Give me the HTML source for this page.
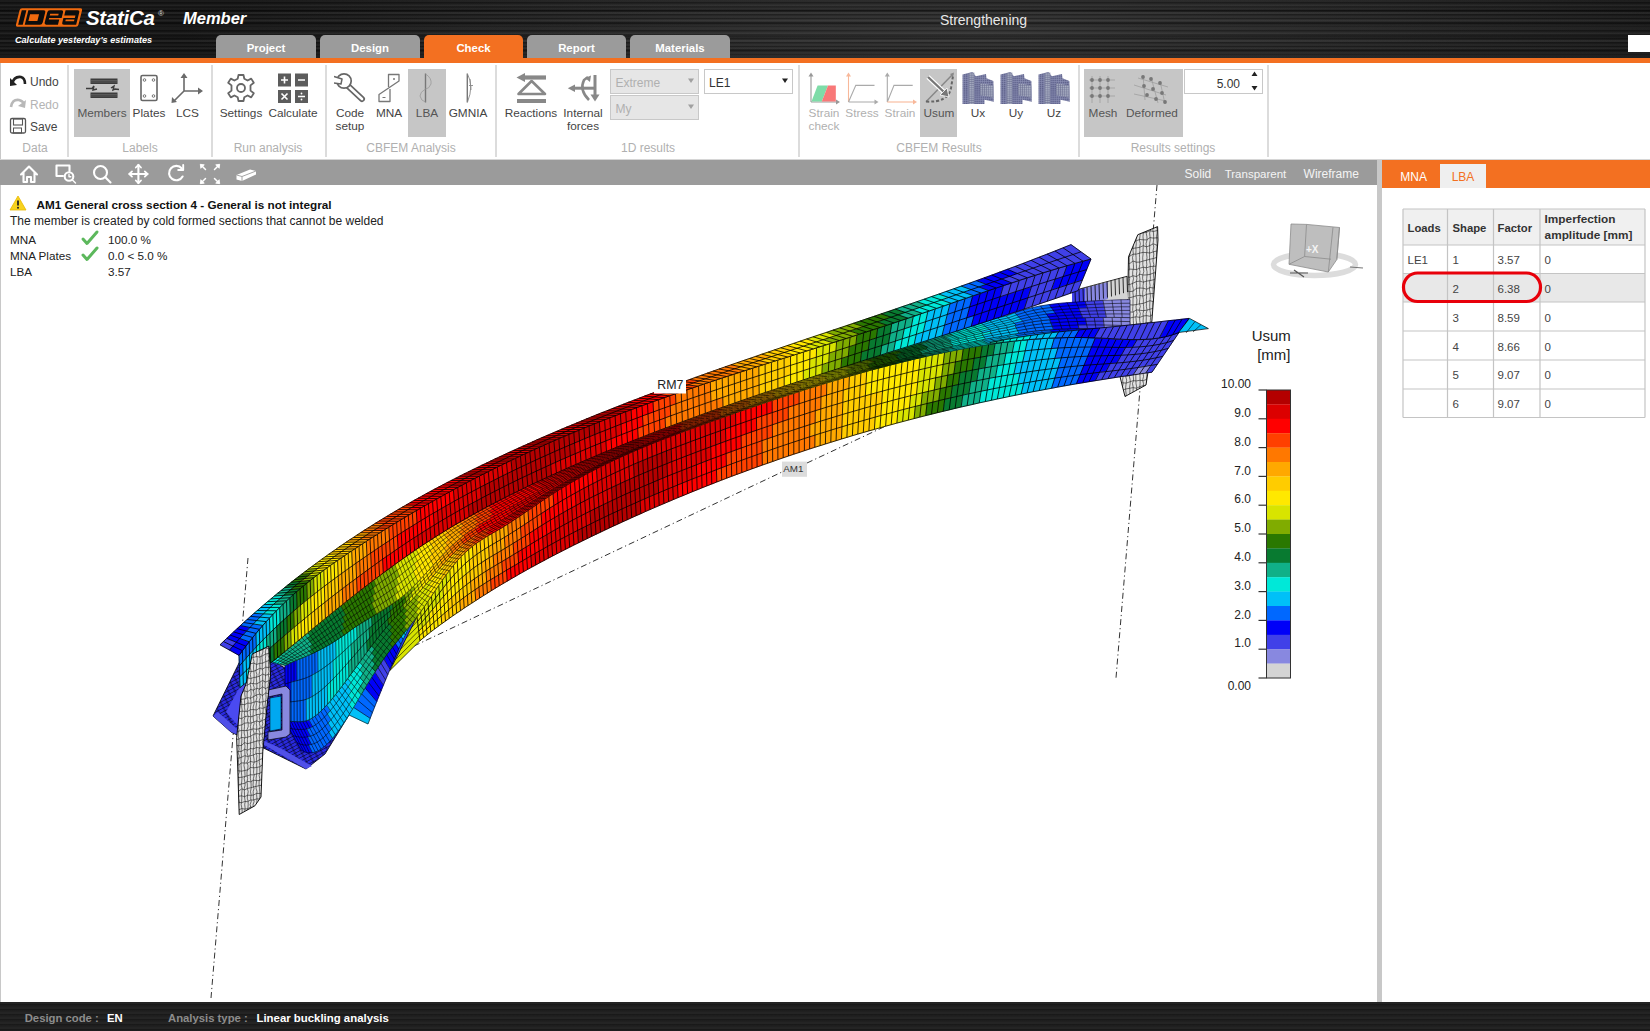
<!DOCTYPE html>
<html><head><meta charset="utf-8"><title>IDEA StatiCa Member</title>
<style>
html,body{margin:0;padding:0;width:1650px;height:1031px;overflow:hidden;background:#fff;}
body{position:relative;font-family:"Liberation Sans", sans-serif;}
.t{position:absolute;white-space:nowrap;}
svg{overflow:visible;}
</style></head><body>
<div style="position:absolute;left:0;top:0;width:1650px;height:58px;background:repeating-linear-gradient(180deg, rgba(0,0,0,0) 0px, rgba(255,255,255,0.05) 1px, rgba(0,0,0,0.25) 2.5px, rgba(0,0,0,0) 4px), repeating-linear-gradient(180deg, rgba(0,0,0,0) 0px, rgba(0,0,0,0) 5px, rgba(255,255,255,0.07) 6px, rgba(0,0,0,0) 7px), repeating-linear-gradient(180deg, rgba(0,0,0,0) 0px, rgba(0,0,0,0) 9px, rgba(0,0,0,0.35) 10.5px, rgba(0,0,0,0) 13px), radial-gradient(ellipse 800px 70px at 980px 30px, #363636 0%, #262626 50%, #161616 100%);"></div>
<div style="position:absolute;left:216px;top:35px;width:100px;height:24px;background:#9b9b9b;border-radius:5px 5px 0 0;"></div>
<div class="t" style="left:-34.0px;width:600px;text-align:center;top:42.6px;font-size:11.4px;line-height:11.4px;color:#fff;font-weight:bold;font-style:normal;">Project</div>
<div style="position:absolute;left:320px;top:35px;width:100px;height:24px;background:#9b9b9b;border-radius:5px 5px 0 0;"></div>
<div class="t" style="left:70.0px;width:600px;text-align:center;top:42.6px;font-size:11.4px;line-height:11.4px;color:#fff;font-weight:bold;font-style:normal;">Design</div>
<div style="position:absolute;left:424px;top:35px;width:99px;height:24px;background:#f37021;border-radius:5px 5px 0 0;"></div>
<div class="t" style="left:173.5px;width:600px;text-align:center;top:42.6px;font-size:11.4px;line-height:11.4px;color:#fff;font-weight:bold;font-style:normal;">Check</div>
<div style="position:absolute;left:527px;top:35px;width:99px;height:24px;background:#9b9b9b;border-radius:5px 5px 0 0;"></div>
<div class="t" style="left:276.5px;width:600px;text-align:center;top:42.6px;font-size:11.4px;line-height:11.4px;color:#fff;font-weight:bold;font-style:normal;">Report</div>
<div style="position:absolute;left:630px;top:35px;width:100px;height:24px;background:#9b9b9b;border-radius:5px 5px 0 0;"></div>
<div class="t" style="left:380.0px;width:600px;text-align:center;top:42.6px;font-size:11.4px;line-height:11.4px;color:#fff;font-weight:bold;font-style:normal;">Materials</div>
<div style="position:absolute;left:0px;top:58px;width:1650px;height:5px;background:#f37021;"></div>
<div style="position:absolute;left:1628px;top:35px;width:22px;height:17px;background:#fff;"></div>
<div class="t" style="left:683.5px;width:600px;text-align:center;top:12.5px;font-size:14px;line-height:14px;color:#e8e8e8;font-weight:normal;font-style:normal;">Strengthening</div>
<svg style="position:absolute;left:0;top:0" width="260" height="58" viewBox="0 0 260 58">
<g transform="matrix(1 0 -0.25 1 2.125 0)">
<rect x="20" y="8.2" width="62.5" height="18.6" rx="2" fill="#f06a0f"/>
<g fill="#0d0d0d">
<rect x="22.2" y="10.3" width="4.6" height="14.4"/>
<path fill-rule="evenodd" d="M28.8 10.3 L44 10.3 Q46.2 10.3 46.2 12.5 L46.2 22.5 Q46.2 24.7 44 24.7 L28.8 24.7 Z M31.5 14.2 L40.5 14.2 L40.5 21 L31.5 21 Z"/>
<path fill-rule="evenodd" d="M50.3 10.3 L62 10.3 Q64 10.3 64 12.3 L64 18 L51.5 18 L51.5 19.5 L62 19.5 L62 24.7 L50.3 24.7 Q48.2 24.7 48.2 22.6 L48.2 12.4 Q48.2 10.3 50.3 10.3 Z M51.5 13.7 L60 13.7 L60 15.6 L51.5 15.6 Z"/>
<path fill-rule="evenodd" d="M66 10.3 L78 10.3 Q80.2 10.3 80.2 12.5 L80.2 24.7 L68 24.7 Q65.8 24.7 65.8 22.5 L65.8 18 L77.2 18 L77.2 15.5 L66 15.5 Z M68.5 19.5 L77.2 19.5 L77.2 21.3 L68.5 21.3 Z"/>
</g>
</g>
</svg>
<div class="t" style="left:86.0px;top:7.8px;font-size:20.5px;line-height:20.5px;color:#fff;font-weight:bold;font-style:italic;letter-spacing:-0.3px;">StatiCa</div>
<div class="t" style="left:158.0px;top:10.0px;font-size:8px;line-height:8px;color:#ddd;font-weight:normal;font-style:normal;">&reg;</div>
<div class="t" style="left:183.0px;top:10.1px;font-size:16.5px;line-height:16.5px;color:#fff;font-weight:bold;font-style:italic;">Member</div>
<div class="t" style="left:15.0px;top:36.0px;font-size:9.1px;line-height:9.1px;color:#fff;font-weight:bold;font-style:italic;">Calculate yesterday&#39;s estimates</div>
<div style="position:absolute;left:0px;top:63px;width:1650px;height:96px;background:#fff;"></div>
<div style="position:absolute;left:0px;top:159px;width:1650px;height:1px;background:#d6d6d6;"></div>
<div style="position:absolute;left:0px;top:63px;width:1px;height:96px;background:#c8c8c8;"></div>
<div style="position:absolute;left:67px;top:65px;width:2px;height:92px;background:#dcdcdc;"></div>
<div style="position:absolute;left:211px;top:65px;width:2px;height:92px;background:#dcdcdc;"></div>
<div style="position:absolute;left:325px;top:65px;width:2px;height:92px;background:#dcdcdc;"></div>
<div style="position:absolute;left:495px;top:65px;width:2px;height:92px;background:#dcdcdc;"></div>
<div style="position:absolute;left:798px;top:65px;width:2px;height:92px;background:#dcdcdc;"></div>
<div style="position:absolute;left:1078px;top:65px;width:2px;height:92px;background:#dcdcdc;"></div>
<div style="position:absolute;left:1267px;top:65px;width:2px;height:92px;background:#dcdcdc;"></div>
<div style="position:absolute;left:74px;top:69px;width:56px;height:68px;background:#c6c6c6;"></div>
<div style="position:absolute;left:408px;top:69px;width:38px;height:68px;background:#c6c6c6;"></div>
<div style="position:absolute;left:920px;top:69px;width:37px;height:68px;background:#c6c6c6;"></div>
<div style="position:absolute;left:1084px;top:69px;width:99px;height:68px;background:#c6c6c6;"></div>
<div class="t" style="left:-265.0px;width:600px;text-align:center;top:141.9px;font-size:12px;line-height:12px;color:#b0b0b0;font-weight:normal;font-style:normal;">Data</div>
<div class="t" style="left:-160.0px;width:600px;text-align:center;top:141.9px;font-size:12px;line-height:12px;color:#b0b0b0;font-weight:normal;font-style:normal;">Labels</div>
<div class="t" style="left:-32.0px;width:600px;text-align:center;top:141.9px;font-size:12px;line-height:12px;color:#b0b0b0;font-weight:normal;font-style:normal;">Run analysis</div>
<div class="t" style="left:111.0px;width:600px;text-align:center;top:141.9px;font-size:12px;line-height:12px;color:#b0b0b0;font-weight:normal;font-style:normal;">CBFEM Analysis</div>
<div class="t" style="left:348.0px;width:600px;text-align:center;top:141.9px;font-size:12px;line-height:12px;color:#b0b0b0;font-weight:normal;font-style:normal;">1D results</div>
<div class="t" style="left:639.0px;width:600px;text-align:center;top:141.9px;font-size:12px;line-height:12px;color:#b0b0b0;font-weight:normal;font-style:normal;">CBFEM Results</div>
<div class="t" style="left:873.0px;width:600px;text-align:center;top:141.9px;font-size:12px;line-height:12px;color:#b0b0b0;font-weight:normal;font-style:normal;">Results settings</div>
<div class="t" style="left:30.0px;top:76.4px;font-size:12px;line-height:12px;color:#444;font-weight:normal;font-style:normal;">Undo</div>
<div class="t" style="left:30.0px;top:98.6px;font-size:12px;line-height:12px;color:#b4b4b4;font-weight:normal;font-style:normal;">Redo</div>
<div class="t" style="left:30.0px;top:121.0px;font-size:12px;line-height:12px;color:#444;font-weight:normal;font-style:normal;">Save</div>
<div class="t" style="left:-198.0px;width:600px;text-align:center;top:107.5px;font-size:11.8px;line-height:11.8px;color:#555;font-weight:normal;font-style:normal;">Members</div>
<div class="t" style="left:-151.0px;width:600px;text-align:center;top:107.5px;font-size:11.8px;line-height:11.8px;color:#444;font-weight:normal;font-style:normal;">Plates</div>
<div class="t" style="left:-112.5px;width:600px;text-align:center;top:107.5px;font-size:11.8px;line-height:11.8px;color:#444;font-weight:normal;font-style:normal;">LCS</div>
<div class="t" style="left:-59.0px;width:600px;text-align:center;top:107.5px;font-size:11.8px;line-height:11.8px;color:#444;font-weight:normal;font-style:normal;">Settings</div>
<div class="t" style="left:-7.0px;width:600px;text-align:center;top:107.5px;font-size:11.8px;line-height:11.8px;color:#444;font-weight:normal;font-style:normal;">Calculate</div>
<div class="t" style="left:89.0px;width:600px;text-align:center;top:107.5px;font-size:11.8px;line-height:11.8px;color:#444;font-weight:normal;font-style:normal;">MNA</div>
<div class="t" style="left:127.0px;width:600px;text-align:center;top:107.5px;font-size:11.8px;line-height:11.8px;color:#555;font-weight:normal;font-style:normal;">LBA</div>
<div class="t" style="left:168.0px;width:600px;text-align:center;top:107.5px;font-size:11.8px;line-height:11.8px;color:#444;font-weight:normal;font-style:normal;">GMNIA</div>
<div class="t" style="left:231.0px;width:600px;text-align:center;top:107.5px;font-size:11.8px;line-height:11.8px;color:#444;font-weight:normal;font-style:normal;">Reactions</div>
<div class="t" style="left:562.0px;width:600px;text-align:center;top:107.5px;font-size:11.8px;line-height:11.8px;color:#b0b0b0;font-weight:normal;font-style:normal;">Stress</div>
<div class="t" style="left:600.0px;width:600px;text-align:center;top:107.5px;font-size:11.8px;line-height:11.8px;color:#b0b0b0;font-weight:normal;font-style:normal;">Strain</div>
<div class="t" style="left:639.0px;width:600px;text-align:center;top:107.5px;font-size:11.8px;line-height:11.8px;color:#555;font-weight:normal;font-style:normal;">Usum</div>
<div class="t" style="left:678.0px;width:600px;text-align:center;top:107.5px;font-size:11.8px;line-height:11.8px;color:#444;font-weight:normal;font-style:normal;">Ux</div>
<div class="t" style="left:716.0px;width:600px;text-align:center;top:107.5px;font-size:11.8px;line-height:11.8px;color:#444;font-weight:normal;font-style:normal;">Uy</div>
<div class="t" style="left:754.0px;width:600px;text-align:center;top:107.5px;font-size:11.8px;line-height:11.8px;color:#444;font-weight:normal;font-style:normal;">Uz</div>
<div class="t" style="left:803.0px;width:600px;text-align:center;top:107.5px;font-size:11.8px;line-height:11.8px;color:#555;font-weight:normal;font-style:normal;">Mesh</div>
<div class="t" style="left:852.0px;width:600px;text-align:center;top:107.5px;font-size:11.8px;line-height:11.8px;color:#555;font-weight:normal;font-style:normal;">Deformed</div>
<div class="t" style="left:50.0px;width:600px;text-align:center;top:107.5px;font-size:11.8px;line-height:11.8px;color:#444;font-weight:normal;font-style:normal;">Code</div>
<div class="t" style="left:50.0px;width:600px;text-align:center;top:120.5px;font-size:11.8px;line-height:11.8px;color:#444;font-weight:normal;font-style:normal;">setup</div>
<div class="t" style="left:283.0px;width:600px;text-align:center;top:107.5px;font-size:11.8px;line-height:11.8px;color:#444;font-weight:normal;font-style:normal;">Internal</div>
<div class="t" style="left:283.0px;width:600px;text-align:center;top:120.5px;font-size:11.8px;line-height:11.8px;color:#444;font-weight:normal;font-style:normal;">forces</div>
<div class="t" style="left:524.0px;width:600px;text-align:center;top:107.5px;font-size:11.8px;line-height:11.8px;color:#b0b0b0;font-weight:normal;font-style:normal;">Strain</div>
<div class="t" style="left:524.0px;width:600px;text-align:center;top:120.5px;font-size:11.8px;line-height:11.8px;color:#b0b0b0;font-weight:normal;font-style:normal;">check</div>
<div style="position:absolute;left:610px;top:69px;width:89px;height:25px;background:#e6e6e6;box-sizing:border-box;border:1px solid #c8c8c8;"></div>
<div style="position:absolute;left:610px;top:95px;width:89px;height:25px;background:#e6e6e6;box-sizing:border-box;border:1px solid #c8c8c8;"></div>
<div style="position:absolute;left:704px;top:69px;width:89px;height:25px;background:#fff;box-sizing:border-box;border:1px solid #c8c8c8;"></div>
<div class="t" style="left:615.5px;top:77.1px;font-size:12px;line-height:12px;color:#b0b0b0;font-weight:normal;font-style:normal;">Extreme</div>
<div class="t" style="left:615.5px;top:103.1px;font-size:12px;line-height:12px;color:#b0b0b0;font-weight:normal;font-style:normal;">My</div>
<div class="t" style="left:709.0px;top:77.1px;font-size:12px;line-height:12px;color:#333;font-weight:normal;font-style:normal;">LE1</div>
<div style="position:absolute;left:1184px;top:69px;width:79px;height:25px;background:#fff;box-sizing:border-box;border:1px solid #c8c8c8;"></div>
<div class="t" style="left:640.0px;width:600px;text-align:right;top:77.6px;font-size:12px;line-height:12px;color:#333;font-weight:normal;font-style:normal;">5.00</div>
<svg style="position:absolute;left:0;top:0" width="1300" height="160" viewBox="0 0 1300 160">
<!-- undo -->
<path d="M12 84 Q14 76 21 77 Q25 78 25 84" fill="none" stroke="#222" stroke-width="2.6"/>
<path d="M10 78 L17 85 L10 86 Z" fill="#222"/>
<!-- redo -->
<path d="M11 107 Q12 99 19 100 Q23 101 24 104" fill="none" stroke="#b8b8b8" stroke-width="2.6"/>
<path d="M26 100 L25 108 L18 106 Z" fill="#b8b8b8"/>
<!-- save -->
<rect x="10.5" y="118.5" width="15" height="14.5" rx="1.5" fill="none" stroke="#555" stroke-width="1.3"/>
<rect x="13.5" y="119" width="9" height="6" fill="none" stroke="#555" stroke-width="1.1"/>
<rect x="13.5" y="128" width="8" height="5" fill="none" stroke="#555" stroke-width="1"/>
<!-- members -->
<rect x="90.5" y="78.5" width="27" height="5.5" fill="#3c3c3c"/>
<rect x="90.5" y="92.5" width="27" height="5.5" fill="#3c3c3c"/>
<path d="M90.5 80.5 L117.5 80.5 M90.5 82 L117.5 82 M90.5 94.5 L117.5 94.5 M90.5 96 L117.5 96" stroke="#777" stroke-width="0.5"/>
<path d="M86 88.5 L92 88.5 L94 86 L93 90 L97 89" stroke="#3c3c3c" stroke-width="1.4" fill="none"/>
<path d="M111 88 L114 86 L113 90 L115 89 L119 89.5" stroke="#3c3c3c" stroke-width="1.4" fill="none"/>
<!-- plates -->
<rect x="141" y="75.5" width="16" height="25" rx="1.5" fill="none" stroke="#666" stroke-width="1.6"/>
<circle cx="144.5" cy="80" r="1.3" fill="none" stroke="#666" stroke-width="0.9"/><circle cx="153.5" cy="80" r="1.3" fill="none" stroke="#666" stroke-width="0.9"/>
<circle cx="144.5" cy="96" r="1.3" fill="none" stroke="#666" stroke-width="0.9"/><circle cx="153.5" cy="96" r="1.3" fill="none" stroke="#666" stroke-width="0.9"/>
<!-- LCS -->
<path d="M184 91 L184 77 M184 91 L199 91 M184 91 L174 101" stroke="#6a6a6a" stroke-width="1.6" fill="none"/>
<path d="M180.5 78 L184 73 L187.5 78 Z M198 87.5 L203 91 L198 94.5 Z M171.5 103 L172 97 L177 102 Z" fill="#6a6a6a"/>
<!-- settings gear -->
<g transform="translate(241 88)">
<path d="M-2.5 -13 L2.5 -13 L3.3 -9.2 L6.6 -7.5 L10.2 -9.4 L12.8 -5.2 L9.5 -2.6 L9.5 2.6 L12.8 5.2 L10.2 9.4 L6.6 7.5 L3.3 9.2 L2.5 13 L-2.5 13 L-3.3 9.2 L-6.6 7.5 L-10.2 9.4 L-12.8 5.2 L-9.5 2.6 L-9.5 -2.6 L-12.8 -5.2 L-10.2 -9.4 L-6.6 -7.5 L-3.3 -9.2 Z" fill="none" stroke="#666" stroke-width="1.8" stroke-linejoin="round"/>
<circle r="4" fill="none" stroke="#666" stroke-width="1.8"/>
</g>
<!-- calculate -->
<g fill="#5c5c5c"><rect x="278" y="73.5" width="13" height="13"/><rect x="295" y="73.5" width="13" height="13"/><rect x="278" y="90" width="13" height="13"/><rect x="295" y="90" width="13" height="13"/></g>
<path d="M284.5 76.5 L284.5 83.5 M281 80 L288 80 M298 80 L305 80 M281.5 93.5 L287.5 99.5 M287.5 93.5 L281.5 99.5 M298 96.5 L305 96.5" stroke="#fff" stroke-width="1.6"/>
<circle cx="301.5" cy="93.5" r="0.9" fill="#fff"/><circle cx="301.5" cy="99.5" r="0.9" fill="#fff"/>
<!-- wrench -->
<path d="M347 85 L362 99" stroke="#666" stroke-width="6" stroke-linecap="round"/>
<path d="M347 85 L362 99" stroke="#fff" stroke-width="2.6" stroke-linecap="round"/>
<circle cx="344" cy="81" r="7.2" fill="#fff" stroke="#666" stroke-width="1.7"/>
<path d="M334 76.5 L342 79 L341 84 L334 83" fill="#fff" stroke="#666" stroke-width="1.5" stroke-linejoin="round"/>
<path d="M333 76 L333 84" stroke="#fff" stroke-width="2"/>
<!-- MNA -->
<path d="M388.5 87 L388.5 74.5 L399 74.5 L399 81 L379 94.5 L379 101.5 L390 101.5 L390 89" fill="none" stroke="#777" stroke-width="1.3" stroke-linejoin="round"/>
<circle cx="394" cy="79" r="1" fill="#777"/><path d="M382.5 97.5 L385.5 97.5" stroke="#777" stroke-width="1"/>
<!-- LBA -->
<path d="M425.5 73.5 L425.5 102.5" stroke="#777" stroke-width="1.4"/>
<path d="M425.5 74 Q432 78 431 84 Q429 89 425.5 89 Q420 92 420 96 Q421 101 425.5 102" fill="none" stroke="#999" stroke-width="0.8"/>
<!-- GMNIA -->
<path d="M467.3 73.5 L467.3 102.5" stroke="#777" stroke-width="1.4"/>
<path d="M467.5 74 Q474 86 467.5 102 M470 79 L471 90 M469 85.5 L473 85.5" fill="none" stroke="#888" stroke-width="0.9"/>
<!-- reactions -->
<path d="M524 77.5 L546 77.5" stroke="#888" stroke-width="4.2"/>
<path d="M516.5 77.5 L525 73 L525 82 Z" fill="#888"/>
<path d="M531.6 81 L518.5 94 L545 94 Z" fill="none" stroke="#888" stroke-width="2.6" stroke-linejoin="round"/>
<rect x="517" y="99" width="29" height="4" fill="#888"/>
<!-- internal forces -->
<path d="M574 88.2 L594 88.2" stroke="#888" stroke-width="3"/>
<path d="M567.8 88.2 L575 84.5 L575 92 Z" fill="#888"/>
<path d="M595 75 L595 96" stroke="#888" stroke-width="3"/>
<path d="M590.5 94.5 L599.5 94.5 L595 101.5 Z" fill="#888"/>
<path d="M589 100 Q579 90 584 80 L588 77" fill="none" stroke="#888" stroke-width="2.6"/>
<path d="M591 75.5 L585 78 L590 82 Z" fill="#888"/>
<!-- dropdown arrows -->
<path d="M688 78.5 L694 78.5 L691 83 Z M688 104.5 L694 104.5 L691 109 Z" fill="#a0a0a0"/>
<path d="M782 78.5 L788 78.5 L785 83 Z" fill="#222"/>
<!-- strain check -->
<path d="M811 102 L811 74 M811 102 L838 102" stroke="#999" stroke-width="1.1" fill="none"/>
<path d="M808.5 76.5 L811 72.5 L813.5 76.5 Z M836 99.5 L840 102 L836 104.5 Z" fill="#999"/>
<path d="M811.5 101.5 L817.6 85.4 L828 85.4 L821.8 101.5 Z" fill="#7edca8"/>
<path d="M821.8 101.5 L828 85.4 L835.8 85.4 L835.8 101.5 Z" fill="#f87878"/>
<!-- stress -->
<path d="M848.5 102 L848.5 74" stroke="#f8b89a" stroke-width="1.1"/>
<path d="M846 76.5 L848.5 72.5 L851 76.5 Z" fill="#f8b89a"/>
<path d="M848.5 102 L876 102 M848.5 102 L855.8 85.4 L874.5 85.4" stroke="#aaa" stroke-width="1.1" fill="none"/>
<path d="M874.5 99.5 L878.5 102 L874.5 104.5 Z" fill="#aaa"/>
<!-- strain -->
<path d="M887.3 102 L887.3 74 M887.3 102 L894 85.4 L912.7 85.4" stroke="#aaa" stroke-width="1.1" fill="none"/>
<path d="M884.8 76.5 L887.3 72.5 L889.8 76.5 Z" fill="#aaa"/>
<path d="M887.3 102 L914 102" stroke="#f8b89a" stroke-width="1.1"/>
<path d="M913 99.5 L917 102 L913 104.5 Z" fill="#f8b89a"/>
<!-- usum -->
<path d="M926 101.8 L953 74" stroke="#888" stroke-width="1.5"/>
<path d="M950 74 L954 72.5 L953 77 Z" fill="#888"/>
<path d="M926 101.5 Q948 103 951 88 L953 76" fill="none" stroke="#666" stroke-width="2" stroke-dasharray="3 2"/>
<path d="M928 77 L946 94" stroke="#fff" stroke-width="4.5"/>
<path d="M928 77 L945 93" stroke="#777" stroke-width="2.4"/>
<path d="M949 97 L940 95 L947 88 Z" fill="#777" stroke="#fff" stroke-width="0.8"/>
<!-- mesh -->
<g stroke="#999" stroke-width="0.7"><path d="M1089 80 L1115 80 M1089 88 L1115 88 M1089 96 L1115 96 M1092 76 L1092 103 M1100 76 L1100 103 M1108 76 L1108 103"/></g>
<g fill="#777"><circle cx="1092" cy="80" r="1.9"/><circle cx="1100" cy="80" r="1.9"/><circle cx="1108" cy="80" r="1.9"/><circle cx="1092" cy="88" r="1.9"/><circle cx="1100" cy="88" r="1.9"/><circle cx="1108" cy="88" r="1.9"/><circle cx="1092" cy="96" r="1.9"/><circle cx="1100" cy="96" r="1.9"/><circle cx="1108" cy="96" r="1.9"/></g>
<!-- deformed -->
<g stroke="#999" stroke-width="0.7"><path d="M1138 78 L1168 87 M1134 85 L1166 95 M1134 94 L1166 101 M1143 75 L1145 100 M1151 77 L1158 103 M1160 81 L1165 104"/></g>
<g fill="#777"><circle cx="1143" cy="77" r="1.9"/><circle cx="1151" cy="79" r="1.9"/><circle cx="1160" cy="83" r="1.9"/><circle cx="1144" cy="86" r="1.9"/><circle cx="1153" cy="89" r="1.9"/><circle cx="1162" cy="93" r="1.9"/><circle cx="1147" cy="95" r="1.9"/><circle cx="1156" cy="99" r="1.9"/><circle cx="1165" cy="102" r="1.9"/></g>
<!-- spinner -->
<path d="M1251.5 76 L1257.5 76 L1254.5 71.5 Z M1251.5 86 L1257.5 86 L1254.5 90.5 Z" fill="#222"/>
</svg>
<svg style="position:absolute;left:957.5px;top:66px" width="40" height="42" viewBox="958 66 40 42"><defs><pattern id="mp962d" width="2.1" height="2.1" patternUnits="userSpaceOnUse"><rect width="2.1" height="2.1" fill="#5c5f88"/><path d="M0 1.6 H2.1 M1.6 0 V2.1" stroke="#8c90b4" stroke-width="0.6"/></pattern><pattern id="mp962l" width="2.1" height="2.1" patternUnits="userSpaceOnUse"><rect width="2.1" height="2.1" fill="#aab0c4"/><path d="M0 1.6 H2.1 M1.6 0 V2.1" stroke="#6a6e90" stroke-width="0.6"/></pattern></defs><path d="M962.5 74.6 L972.3 72.1 L975.9 76.2 L986 74.1 L986.5 78.2 L993.4 81 L993.8 101.8 L984.5 99.8 L984.5 103.9 L962.5 103.9 Z" fill="url(#mp962d)"/><path d="M968.6 73.2 L974.3 72.6 L974.3 103.9 L968.6 103.9 Z" fill="url(#mp962l)"/><path d="M980 83.1 L993.4 85.6 L993.4 97.8 L980 95.3 Z" fill="url(#mp962l)"/></svg>
<svg style="position:absolute;left:995.5px;top:66px" width="40" height="42" viewBox="958 66 40 42"><defs><pattern id="mp1000d" width="2.1" height="2.1" patternUnits="userSpaceOnUse"><rect width="2.1" height="2.1" fill="#5c5f88"/><path d="M0 1.6 H2.1 M1.6 0 V2.1" stroke="#8c90b4" stroke-width="0.6"/></pattern><pattern id="mp1000l" width="2.1" height="2.1" patternUnits="userSpaceOnUse"><rect width="2.1" height="2.1" fill="#aab0c4"/><path d="M0 1.6 H2.1 M1.6 0 V2.1" stroke="#6a6e90" stroke-width="0.6"/></pattern></defs><path d="M962.5 74.6 L972.3 72.1 L975.9 76.2 L986 74.1 L986.5 78.2 L993.4 81 L993.8 101.8 L984.5 99.8 L984.5 103.9 L962.5 103.9 Z" fill="url(#mp1000d)"/><path d="M968.6 73.2 L974.3 72.6 L974.3 103.9 L968.6 103.9 Z" fill="url(#mp1000l)"/><path d="M980 83.1 L993.4 85.6 L993.4 97.8 L980 95.3 Z" fill="url(#mp1000l)"/></svg>
<svg style="position:absolute;left:1033.5px;top:66px" width="40" height="42" viewBox="958 66 40 42"><defs><pattern id="mp1038d" width="2.1" height="2.1" patternUnits="userSpaceOnUse"><rect width="2.1" height="2.1" fill="#5c5f88"/><path d="M0 1.6 H2.1 M1.6 0 V2.1" stroke="#8c90b4" stroke-width="0.6"/></pattern><pattern id="mp1038l" width="2.1" height="2.1" patternUnits="userSpaceOnUse"><rect width="2.1" height="2.1" fill="#aab0c4"/><path d="M0 1.6 H2.1 M1.6 0 V2.1" stroke="#6a6e90" stroke-width="0.6"/></pattern></defs><path d="M962.5 74.6 L972.3 72.1 L975.9 76.2 L986 74.1 L986.5 78.2 L993.4 81 L993.8 101.8 L984.5 99.8 L984.5 103.9 L962.5 103.9 Z" fill="url(#mp1038d)"/><path d="M968.6 73.2 L974.3 72.6 L974.3 103.9 L968.6 103.9 Z" fill="url(#mp1038l)"/><path d="M980 83.1 L993.4 85.6 L993.4 97.8 L980 95.3 Z" fill="url(#mp1038l)"/></svg>
<div style="position:absolute;left:0px;top:160px;width:1377px;height:842px;background:#fff;"></div>
<div style="position:absolute;left:0px;top:160px;width:1377px;height:25px;background:#9b9b9b;"></div>
<div style="position:absolute;left:0px;top:185px;width:1px;height:817px;background:#c8c8c8;"></div>
<div class="t" style="left:1184.6px;top:168.3px;font-size:12px;line-height:12px;color:#f4f4f4;font-weight:normal;font-style:normal;">Solid</div>
<div class="t" style="left:1224.7px;top:168.8px;font-size:11.5px;line-height:11.5px;color:#f4f4f4;font-weight:normal;font-style:normal;">Transparent</div>
<div class="t" style="left:1303.6px;top:168.3px;font-size:12px;line-height:12px;color:#f4f4f4;font-weight:normal;font-style:normal;">Wireframe</div>
<svg style="position:absolute;left:0;top:160px" width="270" height="25" viewBox="0 160 270 25">
<g fill="none" stroke="#fff" stroke-width="2.1" stroke-linejoin="round" stroke-linecap="round">
<path d="M21 174.5 L29 166.5 L37 174.5 M23.5 172.5 L23.5 182 L27 182 L27 177 L31 177 L31 182 L34.5 182 L34.5 172.5"/>
<path d="M63 176 L56.5 176 L56.5 165.5 L69.5 165.5 L69.5 171"/>
<circle cx="69" cy="176.5" r="4.3"/>
<path d="M72.2 179.7 L75.5 183 M69 174.5 L69 176.8 L70.8 176.8" stroke-width="1.4"/>
<circle cx="100.5" cy="172.5" r="6.5"/>
<path d="M105.3 177.3 L110.5 182.5"/>
<path d="M138.4 165 L138.4 183 M129.5 174 L147.5 174"/>
<path d="M135.8 167.5 L138.4 164.8 L141 167.5 M135.8 180.5 L138.4 183.2 L141 180.5 M132 171.4 L129.3 174 L132 176.6 M144.8 171.4 L147.5 174 L144.8 176.6" stroke-width="1.8"/>
<path d="M181.8 168.5 A7.2 7.2 0 1 0 182.6 176.5"/>
<path d="M183.2 165 L183.2 170 L178.2 170" stroke-width="1.9"/>
<path d="M201 165 L205.5 169.5 M219 165 L214.5 169.5 M201 183 L205.5 178.5 M219 183 L214.5 178.5" stroke-width="1.5"/>
</g>
<path d="M200.3 164.3 L204.3 164.8 L200.8 168.3 Z M219.7 164.3 L215.7 164.8 L219.2 168.3 Z M200.3 183.7 L204.3 183.2 L200.8 179.7 Z M219.7 183.7 L215.7 183.2 L219.2 179.7 Z" fill="#fff" stroke="#fff" stroke-width="0.8"/>
<path d="M236.5 175 L250 169.5 L256 171 L256 174.5 L242 181 L236.5 179.5 Z" fill="#fff"/>
<path d="M236.5 175 L242 176.5 L256 171 M242 176.5 L242 181" stroke="#9b9b9b" stroke-width="0.9" fill="none"/>
</svg>
<svg style="position:absolute;left:9px;top:195px" width="18" height="16" viewBox="0 0 18 16">
<path d="M9 1 L17 15 L1 15 Z" fill="#f7d21e" stroke="#e8b800" stroke-width="0.8" stroke-linejoin="round"/>
<path d="M9 5.5 L9 10.5" stroke="#222" stroke-width="1.8"/><circle cx="9" cy="12.8" r="1" fill="#222"/>
</svg>
<div class="t" style="left:36.4px;top:198.9px;font-size:11.75px;line-height:11.75px;color:#111;font-weight:bold;font-style:normal;">AM1 General cross section 4 - General is not integral</div>
<div class="t" style="left:10.0px;top:214.6px;font-size:12px;line-height:12px;color:#222;font-weight:normal;font-style:normal;">The member is created by cold formed sections that cannot be welded</div>
<div class="t" style="left:10.0px;top:233.9px;font-size:11.7px;line-height:11.7px;color:#222;font-weight:normal;font-style:normal;">MNA</div>
<div class="t" style="left:10.0px;top:249.9px;font-size:11.7px;line-height:11.7px;color:#222;font-weight:normal;font-style:normal;">MNA Plates</div>
<div class="t" style="left:10.0px;top:265.9px;font-size:11.7px;line-height:11.7px;color:#222;font-weight:normal;font-style:normal;">LBA</div>
<div class="t" style="left:108.0px;top:233.9px;font-size:11.7px;line-height:11.7px;color:#222;font-weight:normal;font-style:normal;">100.0 %</div>
<div class="t" style="left:108.0px;top:249.9px;font-size:11.7px;line-height:11.7px;color:#222;font-weight:normal;font-style:normal;">0.0 &lt; 5.0 %</div>
<div class="t" style="left:108.0px;top:265.9px;font-size:11.7px;line-height:11.7px;color:#222;font-weight:normal;font-style:normal;">3.57</div>
<svg style="position:absolute;left:80px;top:230px" width="20" height="16" viewBox="0 0 20 16"><path d="M3 9 L7 13.5 L17 2" fill="none" stroke="#5cb85c" stroke-width="3" stroke-linecap="round" stroke-linejoin="round"/></svg>
<svg style="position:absolute;left:80px;top:246px" width="20" height="16" viewBox="0 0 20 16"><path d="M3 9 L7 13.5 L17 2" fill="none" stroke="#5cb85c" stroke-width="3" stroke-linecap="round" stroke-linejoin="round"/></svg>
<svg style="position:absolute;left:1260px;top:210px" width="110" height="80" viewBox="1260 210 110 80">
<ellipse cx="1314.5" cy="264.5" rx="41" ry="11" fill="none" stroke="#dcdcdc" stroke-width="5.5"/>
<path d="M1291 224 L1306.5 224.4 L1339.5 227.5 L1336.8 259.6 L1328.3 272 L1289 264.3 Z" fill="#bebebe" stroke="#8c8c8c" stroke-width="0.8"/>
<path d="M1306.5 224.4 L1304.6 256.5 L1289 264.3 M1304.6 256.5 L1331 259.2 M1336.8 259.6 L1339.5 227.5 M1333 227.3 L1328.3 272" stroke="#8c8c8c" stroke-width="0.8" fill="none"/>
<text x="1306" y="253" font-family="Liberation Sans" font-size="10" fill="#f4f4f4" font-weight="bold">+X</text>
<path d="M1290 273 L1308 273 M1294 270 L1304 277" stroke="#555" stroke-width="1.2"/>
<path d="M1350 267 L1363 268" stroke="#777" stroke-width="1.2"/>
</svg>
<div class="t" style="left:690.8px;width:600px;text-align:right;top:328.4px;font-size:15px;line-height:15px;color:#222;font-weight:normal;font-style:normal;">Usum</div>
<div class="t" style="left:690.5px;width:600px;text-align:right;top:346.5px;font-size:15px;line-height:15px;color:#222;font-weight:normal;font-style:normal;">[mm]</div>
<svg style="position:absolute;left:1250px;top:385px" width="50" height="300" viewBox="1250 385 50 300"><rect x="1266.5" y="390.00" width="24" height="14.6" fill="#b40000"/><rect x="1266.5" y="404.40" width="24" height="14.6" fill="#dc0000"/><rect x="1266.5" y="418.80" width="24" height="14.6" fill="#ff0000"/><rect x="1266.5" y="433.20" width="24" height="14.6" fill="#ff4000"/><rect x="1266.5" y="447.60" width="24" height="14.6" fill="#ff7800"/><rect x="1266.5" y="462.00" width="24" height="14.6" fill="#ffa800"/><rect x="1266.5" y="476.40" width="24" height="14.6" fill="#ffcc00"/><rect x="1266.5" y="490.80" width="24" height="14.6" fill="#ffe800"/><rect x="1266.5" y="505.20" width="24" height="14.6" fill="#d8e400"/><rect x="1266.5" y="519.60" width="24" height="14.6" fill="#80ac00"/><rect x="1266.5" y="534.00" width="24" height="14.6" fill="#2a7800"/><rect x="1266.5" y="548.40" width="24" height="14.6" fill="#087a30"/><rect x="1266.5" y="562.80" width="24" height="14.6" fill="#10b088"/><rect x="1266.5" y="577.20" width="24" height="14.6" fill="#00e8d8"/><rect x="1266.5" y="591.60" width="24" height="14.6" fill="#00c0f8"/><rect x="1266.5" y="606.00" width="24" height="14.6" fill="#0068ff"/><rect x="1266.5" y="620.40" width="24" height="14.6" fill="#0000f8"/><rect x="1266.5" y="634.80" width="24" height="14.6" fill="#4040e8"/><rect x="1266.5" y="649.20" width="24" height="14.6" fill="#8888e0"/><rect x="1266.5" y="663.60" width="24" height="14.6" fill="#d4d4d4"/><rect x="1266.5" y="390" width="24" height="288" fill="none" stroke="#333" stroke-width="1"/><path d="M1258.5 390.0 L1266.5 390.0" stroke="#333" stroke-width="1.2"/><path d="M1258.5 418.8 L1266.5 418.8" stroke="#333" stroke-width="1.2"/><path d="M1258.5 447.6 L1266.5 447.6" stroke="#333" stroke-width="1.2"/><path d="M1258.5 476.4 L1266.5 476.4" stroke="#333" stroke-width="1.2"/><path d="M1258.5 505.2 L1266.5 505.2" stroke="#333" stroke-width="1.2"/><path d="M1258.5 534.0 L1266.5 534.0" stroke="#333" stroke-width="1.2"/><path d="M1258.5 562.8 L1266.5 562.8" stroke="#333" stroke-width="1.2"/><path d="M1258.5 591.6 L1266.5 591.6" stroke="#333" stroke-width="1.2"/><path d="M1258.5 620.4 L1266.5 620.4" stroke="#333" stroke-width="1.2"/><path d="M1258.5 649.2 L1266.5 649.2" stroke="#333" stroke-width="1.2"/><path d="M1258.5 678.0 L1266.5 678.0" stroke="#333" stroke-width="1.2"/></svg>
<div class="t" style="left:651.0px;width:600px;text-align:right;top:378.1px;font-size:12px;line-height:12px;color:#222;font-weight:normal;font-style:normal;">10.00</div>
<div class="t" style="left:651.0px;width:600px;text-align:right;top:406.9px;font-size:12px;line-height:12px;color:#222;font-weight:normal;font-style:normal;">9.0</div>
<div class="t" style="left:651.0px;width:600px;text-align:right;top:435.7px;font-size:12px;line-height:12px;color:#222;font-weight:normal;font-style:normal;">8.0</div>
<div class="t" style="left:651.0px;width:600px;text-align:right;top:464.5px;font-size:12px;line-height:12px;color:#222;font-weight:normal;font-style:normal;">7.0</div>
<div class="t" style="left:651.0px;width:600px;text-align:right;top:493.3px;font-size:12px;line-height:12px;color:#222;font-weight:normal;font-style:normal;">6.0</div>
<div class="t" style="left:651.0px;width:600px;text-align:right;top:522.1px;font-size:12px;line-height:12px;color:#222;font-weight:normal;font-style:normal;">5.0</div>
<div class="t" style="left:651.0px;width:600px;text-align:right;top:550.9px;font-size:12px;line-height:12px;color:#222;font-weight:normal;font-style:normal;">4.0</div>
<div class="t" style="left:651.0px;width:600px;text-align:right;top:579.7px;font-size:12px;line-height:12px;color:#222;font-weight:normal;font-style:normal;">3.0</div>
<div class="t" style="left:651.0px;width:600px;text-align:right;top:608.5px;font-size:12px;line-height:12px;color:#222;font-weight:normal;font-style:normal;">2.0</div>
<div class="t" style="left:651.0px;width:600px;text-align:right;top:637.3px;font-size:12px;line-height:12px;color:#222;font-weight:normal;font-style:normal;">1.0</div>
<div class="t" style="left:651.0px;width:600px;text-align:right;top:679.6px;font-size:12px;line-height:12px;color:#222;font-weight:normal;font-style:normal;">0.00</div>
<div style="position:absolute;left:1377px;top:160px;width:5px;height:842px;background:#c8c8c8;"></div>
<div style="position:absolute;left:1382px;top:160px;width:268px;height:842px;background:#fff;"></div>
<div style="position:absolute;left:1382px;top:160px;width:268px;height:28px;background:#f37021;"></div>
<div style="position:absolute;left:1440px;top:164px;width:46px;height:24px;background:#efefef;"></div>
<div class="t" style="left:1113.7px;width:600px;text-align:center;top:171.1px;font-size:12px;line-height:12px;color:#fff;font-weight:normal;font-style:normal;">MNA</div>
<div class="t" style="left:1163.0px;width:600px;text-align:center;top:171.1px;font-size:12px;line-height:12px;color:#f37021;font-weight:normal;font-style:normal;">LBA</div>
<svg style="position:absolute;left:1395px;top:200px" width="255" height="230" viewBox="1395 200 255 230"><rect x="1403" y="209" width="242" height="36" fill="#f0f0f0"/><rect x="1403" y="273.5" width="242" height="28.5" fill="#e8e8e8"/><path d="M1403 209 L1403 417.5" stroke="#c4c4c4" stroke-width="1.2"/><path d="M1447.5 209 L1447.5 417.5" stroke="#c4c4c4" stroke-width="1.2"/><path d="M1493.5 209 L1493.5 417.5" stroke="#c4c4c4" stroke-width="1.2"/><path d="M1540 209 L1540 417.5" stroke="#c4c4c4" stroke-width="1.2"/><path d="M1645 209 L1645 417.5" stroke="#c4c4c4" stroke-width="1.2"/><path d="M1403 209 L1645 209" stroke="#c4c4c4" stroke-width="1.2"/><path d="M1403 245 L1645 245" stroke="#c4c4c4" stroke-width="1.2"/><path d="M1403 273.5 L1645 273.5" stroke="#c4c4c4" stroke-width="1.2"/><path d="M1403 302 L1645 302" stroke="#c4c4c4" stroke-width="1.2"/><path d="M1403 331 L1645 331" stroke="#c4c4c4" stroke-width="1.2"/><path d="M1403 360 L1645 360" stroke="#c4c4c4" stroke-width="1.2"/><path d="M1403 389 L1645 389" stroke="#c4c4c4" stroke-width="1.2"/><path d="M1403 417.5 L1645 417.5" stroke="#c4c4c4" stroke-width="1.2"/><rect x="1403.5" y="273" width="137" height="28.5" rx="14" fill="none" stroke="#e8000a" stroke-width="3.2"/></svg>
<div class="t" style="left:1407.5px;top:222.6px;font-size:11.3px;line-height:11.3px;color:#333;font-weight:bold;font-style:normal;">Loads</div>
<div class="t" style="left:1452.5px;top:222.6px;font-size:11.3px;line-height:11.3px;color:#333;font-weight:bold;font-style:normal;">Shape</div>
<div class="t" style="left:1497.5px;top:222.6px;font-size:11.3px;line-height:11.3px;color:#333;font-weight:bold;font-style:normal;">Factor</div>
<div class="t" style="left:1544.6px;top:214.1px;font-size:11.8px;line-height:11.8px;color:#333;font-weight:bold;font-style:normal;">Imperfection</div>
<div class="t" style="left:1544.6px;top:229.7px;font-size:11.8px;line-height:11.8px;color:#333;font-weight:bold;font-style:normal;">amplitude [mm]</div>
<div class="t" style="left:1407.5px;top:255.1px;font-size:11.5px;line-height:11.5px;color:#444;font-weight:normal;font-style:normal;">LE1</div>
<div class="t" style="left:1452.5px;top:255.1px;font-size:11.5px;line-height:11.5px;color:#444;font-weight:normal;font-style:normal;">1</div>
<div class="t" style="left:1497.5px;top:255.1px;font-size:11.5px;line-height:11.5px;color:#444;font-weight:normal;font-style:normal;">3.57</div>
<div class="t" style="left:1544.6px;top:255.1px;font-size:11.5px;line-height:11.5px;color:#444;font-weight:normal;font-style:normal;">0</div>
<div class="t" style="left:1452.5px;top:283.9px;font-size:11.5px;line-height:11.5px;color:#444;font-weight:normal;font-style:normal;">2</div>
<div class="t" style="left:1497.5px;top:283.9px;font-size:11.5px;line-height:11.5px;color:#444;font-weight:normal;font-style:normal;">6.38</div>
<div class="t" style="left:1544.6px;top:283.9px;font-size:11.5px;line-height:11.5px;color:#444;font-weight:normal;font-style:normal;">0</div>
<div class="t" style="left:1452.5px;top:312.7px;font-size:11.5px;line-height:11.5px;color:#444;font-weight:normal;font-style:normal;">3</div>
<div class="t" style="left:1497.5px;top:312.7px;font-size:11.5px;line-height:11.5px;color:#444;font-weight:normal;font-style:normal;">8.59</div>
<div class="t" style="left:1544.6px;top:312.7px;font-size:11.5px;line-height:11.5px;color:#444;font-weight:normal;font-style:normal;">0</div>
<div class="t" style="left:1452.5px;top:341.5px;font-size:11.5px;line-height:11.5px;color:#444;font-weight:normal;font-style:normal;">4</div>
<div class="t" style="left:1497.5px;top:341.5px;font-size:11.5px;line-height:11.5px;color:#444;font-weight:normal;font-style:normal;">8.66</div>
<div class="t" style="left:1544.6px;top:341.5px;font-size:11.5px;line-height:11.5px;color:#444;font-weight:normal;font-style:normal;">0</div>
<div class="t" style="left:1452.5px;top:370.3px;font-size:11.5px;line-height:11.5px;color:#444;font-weight:normal;font-style:normal;">5</div>
<div class="t" style="left:1497.5px;top:370.3px;font-size:11.5px;line-height:11.5px;color:#444;font-weight:normal;font-style:normal;">9.07</div>
<div class="t" style="left:1544.6px;top:370.3px;font-size:11.5px;line-height:11.5px;color:#444;font-weight:normal;font-style:normal;">0</div>
<div class="t" style="left:1452.5px;top:399.1px;font-size:11.5px;line-height:11.5px;color:#444;font-weight:normal;font-style:normal;">6</div>
<div class="t" style="left:1497.5px;top:399.1px;font-size:11.5px;line-height:11.5px;color:#444;font-weight:normal;font-style:normal;">9.07</div>
<div class="t" style="left:1544.6px;top:399.1px;font-size:11.5px;line-height:11.5px;color:#444;font-weight:normal;font-style:normal;">0</div>
<div style="position:absolute;left:0;top:1002px;width:1650px;height:29px;background:repeating-linear-gradient(180deg, rgba(255,255,255,0.0) 0px, rgba(255,255,255,0.07) 1px, rgba(0,0,0,0.0) 2px, rgba(0,0,0,0.2) 3px, rgba(255,255,255,0.04) 4px, rgba(0,0,0,0) 5px), #1c1c1c;"></div>
<div class="t" style="left:24.7px;top:1013.2px;font-size:11.3px;line-height:11.3px;color:#8c8c8c;font-weight:bold;font-style:normal;">Design code :</div>
<div class="t" style="left:107.0px;top:1013.2px;font-size:11.3px;line-height:11.3px;color:#fff;font-weight:bold;font-style:normal;">EN</div>
<div class="t" style="left:168.0px;top:1013.2px;font-size:11.3px;line-height:11.3px;color:#8c8c8c;font-weight:bold;font-style:normal;">Analysis type :</div>
<div class="t" style="left:256.5px;top:1013.1px;font-size:11.4px;line-height:11.4px;color:#fff;font-weight:bold;font-style:normal;">Linear buckling analysis</div>
<svg style="position:absolute;left:0;top:0" width="1377" height="1002" viewBox="0 0 1377 1002"><defs>
<pattern id="wf" width="3.2" height="6.5" patternUnits="userSpaceOnUse" patternTransform="skewY(-8)">
<rect width="3.2" height="6.5" fill="#dedede"/>
<path d="M0.4 0 L0.8 6.5 M0 3.2 L3.2 2.6 M0 6.3 L3.2 5.9" stroke="#111" stroke-width="0.55" fill="none"/>
</pattern>
<pattern id="wf2" width="4" height="5" patternUnits="userSpaceOnUse" patternTransform="rotate(-12)">
<rect width="4" height="5" fill="#d6d6d6"/>
<path d="M0.5 0 L1.2 5 M0 2.5 L4 1.8 M2.5 0 L3.2 2.2" stroke="#111" stroke-width="0.55" fill="none"/>
</pattern>
<pattern id="hb" width="6" height="3.2" patternUnits="userSpaceOnUse" patternTransform="rotate(-28)">
<path d="M0 0.3 L6 0.3 M3 0 L3 3.2" stroke="#000" stroke-width="0.6" fill="none"/>
</pattern>
</defs><g fill="none" stroke="#333" stroke-width="1" stroke-dasharray="6 3 1.2 3"><path d="M248 558 L211 998"/><path d="M1157 185 L1116 678"/><path d="M414 646 L782 472"/><path d="M807 463 L888 425"/></g><g stroke-width="0.5" stroke-linejoin="round"><clipPath id="cpr"><path d="M1137.8 234.7 L1157.6 226.6 L1158.0 240.0 L1151.8 322.0 L1148.0 372.0 L1146.0 385.0 L1125.0 396.5 L1120.0 376.7 L1127.3 319.7 L1128.5 256.8Z"/></clipPath><g clip-path="url(#cpr)"><path d="M1137.8 234.7 L1157.6 226.6 L1158.0 240.0 L1151.8 322.0 L1148.0 372.0 L1146.0 385.0 L1125.0 396.5 L1120.0 376.7 L1127.3 319.7 L1128.5 256.8Z" fill="#e2e2e2" stroke="none"/><path d="M1116.1 222.6 L1116.2 226.1 L1115.7 229.6 L1116.0 233.1 L1116.5 236.6 L1116.5 240.1 L1115.6 243.6 L1115.6 247.1 L1115.5 250.6 L1115.9 254.1 L1115.4 257.6 L1115.9 261.1 L1116.2 264.6 L1115.7 268.1 L1116.2 271.6 L1116.1 275.1 L1115.4 278.6 L1116.1 282.1 L1115.7 285.6 L1115.9 289.1 L1115.7 292.6 L1116.2 296.1 L1115.9 299.6 L1115.6 303.1 L1116.1 306.6 L1116.3 310.1 L1115.8 313.6 L1115.7 317.1 L1115.9 320.6 L1116.5 324.1 L1116.6 327.6 L1116.2 331.1 L1116.5 334.6 L1116.4 338.1 L1115.9 341.6 L1115.5 345.1 L1116.2 348.6 L1116.1 352.1 L1115.8 355.6 L1115.7 359.1 L1115.9 362.6 L1116.0 366.1 L1115.7 369.6 L1115.8 373.1 L1115.9 376.6 L1116.4 380.1 L1116.1 383.6 L1115.7 387.1 L1115.7 390.6 L1115.9 394.1 L1115.6 397.6 M1119.0 222.6 L1119.4 226.1 L1118.9 229.6 L1119.4 233.1 L1119.2 236.6 L1119.6 240.1 L1119.7 243.6 L1119.6 247.1 L1119.6 250.6 L1119.2 254.1 L1119.6 257.6 L1119.2 261.1 L1119.5 264.6 L1119.2 268.1 L1119.3 271.6 L1118.9 275.1 L1119.1 278.6 L1120.0 282.1 L1119.1 285.6 L1119.6 289.1 L1119.6 292.6 L1119.7 296.1 L1119.4 299.6 L1119.5 303.1 L1118.9 306.6 L1118.9 310.1 L1119.0 313.6 L1119.0 317.1 L1118.9 320.6 L1119.0 324.1 L1119.5 327.6 L1119.0 331.1 L1119.9 334.6 L1119.6 338.1 L1119.4 341.6 L1119.6 345.1 L1119.1 348.6 L1119.9 352.1 L1119.8 355.6 L1119.7 359.1 L1119.4 362.6 L1119.8 366.1 L1119.7 369.6 L1119.6 373.1 L1119.9 376.6 L1119.6 380.1 L1119.2 383.6 L1119.5 387.1 L1119.0 390.6 L1119.0 394.1 L1119.7 397.6 M1123.1 222.6 L1123.4 226.1 L1123.2 229.6 L1122.9 233.1 L1122.3 236.6 L1122.8 240.1 L1123.3 243.6 L1123.1 247.1 L1122.8 250.6 L1122.7 254.1 L1122.5 257.6 L1122.4 261.1 L1122.3 264.6 L1123.3 268.1 L1123.0 271.6 L1122.4 275.1 L1122.7 278.6 L1122.3 282.1 L1122.5 285.6 L1123.1 289.1 L1123.0 292.6 L1122.8 296.1 L1122.5 299.6 L1123.0 303.1 L1123.3 306.6 L1122.7 310.1 L1122.3 313.6 L1122.3 317.1 L1122.3 320.6 L1123.4 324.1 L1122.8 327.6 L1123.2 331.1 L1122.4 334.6 L1122.5 338.1 L1123.0 341.6 L1123.3 345.1 L1122.6 348.6 L1122.3 352.1 L1123.2 355.6 L1122.5 359.1 L1123.1 362.6 L1122.4 366.1 L1123.0 369.6 L1123.2 373.1 L1123.1 376.6 L1122.6 380.1 L1123.1 383.6 L1122.4 387.1 L1122.6 390.6 L1122.7 394.1 L1123.3 397.6 M1125.8 222.6 L1126.7 226.1 L1126.6 229.6 L1126.8 233.1 L1126.0 236.6 L1125.8 240.1 L1125.9 243.6 L1126.6 247.1 L1126.8 250.6 L1126.4 254.1 L1126.2 257.6 L1125.9 261.1 L1126.6 264.6 L1126.6 268.1 L1125.7 271.6 L1125.9 275.1 L1126.6 278.6 L1126.6 282.1 L1126.0 285.6 L1125.9 289.1 L1126.1 292.6 L1126.2 296.1 L1125.7 299.6 L1126.6 303.1 L1126.2 306.6 L1126.5 310.1 L1125.9 313.6 L1126.8 317.1 L1126.5 320.6 L1126.0 324.1 L1126.7 327.6 L1126.4 331.1 L1126.6 334.6 L1125.7 338.1 L1125.7 341.6 L1126.5 345.1 L1126.0 348.6 L1126.2 352.1 L1125.8 355.6 L1126.8 359.1 L1126.2 362.6 L1126.6 366.1 L1125.7 369.6 L1126.2 373.1 L1125.7 376.6 L1126.7 380.1 L1126.1 383.6 L1125.7 387.1 L1125.7 390.6 L1126.2 394.1 L1125.7 397.6 M1129.2 222.6 L1129.5 226.1 L1129.6 229.6 L1129.7 233.1 L1129.7 236.6 L1129.4 240.1 L1129.7 243.6 L1129.2 247.1 L1129.3 250.6 L1130.0 254.1 L1129.2 257.6 L1129.3 261.1 L1129.3 264.6 L1129.6 268.1 L1129.0 271.6 L1129.0 275.1 L1129.6 278.6 L1129.2 282.1 L1129.8 285.6 L1130.0 289.1 L1129.7 292.6 L1129.8 296.1 L1129.5 299.6 L1129.1 303.1 L1129.5 306.6 L1129.4 310.1 L1129.7 313.6 L1129.2 317.1 L1129.3 320.6 L1130.0 324.1 L1129.3 327.6 L1129.5 331.1 L1130.1 334.6 L1129.3 338.1 L1129.2 341.6 L1129.8 345.1 L1129.7 348.6 L1129.7 352.1 L1129.1 355.6 L1129.5 359.1 L1129.0 362.6 L1129.3 366.1 L1129.8 369.6 L1129.1 373.1 L1129.4 376.6 L1130.2 380.1 L1130.2 383.6 L1129.6 387.1 L1129.9 390.6 L1129.8 394.1 L1129.6 397.6 M1133.4 222.6 L1132.6 226.1 L1133.4 229.6 L1132.5 233.1 L1133.4 236.6 L1133.2 240.1 L1132.9 243.6 L1133.2 247.1 L1133.0 250.6 L1133.3 254.1 L1132.5 257.6 L1133.0 261.1 L1133.4 264.6 L1133.5 268.1 L1132.7 271.6 L1132.7 275.1 L1133.5 278.6 L1132.8 282.1 L1132.5 285.6 L1133.3 289.1 L1132.9 292.6 L1133.3 296.1 L1133.0 299.6 L1133.0 303.1 L1132.9 306.6 L1132.7 310.1 L1133.5 313.6 L1133.2 317.1 L1133.3 320.6 L1133.5 324.1 L1132.7 327.6 L1133.5 331.1 L1133.4 334.6 L1133.0 338.1 L1133.1 341.6 L1132.5 345.1 L1133.3 348.6 L1132.6 352.1 L1133.0 355.6 L1132.6 359.1 L1132.5 362.6 L1133.1 366.1 L1133.0 369.6 L1133.2 373.1 L1133.3 376.6 L1133.6 380.1 L1132.5 383.6 L1133.2 387.1 L1133.1 390.6 L1133.2 394.1 L1133.1 397.6 M1136.5 222.6 L1136.8 226.1 L1136.3 229.6 L1136.4 233.1 L1136.6 236.6 L1135.9 240.1 L1136.3 243.6 L1135.9 247.1 L1136.0 250.6 L1135.8 254.1 L1136.1 257.6 L1136.1 261.1 L1136.4 264.6 L1136.5 268.1 L1136.8 271.6 L1136.4 275.1 L1136.9 278.6 L1136.3 282.1 L1136.7 285.6 L1136.5 289.1 L1136.5 292.6 L1136.1 296.1 L1136.9 299.6 L1136.7 303.1 L1136.0 306.6 L1136.4 310.1 L1137.0 313.6 L1135.9 317.1 L1136.2 320.6 L1136.7 324.1 L1135.8 327.6 L1136.7 331.1 L1136.5 334.6 L1136.7 338.1 L1136.5 341.6 L1136.9 345.1 L1136.2 348.6 L1136.5 352.1 L1135.9 355.6 L1136.5 359.1 L1136.3 362.6 L1137.0 366.1 L1136.9 369.6 L1136.0 373.1 L1135.8 376.6 L1135.9 380.1 L1136.0 383.6 L1136.7 387.1 L1136.5 390.6 L1136.4 394.1 L1136.4 397.6 M1139.2 222.6 L1139.7 226.1 L1140.4 229.6 L1140.2 233.1 L1139.9 236.6 L1139.4 240.1 L1140.3 243.6 L1139.7 247.1 L1139.9 250.6 L1139.4 254.1 L1139.6 257.6 L1139.6 261.1 L1139.7 264.6 L1139.2 268.1 L1140.0 271.6 L1139.4 275.1 L1139.9 278.6 L1139.9 282.1 L1140.0 285.6 L1139.6 289.1 L1139.6 292.6 L1140.1 296.1 L1139.7 299.6 L1139.4 303.1 L1140.3 306.6 L1139.2 310.1 L1140.3 313.6 L1139.6 317.1 L1139.7 320.6 L1140.4 324.1 L1139.7 327.6 L1140.1 331.1 L1139.7 334.6 L1140.3 338.1 L1140.1 341.6 L1139.8 345.1 L1139.3 348.6 L1139.6 352.1 L1139.8 355.6 L1139.5 359.1 L1139.8 362.6 L1139.5 366.1 L1139.8 369.6 L1139.8 373.1 L1140.0 376.6 L1140.1 380.1 L1140.1 383.6 L1139.7 387.1 L1139.7 390.6 L1140.2 394.1 L1139.6 397.6 M1143.5 222.6 L1143.8 226.1 L1143.7 229.6 L1143.3 233.1 L1143.0 236.6 L1143.3 240.1 L1143.4 243.6 L1143.2 247.1 L1143.0 250.6 L1143.1 254.1 L1142.7 257.6 L1142.9 261.1 L1142.8 264.6 L1143.4 268.1 L1143.8 271.6 L1142.8 275.1 L1142.6 278.6 L1143.5 282.1 L1143.0 285.6 L1143.2 289.1 L1142.7 292.6 L1142.8 296.1 L1143.4 299.6 L1143.3 303.1 L1143.6 306.6 L1143.8 310.1 L1143.0 313.6 L1143.3 317.1 L1143.1 320.6 L1143.2 324.1 L1143.1 327.6 L1143.8 331.1 L1143.3 334.6 L1142.8 338.1 L1143.4 341.6 L1143.8 345.1 L1143.7 348.6 L1143.3 352.1 L1142.6 355.6 L1143.6 359.1 L1143.7 362.6 L1143.5 366.1 L1143.1 369.6 L1143.1 373.1 L1143.5 376.6 L1142.7 380.1 L1143.5 383.6 L1143.2 387.1 L1142.7 390.6 L1143.6 394.1 L1143.1 397.6 M1146.1 222.6 L1146.2 226.1 L1147.0 229.6 L1146.2 233.1 L1146.9 236.6 L1147.0 240.1 L1146.1 243.6 L1146.5 247.1 L1146.9 250.6 L1146.6 254.1 L1147.0 257.6 L1146.5 261.1 L1146.8 264.6 L1146.3 268.1 L1147.0 271.6 L1147.0 275.1 L1146.7 278.6 L1146.4 282.1 L1146.4 285.6 L1146.7 289.1 L1146.2 292.6 L1146.6 296.1 L1146.4 299.6 L1146.4 303.1 L1146.4 306.6 L1147.0 310.1 L1146.2 313.6 L1146.3 317.1 L1146.2 320.6 L1146.0 324.1 L1146.5 327.6 L1147.0 331.1 L1147.1 334.6 L1146.6 338.1 L1146.5 341.6 L1147.0 345.1 L1146.6 348.6 L1146.7 352.1 L1146.8 355.6 L1146.1 359.1 L1147.0 362.6 L1146.1 366.1 L1146.6 369.6 L1147.1 373.1 L1146.7 376.6 L1146.4 380.1 L1146.9 383.6 L1147.1 387.1 L1146.7 390.6 L1146.1 394.1 L1147.1 397.6 M1149.4 222.6 L1150.2 226.1 L1150.5 229.6 L1149.6 233.1 L1150.0 236.6 L1150.2 240.1 L1149.6 243.6 L1149.7 247.1 L1149.5 250.6 L1149.6 254.1 L1149.5 257.6 L1149.7 261.1 L1150.3 264.6 L1150.2 268.1 L1150.3 271.6 L1150.2 275.1 L1150.4 278.6 L1149.6 282.1 L1150.1 285.6 L1149.4 289.1 L1150.0 292.6 L1150.4 296.1 L1150.0 299.6 L1149.8 303.1 L1149.7 306.6 L1149.9 310.1 L1150.5 313.6 L1150.6 317.1 L1150.3 320.6 L1150.6 324.1 L1150.3 327.6 L1149.7 331.1 L1149.9 334.6 L1150.3 338.1 L1150.3 341.6 L1150.2 345.1 L1150.0 348.6 L1149.6 352.1 L1150.6 355.6 L1149.7 359.1 L1150.6 362.6 L1149.6 366.1 L1150.6 369.6 L1149.9 373.1 L1150.4 376.6 L1149.4 380.1 L1149.9 383.6 L1149.7 387.1 L1150.2 390.6 L1150.2 394.1 L1150.0 397.6 M1153.6 222.6 L1154.0 226.1 L1152.9 229.6 L1153.5 233.1 L1153.6 236.6 L1153.6 240.1 L1153.1 243.6 L1153.8 247.1 L1153.1 250.6 L1153.8 254.1 L1153.4 257.6 L1153.0 261.1 L1153.8 264.6 L1152.9 268.1 L1153.8 271.6 L1153.5 275.1 L1153.9 278.6 L1153.8 282.1 L1153.3 285.6 L1153.0 289.1 L1153.1 292.6 L1152.8 296.1 L1153.6 299.6 L1152.9 303.1 L1153.0 306.6 L1153.1 310.1 L1153.3 313.6 L1153.6 317.1 L1153.3 320.6 L1153.4 324.1 L1152.9 327.6 L1153.2 331.1 L1153.0 334.6 L1153.7 338.1 L1152.8 341.6 L1153.5 345.1 L1153.6 348.6 L1153.4 352.1 L1152.9 355.6 L1153.1 359.1 L1153.1 362.6 L1153.1 366.1 L1153.1 369.6 L1154.0 373.1 L1153.7 376.6 L1153.9 380.1 L1153.7 383.6 L1153.2 387.1 L1153.9 390.6 L1153.4 394.1 L1153.0 397.6 M1157.1 222.6 L1156.5 226.1 L1157.2 229.6 L1157.1 233.1 L1156.5 236.6 L1156.8 240.1 L1157.1 243.6 L1157.0 247.1 L1156.8 250.6 L1156.5 254.1 L1156.6 257.6 L1157.0 261.1 L1156.7 264.6 L1157.1 268.1 L1157.0 271.6 L1156.6 275.1 L1156.3 278.6 L1157.0 282.1 L1156.6 285.6 L1156.9 289.1 L1156.3 292.6 L1156.4 296.1 L1156.7 299.6 L1157.0 303.1 L1156.3 306.6 L1157.1 310.1 L1157.2 313.6 L1157.0 317.1 L1157.1 320.6 L1156.5 324.1 L1156.3 327.6 L1156.6 331.1 L1156.4 334.6 L1156.7 338.1 L1157.1 341.6 L1156.5 345.1 L1157.2 348.6 L1156.7 352.1 L1156.4 355.6 L1157.0 359.1 L1156.7 362.6 L1156.6 366.1 L1156.8 369.6 L1157.4 373.1 L1157.1 376.6 L1156.6 380.1 L1157.3 383.6 L1156.4 387.1 L1156.7 390.6 L1156.6 394.1 L1157.4 397.6 M1159.6 222.6 L1160.4 226.1 L1160.2 229.6 L1159.8 233.1 L1160.4 236.6 L1160.6 240.1 L1160.5 243.6 L1159.7 247.1 L1160.6 250.6 L1160.0 254.1 L1160.6 257.6 L1160.3 261.1 L1159.7 264.6 L1160.5 268.1 L1160.3 271.6 L1160.1 275.1 L1160.4 278.6 L1160.1 282.1 L1159.6 285.6 L1160.7 289.1 L1159.9 292.6 L1159.9 296.1 L1159.7 299.6 L1160.5 303.1 L1160.7 306.6 L1160.2 310.1 L1160.6 313.6 L1160.0 317.1 L1160.1 320.6 L1160.0 324.1 L1160.0 327.6 L1160.3 331.1 L1160.0 334.6 L1159.7 338.1 L1160.4 341.6 L1160.0 345.1 L1160.1 348.6 L1159.8 352.1 L1159.7 355.6 L1160.4 359.1 L1160.1 362.6 L1160.7 366.1 L1159.6 369.6 L1160.6 373.1 L1159.6 376.6 L1159.8 380.1 L1159.6 383.6 L1160.2 387.1 L1160.0 390.6 L1160.0 394.1 L1160.8 397.6 M1116.0 222.8 L1119.4 223.1 L1122.8 222.5 L1126.2 220.7 L1129.6 220.9 L1133.0 219.3 L1136.4 219.2 L1139.8 219.5 L1143.2 218.7 L1146.6 217.0 L1150.0 216.5 L1153.4 217.6 L1156.8 217.0 L1160.2 216.3 M1116.0 228.9 L1119.4 229.8 L1122.8 228.8 L1126.2 227.2 L1129.6 226.8 L1133.0 227.3 L1136.4 227.7 L1139.8 226.2 L1143.2 225.0 L1146.6 225.5 L1150.0 223.8 L1153.4 224.3 L1156.8 223.3 L1160.2 221.8 M1116.0 236.6 L1119.4 236.1 L1122.8 236.6 L1126.2 235.6 L1129.6 234.1 L1133.0 234.4 L1136.4 232.9 L1139.8 233.4 L1143.2 232.8 L1146.6 232.3 L1150.0 230.7 L1153.4 231.5 L1156.8 230.6 L1160.2 230.6 M1116.0 242.5 L1119.4 243.6 L1122.8 243.7 L1126.2 242.3 L1129.6 240.7 L1133.0 242.1 L1136.4 240.7 L1139.8 239.5 L1143.2 239.8 L1146.6 239.9 L1150.0 237.6 L1153.4 238.1 L1156.8 237.8 L1160.2 238.0 M1116.0 249.5 L1119.4 250.1 L1122.8 250.1 L1126.2 249.5 L1129.6 249.4 L1133.0 248.4 L1136.4 247.9 L1139.8 247.3 L1143.2 245.7 L1146.6 246.9 L1150.0 245.5 L1153.4 243.8 L1156.8 245.2 L1160.2 244.4 M1116.0 258.0 L1119.4 256.0 L1122.8 257.1 L1126.2 255.7 L1129.6 256.3 L1133.0 254.2 L1136.4 254.1 L1139.8 253.1 L1143.2 252.4 L1146.6 252.6 L1150.0 253.0 L1153.4 251.8 L1156.8 251.0 L1160.2 252.0 M1116.0 265.1 L1119.4 265.2 L1122.8 263.1 L1126.2 262.3 L1129.6 263.7 L1133.0 261.0 L1136.4 262.2 L1139.8 262.1 L1143.2 261.0 L1146.6 260.2 L1150.0 259.2 L1153.4 258.5 L1156.8 257.4 L1160.2 257.7 M1116.0 271.6 L1119.4 270.5 L1122.8 271.7 L1126.2 271.3 L1129.6 269.1 L1133.0 269.3 L1136.4 269.5 L1139.8 268.2 L1143.2 267.2 L1146.6 267.8 L1150.0 266.6 L1153.4 266.3 L1156.8 266.1 L1160.2 264.5 M1116.0 279.0 L1119.4 277.5 L1122.8 277.9 L1126.2 276.5 L1129.6 277.3 L1133.0 275.7 L1136.4 276.6 L1139.8 274.2 L1143.2 275.0 L1146.6 274.9 L1150.0 274.4 L1153.4 273.0 L1156.8 272.6 L1160.2 271.5 M1116.0 286.5 L1119.4 285.7 L1122.8 284.6 L1126.2 284.1 L1129.6 284.6 L1133.0 283.2 L1136.4 281.6 L1139.8 281.1 L1143.2 282.2 L1146.6 281.1 L1150.0 280.6 L1153.4 279.8 L1156.8 278.3 L1160.2 279.7 M1116.0 292.3 L1119.4 292.0 L1122.8 291.4 L1126.2 290.2 L1129.6 291.7 L1133.0 291.2 L1136.4 288.4 L1139.8 288.0 L1143.2 288.2 L1146.6 289.2 L1150.0 287.5 L1153.4 288.0 L1156.8 286.1 L1160.2 286.0 M1116.0 300.4 L1119.4 299.5 L1122.8 298.1 L1126.2 298.0 L1129.6 297.9 L1133.0 296.8 L1136.4 295.8 L1139.8 295.4 L1143.2 296.1 L1146.6 294.3 L1150.0 293.7 L1153.4 293.5 L1156.8 294.7 L1160.2 294.1 M1116.0 306.6 L1119.4 305.4 L1122.8 305.4 L1126.2 306.0 L1129.6 304.8 L1133.0 305.0 L1136.4 304.5 L1139.8 303.8 L1143.2 303.4 L1146.6 302.0 L1150.0 300.7 L1153.4 301.7 L1156.8 301.7 L1160.2 300.4 M1116.0 313.0 L1119.4 314.1 L1122.8 313.6 L1126.2 313.1 L1129.6 312.0 L1133.0 312.1 L1136.4 309.9 L1139.8 310.2 L1143.2 310.7 L1146.6 310.2 L1150.0 309.2 L1153.4 308.2 L1156.8 307.8 L1160.2 306.7 M1116.0 319.9 L1119.4 321.0 L1122.8 319.8 L1126.2 318.7 L1129.6 318.1 L1133.0 317.3 L1136.4 316.8 L1139.8 317.4 L1143.2 316.0 L1146.6 315.6 L1150.0 316.3 L1153.4 314.0 L1156.8 315.6 L1160.2 313.8 M1116.0 328.4 L1119.4 327.9 L1122.8 327.0 L1126.2 325.0 L1129.6 325.9 L1133.0 324.9 L1136.4 324.1 L1139.8 324.1 L1143.2 323.9 L1146.6 322.7 L1150.0 322.3 L1153.4 321.3 L1156.8 320.7 L1160.2 321.3 M1116.0 335.7 L1119.4 333.1 L1122.8 334.0 L1126.2 333.3 L1129.6 333.2 L1133.0 331.6 L1136.4 331.0 L1139.8 330.5 L1143.2 331.3 L1146.6 330.8 L1150.0 330.3 L1153.4 328.5 L1156.8 328.2 L1160.2 327.5 M1116.0 342.0 L1119.4 340.5 L1122.8 341.2 L1126.2 340.8 L1129.6 339.6 L1133.0 338.3 L1136.4 338.0 L1139.8 338.2 L1143.2 338.1 L1146.6 336.3 L1150.0 336.9 L1153.4 337.0 L1156.8 336.0 L1160.2 335.9 M1116.0 349.7 L1119.4 347.5 L1122.8 346.9 L1126.2 348.0 L1129.6 346.3 L1133.0 345.1 L1136.4 345.8 L1139.8 345.0 L1143.2 343.8 L1146.6 345.0 L1150.0 343.5 L1153.4 344.2 L1156.8 342.0 L1160.2 340.9 M1116.0 356.6 L1119.4 354.6 L1122.8 355.6 L1126.2 354.0 L1129.6 354.0 L1133.0 352.1 L1136.4 352.0 L1139.8 352.5 L1143.2 352.6 L1146.6 351.8 L1150.0 351.5 L1153.4 350.6 L1156.8 350.6 L1160.2 348.3 M1116.0 361.7 L1119.4 361.5 L1122.8 361.8 L1126.2 360.8 L1129.6 359.4 L1133.0 359.1 L1136.4 359.0 L1139.8 358.6 L1143.2 358.1 L1146.6 358.2 L1150.0 357.9 L1153.4 357.8 L1156.8 356.2 L1160.2 357.0 M1116.0 369.3 L1119.4 368.9 L1122.8 368.4 L1126.2 368.7 L1129.6 368.1 L1133.0 366.9 L1136.4 366.2 L1139.8 365.0 L1143.2 364.9 L1146.6 364.0 L1150.0 364.1 L1153.4 363.2 L1156.8 363.8 L1160.2 363.6 M1116.0 376.6 L1119.4 376.0 L1122.8 375.2 L1126.2 376.2 L1129.6 375.7 L1133.0 374.4 L1136.4 374.4 L1139.8 372.7 L1143.2 372.7 L1146.6 371.7 L1150.0 372.6 L1153.4 371.2 L1156.8 371.4 L1160.2 370.3 M1116.0 382.6 L1119.4 382.6 L1122.8 382.8 L1126.2 383.1 L1129.6 381.9 L1133.0 380.7 L1136.4 380.9 L1139.8 380.3 L1143.2 380.7 L1146.6 379.3 L1150.0 377.3 L1153.4 379.2 L1156.8 376.6 L1160.2 376.6 M1116.0 391.7 L1119.4 390.5 L1122.8 390.0 L1126.2 388.9 L1129.6 388.3 L1133.0 387.6 L1136.4 388.2 L1139.8 386.7 L1143.2 385.6 L1146.6 385.3 L1150.0 384.6 L1153.4 385.9 L1156.8 383.9 L1160.2 383.3 M1116.0 398.0 L1119.4 396.6 L1122.8 397.3 L1126.2 396.5 L1129.6 395.8 L1133.0 395.0 L1136.4 394.2 L1139.8 393.9 L1143.2 394.0 L1146.6 392.0 L1150.0 391.9 L1153.4 392.5 L1156.8 392.0 L1160.2 391.1" fill="none" stroke="#1a1a1a" stroke-width="0.6"/></g><path d="M1137.8 234.7 L1157.6 226.6 L1158.0 240.0 L1151.8 322.0 L1148.0 372.0 L1146.0 385.0 L1125.0 396.5 L1120.0 376.7 L1127.3 319.7 L1128.5 256.8Z" fill="none" stroke="#000" stroke-width="0.9"/><path d="M1072.0 291.0 L1085.0 288.0 L1085.0 305.0 L1072.0 307.0Z" fill="#4040e8" /><path d="M1085.0 288.0 L1108.0 282.0 L1108.0 299.0 L1085.0 305.0Z" fill="#8888e0" /><path d="M1108.0 282.0 L1127.0 276.3 L1128.0 299.0 L1108.0 299.0Z" fill="#d4d4d4" /><path d="M1075 290.2 L1075.5 306.2 M1079 289.1 L1079.5 305.1 M1083 288.0 L1083.5 304.0 M1087 286.9 L1087.5 302.9 M1091 285.9 L1091.5 301.9 M1095 284.8 L1095.5 300.8 M1099 283.7 L1099.5 299.7 M1103 282.6 L1103.5 298.6 M1107 281.6 L1107.5 297.6 M1111 280.5 L1111.5 296.5 M1115 279.4 L1115.5 295.4 M1119 278.3 L1119.5 294.3 M1123 277.2 L1123.5 293.2 M1127 276.1 L1127.5 292.1 M1072 291 L1127 276.3" fill="none" stroke="#000" stroke-width="0.8"/><path d="M240.0 661.0 L272.0 660.0 L285.0 668.0 L290.0 700.0 L300.0 740.0 L318.0 742.0 L349.0 715.0 L325.0 754.0 L306.0 769.0 L231.0 732.0 L213.0 716.0Z" fill="#2a2ae0" stroke="#000" stroke-width="0.8"/><path d="M240.0 661.0 L272.0 660.0 L285.0 668.0 L290.0 700.0 L300.0 740.0 L318.0 742.0 L349.0 715.0 L325.0 754.0 L306.0 769.0 L231.0 732.0 L213.0 716.0Z" fill="url(#hb)" stroke="none"/><path d="M226.0 712.0 L238.0 690.0 L250.0 676.0 L262.0 676.0 L262.0 735.0 L240.0 728.0Z" fill="#4a4af0" stroke="none"/><path d="M213.0 716.0 L231.0 732.0 L266.0 746.0 L306.0 769.0 L312.0 766.0 L280.0 748.0 L236.0 728.0 L218.0 712.0Z" fill="#5050e8" stroke="none"/><path d="M388.0 670.0 L400.0 640.0 L412.0 608.0 L421.0 606.0 L419.0 638.0Z" fill="#2a40e0" stroke="none"/><path d="M349.0 715.0L351.5 706.0L370.2 718.3L368.0 724.0ZM389.7 617.8L392.2 614.4L405.3 635.1L403.1 639.6ZM392.2 614.4L394.8 611.2L407.5 630.6L405.3 635.1Z" fill="#00c0f8" stroke="#00c0f8"/><path d="M351.5 706.0L354.1 697.3L372.4 712.6L370.2 718.3ZM354.1 697.3L356.6 688.9L374.6 707.0L372.4 712.6ZM356.6 688.9L359.2 681.0L376.8 701.5L374.6 707.0ZM384.6 625.1L387.1 621.4L400.9 644.3L398.7 649.0ZM387.1 621.4L389.7 617.8L403.1 639.6L400.9 644.3Z" fill="#0068ff" stroke="#0068ff"/><path d="M359.2 681.0L361.7 673.5L379.0 696.0L376.8 701.5ZM361.7 673.5L364.2 666.4L381.2 690.6L379.0 696.0ZM364.2 666.4L366.8 659.8L383.4 685.2L381.2 690.6ZM374.4 643.0L377.0 638.1L392.2 664.2L390.0 669.4ZM377.0 638.1L379.5 633.5L394.4 659.1L392.2 664.2ZM379.5 633.5L382.0 629.2L396.5 654.0L394.4 659.1ZM382.0 629.2L384.6 625.1L398.7 649.0L396.5 654.0Z" fill="#0000f8" stroke="#0000f8"/><path d="M366.8 659.8L369.3 653.7L385.6 679.9L383.4 685.2ZM369.3 653.7L371.9 648.1L387.8 674.6L385.6 679.9ZM371.9 648.1L374.4 643.0L390.0 669.4L387.8 674.6Z" fill="#4040e8" stroke="#4040e8"/><path d="M394.8 611.2L397.3 608.1L409.7 626.3L407.5 630.6ZM397.3 608.1L399.8 605.2L411.9 622.0L409.7 626.3Z" fill="#00e8d8" stroke="#00e8d8"/><path d="M399.8 605.2L402.4 602.5L414.1 617.8L411.9 622.0Z" fill="#10b088" stroke="#10b088"/><path d="M402.4 602.5L404.9 599.9L416.3 613.8L414.1 617.8ZM404.9 599.9L407.5 597.6L418.5 609.8L416.3 613.8Z" fill="#087a30" stroke="#087a30"/><path d="M407.5 597.6L410.0 595.5L420.7 606.0L418.5 609.8Z" fill="#2a7800" stroke="#2a7800"/><path d="M349.0 715.0 L351.5 706.0 L354.1 697.3 L356.6 688.9 L359.2 681.0 L361.7 673.5 L364.2 666.4 L366.8 659.8 L369.3 653.7 L371.9 648.1 L374.4 643.0 L377.0 638.1 L379.5 633.5 L382.0 629.2 L384.6 625.1 L387.1 621.4 L389.7 617.8 L392.2 614.4 L394.8 611.2 L397.3 608.1 L399.8 605.2 L402.4 602.5 L404.9 599.9 L407.5 597.6 L410.0 595.5 L420.7 606.0 L418.5 609.8 L416.3 613.8 L414.1 617.8 L411.9 622.0 L409.7 626.3 L407.5 630.6 L405.3 635.1 L403.1 639.6 L400.9 644.3 L398.7 649.0 L396.5 654.0 L394.4 659.1 L392.2 664.2 L390.0 669.4 L387.8 674.6 L385.6 679.9 L383.4 685.2 L381.2 690.6 L379.0 696.0 L376.8 701.5 L374.6 707.0 L372.4 712.6 L370.2 718.3 L368.0 724.0Z M351.5 706.0 L370.2 718.3 M354.1 697.3 L372.4 712.6 M356.6 688.9 L374.6 707.0 M359.2 681.0 L376.8 701.5 M361.7 673.5 L379.0 696.0 M364.2 666.4 L381.2 690.6 M366.8 659.8 L383.4 685.2 M369.3 653.7 L385.6 679.9 M371.9 648.1 L387.8 674.6 M374.4 643.0 L390.0 669.4 M377.0 638.1 L392.2 664.2 M379.5 633.5 L394.4 659.1 M382.0 629.2 L396.5 654.0 M384.6 625.1 L398.7 649.0 M387.1 621.4 L400.9 644.3 M389.7 617.8 L403.1 639.6 M392.2 614.4 L405.3 635.1 M394.8 611.2 L407.5 630.6 M397.3 608.1 L409.7 626.3 M399.8 605.2 L411.9 622.0 M402.4 602.5 L414.1 617.8 M404.9 599.9 L416.3 613.8 M407.5 597.6 L418.5 609.8" fill="none" stroke="#000" stroke-width="0.6"/><path d="M417.0 616.7 L390.0 670.4 L420.0 640.7Z" fill="#d8e400" stroke="#000" stroke-width="0.7"/><path d="M411.6 627.5 L420 618.2 M406.2 638.2 L420 623.9 M400.8 648.9 L420 629.5 M395.4 659.7 L420 635.1" stroke="#000" stroke-width="0.6" fill="none"/><path d="M417.0 616.7L420.6 611.9L421.2 617.0L417.6 621.5ZM417.6 621.5L421.2 617.0L421.8 622.2L418.2 626.3ZM418.2 626.3L421.8 622.2L422.4 627.3L418.8 631.1ZM420.6 611.9L424.2 606.8L424.8 612.4L421.2 617.0ZM421.2 617.0L424.8 612.4L425.4 618.0L421.8 622.2ZM421.8 622.2L425.4 618.0L426.0 623.6L422.4 627.3ZM424.2 606.8L427.8 601.5L428.4 607.6L424.8 612.4ZM424.8 612.4L428.4 607.6L429.0 613.7L425.4 618.0ZM425.4 618.0L429.0 613.7L429.6 619.8L426.0 623.6ZM427.8 601.5L431.4 596.2L432.0 602.8L428.4 607.6ZM428.4 607.6L432.0 602.8L432.6 609.4L429.0 613.7ZM431.4 596.2L435.0 590.8L435.6 597.9L432.0 602.8ZM432.0 602.8L435.6 597.9L436.3 605.0L432.6 609.4ZM435.0 590.8L438.7 585.4L439.3 593.1L435.6 597.9ZM435.6 597.9L439.3 593.1L439.9 600.7L436.3 605.0ZM438.7 585.4L442.3 580.1L443.0 588.3L439.3 593.1ZM439.3 593.1L443.0 588.3L443.6 596.5L439.9 600.7ZM442.3 580.1L446.0 574.9L446.7 583.6L443.0 588.3ZM446.0 574.9L449.8 569.9L450.4 579.1L446.7 583.6ZM897.9 410.9L903.7 409.4L902.6 421.6L896.9 423.1ZM903.7 409.4L909.5 407.9L908.3 420.1L902.6 421.6ZM910.6 395.7L916.5 394.2L915.3 406.4L909.5 407.9ZM909.5 407.9L915.3 406.4L914.1 418.6L908.3 420.1ZM920.1 357.7L926.2 356.3L924.9 368.5L918.9 369.9ZM918.9 369.9L924.9 368.5L923.6 380.6L917.7 382.1ZM917.7 382.1L923.6 380.6L922.4 392.8L916.5 394.2ZM916.5 394.2L922.4 392.8L921.1 405.0L915.3 406.4ZM926.2 356.3L932.3 355.0L930.9 367.1L924.9 368.5ZM924.9 368.5L930.9 367.1L929.6 379.2L923.6 380.6ZM923.6 380.6L929.6 379.2L928.3 391.4L922.4 392.8ZM932.3 355.0L938.4 353.6L937.0 365.7L930.9 367.1ZM930.9 367.1L937.0 365.7L935.6 377.8L929.6 379.2ZM929.6 379.2L935.6 377.8L934.3 390.0L928.3 391.4ZM938.4 353.6L944.6 352.3L943.1 364.4L937.0 365.7ZM937.0 365.7L943.1 364.4L941.7 376.5L935.6 377.8Z" fill="#d8e400" stroke="#d8e400"/><path d="M418.8 631.1L422.4 627.3L423.0 632.5L419.4 635.9ZM419.4 635.9L423.0 632.5L423.6 637.7L420.0 640.7ZM422.4 627.3L426.0 623.6L426.6 629.2L423.0 632.5ZM423.0 632.5L426.6 629.2L427.2 634.8L423.6 637.7ZM426.0 623.6L429.6 619.8L430.2 625.8L426.6 629.2ZM426.6 629.2L430.2 625.8L430.8 631.9L427.2 634.8ZM429.0 613.7L432.6 609.4L433.2 615.9L429.6 619.8ZM429.6 619.8L433.2 615.9L433.8 622.5L430.2 625.8ZM430.2 625.8L433.8 622.5L434.5 629.1L430.8 631.9ZM432.6 609.4L436.3 605.0L436.9 612.1L433.2 615.9ZM433.2 615.9L436.9 612.1L437.5 619.3L433.8 622.5ZM433.8 622.5L437.5 619.3L438.1 626.4L434.5 629.1ZM436.3 605.0L439.9 600.7L440.5 608.4L436.9 612.1ZM436.9 612.1L440.5 608.4L441.2 616.0L437.5 619.3ZM437.5 619.3L441.2 616.0L441.8 623.7L438.1 626.4ZM439.9 600.7L443.6 596.5L444.2 604.7L440.5 608.4ZM440.5 608.4L444.2 604.7L444.9 612.9L441.2 616.0ZM443.0 588.3L446.7 583.6L447.3 592.3L443.6 596.5ZM443.6 596.5L447.3 592.3L447.9 601.0L444.2 604.7ZM444.2 604.7L447.9 601.0L448.6 609.7L444.9 612.9ZM446.7 583.6L450.4 579.1L451.0 588.3L447.3 592.3ZM447.3 592.3L451.0 588.3L451.7 597.5L447.9 601.0ZM449.8 569.9L453.5 565.2L454.1 574.8L450.4 579.1ZM450.4 579.1L454.1 574.8L454.8 584.4L451.0 588.3ZM451.0 588.3L454.8 584.4L455.4 594.0L451.7 597.5ZM453.5 565.2L457.2 560.8L457.9 570.8L454.1 574.8ZM454.1 574.8L457.9 570.8L458.5 580.7L454.8 584.4ZM454.8 584.4L458.5 580.7L459.2 590.7L455.4 594.0ZM457.2 560.8L461.0 556.7L461.6 567.0L457.9 570.8ZM457.9 570.8L461.6 567.0L462.3 577.2L458.5 580.7ZM458.5 580.7L462.3 577.2L462.9 587.5L459.2 590.7ZM461.0 556.7L464.8 552.9L465.4 563.4L461.6 567.0ZM461.6 567.0L465.4 563.4L466.1 574.0L462.3 577.2ZM464.8 552.9L468.6 549.4L469.3 560.1L465.4 563.4ZM465.4 563.4L469.3 560.1L469.9 570.9L466.1 574.0ZM468.6 549.4L472.4 546.2L473.1 557.1L469.3 560.1ZM866.7 371.3L872.5 369.7L871.8 382.0L866.0 383.6ZM866.0 383.6L871.8 382.0L871.0 394.2L865.3 395.8ZM872.5 369.7L878.3 368.2L877.6 380.4L871.8 382.0ZM871.8 382.0L877.6 380.4L876.8 392.6L871.0 394.2ZM878.3 368.2L884.2 366.6L883.4 378.8L877.6 380.4ZM877.6 380.4L883.4 378.8L882.5 391.1L876.8 392.6ZM875.2 417.1L880.8 415.5L880.0 427.8L874.4 429.4ZM884.2 366.6L890.1 365.1L889.2 377.3L883.4 378.8ZM883.4 378.8L889.2 377.3L888.3 389.5L882.5 391.1ZM882.5 391.1L888.3 389.5L887.4 401.8L881.7 403.3ZM881.7 403.3L887.4 401.8L886.5 414.0L880.8 415.5ZM880.8 415.5L886.5 414.0L885.6 426.2L880.0 427.8ZM890.1 365.1L896.0 363.6L895.1 375.8L889.2 377.3ZM889.2 377.3L895.1 375.8L894.1 388.0L888.3 389.5ZM888.3 389.5L894.1 388.0L893.2 400.2L887.4 401.8ZM887.4 401.8L893.2 400.2L892.2 412.5L886.5 414.0ZM886.5 414.0L892.2 412.5L891.2 424.7L885.6 426.2ZM896.0 363.6L902.0 362.1L901.0 374.3L895.1 375.8ZM895.1 375.8L901.0 374.3L900.0 386.5L894.1 388.0ZM894.1 388.0L900.0 386.5L898.9 398.7L893.2 400.2ZM893.2 400.2L898.9 398.7L897.9 410.9L892.2 412.5ZM892.2 412.5L897.9 410.9L896.9 423.1L891.2 424.7ZM902.0 362.1L908.0 360.6L906.9 372.8L901.0 374.3ZM901.0 374.3L906.9 372.8L905.8 385.0L900.0 386.5ZM900.0 386.5L905.8 385.0L904.8 397.2L898.9 398.7ZM898.9 398.7L904.8 397.2L903.7 409.4L897.9 410.9ZM908.0 360.6L914.0 359.1L912.9 371.3L906.9 372.8ZM906.9 372.8L912.9 371.3L911.7 383.5L905.8 385.0ZM905.8 385.0L911.7 383.5L910.6 395.7L904.8 397.2ZM904.8 397.2L910.6 395.7L909.5 407.9L903.7 409.4ZM914.0 359.1L920.1 357.7L918.9 369.9L912.9 371.3ZM912.9 371.3L918.9 369.9L917.7 382.1L911.7 383.5ZM911.7 383.5L917.7 382.1L916.5 394.2L910.6 395.7Z" fill="#ffe800" stroke="#ffe800"/><path d="M441.2 616.0L444.9 612.9L445.5 621.1L441.8 623.7ZM444.9 612.9L448.6 609.7L449.2 618.4L445.5 621.1ZM447.9 601.0L451.7 597.5L452.3 606.6L448.6 609.7ZM448.6 609.7L452.3 606.6L452.9 615.8L449.2 618.4ZM451.7 597.5L455.4 594.0L456.0 603.6L452.3 606.6ZM452.3 606.6L456.0 603.6L456.7 613.2L452.9 615.8ZM455.4 594.0L459.2 590.7L459.8 600.7L456.0 603.6ZM456.0 603.6L459.8 600.7L460.5 610.7L456.7 613.2ZM459.2 590.7L462.9 587.5L463.6 597.8L459.8 600.7ZM462.3 577.2L466.1 574.0L466.7 584.5L462.9 587.5ZM462.9 587.5L466.7 584.5L467.4 595.0L463.6 597.8ZM466.1 574.0L469.9 570.9L470.6 581.6L466.7 584.5ZM466.7 584.5L470.6 581.6L471.2 592.3L467.4 595.0ZM469.3 560.1L473.1 557.1L473.7 567.9L469.9 570.9ZM469.9 570.9L473.7 567.9L474.4 578.8L470.6 581.6ZM472.4 546.2L476.3 543.3L476.9 554.2L473.1 557.1ZM473.1 557.1L476.9 554.2L477.6 565.2L473.7 567.9ZM473.7 567.9L477.6 565.2L478.3 576.2L474.4 578.8ZM476.3 543.3L480.1 540.6L480.8 551.6L476.9 554.2ZM476.9 554.2L480.8 551.6L481.5 562.6L477.6 565.2ZM477.6 565.2L481.5 562.6L482.1 573.6L478.3 576.2ZM480.1 540.6L484.0 538.1L484.7 549.1L480.8 551.6ZM480.8 551.6L484.7 549.1L485.4 560.1L481.5 562.6ZM484.0 538.1L487.9 535.7L488.6 546.7L484.7 549.1ZM484.7 549.1L488.6 546.7L489.3 557.7L485.4 560.1ZM487.9 535.7L491.8 533.5L492.5 544.4L488.6 546.7ZM843.3 390.1L848.9 388.4L848.4 400.7L842.8 402.3ZM842.8 402.3L848.4 400.7L847.9 412.9L842.4 414.5ZM842.4 414.5L847.9 412.9L847.4 425.1L842.0 426.8ZM842.0 426.8L847.4 425.1L846.9 437.4L841.5 439.0ZM849.4 376.2L855.1 374.6L854.6 386.8L848.9 388.4ZM848.9 388.4L854.6 386.8L854.0 399.0L848.4 400.7ZM848.4 400.7L854.0 399.0L853.5 411.3L847.9 412.9ZM847.9 412.9L853.5 411.3L852.9 423.5L847.4 425.1ZM847.4 425.1L852.9 423.5L852.4 435.7L846.9 437.4ZM855.1 374.6L860.9 372.9L860.3 385.2L854.6 386.8ZM854.6 386.8L860.3 385.2L859.7 397.4L854.0 399.0ZM854.0 399.0L859.7 397.4L859.1 409.7L853.5 411.3ZM853.5 411.3L859.1 409.7L858.5 421.9L852.9 423.5ZM852.9 423.5L858.5 421.9L857.8 434.1L852.4 435.7ZM860.9 372.9L866.7 371.3L866.0 383.6L860.3 385.2ZM860.3 385.2L866.0 383.6L865.3 395.8L859.7 397.4ZM859.7 397.4L865.3 395.8L864.7 408.0L859.1 409.7ZM859.1 409.7L864.7 408.0L864.0 420.3L858.5 421.9ZM858.5 421.9L864.0 420.3L863.3 432.5L857.8 434.1ZM865.3 395.8L871.0 394.2L870.3 406.5L864.7 408.0ZM864.7 408.0L870.3 406.5L869.6 418.7L864.0 420.3ZM864.0 420.3L869.6 418.7L868.9 430.9L863.3 432.5ZM871.0 394.2L876.8 392.6L876.0 404.9L870.3 406.5ZM870.3 406.5L876.0 404.9L875.2 417.1L869.6 418.7ZM869.6 418.7L875.2 417.1L874.4 429.4L868.9 430.9ZM876.8 392.6L882.5 391.1L881.7 403.3L876.0 404.9ZM876.0 404.9L881.7 403.3L880.8 415.5L875.2 417.1Z" fill="#ffcc00" stroke="#ffcc00"/><path d="M459.8 600.7L463.6 597.8L464.2 608.1L460.5 610.7ZM463.6 597.8L467.4 595.0L468.0 605.6L464.2 608.1ZM467.4 595.0L471.2 592.3L471.9 603.1L468.0 605.6ZM470.6 581.6L474.4 578.8L475.1 589.7L471.2 592.3ZM471.2 592.3L475.1 589.7L475.7 600.6L471.9 603.1ZM474.4 578.8L478.3 576.2L478.9 587.1L475.1 589.7ZM478.3 576.2L482.1 573.6L482.8 584.6L478.9 587.1ZM481.5 562.6L485.4 560.1L486.0 571.2L482.1 573.6ZM482.1 573.6L486.0 571.2L486.7 582.2L482.8 584.6ZM485.4 560.1L489.3 557.7L489.9 568.7L486.0 571.2ZM488.6 546.7L492.5 544.4L493.2 555.4L489.3 557.7ZM489.3 557.7L493.2 555.4L493.9 566.4L489.9 568.7ZM491.8 533.5L495.8 531.2L496.5 542.1L492.5 544.4ZM492.5 544.4L496.5 542.1L497.1 553.1L493.2 555.4ZM495.8 531.2L499.7 528.9L500.4 539.8L496.5 542.1ZM496.5 542.1L500.4 539.8L501.1 550.7L497.1 553.1ZM499.7 528.9L503.7 526.5L504.4 537.4L500.4 539.8ZM500.4 539.8L504.4 537.4L505.1 548.3L501.1 550.7ZM503.7 526.5L507.7 524.0L508.4 534.9L504.4 537.4ZM809.8 424.6L815.2 422.9L815.0 435.1L809.7 436.8ZM815.3 410.7L820.8 409.0L820.5 421.2L815.2 422.9ZM815.2 422.9L820.5 421.2L820.3 433.4L815.0 435.1ZM815.0 435.1L820.3 433.4L820.1 445.7L814.8 447.3ZM821.0 396.8L826.5 395.1L826.2 407.3L820.8 409.0ZM820.8 409.0L826.2 407.3L826.0 419.5L820.5 421.2ZM820.5 421.2L826.0 419.5L825.7 431.8L820.3 433.4ZM820.3 433.4L825.7 431.8L825.4 444.0L820.1 445.7ZM826.8 382.9L832.4 381.2L832.1 393.4L826.5 395.1ZM826.5 395.1L832.1 393.4L831.7 405.6L826.2 407.3ZM826.2 407.3L831.7 405.6L831.4 417.9L826.0 419.5ZM826.0 419.5L831.4 417.9L831.1 430.1L825.7 431.8ZM825.7 431.8L831.1 430.1L830.8 442.3L825.4 444.0ZM832.4 381.2L838.0 379.5L837.6 391.7L832.1 393.4ZM832.1 393.4L837.6 391.7L837.3 404.0L831.7 405.6ZM831.7 405.6L837.3 404.0L836.9 416.2L831.4 417.9ZM831.4 417.9L836.9 416.2L836.5 428.4L831.1 430.1ZM831.1 430.1L836.5 428.4L836.1 440.7L830.8 442.3ZM838.0 379.5L843.7 377.8L843.3 390.1L837.6 391.7ZM837.6 391.7L843.3 390.1L842.8 402.3L837.3 404.0ZM837.3 404.0L842.8 402.3L842.4 414.5L836.9 416.2ZM836.9 416.2L842.4 414.5L842.0 426.8L836.5 428.4ZM836.5 428.4L842.0 426.8L841.5 439.0L836.1 440.7ZM843.7 377.8L849.4 376.2L848.9 388.4L843.3 390.1Z" fill="#ffa800" stroke="#ffa800"/><path d="M475.1 589.7L478.9 587.1L479.6 598.1L475.7 600.6ZM478.9 587.1L482.8 584.6L483.5 595.6L479.6 598.1ZM482.8 584.6L486.7 582.2L487.4 593.2L483.5 595.6ZM486.0 571.2L489.9 568.7L490.6 579.7L486.7 582.2ZM486.7 582.2L490.6 579.7L491.3 590.7L487.4 593.2ZM489.9 568.7L493.9 566.4L494.6 577.4L490.6 579.7ZM493.2 555.4L497.1 553.1L497.8 564.0L493.9 566.4ZM493.9 566.4L497.8 564.0L498.5 575.0L494.6 577.4ZM497.1 553.1L501.1 550.7L501.8 561.7L497.8 564.0ZM497.8 564.0L501.8 561.7L502.5 572.6L498.5 575.0ZM501.1 550.7L505.1 548.3L505.8 559.3L501.8 561.7ZM504.4 537.4L508.4 534.9L509.1 545.9L505.1 548.3ZM505.1 548.3L509.1 545.9L509.8 556.9L505.8 559.3ZM507.7 524.0L511.7 521.4L512.4 532.4L508.4 534.9ZM508.4 534.9L512.4 532.4L513.1 543.4L509.1 545.9ZM509.1 545.9L513.1 543.4L513.8 554.4L509.8 556.9ZM511.7 521.4L515.8 518.7L516.5 529.8L512.4 532.4ZM512.4 532.4L516.5 529.8L517.2 540.9L513.1 543.4ZM515.8 518.7L519.8 516.0L520.6 527.2L516.5 529.8ZM516.5 529.8L520.6 527.2L521.3 538.3L517.2 540.9ZM519.8 516.0L523.9 513.2L524.6 524.5L520.6 527.2ZM523.9 513.2L528.0 510.4L528.7 521.8L524.6 524.5ZM762.0 440.6L767.2 438.8L767.3 451.1L762.1 452.9ZM762.1 452.9L767.3 451.1L767.5 463.3L762.3 465.1ZM767.2 438.8L772.5 437.0L772.6 449.2L767.3 451.1ZM767.3 451.1L772.6 449.2L772.7 461.5L767.5 463.3ZM772.3 424.8L777.6 423.0L777.7 435.2L772.5 437.0ZM772.5 437.0L777.7 435.2L777.8 447.4L772.6 449.2ZM772.6 449.2L777.8 447.4L777.9 459.6L772.7 461.5ZM777.6 423.0L783.0 421.2L783.0 433.4L777.7 435.2ZM777.7 435.2L783.0 433.4L783.1 445.6L777.8 447.4ZM777.8 447.4L783.1 445.6L783.2 457.8L777.9 459.6ZM783.0 421.2L788.3 419.4L788.4 431.6L783.0 433.4ZM783.0 433.4L788.4 431.6L788.4 443.8L783.1 445.6ZM783.1 445.6L788.4 443.8L788.5 456.0L783.2 457.8ZM788.3 407.2L793.7 405.5L793.7 417.7L788.3 419.4ZM788.3 419.4L793.7 417.7L793.7 429.9L788.4 431.6ZM788.4 431.6L793.7 429.9L793.8 442.0L788.4 443.8ZM788.4 443.8L793.8 442.0L793.8 454.2L788.5 456.0ZM793.7 405.5L799.1 403.7L799.1 415.9L793.7 417.7ZM793.7 417.7L799.1 415.9L799.1 428.1L793.7 429.9ZM793.7 429.9L799.1 428.1L799.1 440.3L793.8 442.0ZM793.8 442.0L799.1 440.3L799.1 452.5L793.8 454.2ZM799.1 391.5L804.6 389.8L804.5 402.0L799.1 403.7ZM799.1 403.7L804.5 402.0L804.5 414.2L799.1 415.9ZM799.1 415.9L804.5 414.2L804.4 426.4L799.1 428.1ZM799.1 428.1L804.4 426.4L804.4 438.5L799.1 440.3ZM799.1 440.3L804.4 438.5L804.4 450.7L799.1 452.5ZM804.6 389.8L810.1 388.0L810.0 400.2L804.5 402.0ZM804.5 402.0L810.0 400.2L809.9 412.4L804.5 414.2ZM804.5 414.2L809.9 412.4L809.8 424.6L804.4 426.4ZM804.4 426.4L809.8 424.6L809.7 436.8L804.4 438.5ZM804.4 438.5L809.7 436.8L809.6 449.0L804.4 450.7ZM810.1 388.0L815.6 386.3L815.5 398.5L810.0 400.2ZM810.0 400.2L815.5 398.5L815.3 410.7L809.9 412.4ZM809.9 412.4L815.3 410.7L815.2 422.9L809.8 424.6ZM809.7 436.8L815.0 435.1L814.8 447.3L809.6 449.0ZM815.6 386.3L821.2 384.6L821.0 396.8L815.5 398.5ZM815.5 398.5L821.0 396.8L820.8 409.0L815.3 410.7ZM821.2 384.6L826.8 382.9L826.5 395.1L821.0 396.8Z" fill="#ff7800" stroke="#ff7800"/><path d="M490.6 579.7L494.6 577.4L495.2 588.3L491.3 590.7ZM494.6 577.4L498.5 575.0L499.2 585.9L495.2 588.3ZM498.5 575.0L502.5 572.6L503.2 583.5L499.2 585.9ZM501.8 561.7L505.8 559.3L506.5 570.2L502.5 572.6ZM502.5 572.6L506.5 570.2L507.2 581.2L503.2 583.5ZM505.8 559.3L509.8 556.9L510.5 567.8L506.5 570.2ZM509.8 556.9L513.8 554.4L514.6 565.5L510.5 567.8ZM513.1 543.4L517.2 540.9L517.9 552.0L513.8 554.4ZM513.8 554.4L517.9 552.0L518.6 563.1L514.6 565.5ZM517.2 540.9L521.3 538.3L522.0 549.5L517.9 552.0ZM520.6 527.2L524.6 524.5L525.4 535.8L521.3 538.3ZM521.3 538.3L525.4 535.8L526.1 547.0L522.0 549.5ZM524.6 524.5L528.7 521.8L529.5 533.2L525.4 535.8ZM525.4 535.8L529.5 533.2L530.2 544.5L526.1 547.0ZM528.0 510.4L532.1 507.6L532.9 519.1L528.7 521.8ZM528.7 521.8L532.9 519.1L533.6 530.5L529.5 533.2ZM532.1 507.6L536.3 504.8L537.0 516.3L532.9 519.1ZM532.9 519.1L537.0 516.3L537.7 527.9L533.6 530.5ZM536.3 504.8L540.4 501.9L541.2 513.6L537.0 516.3ZM537.0 516.3L541.2 513.6L541.9 525.3L537.7 527.9ZM540.4 501.9L544.6 499.1L545.4 510.9L541.2 513.6ZM544.6 499.1L548.8 496.3L549.6 508.2L545.4 510.9ZM548.8 496.3L553.1 493.6L553.8 505.6L549.6 508.2ZM716.4 469.7L721.4 467.8L721.7 480.1L716.8 482.0ZM721.4 467.8L726.4 465.9L726.7 478.2L721.7 480.1ZM726.1 453.5L731.2 451.7L731.4 464.0L726.4 465.9ZM726.4 465.9L731.4 464.0L731.7 476.3L726.7 478.2ZM731.2 451.7L736.2 449.8L736.5 462.1L731.4 464.0ZM731.4 464.0L736.5 462.1L736.8 474.4L731.7 476.3ZM736.2 449.8L741.3 448.0L741.6 460.3L736.5 462.1ZM736.5 462.1L741.6 460.3L741.8 472.6L736.8 474.4ZM741.1 435.7L746.2 433.8L746.5 446.1L741.3 448.0ZM741.3 448.0L746.5 446.1L746.7 458.4L741.6 460.3ZM741.6 460.3L746.7 458.4L746.9 470.7L741.8 472.6ZM746.2 433.8L751.4 432.0L751.6 444.3L746.5 446.1ZM746.5 446.1L751.6 444.3L751.8 456.6L746.7 458.4ZM746.7 458.4L751.8 456.6L752.0 468.8L746.9 470.7ZM751.4 432.0L756.6 430.2L756.8 442.5L751.6 444.3ZM751.6 444.3L756.8 442.5L757.0 454.7L751.8 456.6ZM751.8 456.6L757.0 454.7L757.1 467.0L752.0 468.8ZM756.4 417.9L761.7 416.1L761.8 428.4L756.6 430.2ZM756.6 430.2L761.8 428.4L762.0 440.6L756.8 442.5ZM756.8 442.5L762.0 440.6L762.1 452.9L757.0 454.7ZM757.0 454.7L762.1 452.9L762.3 465.1L757.1 467.0ZM761.7 416.1L766.9 414.3L767.1 426.6L761.8 428.4ZM761.8 428.4L767.1 426.6L767.2 438.8L762.0 440.6ZM766.9 414.3L772.2 412.6L772.3 424.8L767.1 426.6ZM767.1 426.6L772.3 424.8L772.5 437.0L767.2 438.8ZM772.1 400.3L777.5 398.6L777.6 410.8L772.2 412.6ZM772.2 412.6L777.6 410.8L777.6 423.0L772.3 424.8ZM777.5 398.6L782.8 396.8L782.9 409.0L777.6 410.8ZM777.6 410.8L782.9 409.0L783.0 421.2L777.6 423.0ZM782.8 396.8L788.2 395.0L788.3 407.2L782.9 409.0ZM782.9 409.0L788.3 407.2L788.3 419.4L783.0 421.2ZM788.2 395.0L793.7 393.3L793.7 405.5L788.3 407.2ZM793.7 393.3L799.1 391.5L799.1 403.7L793.7 405.5Z" fill="#ff4000" stroke="#ff4000"/><path d="M506.5 570.2L510.5 567.8L511.2 578.8L507.2 581.2ZM510.5 567.8L514.6 565.5L515.3 576.5L511.2 578.8ZM514.6 565.5L518.6 563.1L519.3 574.1L515.3 576.5ZM517.9 552.0L522.0 549.5L522.7 560.7L518.6 563.1ZM518.6 563.1L522.7 560.7L523.4 571.8L519.3 574.1ZM522.0 549.5L526.1 547.0L526.8 558.3L522.7 560.7ZM522.7 560.7L526.8 558.3L527.5 569.5L523.4 571.8ZM526.1 547.0L530.2 544.5L530.9 555.9L526.8 558.3ZM526.8 558.3L530.9 555.9L531.6 567.2L527.5 569.5ZM529.5 533.2L533.6 530.5L534.3 542.0L530.2 544.5ZM530.2 544.5L534.3 542.0L535.0 553.5L530.9 555.9ZM533.6 530.5L537.7 527.9L538.5 539.5L534.3 542.0ZM534.3 542.0L538.5 539.5L539.2 551.1L535.0 553.5ZM537.7 527.9L541.9 525.3L542.7 537.0L538.5 539.5ZM538.5 539.5L542.7 537.0L543.4 548.8L539.2 551.1ZM541.2 513.6L545.4 510.9L546.1 522.7L541.9 525.3ZM541.9 525.3L546.1 522.7L546.9 534.6L542.7 537.0ZM545.4 510.9L549.6 508.2L550.3 520.2L546.1 522.7ZM546.1 522.7L550.3 520.2L551.1 532.1L546.9 534.6ZM549.6 508.2L553.8 505.6L554.6 517.6L550.3 520.2ZM550.3 520.2L554.6 517.6L555.3 529.7L551.1 532.1ZM553.1 493.6L557.3 490.9L558.1 503.0L553.8 505.6ZM553.8 505.6L558.1 503.0L558.8 515.1L554.6 517.6ZM557.3 490.9L561.6 488.2L562.3 500.4L558.1 503.0ZM558.1 503.0L562.3 500.4L563.1 512.7L558.8 515.1ZM561.6 488.2L565.9 485.6L566.6 497.9L562.3 500.4ZM562.3 500.4L566.6 497.9L567.4 510.2L563.1 512.7ZM565.9 485.6L570.2 483.1L570.9 495.5L566.6 497.9ZM566.6 497.9L570.9 495.5L571.7 507.8L567.4 510.2ZM570.2 483.1L574.5 480.5L575.3 493.0L570.9 495.5ZM570.9 495.5L575.3 493.0L576.1 505.5L571.7 507.8ZM574.5 480.5L578.9 478.1L579.6 490.6L575.3 493.0ZM578.9 478.1L583.2 475.7L584.0 488.2L579.6 490.6ZM583.2 475.7L587.6 473.3L588.4 485.9L584.0 488.2ZM587.6 473.3L592.1 471.0L592.9 483.6L588.4 485.9ZM592.1 471.0L596.5 468.7L597.3 481.4L592.9 483.6ZM677.5 485.0L682.3 483.1L682.8 495.7L678.0 497.6ZM682.3 483.1L687.1 481.1L687.6 493.7L682.8 495.7ZM687.1 481.1L691.9 479.2L692.4 491.7L687.6 493.7ZM691.9 479.2L696.8 477.3L697.2 489.8L692.4 491.7ZM696.4 464.8L701.3 462.9L701.7 475.4L696.8 477.3ZM696.8 477.3L701.7 475.4L702.1 487.8L697.2 489.8ZM701.3 462.9L706.2 461.0L706.6 473.5L701.7 475.4ZM701.7 475.4L706.6 473.5L706.9 485.9L702.1 487.8ZM706.2 461.0L711.1 459.1L711.5 471.6L706.6 473.5ZM706.6 473.5L711.5 471.6L711.8 484.0L706.9 485.9ZM710.8 446.7L715.8 444.9L716.1 457.3L711.1 459.1ZM711.1 459.1L716.1 457.3L716.4 469.7L711.5 471.6ZM711.5 471.6L716.4 469.7L716.8 482.0L711.8 484.0ZM715.8 444.9L720.8 443.0L721.1 455.4L716.1 457.3ZM716.1 457.3L721.1 455.4L721.4 467.8L716.4 469.7ZM720.8 443.0L725.8 441.2L726.1 453.5L721.1 455.4ZM721.1 455.4L726.1 453.5L726.4 465.9L721.4 467.8ZM725.5 428.8L730.6 427.0L730.9 439.3L725.8 441.2ZM725.8 441.2L730.9 439.3L731.2 451.7L726.1 453.5ZM730.6 427.0L735.7 425.2L736.0 437.5L730.9 439.3ZM730.9 439.3L736.0 437.5L736.2 449.8L731.2 451.7ZM735.5 412.9L740.6 411.1L740.9 423.4L735.7 425.2ZM735.7 425.2L740.9 423.4L741.1 435.7L736.0 437.5ZM736.0 437.5L741.1 435.7L741.3 448.0L736.2 449.8ZM740.6 411.1L745.8 409.3L746.0 421.6L740.9 423.4ZM740.9 423.4L746.0 421.6L746.2 433.8L741.1 435.7ZM745.8 409.3L751.0 407.5L751.2 419.8L746.0 421.6ZM746.0 421.6L751.2 419.8L751.4 432.0L746.2 433.8ZM751.0 407.5L756.3 405.7L756.4 417.9L751.2 419.8ZM751.2 419.8L756.4 417.9L756.6 430.2L751.4 432.0ZM756.3 405.7L761.5 403.9L761.7 416.1L756.4 417.9ZM761.5 403.9L766.8 402.1L766.9 414.3L761.7 416.1ZM766.8 402.1L772.1 400.3L772.2 412.6L766.9 414.3Z" fill="#ff0000" stroke="#ff0000"/><path d="M530.9 555.9L535.0 553.5L535.8 565.0L531.6 567.2ZM535.0 553.5L539.2 551.1L539.9 562.7L535.8 565.0ZM539.2 551.1L543.4 548.8L544.1 560.5L539.9 562.7ZM542.7 537.0L546.9 534.6L547.6 546.4L543.4 548.8ZM543.4 548.8L547.6 546.4L548.3 558.2L544.1 560.5ZM546.9 534.6L551.1 532.1L551.8 544.1L547.6 546.4ZM547.6 546.4L551.8 544.1L552.6 556.0L548.3 558.2ZM551.1 532.1L555.3 529.7L556.1 541.7L551.8 544.1ZM551.8 544.1L556.1 541.7L556.8 553.8L552.6 556.0ZM554.6 517.6L558.8 515.1L559.6 527.3L555.3 529.7ZM555.3 529.7L559.6 527.3L560.3 539.4L556.1 541.7ZM556.1 541.7L560.3 539.4L561.1 551.6L556.8 553.8ZM558.8 515.1L563.1 512.7L563.9 524.9L559.6 527.3ZM559.6 527.3L563.9 524.9L564.6 537.2L560.3 539.4ZM560.3 539.4L564.6 537.2L565.4 549.4L561.1 551.6ZM563.1 512.7L567.4 510.2L568.2 522.6L563.9 524.9ZM563.9 524.9L568.2 522.6L568.9 534.9L564.6 537.2ZM564.6 537.2L568.9 534.9L569.7 547.2L565.4 549.4ZM567.4 510.2L571.7 507.8L572.5 520.2L568.2 522.6ZM568.2 522.6L572.5 520.2L573.3 532.6L568.9 534.9ZM568.9 534.9L573.3 532.6L574.0 545.0L569.7 547.2ZM571.7 507.8L576.1 505.5L576.8 517.9L572.5 520.2ZM572.5 520.2L576.8 517.9L577.6 530.4L573.3 532.6ZM573.3 532.6L577.6 530.4L578.4 542.9L574.0 545.0ZM575.3 493.0L579.6 490.6L580.4 503.1L576.1 505.5ZM576.1 505.5L580.4 503.1L581.2 515.7L576.8 517.9ZM576.8 517.9L581.2 515.7L582.0 528.2L577.6 530.4ZM579.6 490.6L584.0 488.2L584.8 500.8L580.4 503.1ZM580.4 503.1L584.8 500.8L585.6 513.4L581.2 515.7ZM581.2 515.7L585.6 513.4L586.4 526.0L582.0 528.2ZM584.0 488.2L588.4 485.9L589.2 498.5L584.8 500.8ZM584.8 500.8L589.2 498.5L590.0 511.2L585.6 513.4ZM585.6 513.4L590.0 511.2L590.8 523.8L586.4 526.0ZM588.4 485.9L592.9 483.6L593.6 496.3L589.2 498.5ZM589.2 498.5L593.6 496.3L594.4 509.0L590.0 511.2ZM592.9 483.6L597.3 481.4L598.1 494.1L593.6 496.3ZM593.6 496.3L598.1 494.1L598.9 506.8L594.4 509.0ZM596.5 468.7L601.0 466.4L601.8 479.1L597.3 481.4ZM597.3 481.4L601.8 479.1L602.6 491.9L598.1 494.1ZM598.1 494.1L602.6 491.9L603.4 504.6L598.9 506.8ZM601.0 466.4L605.5 464.2L606.2 477.0L601.8 479.1ZM601.8 479.1L606.2 477.0L607.0 489.7L602.6 491.9ZM602.6 491.9L607.0 489.7L607.8 502.5L603.4 504.6ZM605.5 464.2L610.0 462.0L610.7 474.8L606.2 477.0ZM606.2 477.0L610.7 474.8L611.5 487.6L607.0 489.7ZM607.0 489.7L611.5 487.6L612.2 500.4L607.8 502.5ZM610.0 462.0L614.5 459.9L615.2 472.7L610.7 474.8ZM610.7 474.8L615.2 472.7L616.0 485.5L611.5 487.6ZM614.5 459.9L619.1 457.8L619.8 470.6L615.2 472.7ZM615.2 472.7L619.8 470.6L620.5 483.4L616.0 485.5ZM619.1 457.8L623.6 455.7L624.3 468.5L619.8 470.6ZM619.8 470.6L624.3 468.5L625.0 481.3L620.5 483.4ZM623.6 455.7L628.2 453.6L628.9 466.5L624.3 468.5ZM624.3 468.5L628.9 466.5L629.6 479.3L625.0 481.3ZM628.2 453.6L632.9 451.6L633.5 464.4L628.9 466.5ZM628.9 466.5L633.5 464.4L634.2 477.2L629.6 479.3ZM632.9 451.6L637.5 449.6L638.2 462.4L633.5 464.4ZM637.5 449.6L642.2 447.7L642.8 460.5L638.2 462.4ZM640.1 500.8L644.7 498.8L645.3 511.6L640.8 513.7ZM642.2 447.7L646.9 445.7L647.5 458.5L642.8 460.5ZM644.7 498.8L649.3 496.8L649.9 509.6L645.3 511.6ZM646.9 445.7L651.6 443.8L652.2 456.6L647.5 458.5ZM649.3 496.8L654.0 494.8L654.5 507.6L649.9 509.6ZM651.6 443.8L656.3 441.9L656.9 454.7L652.2 456.6ZM654.0 494.8L658.6 492.9L659.2 505.6L654.5 507.6ZM656.3 441.9L661.1 440.1L661.6 452.8L656.9 454.7ZM658.0 480.1L662.7 478.2L663.3 490.9L658.6 492.9ZM658.6 492.9L663.3 490.9L663.9 503.6L659.2 505.6ZM661.1 440.1L665.9 438.2L666.4 450.9L661.6 452.8ZM662.7 478.2L667.5 476.2L668.0 488.9L663.3 490.9ZM663.3 490.9L668.0 488.9L668.6 501.6L663.9 503.6ZM665.9 438.2L670.7 436.4L671.2 449.0L666.4 450.9ZM666.9 463.6L671.7 461.7L672.2 474.3L667.5 476.2ZM667.5 476.2L672.2 474.3L672.8 487.0L668.0 488.9ZM668.0 488.9L672.8 487.0L673.3 499.6L668.6 501.6ZM670.7 436.4L675.5 434.5L676.0 447.2L671.2 449.0ZM671.2 449.0L676.0 447.2L676.5 459.8L671.7 461.7ZM671.7 461.7L676.5 459.8L677.0 472.4L672.2 474.3ZM672.2 474.3L677.0 472.4L677.5 485.0L672.8 487.0ZM672.8 487.0L677.5 485.0L678.0 497.6L673.3 499.6ZM675.5 434.5L680.4 432.7L680.9 445.3L676.0 447.2ZM676.0 447.2L680.9 445.3L681.3 457.9L676.5 459.8ZM676.5 459.8L681.3 457.9L681.8 470.5L677.0 472.4ZM677.0 472.4L681.8 470.5L682.3 483.1L677.5 485.0ZM680.4 432.7L685.3 430.9L685.7 443.5L680.9 445.3ZM680.9 445.3L685.7 443.5L686.2 456.0L681.3 457.9ZM681.3 457.9L686.2 456.0L686.6 468.6L681.8 470.5ZM681.8 470.5L686.6 468.6L687.1 481.1L682.3 483.1ZM685.3 430.9L690.2 429.1L690.6 441.6L685.7 443.5ZM685.7 443.5L690.6 441.6L691.0 454.2L686.2 456.0ZM686.2 456.0L691.0 454.2L691.5 466.7L686.6 468.6ZM686.6 468.6L691.5 466.7L691.9 479.2L687.1 481.1ZM690.2 429.1L695.1 427.3L695.5 439.8L690.6 441.6ZM690.6 441.6L695.5 439.8L695.9 452.3L691.0 454.2ZM691.0 454.2L695.9 452.3L696.4 464.8L691.5 466.7ZM691.5 466.7L696.4 464.8L696.8 477.3L691.9 479.2ZM695.1 427.3L700.1 425.5L700.5 438.0L695.5 439.8ZM695.5 439.8L700.5 438.0L700.9 450.4L695.9 452.3ZM695.9 452.3L700.9 450.4L701.3 462.9L696.4 464.8ZM700.1 425.5L705.0 423.7L705.4 436.1L700.5 438.0ZM700.5 438.0L705.4 436.1L705.8 448.6L700.9 450.4ZM700.9 450.4L705.8 448.6L706.2 461.0L701.3 462.9ZM705.0 423.7L710.0 421.9L710.4 434.3L705.4 436.1ZM705.4 436.1L710.4 434.3L710.8 446.7L705.8 448.6ZM705.8 448.6L710.8 446.7L711.1 459.1L706.2 461.0ZM710.0 421.9L715.1 420.1L715.4 432.5L710.4 434.3ZM710.4 434.3L715.4 432.5L715.8 444.9L710.8 446.7ZM715.1 420.1L720.1 418.3L720.5 430.7L715.4 432.5ZM715.4 432.5L720.5 430.7L720.8 443.0L715.8 444.9ZM720.1 418.3L725.2 416.5L725.5 428.8L720.5 430.7ZM720.5 430.7L725.5 428.8L725.8 441.2L720.8 443.0ZM725.2 416.5L730.3 414.7L730.6 427.0L725.5 428.8ZM730.3 414.7L735.5 412.9L735.7 425.2L730.6 427.0Z" fill="#dc0000" stroke="#dc0000"/><path d="M577.6 530.4L582.0 528.2L582.8 540.7L578.4 542.9ZM582.0 528.2L586.4 526.0L587.2 538.6L582.8 540.7ZM586.4 526.0L590.8 523.8L591.6 536.4L587.2 538.6ZM590.0 511.2L594.4 509.0L595.2 521.6L590.8 523.8ZM590.8 523.8L595.2 521.6L596.0 534.3L591.6 536.4ZM594.4 509.0L598.9 506.8L599.7 519.5L595.2 521.6ZM595.2 521.6L599.7 519.5L600.5 532.2L596.0 534.3ZM598.9 506.8L603.4 504.6L604.2 517.3L599.7 519.5ZM599.7 519.5L604.2 517.3L605.0 530.0L600.5 532.2ZM603.4 504.6L607.8 502.5L608.6 515.2L604.2 517.3ZM604.2 517.3L608.6 515.2L609.3 528.0L605.0 530.0ZM607.8 502.5L612.2 500.4L613.0 513.1L608.6 515.2ZM608.6 515.2L613.0 513.1L613.8 525.9L609.3 528.0ZM611.5 487.6L616.0 485.5L616.7 498.3L612.2 500.4ZM612.2 500.4L616.7 498.3L617.5 511.1L613.0 513.1ZM613.0 513.1L617.5 511.1L618.2 523.9L613.8 525.9ZM616.0 485.5L620.5 483.4L621.2 496.2L616.7 498.3ZM616.7 498.3L621.2 496.2L621.9 509.0L617.5 511.1ZM617.5 511.1L621.9 509.0L622.7 521.8L618.2 523.9ZM620.5 483.4L625.0 481.3L625.7 494.1L621.2 496.2ZM621.2 496.2L625.7 494.1L626.5 506.9L621.9 509.0ZM621.9 509.0L626.5 506.9L627.2 519.8L622.7 521.8ZM625.0 481.3L629.6 479.3L630.3 492.1L625.7 494.1ZM625.7 494.1L630.3 492.1L631.0 504.9L626.5 506.9ZM626.5 506.9L631.0 504.9L631.7 517.7L627.2 519.8ZM629.6 479.3L634.2 477.2L634.9 490.1L630.3 492.1ZM630.3 492.1L634.9 490.1L635.5 502.9L631.0 504.9ZM631.0 504.9L635.5 502.9L636.2 515.7L631.7 517.7ZM633.5 464.4L638.2 462.4L638.8 475.2L634.2 477.2ZM634.2 477.2L638.8 475.2L639.5 488.0L634.9 490.1ZM634.9 490.1L639.5 488.0L640.1 500.8L635.5 502.9ZM635.5 502.9L640.1 500.8L640.8 513.7L636.2 515.7ZM638.2 462.4L642.8 460.5L643.4 473.3L638.8 475.2ZM638.8 475.2L643.4 473.3L644.1 486.0L639.5 488.0ZM639.5 488.0L644.1 486.0L644.7 498.8L640.1 500.8ZM642.8 460.5L647.5 458.5L648.1 471.3L643.4 473.3ZM643.4 473.3L648.1 471.3L648.7 484.1L644.1 486.0ZM644.1 486.0L648.7 484.1L649.3 496.8L644.7 498.8ZM647.5 458.5L652.2 456.6L652.8 469.3L648.1 471.3ZM648.1 471.3L652.8 469.3L653.4 482.1L648.7 484.1ZM648.7 484.1L653.4 482.1L654.0 494.8L649.3 496.8ZM652.2 456.6L656.9 454.7L657.5 467.4L652.8 469.3ZM652.8 469.3L657.5 467.4L658.0 480.1L653.4 482.1ZM653.4 482.1L658.0 480.1L658.6 492.9L654.0 494.8ZM656.9 454.7L661.6 452.8L662.2 465.5L657.5 467.4ZM657.5 467.4L662.2 465.5L662.7 478.2L658.0 480.1ZM661.6 452.8L666.4 450.9L666.9 463.6L662.2 465.5ZM662.2 465.5L666.9 463.6L667.5 476.2L662.7 478.2ZM666.4 450.9L671.2 449.0L671.7 461.7L666.9 463.6Z" fill="#b40000" stroke="#b40000"/><path d="M915.3 406.4L921.1 405.0L919.8 417.1L914.1 418.6ZM922.4 392.8L928.3 391.4L927.0 403.5L921.1 405.0ZM921.1 405.0L927.0 403.5L925.7 415.6L919.8 417.1ZM928.3 391.4L934.3 390.0L932.9 402.1L927.0 403.5ZM935.6 377.8L941.7 376.5L940.2 388.6L934.3 390.0ZM934.3 390.0L940.2 388.6L938.8 400.6L932.9 402.1ZM944.6 352.3L950.8 351.1L949.3 363.1L943.1 364.4ZM943.1 364.4L949.3 363.1L947.8 375.2L941.7 376.5ZM941.7 376.5L947.8 375.2L946.3 387.2L940.2 388.6ZM950.8 351.1L957.0 349.9L955.5 361.9L949.3 363.1ZM949.3 363.1L955.5 361.9L953.9 373.9L947.8 375.2ZM957.0 349.9L963.3 348.7L961.7 360.6L955.5 361.9Z" fill="#80ac00" stroke="#80ac00"/><path d="M927.0 403.5L932.9 402.1L931.5 414.2L925.7 415.6ZM932.9 402.1L938.8 400.6L937.4 412.7L931.5 414.2ZM940.2 388.6L946.3 387.2L944.8 399.2L938.8 400.6ZM938.8 400.6L944.8 399.2L943.2 411.3L937.4 412.7ZM947.8 375.2L953.9 373.9L952.3 385.9L946.3 387.2ZM946.3 387.2L952.3 385.9L950.7 397.9L944.8 399.2ZM955.5 361.9L961.7 360.6L960.0 372.6L953.9 373.9ZM953.9 373.9L960.0 372.6L958.4 384.5L952.3 385.9ZM963.3 348.7L969.6 347.5L967.9 359.4L961.7 360.6ZM961.7 360.6L967.9 359.4L966.2 371.3L960.0 372.6ZM969.6 347.5L975.9 346.5L974.2 358.3L967.9 359.4ZM967.9 359.4L974.2 358.3L972.4 370.1L966.2 371.3ZM975.9 346.5L982.3 345.4L980.5 357.2L974.2 358.3Z" fill="#2a7800" stroke="#2a7800"/><path d="M944.8 399.2L950.7 397.9L949.2 409.9L943.2 411.3ZM952.3 385.9L958.4 384.5L956.8 396.5L950.7 397.9ZM950.7 397.9L956.8 396.5L955.1 408.4L949.2 409.9ZM960.0 372.6L966.2 371.3L964.5 383.2L958.4 384.5ZM958.4 384.5L964.5 383.2L962.8 395.1L956.8 396.5ZM956.8 396.5L962.8 395.1L961.1 407.0L955.1 408.4ZM966.2 371.3L972.4 370.1L970.6 382.0L964.5 383.2ZM964.5 383.2L970.6 382.0L968.9 393.8L962.8 395.1ZM974.2 358.3L980.5 357.2L978.6 369.0L972.4 370.1ZM972.4 370.1L978.6 369.0L976.8 380.7L970.6 382.0ZM982.3 345.4L988.7 344.4L986.8 356.1L980.5 357.2ZM980.5 357.2L986.8 356.1L984.9 367.8L978.6 369.0ZM988.7 344.4L995.1 343.5L993.1 355.1L986.8 356.1Z" fill="#087a30" stroke="#087a30"/><path d="M962.8 395.1L968.9 393.8L967.1 405.7L961.1 407.0ZM970.6 382.0L976.8 380.7L975.0 392.5L968.9 393.8ZM968.9 393.8L975.0 392.5L973.2 404.3L967.1 405.7ZM978.6 369.0L984.9 367.8L983.0 379.5L976.8 380.7ZM976.8 380.7L983.0 379.5L981.1 391.2L975.0 392.5ZM975.0 392.5L981.1 391.2L979.2 402.9L973.2 404.3ZM986.8 356.1L993.1 355.1L991.2 366.7L984.9 367.8ZM984.9 367.8L991.2 366.7L989.2 378.3L983.0 379.5ZM983.0 379.5L989.2 378.3L987.3 390.0L981.1 391.2ZM995.1 343.5L1001.6 342.6L999.5 354.1L993.1 355.1ZM993.1 355.1L999.5 354.1L997.5 365.7L991.2 366.7ZM991.2 366.7L997.5 365.7L995.5 377.2L989.2 378.3ZM1001.6 342.6L1008.0 341.8L1005.9 353.2L999.5 354.1ZM999.5 354.1L1005.9 353.2L1003.7 364.7L997.5 365.7ZM1008.0 341.8L1014.6 341.0L1012.3 352.4L1005.9 353.2Z" fill="#10b088" stroke="#10b088"/><path d="M981.1 391.2L987.3 390.0L985.3 401.6L979.2 402.9ZM989.2 378.3L995.5 377.2L993.4 388.7L987.3 390.0ZM987.3 390.0L993.4 388.7L991.4 400.3L985.3 401.6ZM997.5 365.7L1003.7 364.7L1001.6 376.1L995.5 377.2ZM995.5 377.2L1001.6 376.1L999.4 387.6L993.4 388.7ZM993.4 388.7L999.4 387.6L997.3 399.0L991.4 400.3ZM1005.9 353.2L1012.3 352.4L1010.0 363.7L1003.7 364.7ZM1003.7 364.7L1010.0 363.7L1007.7 375.1L1001.6 376.1ZM1001.6 376.1L1007.7 375.1L1005.5 386.4L999.4 387.6ZM999.4 387.6L1005.5 386.4L1003.2 397.8L997.3 399.0ZM1014.6 341.0L1021.1 340.3L1018.7 351.6L1012.3 352.4ZM1012.3 352.4L1018.7 351.6L1016.3 362.8L1010.0 363.7ZM1010.0 363.7L1016.3 362.8L1013.9 374.1L1007.7 375.1ZM1007.7 375.1L1013.9 374.1L1011.5 385.3L1005.5 386.4ZM1005.5 386.4L1011.5 385.3L1009.1 396.5L1003.2 397.8ZM1021.1 340.3L1027.7 339.7L1025.2 350.8L1018.7 351.6ZM1018.7 351.6L1025.2 350.8L1022.7 362.0L1016.3 362.8ZM1013.9 374.1L1020.1 373.1L1017.6 384.2L1011.5 385.3ZM1011.5 385.3L1017.6 384.2L1015.1 395.3L1009.1 396.5ZM1017.6 384.2L1023.7 383.1L1021.1 394.1L1015.1 395.3Z" fill="#00e8d8" stroke="#00e8d8"/><path d="M1016.3 362.8L1022.7 362.0L1020.1 373.1L1013.9 374.1ZM1027.7 339.7L1034.3 339.2L1031.7 350.1L1025.2 350.8ZM1025.2 350.8L1031.7 350.1L1029.0 361.1L1022.7 362.0ZM1022.7 362.0L1029.0 361.1L1026.4 372.1L1020.1 373.1ZM1020.1 373.1L1026.4 372.1L1023.7 383.1L1017.6 384.2ZM1034.3 339.2L1041.0 338.7L1038.2 349.5L1031.7 350.1ZM1031.7 350.1L1038.2 349.5L1035.4 360.4L1029.0 361.1ZM1029.0 361.1L1035.4 360.4L1032.7 371.2L1026.4 372.1ZM1026.4 372.1L1032.7 371.2L1029.9 382.1L1023.7 383.1ZM1023.7 383.1L1029.9 382.1L1027.1 392.9L1021.1 394.1ZM1041.0 338.7L1047.7 338.3L1044.8 349.0L1038.2 349.5ZM1038.2 349.5L1044.8 349.0L1041.9 359.6L1035.4 360.4ZM1035.4 360.4L1041.9 359.6L1039.0 370.3L1032.7 371.2ZM1032.7 371.2L1039.0 370.3L1036.1 381.0L1029.9 382.1ZM1029.9 382.1L1036.1 381.0L1033.1 391.7L1027.1 392.9ZM1047.7 338.3L1054.4 337.9L1051.4 348.5L1044.8 349.0ZM1044.8 349.0L1051.4 348.5L1048.3 359.0L1041.9 359.6ZM1041.9 359.6L1048.3 359.0L1045.3 369.5L1039.0 370.3ZM1039.0 370.3L1045.3 369.5L1042.3 380.0L1036.1 381.0ZM1036.1 381.0L1042.3 380.0L1039.2 390.6L1033.1 391.7ZM1051.4 348.5L1058.0 348.0L1054.8 358.4L1048.3 359.0ZM1048.3 359.0L1054.8 358.4L1051.7 368.7L1045.3 369.5ZM1045.3 369.5L1051.7 368.7L1048.5 379.1L1042.3 380.0ZM1042.3 380.0L1048.5 379.1L1045.3 389.4L1039.2 390.6ZM1054.8 358.4L1061.4 357.8L1058.1 368.0L1051.7 368.7ZM1051.7 368.7L1058.1 368.0L1054.8 378.1L1048.5 379.1ZM1048.5 379.1L1054.8 378.1L1051.5 388.3L1045.3 389.4Z" fill="#00c0f8" stroke="#00c0f8"/><path d="M1054.4 337.9L1061.1 337.7L1058.0 348.0L1051.4 348.5ZM1061.1 337.7L1067.9 337.5L1064.6 347.7L1058.0 348.0ZM1058.0 348.0L1064.6 347.7L1061.4 357.8L1054.8 358.4ZM1067.9 337.5L1074.8 337.5L1071.3 347.4L1064.6 347.7ZM1064.6 347.7L1071.3 347.4L1067.9 357.3L1061.4 357.8ZM1061.4 357.8L1067.9 357.3L1064.5 367.3L1058.1 368.0ZM1058.1 368.0L1064.5 367.3L1061.1 377.2L1054.8 378.1ZM1054.8 378.1L1061.1 377.2L1057.7 387.1L1051.5 388.3ZM1074.8 337.5L1081.6 337.5L1078.1 347.2L1071.3 347.4ZM1071.3 347.4L1078.1 347.2L1074.5 356.9L1067.9 357.3ZM1067.9 357.3L1074.5 356.9L1071.0 366.6L1064.5 367.3ZM1064.5 367.3L1071.0 366.6L1067.4 376.3L1061.1 377.2ZM1061.1 377.2L1067.4 376.3L1063.9 386.0L1057.7 387.1ZM1081.6 337.5L1088.5 337.6L1084.8 347.1L1078.1 347.2ZM1078.1 347.2L1084.8 347.1L1081.1 356.5L1074.5 356.9ZM1074.5 356.9L1081.1 356.5L1077.5 366.0L1071.0 366.6ZM1071.0 366.6L1077.5 366.0L1073.8 375.5L1067.4 376.3ZM1067.4 376.3L1073.8 375.5L1070.1 384.9L1063.9 386.0ZM1088.5 337.6L1095.4 337.8L1091.6 347.0L1084.8 347.1ZM1084.8 347.1L1091.6 347.0L1087.8 356.2L1081.1 356.5ZM1081.1 356.5L1087.8 356.2L1084.0 365.4L1077.5 366.0ZM1077.5 366.0L1084.0 365.4L1080.2 374.6L1073.8 375.5ZM1073.8 375.5L1080.2 374.6L1076.4 383.8L1070.1 384.9Z" fill="#0068ff" stroke="#0068ff"/><path d="M1095.4 337.8L1102.4 338.1L1098.4 347.1L1091.6 347.0ZM1091.6 347.0L1098.4 347.1L1094.5 356.0L1087.8 356.2ZM1087.8 356.2L1094.5 356.0L1090.6 364.9L1084.0 365.4ZM1084.0 365.4L1090.6 364.9L1086.6 373.8L1080.2 374.6ZM1080.2 374.6L1086.6 373.8L1082.7 382.8L1076.4 383.8ZM1102.4 338.1L1109.4 338.5L1105.3 347.2L1098.4 347.1ZM1098.4 347.1L1105.3 347.2L1101.2 355.8L1094.5 356.0ZM1094.5 356.0L1101.2 355.8L1097.1 364.4L1090.6 364.9ZM1090.6 364.9L1097.1 364.4L1093.0 373.1L1086.6 373.8ZM1086.6 373.8L1093.0 373.1L1089.0 381.7L1082.7 382.8ZM1109.4 338.5L1116.3 339.0L1112.1 347.3L1105.3 347.2ZM1105.3 347.2L1112.1 347.3L1107.9 355.6L1101.2 355.8ZM1101.2 355.8L1107.9 355.6L1103.7 364.0L1097.1 364.4ZM1097.1 364.4L1103.7 364.0L1099.5 372.3L1093.0 373.1ZM1093.0 373.1L1099.5 372.3L1095.3 380.7L1089.0 381.7ZM1116.3 339.0L1123.3 339.3L1118.9 347.4L1112.1 347.3ZM1112.1 347.3L1118.9 347.4L1114.6 355.5L1107.9 355.6ZM1107.9 355.6L1114.6 355.5L1110.3 363.5L1103.7 364.0ZM1103.7 364.0L1110.3 363.5L1105.9 371.6L1099.5 372.3ZM1123.3 339.3L1130.2 339.6L1125.8 347.4L1118.9 347.4ZM1118.9 347.4L1125.8 347.4L1121.3 355.2L1114.6 355.5ZM1114.6 355.5L1121.3 355.2L1116.8 363.0L1110.3 363.5ZM1130.2 339.6L1137.2 339.6L1132.6 347.3L1125.8 347.4Z" fill="#0000f8" stroke="#0000f8"/><path d="M1099.5 372.3L1105.9 371.6L1101.6 379.7L1095.3 380.7ZM1110.3 363.5L1116.8 363.0L1112.4 370.9L1105.9 371.6ZM1105.9 371.6L1112.4 370.9L1107.9 378.7L1101.6 379.7ZM1125.8 347.4L1132.6 347.3L1128.0 354.9L1121.3 355.2ZM1121.3 355.2L1128.0 354.9L1123.4 362.5L1116.8 363.0ZM1116.8 363.0L1123.4 362.5L1118.8 370.1L1112.4 370.9ZM1112.4 370.9L1118.8 370.1L1114.2 377.7L1107.9 378.7ZM1137.2 339.6L1144.2 339.5L1139.4 346.9L1132.6 347.3ZM1132.6 347.3L1139.4 346.9L1134.7 354.4L1128.0 354.9ZM1128.0 354.9L1134.7 354.4L1130.0 361.8L1123.4 362.5ZM1123.4 362.5L1130.0 361.8L1125.2 369.3L1118.8 370.1ZM1118.8 370.1L1125.2 369.3L1120.5 376.7L1114.2 377.7ZM1144.2 339.5L1151.1 339.0L1146.3 346.3L1139.4 346.9ZM1139.4 346.9L1146.3 346.3L1141.4 353.7L1134.7 354.4ZM1134.7 354.4L1141.4 353.7L1136.5 361.1L1130.0 361.8ZM1130.0 361.8L1136.5 361.1L1131.7 368.4L1125.2 369.3ZM1125.2 369.3L1131.7 368.4L1126.8 375.8L1120.5 376.7ZM1151.1 339.0L1158.1 338.1L1153.1 345.4L1146.3 346.3ZM1146.3 346.3L1153.1 345.4L1148.1 352.8L1141.4 353.7ZM1141.4 353.7L1148.1 352.8L1143.1 360.2L1136.5 361.1ZM1136.5 361.1L1143.1 360.2L1138.1 367.5L1131.7 368.4ZM1131.7 368.4L1138.1 367.5L1133.1 374.9L1126.8 375.8ZM1158.1 338.1L1165.1 336.8L1159.9 344.2L1153.1 345.4ZM1153.1 345.4L1159.9 344.2L1154.8 351.6L1148.1 352.8ZM1148.1 352.8L1154.8 351.6L1149.7 359.1L1143.1 360.2ZM1143.1 360.2L1149.7 359.1L1144.5 366.5L1138.1 367.5ZM1165.1 336.8L1172.0 334.9L1166.8 342.6L1159.9 344.2ZM1159.9 344.2L1166.8 342.6L1161.5 350.2L1154.8 351.6ZM1154.8 351.6L1161.5 350.2L1156.2 357.8L1149.7 359.1ZM1149.7 359.1L1156.2 357.8L1151.0 365.4L1144.5 366.5ZM1172.0 334.9L1179.0 332.5L1173.6 340.4L1166.8 342.6ZM1166.8 342.6L1173.6 340.4L1168.2 348.4L1161.5 350.2ZM1161.5 350.2L1168.2 348.4L1162.8 356.3L1156.2 357.8ZM1156.2 357.8L1162.8 356.3L1157.4 364.3L1151.0 365.4ZM1151.0 365.4L1157.4 364.3L1152.0 372.2L1145.7 373.1Z" fill="#4040e8" stroke="#4040e8"/><path d="M1138.1 367.5L1144.5 366.5L1139.4 374.0L1133.1 374.9ZM1144.5 366.5L1151.0 365.4L1145.7 373.1L1139.4 374.0Z" fill="#8888e0" stroke="#8888e0"/><path d="M417.0 616.7 L420.6 611.9 L424.2 606.8 L427.8 601.5 L431.4 596.2 L435.0 590.8 L438.7 585.4 L442.3 580.1 L446.0 574.9 L449.8 569.9 L453.5 565.2 L457.2 560.8 L461.0 556.7 L464.8 552.9 L468.6 549.4 L472.4 546.2 L476.3 543.3 L480.1 540.6 L484.0 538.1 L487.9 535.7 L491.8 533.5 L495.8 531.2 L499.7 528.9 L503.7 526.5 L507.7 524.0 L511.7 521.4 L515.8 518.7 L519.8 516.0 L523.9 513.2 L528.0 510.4 L532.1 507.6 L536.3 504.8 L540.4 501.9 L544.6 499.1 L548.8 496.3 L553.1 493.6 L557.3 490.9 L561.6 488.2 L565.9 485.6 L570.2 483.1 L574.5 480.5 L578.9 478.1 L583.2 475.7 L587.6 473.3 L592.1 471.0 L596.5 468.7 L601.0 466.4 L605.5 464.2 L610.0 462.0 L614.5 459.9 L619.1 457.8 L623.6 455.7 L628.2 453.6 L632.9 451.6 L637.5 449.6 L642.2 447.7 L646.9 445.7 L651.6 443.8 L656.3 441.9 L661.1 440.1 L665.9 438.2 L670.7 436.4 L675.5 434.5 L680.4 432.7 L685.3 430.9 L690.2 429.1 L695.1 427.3 L700.1 425.5 L705.0 423.7 L710.0 421.9 L715.1 420.1 L720.1 418.3 L725.2 416.5 L730.3 414.7 L735.5 412.9 L740.6 411.1 L745.8 409.3 L751.0 407.5 L756.3 405.7 L761.5 403.9 L766.8 402.1 L772.1 400.3 L777.5 398.6 L782.8 396.8 L788.2 395.0 L793.7 393.3 L799.1 391.5 L804.6 389.8 L810.1 388.0 L815.6 386.3 L821.2 384.6 L826.8 382.9 L832.4 381.2 L838.0 379.5 L843.7 377.8 L849.4 376.2 L855.1 374.6 L860.9 372.9 L866.7 371.3 L872.5 369.7 L878.3 368.2 L884.2 366.6 L890.1 365.1 L896.0 363.6 L902.0 362.1 L908.0 360.6 L914.0 359.1 L920.1 357.7 L926.2 356.3 L932.3 355.0 L938.4 353.6 L944.6 352.3 L950.8 351.1 L957.0 349.9 L963.3 348.7 L969.6 347.5 L975.9 346.5 L982.3 345.4 L988.7 344.4 L995.1 343.5 L1001.6 342.6 L1008.0 341.8 L1014.6 341.0 L1021.1 340.3 L1027.7 339.7 L1034.3 339.2 L1041.0 338.7 L1047.7 338.3 L1054.4 337.9 L1061.1 337.7 L1067.9 337.5 L1074.8 337.5 L1081.6 337.5 L1088.5 337.6 L1095.4 337.8 L1102.4 338.1 L1109.4 338.5 L1116.3 339.0 L1123.3 339.3 L1130.2 339.6 L1137.2 339.6 L1144.2 339.5 L1151.1 339.0 L1158.1 338.1 L1165.1 336.8 L1172.0 334.9 L1179.0 332.5 L1152.0 372.2 L1145.7 373.1 L1139.4 374.0 L1133.1 374.9 L1126.8 375.8 L1120.5 376.7 L1114.2 377.7 L1107.9 378.7 L1101.6 379.7 L1095.3 380.7 L1089.0 381.7 L1082.7 382.8 L1076.4 383.8 L1070.1 384.9 L1063.9 386.0 L1057.7 387.1 L1051.5 388.3 L1045.3 389.4 L1039.2 390.6 L1033.1 391.7 L1027.1 392.9 L1021.1 394.1 L1015.1 395.3 L1009.1 396.5 L1003.2 397.8 L997.3 399.0 L991.4 400.3 L985.3 401.6 L979.2 402.9 L973.2 404.3 L967.1 405.7 L961.1 407.0 L955.1 408.4 L949.2 409.9 L943.2 411.3 L937.4 412.7 L931.5 414.2 L925.7 415.6 L919.8 417.1 L914.1 418.6 L908.3 420.1 L902.6 421.6 L896.9 423.1 L891.2 424.7 L885.6 426.2 L880.0 427.8 L874.4 429.4 L868.9 430.9 L863.3 432.5 L857.8 434.1 L852.4 435.7 L846.9 437.4 L841.5 439.0 L836.1 440.7 L830.8 442.3 L825.4 444.0 L820.1 445.7 L814.8 447.3 L809.6 449.0 L804.4 450.7 L799.1 452.5 L793.8 454.2 L788.5 456.0 L783.2 457.8 L777.9 459.6 L772.7 461.5 L767.5 463.3 L762.3 465.1 L757.1 467.0 L752.0 468.8 L746.9 470.7 L741.8 472.6 L736.8 474.4 L731.7 476.3 L726.7 478.2 L721.7 480.1 L716.8 482.0 L711.8 484.0 L706.9 485.9 L702.1 487.8 L697.2 489.8 L692.4 491.7 L687.6 493.7 L682.8 495.7 L678.0 497.6 L673.3 499.6 L668.6 501.6 L663.9 503.6 L659.2 505.6 L654.5 507.6 L649.9 509.6 L645.3 511.6 L640.8 513.7 L636.2 515.7 L631.7 517.7 L627.2 519.8 L622.7 521.8 L618.2 523.9 L613.8 525.9 L609.3 528.0 L605.0 530.0 L600.5 532.2 L596.0 534.3 L591.6 536.4 L587.2 538.6 L582.8 540.7 L578.4 542.9 L574.0 545.0 L569.7 547.2 L565.4 549.4 L561.1 551.6 L556.8 553.8 L552.6 556.0 L548.3 558.2 L544.1 560.5 L539.9 562.7 L535.8 565.0 L531.6 567.2 L527.5 569.5 L523.4 571.8 L519.3 574.1 L515.3 576.5 L511.2 578.8 L507.2 581.2 L503.2 583.5 L499.2 585.9 L495.2 588.3 L491.3 590.7 L487.4 593.2 L483.5 595.6 L479.6 598.1 L475.7 600.6 L471.9 603.1 L468.0 605.6 L464.2 608.1 L460.5 610.7 L456.7 613.2 L452.9 615.8 L449.2 618.4 L445.5 621.1 L441.8 623.7 L438.1 626.4 L434.5 629.1 L430.8 631.9 L427.2 634.8 L423.6 637.7 L420.0 640.7Z M420.6 611.9 L423.6 637.7 M424.2 606.8 L427.2 634.8 M427.8 601.5 L430.8 631.9 M431.4 596.2 L434.5 629.1 M435.0 590.8 L438.1 626.4 M438.7 585.4 L441.8 623.7 M442.3 580.1 L445.5 621.1 M446.0 574.9 L449.2 618.4 M449.8 569.9 L452.9 615.8 M453.5 565.2 L456.7 613.2 M457.2 560.8 L460.5 610.7 M461.0 556.7 L464.2 608.1 M464.8 552.9 L468.0 605.6 M468.6 549.4 L471.9 603.1 M472.4 546.2 L475.7 600.6 M476.3 543.3 L479.6 598.1 M480.1 540.6 L483.5 595.6 M484.0 538.1 L487.4 593.2 M487.9 535.7 L491.3 590.7 M491.8 533.5 L495.2 588.3 M495.8 531.2 L499.2 585.9 M499.7 528.9 L503.2 583.5 M503.7 526.5 L507.2 581.2 M507.7 524.0 L511.2 578.8 M511.7 521.4 L515.3 576.5 M515.8 518.7 L519.3 574.1 M519.8 516.0 L523.4 571.8 M523.9 513.2 L527.5 569.5 M528.0 510.4 L531.6 567.2 M532.1 507.6 L535.8 565.0 M536.3 504.8 L539.9 562.7 M540.4 501.9 L544.1 560.5 M544.6 499.1 L548.3 558.2 M548.8 496.3 L552.6 556.0 M553.1 493.6 L556.8 553.8 M557.3 490.9 L561.1 551.6 M561.6 488.2 L565.4 549.4 M565.9 485.6 L569.7 547.2 M570.2 483.1 L574.0 545.0 M574.5 480.5 L578.4 542.9 M578.9 478.1 L582.8 540.7 M583.2 475.7 L587.2 538.6 M587.6 473.3 L591.6 536.4 M592.1 471.0 L596.0 534.3 M596.5 468.7 L600.5 532.2 M601.0 466.4 L605.0 530.0 M605.5 464.2 L609.3 528.0 M610.0 462.0 L613.8 525.9 M614.5 459.9 L618.2 523.9 M619.1 457.8 L622.7 521.8 M623.6 455.7 L627.2 519.8 M628.2 453.6 L631.7 517.7 M632.9 451.6 L636.2 515.7 M637.5 449.6 L640.8 513.7 M642.2 447.7 L645.3 511.6 M646.9 445.7 L649.9 509.6 M651.6 443.8 L654.5 507.6 M656.3 441.9 L659.2 505.6 M661.1 440.1 L663.9 503.6 M665.9 438.2 L668.6 501.6 M670.7 436.4 L673.3 499.6 M675.5 434.5 L678.0 497.6 M680.4 432.7 L682.8 495.7 M685.3 430.9 L687.6 493.7 M690.2 429.1 L692.4 491.7 M695.1 427.3 L697.2 489.8 M700.1 425.5 L702.1 487.8 M705.0 423.7 L706.9 485.9 M710.0 421.9 L711.8 484.0 M715.1 420.1 L716.8 482.0 M720.1 418.3 L721.7 480.1 M725.2 416.5 L726.7 478.2 M730.3 414.7 L731.7 476.3 M735.5 412.9 L736.8 474.4 M740.6 411.1 L741.8 472.6 M745.8 409.3 L746.9 470.7 M751.0 407.5 L752.0 468.8 M756.3 405.7 L757.1 467.0 M761.5 403.9 L762.3 465.1 M766.8 402.1 L767.5 463.3 M772.1 400.3 L772.7 461.5 M777.5 398.6 L777.9 459.6 M782.8 396.8 L783.2 457.8 M788.2 395.0 L788.5 456.0 M793.7 393.3 L793.8 454.2 M799.1 391.5 L799.1 452.5 M804.6 389.8 L804.4 450.7 M810.1 388.0 L809.6 449.0 M815.6 386.3 L814.8 447.3 M821.2 384.6 L820.1 445.7 M826.8 382.9 L825.4 444.0 M832.4 381.2 L830.8 442.3 M838.0 379.5 L836.1 440.7 M843.7 377.8 L841.5 439.0 M849.4 376.2 L846.9 437.4 M855.1 374.6 L852.4 435.7 M860.9 372.9 L857.8 434.1 M866.7 371.3 L863.3 432.5 M872.5 369.7 L868.9 430.9 M878.3 368.2 L874.4 429.4 M884.2 366.6 L880.0 427.8 M890.1 365.1 L885.6 426.2 M896.0 363.6 L891.2 424.7 M902.0 362.1 L896.9 423.1 M908.0 360.6 L902.6 421.6 M914.0 359.1 L908.3 420.1 M920.1 357.7 L914.1 418.6 M926.2 356.3 L919.8 417.1 M932.3 355.0 L925.7 415.6 M938.4 353.6 L931.5 414.2 M944.6 352.3 L937.4 412.7 M950.8 351.1 L943.2 411.3 M957.0 349.9 L949.2 409.9 M963.3 348.7 L955.1 408.4 M969.6 347.5 L961.1 407.0 M975.9 346.5 L967.1 405.7 M982.3 345.4 L973.2 404.3 M988.7 344.4 L979.2 402.9 M995.1 343.5 L985.3 401.6 M1001.6 342.6 L991.4 400.3 M1008.0 341.8 L997.3 399.0 M1014.6 341.0 L1003.2 397.8 M1021.1 340.3 L1009.1 396.5 M1027.7 339.7 L1015.1 395.3 M1034.3 339.2 L1021.1 394.1 M1041.0 338.7 L1027.1 392.9 M1047.7 338.3 L1033.1 391.7 M1054.4 337.9 L1039.2 390.6 M1061.1 337.7 L1045.3 389.4 M1067.9 337.5 L1051.5 388.3 M1074.8 337.5 L1057.7 387.1 M1081.6 337.5 L1063.9 386.0 M1088.5 337.6 L1070.1 384.9 M1095.4 337.8 L1076.4 383.8 M1102.4 338.1 L1082.7 382.8 M1109.4 338.5 L1089.0 381.7 M1116.3 339.0 L1095.3 380.7 M1123.3 339.3 L1101.6 379.7 M1130.2 339.6 L1107.9 378.7 M1137.2 339.6 L1114.2 377.7 M1144.2 339.5 L1120.5 376.7 M1151.1 339.0 L1126.8 375.8 M1158.1 338.1 L1133.1 374.9 M1165.1 336.8 L1139.4 374.0 M1172.0 334.9 L1145.7 373.1 M417.6 621.5 L421.2 617.0 L424.8 612.4 L428.4 607.6 L432.0 602.8 L435.6 597.9 L439.3 593.1 L443.0 588.3 L446.7 583.6 L450.4 579.1 L454.1 574.8 L457.9 570.8 L461.6 567.0 L465.4 563.4 L469.3 560.1 L473.1 557.1 L476.9 554.2 L480.8 551.6 L484.7 549.1 L488.6 546.7 L492.5 544.4 L496.5 542.1 L500.4 539.8 L504.4 537.4 L508.4 534.9 L512.4 532.4 L516.5 529.8 L520.6 527.2 L524.6 524.5 L528.7 521.8 L532.9 519.1 L537.0 516.3 L541.2 513.6 L545.4 510.9 L549.6 508.2 L553.8 505.6 L558.1 503.0 L562.3 500.4 L566.6 497.9 L570.9 495.5 L575.3 493.0 L579.6 490.6 L584.0 488.2 L588.4 485.9 L592.9 483.6 L597.3 481.4 L601.8 479.1 L606.2 477.0 L610.7 474.8 L615.2 472.7 L619.8 470.6 L624.3 468.5 L628.9 466.5 L633.5 464.4 L638.2 462.4 L642.8 460.5 L647.5 458.5 L652.2 456.6 L656.9 454.7 L661.6 452.8 L666.4 450.9 L671.2 449.0 L676.0 447.2 L680.9 445.3 L685.7 443.5 L690.6 441.6 L695.5 439.8 L700.5 438.0 L705.4 436.1 L710.4 434.3 L715.4 432.5 L720.5 430.7 L725.5 428.8 L730.6 427.0 L735.7 425.2 L740.9 423.4 L746.0 421.6 L751.2 419.8 L756.4 417.9 L761.7 416.1 L766.9 414.3 L772.2 412.6 L777.6 410.8 L782.9 409.0 L788.3 407.2 L793.7 405.5 L799.1 403.7 L804.5 402.0 L810.0 400.2 L815.5 398.5 L821.0 396.8 L826.5 395.1 L832.1 393.4 L837.6 391.7 L843.3 390.1 L848.9 388.4 L854.6 386.8 L860.3 385.2 L866.0 383.6 L871.8 382.0 L877.6 380.4 L883.4 378.8 L889.2 377.3 L895.1 375.8 L901.0 374.3 L906.9 372.8 L912.9 371.3 L918.9 369.9 L924.9 368.5 L930.9 367.1 L937.0 365.7 L943.1 364.4 L949.3 363.1 L955.5 361.9 L961.7 360.6 L967.9 359.4 L974.2 358.3 L980.5 357.2 L986.8 356.1 L993.1 355.1 L999.5 354.1 L1005.9 353.2 L1012.3 352.4 L1018.7 351.6 L1025.2 350.8 L1031.7 350.1 L1038.2 349.5 L1044.8 349.0 L1051.4 348.5 L1058.0 348.0 L1064.6 347.7 L1071.3 347.4 L1078.1 347.2 L1084.8 347.1 L1091.6 347.0 L1098.4 347.1 L1105.3 347.2 L1112.1 347.3 L1118.9 347.4 L1125.8 347.4 L1132.6 347.3 L1139.4 346.9 L1146.3 346.3 L1153.1 345.4 L1159.9 344.2 L1166.8 342.6 L1173.6 340.4 M418.2 626.3 L421.8 622.2 L425.4 618.0 L429.0 613.7 L432.6 609.4 L436.3 605.0 L439.9 600.7 L443.6 596.5 L447.3 592.3 L451.0 588.3 L454.8 584.4 L458.5 580.7 L462.3 577.2 L466.1 574.0 L469.9 570.9 L473.7 567.9 L477.6 565.2 L481.5 562.6 L485.4 560.1 L489.3 557.7 L493.2 555.4 L497.1 553.1 L501.1 550.7 L505.1 548.3 L509.1 545.9 L513.1 543.4 L517.2 540.9 L521.3 538.3 L525.4 535.8 L529.5 533.2 L533.6 530.5 L537.7 527.9 L541.9 525.3 L546.1 522.7 L550.3 520.2 L554.6 517.6 L558.8 515.1 L563.1 512.7 L567.4 510.2 L571.7 507.8 L576.1 505.5 L580.4 503.1 L584.8 500.8 L589.2 498.5 L593.6 496.3 L598.1 494.1 L602.6 491.9 L607.0 489.7 L611.5 487.6 L616.0 485.5 L620.5 483.4 L625.0 481.3 L629.6 479.3 L634.2 477.2 L638.8 475.2 L643.4 473.3 L648.1 471.3 L652.8 469.3 L657.5 467.4 L662.2 465.5 L666.9 463.6 L671.7 461.7 L676.5 459.8 L681.3 457.9 L686.2 456.0 L691.0 454.2 L695.9 452.3 L700.9 450.4 L705.8 448.6 L710.8 446.7 L715.8 444.9 L720.8 443.0 L725.8 441.2 L730.9 439.3 L736.0 437.5 L741.1 435.7 L746.2 433.8 L751.4 432.0 L756.6 430.2 L761.8 428.4 L767.1 426.6 L772.3 424.8 L777.6 423.0 L783.0 421.2 L788.3 419.4 L793.7 417.7 L799.1 415.9 L804.5 414.2 L809.9 412.4 L815.3 410.7 L820.8 409.0 L826.2 407.3 L831.7 405.6 L837.3 404.0 L842.8 402.3 L848.4 400.7 L854.0 399.0 L859.7 397.4 L865.3 395.8 L871.0 394.2 L876.8 392.6 L882.5 391.1 L888.3 389.5 L894.1 388.0 L900.0 386.5 L905.8 385.0 L911.7 383.5 L917.7 382.1 L923.6 380.6 L929.6 379.2 L935.6 377.8 L941.7 376.5 L947.8 375.2 L953.9 373.9 L960.0 372.6 L966.2 371.3 L972.4 370.1 L978.6 369.0 L984.9 367.8 L991.2 366.7 L997.5 365.7 L1003.7 364.7 L1010.0 363.7 L1016.3 362.8 L1022.7 362.0 L1029.0 361.1 L1035.4 360.4 L1041.9 359.6 L1048.3 359.0 L1054.8 358.4 L1061.4 357.8 L1067.9 357.3 L1074.5 356.9 L1081.1 356.5 L1087.8 356.2 L1094.5 356.0 L1101.2 355.8 L1107.9 355.6 L1114.6 355.5 L1121.3 355.2 L1128.0 354.9 L1134.7 354.4 L1141.4 353.7 L1148.1 352.8 L1154.8 351.6 L1161.5 350.2 L1168.2 348.4 M418.8 631.1 L422.4 627.3 L426.0 623.6 L429.6 619.8 L433.2 615.9 L436.9 612.1 L440.5 608.4 L444.2 604.7 L447.9 601.0 L451.7 597.5 L455.4 594.0 L459.2 590.7 L462.9 587.5 L466.7 584.5 L470.6 581.6 L474.4 578.8 L478.3 576.2 L482.1 573.6 L486.0 571.2 L489.9 568.7 L493.9 566.4 L497.8 564.0 L501.8 561.7 L505.8 559.3 L509.8 556.9 L513.8 554.4 L517.9 552.0 L522.0 549.5 L526.1 547.0 L530.2 544.5 L534.3 542.0 L538.5 539.5 L542.7 537.0 L546.9 534.6 L551.1 532.1 L555.3 529.7 L559.6 527.3 L563.9 524.9 L568.2 522.6 L572.5 520.2 L576.8 517.9 L581.2 515.7 L585.6 513.4 L590.0 511.2 L594.4 509.0 L598.9 506.8 L603.4 504.6 L607.8 502.5 L612.2 500.4 L616.7 498.3 L621.2 496.2 L625.7 494.1 L630.3 492.1 L634.9 490.1 L639.5 488.0 L644.1 486.0 L648.7 484.1 L653.4 482.1 L658.0 480.1 L662.7 478.2 L667.5 476.2 L672.2 474.3 L677.0 472.4 L681.8 470.5 L686.6 468.6 L691.5 466.7 L696.4 464.8 L701.3 462.9 L706.2 461.0 L711.1 459.1 L716.1 457.3 L721.1 455.4 L726.1 453.5 L731.2 451.7 L736.2 449.8 L741.3 448.0 L746.5 446.1 L751.6 444.3 L756.8 442.5 L762.0 440.6 L767.2 438.8 L772.5 437.0 L777.7 435.2 L783.0 433.4 L788.4 431.6 L793.7 429.9 L799.1 428.1 L804.4 426.4 L809.8 424.6 L815.2 422.9 L820.5 421.2 L826.0 419.5 L831.4 417.9 L836.9 416.2 L842.4 414.5 L847.9 412.9 L853.5 411.3 L859.1 409.7 L864.7 408.0 L870.3 406.5 L876.0 404.9 L881.7 403.3 L887.4 401.8 L893.2 400.2 L898.9 398.7 L904.8 397.2 L910.6 395.7 L916.5 394.2 L922.4 392.8 L928.3 391.4 L934.3 390.0 L940.2 388.6 L946.3 387.2 L952.3 385.9 L958.4 384.5 L964.5 383.2 L970.6 382.0 L976.8 380.7 L983.0 379.5 L989.2 378.3 L995.5 377.2 L1001.6 376.1 L1007.7 375.1 L1013.9 374.1 L1020.1 373.1 L1026.4 372.1 L1032.7 371.2 L1039.0 370.3 L1045.3 369.5 L1051.7 368.7 L1058.1 368.0 L1064.5 367.3 L1071.0 366.6 L1077.5 366.0 L1084.0 365.4 L1090.6 364.9 L1097.1 364.4 L1103.7 364.0 L1110.3 363.5 L1116.8 363.0 L1123.4 362.5 L1130.0 361.8 L1136.5 361.1 L1143.1 360.2 L1149.7 359.1 L1156.2 357.8 L1162.8 356.3 M419.4 635.9 L423.0 632.5 L426.6 629.2 L430.2 625.8 L433.8 622.5 L437.5 619.3 L441.2 616.0 L444.9 612.9 L448.6 609.7 L452.3 606.6 L456.0 603.6 L459.8 600.7 L463.6 597.8 L467.4 595.0 L471.2 592.3 L475.1 589.7 L478.9 587.1 L482.8 584.6 L486.7 582.2 L490.6 579.7 L494.6 577.4 L498.5 575.0 L502.5 572.6 L506.5 570.2 L510.5 567.8 L514.6 565.5 L518.6 563.1 L522.7 560.7 L526.8 558.3 L530.9 555.9 L535.0 553.5 L539.2 551.1 L543.4 548.8 L547.6 546.4 L551.8 544.1 L556.1 541.7 L560.3 539.4 L564.6 537.2 L568.9 534.9 L573.3 532.6 L577.6 530.4 L582.0 528.2 L586.4 526.0 L590.8 523.8 L595.2 521.6 L599.7 519.5 L604.2 517.3 L608.6 515.2 L613.0 513.1 L617.5 511.1 L621.9 509.0 L626.5 506.9 L631.0 504.9 L635.5 502.9 L640.1 500.8 L644.7 498.8 L649.3 496.8 L654.0 494.8 L658.6 492.9 L663.3 490.9 L668.0 488.9 L672.8 487.0 L677.5 485.0 L682.3 483.1 L687.1 481.1 L691.9 479.2 L696.8 477.3 L701.7 475.4 L706.6 473.5 L711.5 471.6 L716.4 469.7 L721.4 467.8 L726.4 465.9 L731.4 464.0 L736.5 462.1 L741.6 460.3 L746.7 458.4 L751.8 456.6 L757.0 454.7 L762.1 452.9 L767.3 451.1 L772.6 449.2 L777.8 447.4 L783.1 445.6 L788.4 443.8 L793.8 442.0 L799.1 440.3 L804.4 438.5 L809.7 436.8 L815.0 435.1 L820.3 433.4 L825.7 431.8 L831.1 430.1 L836.5 428.4 L842.0 426.8 L847.4 425.1 L852.9 423.5 L858.5 421.9 L864.0 420.3 L869.6 418.7 L875.2 417.1 L880.8 415.5 L886.5 414.0 L892.2 412.5 L897.9 410.9 L903.7 409.4 L909.5 407.9 L915.3 406.4 L921.1 405.0 L927.0 403.5 L932.9 402.1 L938.8 400.6 L944.8 399.2 L950.7 397.9 L956.8 396.5 L962.8 395.1 L968.9 393.8 L975.0 392.5 L981.1 391.2 L987.3 390.0 L993.4 388.7 L999.4 387.6 L1005.5 386.4 L1011.5 385.3 L1017.6 384.2 L1023.7 383.1 L1029.9 382.1 L1036.1 381.0 L1042.3 380.0 L1048.5 379.1 L1054.8 378.1 L1061.1 377.2 L1067.4 376.3 L1073.8 375.5 L1080.2 374.6 L1086.6 373.8 L1093.0 373.1 L1099.5 372.3 L1105.9 371.6 L1112.4 370.9 L1118.8 370.1 L1125.2 369.3 L1131.7 368.4 L1138.1 367.5 L1144.5 366.5 L1151.0 365.4 L1157.4 364.3" fill="none" stroke="#000" stroke-width="0.8"/><path d="M285.0 720.9L288.0 721.2L292.0 728.8L289.0 728.2ZM289.0 728.2L292.0 728.8L295.9 736.4L293.0 735.5ZM293.0 735.5L295.9 736.4L299.9 744.0L297.0 742.7ZM297.0 742.7L299.9 744.0L303.9 751.6L301.0 750.0ZM288.0 721.2L291.0 721.4L294.9 729.2L292.0 728.8ZM292.0 728.8L294.9 729.2L298.8 737.0L295.9 736.4ZM295.9 736.4L298.8 737.0L302.8 744.8L299.9 744.0ZM299.9 744.0L302.8 744.8L306.7 752.6L303.9 751.6ZM291.0 721.4L294.0 721.6L297.9 729.4L294.9 729.2ZM294.9 729.2L297.9 729.4L301.8 737.2L298.8 737.0ZM298.8 737.0L301.8 737.2L305.7 745.1L302.8 744.8ZM302.8 744.8L305.7 745.1L309.6 752.9L306.7 752.6ZM294.0 721.6L296.9 721.7L300.8 729.4L297.9 729.4ZM297.9 729.4L300.8 729.4L304.7 737.2L301.8 737.2ZM301.8 737.2L304.7 737.2L308.6 745.0L305.7 745.1ZM305.7 745.1L308.6 745.0L312.4 752.7L309.6 752.9ZM296.9 721.7L299.9 721.7L303.8 729.3L300.8 729.4ZM300.8 729.4L303.8 729.3L307.6 736.8L304.7 737.2ZM304.7 737.2L307.6 736.8L311.5 744.4L308.6 745.0ZM299.9 721.7L302.9 721.6L306.7 728.9L303.8 729.3ZM303.8 729.3L306.7 728.9L310.5 736.2L307.6 736.8ZM302.9 721.6L305.9 720.9L309.7 728.0L306.7 728.9ZM305.9 720.9L308.9 719.8L312.6 726.6L309.7 728.0ZM1044.8 334.3L1053.5 333.8L1055.5 335.8L1046.8 336.3ZM1046.8 336.3L1055.5 335.8L1057.5 337.8L1048.8 338.2ZM1049.5 329.8L1058.4 329.2L1060.2 331.3L1051.5 331.8ZM1051.5 331.8L1060.2 331.3L1062.0 333.4L1053.5 333.8ZM1053.5 333.8L1062.0 333.4L1063.8 335.5L1055.5 335.8ZM1055.5 335.8L1063.8 335.5L1065.6 337.6L1057.5 337.8ZM1058.4 329.2L1067.3 328.8L1068.9 331.0L1060.2 331.3ZM1060.2 331.3L1068.9 331.0L1070.5 333.1L1062.0 333.4ZM1062.0 333.4L1070.5 333.1L1072.0 335.3L1063.8 335.5ZM1063.8 335.5L1072.0 335.3L1073.6 337.5L1065.6 337.6ZM1067.3 328.8L1076.3 328.6L1077.6 330.8L1068.9 331.0ZM1068.9 331.0L1077.6 330.8L1079.0 333.0L1070.5 333.1ZM1070.5 333.1L1079.0 333.0L1080.3 335.3L1072.0 335.3ZM1072.0 335.3L1080.3 335.3L1081.7 337.5L1073.6 337.5ZM1076.3 328.6L1085.2 328.5L1086.4 330.8L1077.6 330.8ZM1077.6 330.8L1086.4 330.8L1087.5 333.1L1079.0 333.0Z" fill="#0000f8" stroke="#0000f8"/><path d="M308.6 745.0L311.5 744.4L315.3 752.0L312.4 752.7ZM307.6 736.8L310.5 736.2L314.4 743.5L311.5 744.4ZM311.5 744.4L314.4 743.5L318.2 750.8L315.3 752.0ZM306.7 728.9L309.7 728.0L313.5 735.0L310.5 736.2ZM310.5 736.2L313.5 735.0L317.2 742.1L314.4 743.5ZM314.4 743.5L317.2 742.1L321.0 749.1L318.2 750.8ZM309.7 728.0L312.6 726.6L316.4 733.4L313.5 735.0ZM313.5 735.0L316.4 733.4L320.1 740.2L317.2 742.1ZM317.2 742.1L320.1 740.2L323.9 747.0L321.0 749.1ZM308.9 719.8L311.9 718.2L315.6 724.8L312.6 726.6ZM312.6 726.6L315.6 724.8L319.3 731.4L316.4 733.4ZM316.4 733.4L319.3 731.4L323.0 737.9L320.1 740.2ZM320.1 740.2L323.0 737.9L326.8 744.5L323.9 747.0ZM311.9 718.2L314.8 716.2L318.5 722.6L315.6 724.8ZM315.6 724.8L318.5 722.6L322.2 728.9L319.3 731.4ZM319.3 731.4L322.2 728.9L325.9 735.3L323.0 737.9ZM323.0 737.9L325.9 735.3L329.6 741.6L326.8 744.5ZM314.8 716.2L317.8 713.9L321.5 720.0L318.5 722.6ZM318.5 722.6L321.5 720.0L325.1 726.1L322.2 728.9ZM322.2 728.9L325.1 726.1L328.8 732.3L325.9 735.3ZM325.9 735.3L328.8 732.3L332.5 738.4L329.6 741.6ZM317.8 713.9L320.8 711.2L324.4 717.1L321.5 720.0ZM321.5 720.0L324.4 717.1L328.1 723.1L325.1 726.1ZM325.1 726.1L328.1 723.1L331.7 729.0L328.8 732.3ZM320.8 711.2L323.8 708.3L327.4 714.0L324.4 717.1ZM324.4 717.1L327.4 714.0L331.0 719.7L328.1 723.1ZM323.8 708.3L326.8 705.1L330.3 710.6L327.4 714.0ZM1014.9 333.9L1023.5 332.6L1025.5 334.3L1016.9 335.5ZM1016.9 335.5L1025.5 334.3L1027.5 336.0L1018.9 337.0ZM1018.9 337.0L1027.5 336.0L1029.5 337.7L1020.9 338.6ZM1020.9 338.6L1029.5 337.7L1031.5 339.4L1022.9 340.2ZM1023.5 332.6L1032.1 331.4L1034.1 333.2L1025.5 334.3ZM1025.5 334.3L1034.1 333.2L1036.1 335.1L1027.5 336.0ZM1027.5 336.0L1036.1 335.1L1038.1 336.9L1029.5 337.7ZM1029.5 337.7L1038.1 336.9L1040.1 338.7L1031.5 339.4ZM1032.1 331.4L1040.8 330.5L1042.8 332.4L1034.1 333.2ZM1034.1 333.2L1042.8 332.4L1044.8 334.3L1036.1 335.1ZM1036.1 335.1L1044.8 334.3L1046.8 336.3L1038.1 336.9ZM1038.1 336.9L1046.8 336.3L1048.8 338.2L1040.1 338.7ZM1040.8 330.5L1049.5 329.8L1051.5 331.8L1042.8 332.4ZM1042.8 332.4L1051.5 331.8L1053.5 333.8L1044.8 334.3Z" fill="#0068ff" stroke="#0068ff"/><path d="M328.8 732.3L331.7 729.0L335.3 734.9L332.5 738.4ZM328.1 723.1L331.0 719.7L334.6 725.4L331.7 729.0ZM331.7 729.0L334.6 725.4L338.2 731.1L335.3 734.9ZM327.4 714.0L330.3 710.6L333.9 716.1L331.0 719.7ZM331.0 719.7L333.9 716.1L337.5 721.6L334.6 725.4ZM334.6 725.4L337.5 721.6L341.1 727.1L338.2 731.1ZM326.8 705.1L329.8 701.6L333.3 706.9L330.3 710.6ZM330.3 710.6L333.3 706.9L336.8 712.2L333.9 716.1ZM333.9 716.1L336.8 712.2L340.4 717.5L337.5 721.6ZM337.5 721.6L340.4 717.5L343.9 722.8L341.1 727.1ZM329.8 701.6L332.7 698.1L336.3 703.2L333.3 706.9ZM333.3 706.9L336.3 703.2L339.8 708.2L336.8 712.2ZM336.8 712.2L339.8 708.2L343.3 713.3L340.4 717.5ZM340.4 717.5L343.3 713.3L346.8 718.4L343.9 722.8ZM332.7 698.1L335.7 694.3L339.2 699.2L336.3 703.2ZM336.3 703.2L339.2 699.2L342.7 704.1L339.8 708.2ZM339.8 708.2L342.7 704.1L346.2 709.0L343.3 713.3ZM343.3 713.3L346.2 709.0L349.6 713.9L346.8 718.4ZM335.7 694.3L338.7 690.5L342.2 695.2L339.2 699.2ZM339.2 699.2L342.2 695.2L345.6 699.8L342.7 704.1ZM342.7 704.1L345.6 699.8L349.1 704.5L346.2 709.0ZM346.2 709.0L349.1 704.5L352.5 709.2L349.6 713.9ZM338.7 690.5L341.7 686.6L345.1 691.0L342.2 695.2ZM342.2 695.2L345.1 691.0L348.5 695.5L345.6 699.8ZM345.6 699.8L348.5 695.5L351.9 700.0L349.1 704.5ZM341.7 686.6L344.7 682.6L348.1 686.9L345.1 691.0ZM345.1 691.0L348.1 686.9L351.5 691.1L348.5 695.5ZM344.7 682.6L347.7 678.6L351.0 682.6L348.1 686.9ZM981.5 339.9L989.7 338.3L991.7 339.5L983.5 341.0ZM983.5 341.0L991.7 339.5L993.7 340.7L985.5 342.1ZM985.5 342.1L993.7 340.7L995.7 341.9L987.5 343.2ZM987.5 343.2L995.7 341.9L997.7 343.1L989.5 344.3ZM989.7 338.3L998.1 336.7L1000.1 338.1L991.7 339.5ZM991.7 339.5L1000.1 338.1L1002.1 339.4L993.7 340.7ZM993.7 340.7L1002.1 339.4L1004.1 340.7L995.7 341.9ZM995.7 341.9L1004.1 340.7L1006.1 342.0L997.7 343.1ZM998.1 336.7L1006.4 335.5L1008.4 336.9L1000.1 338.1ZM1000.1 338.1L1008.4 336.9L1010.4 338.3L1002.1 339.4ZM1002.1 339.4L1010.4 338.3L1012.4 339.7L1004.1 340.7ZM1004.1 340.7L1012.4 339.7L1014.4 341.0L1006.1 342.0ZM1006.4 335.5L1014.9 333.9L1016.9 335.5L1008.4 336.9ZM1008.4 336.9L1016.9 335.5L1018.9 337.0L1010.4 338.3ZM1010.4 338.3L1018.9 337.0L1020.9 338.6L1012.4 339.7ZM1012.4 339.7L1020.9 338.6L1022.9 340.2L1014.4 341.0Z" fill="#00c0f8" stroke="#00c0f8"/><path d="M349.1 704.5L351.9 700.0L355.4 704.4L352.5 709.2ZM348.5 695.5L351.5 691.1L354.8 695.4L351.9 700.0ZM351.9 700.0L354.8 695.4L358.2 699.6L355.4 704.4ZM348.1 686.9L351.0 682.6L354.4 686.7L351.5 691.1ZM351.5 691.1L354.4 686.7L357.7 690.7L354.8 695.4ZM354.8 695.4L357.7 690.7L361.1 694.8L358.2 699.6ZM347.7 678.6L350.6 674.6L354.0 678.4L351.0 682.6ZM351.0 682.6L354.0 678.4L357.3 682.3L354.4 686.7ZM354.4 686.7L357.3 682.3L360.6 686.1L357.7 690.7ZM350.6 674.6L353.6 670.5L356.9 674.2L354.0 678.4ZM354.0 678.4L356.9 674.2L360.2 677.9L357.3 682.3ZM357.3 682.3L360.2 677.9L363.5 681.5L360.6 686.1ZM353.6 670.5L356.6 666.4L359.9 669.9L356.9 674.2ZM356.9 674.2L359.9 669.9L363.1 673.4L360.2 677.9ZM356.6 666.4L359.6 662.2L362.8 665.7L359.9 669.9ZM945.4 350.1L953.2 348.4L955.2 349.1L947.4 350.7ZM947.4 350.7L955.2 349.1L957.2 349.8L949.4 351.4ZM949.2 346.9L957.2 345.1L959.2 345.9L951.2 347.6ZM951.2 347.6L959.2 345.9L961.2 346.7L953.2 348.4ZM953.2 348.4L961.2 346.7L963.2 347.5L955.2 349.1ZM955.2 349.1L963.2 347.5L965.2 348.3L957.2 349.8ZM957.2 345.1L965.2 343.3L967.2 344.2L959.2 345.9ZM959.2 345.9L967.2 344.2L969.2 345.1L961.2 346.7ZM961.2 346.7L969.2 345.1L971.2 346.0L963.2 347.5ZM963.2 347.5L971.2 346.0L973.2 346.9L965.2 348.3ZM965.2 343.3L973.3 341.6L975.3 342.6L967.2 344.2ZM967.2 344.2L975.3 342.6L977.3 343.6L969.2 345.1ZM969.2 345.1L977.3 343.6L979.3 344.6L971.2 346.0ZM971.2 346.0L979.3 344.6L981.3 345.6L973.2 346.9ZM973.3 341.6L981.5 339.9L983.5 341.0L975.3 342.6ZM975.3 342.6L983.5 341.0L985.5 342.1L977.3 343.6ZM977.3 343.6L985.5 342.1L987.5 343.2L979.3 344.6ZM979.3 344.6L987.5 343.2L989.5 344.3L981.3 345.6Z" fill="#00e8d8" stroke="#00e8d8"/><path d="M357.7 690.7L360.6 686.1L364.0 690.0L361.1 694.8ZM360.6 686.1L363.5 681.5L366.8 685.2L364.0 690.0ZM360.2 677.9L363.1 673.4L366.4 677.0L363.5 681.5ZM363.5 681.5L366.4 677.0L369.7 680.5L366.8 685.2ZM359.9 669.9L362.8 665.7L366.1 669.1L363.1 673.4ZM363.1 673.4L366.1 669.1L369.3 672.5L366.4 677.0ZM366.4 677.0L369.3 672.5L372.5 675.9L369.7 680.5ZM359.6 662.2L362.6 658.1L365.8 661.4L362.8 665.7ZM362.8 665.7L365.8 661.4L369.0 664.7L366.1 669.1ZM366.1 669.1L369.0 664.7L372.2 668.1L369.3 672.5ZM369.3 672.5L372.2 668.1L375.4 671.4L372.5 675.9ZM362.6 658.1L365.6 654.0L368.7 657.2L365.8 661.4ZM365.8 661.4L368.7 657.2L371.9 660.5L369.0 664.7ZM369.0 664.7L371.9 660.5L375.1 663.8L372.2 668.1ZM365.6 654.0L368.5 649.9L371.7 653.1L368.7 657.2ZM368.7 657.2L371.7 653.1L374.8 656.3L371.9 660.5ZM368.5 649.9L371.5 645.9L374.6 649.1L371.7 653.1ZM920.1 354.9L927.8 353.0L929.8 353.6L922.1 355.4ZM922.1 355.4L929.8 353.6L931.8 354.1L924.1 355.9ZM924.1 355.9L931.8 354.1L933.8 354.6L926.1 356.3ZM925.8 352.5L933.6 350.6L935.6 351.2L927.8 353.0ZM927.8 353.0L935.6 351.2L937.6 351.8L929.8 353.6ZM929.8 353.6L937.6 351.8L939.6 352.4L931.8 354.1ZM931.8 354.1L939.6 352.4L941.6 353.0L933.8 354.6ZM933.6 350.6L941.4 348.7L943.4 349.4L935.6 351.2ZM935.6 351.2L943.4 349.4L945.4 350.1L937.6 351.8ZM937.6 351.8L945.4 350.1L947.4 350.7L939.6 352.4ZM939.6 352.4L947.4 350.7L949.4 351.4L941.6 353.0ZM941.4 348.7L949.2 346.9L951.2 347.6L943.4 349.4ZM943.4 349.4L951.2 347.6L953.2 348.4L945.4 350.1Z" fill="#10b088" stroke="#10b088"/><path d="M372.2 668.1L375.1 663.8L378.3 667.0L375.4 671.4ZM371.9 660.5L374.8 656.3L378.0 659.5L375.1 663.8ZM375.1 663.8L378.0 659.5L381.1 662.7L378.3 667.0ZM371.7 653.1L374.6 649.1L377.8 652.3L374.8 656.3ZM374.8 656.3L377.8 652.3L380.9 655.4L378.0 659.5ZM378.0 659.5L380.9 655.4L384.0 658.6L381.1 662.7ZM371.5 645.9L374.5 642.0L377.6 645.2L374.6 649.1ZM374.6 649.1L377.6 645.2L380.7 648.3L377.8 652.3ZM377.8 652.3L380.7 648.3L383.8 651.5L380.9 655.4ZM380.9 655.4L383.8 651.5L386.8 654.6L384.0 658.6ZM374.5 642.0L377.5 638.2L380.6 641.3L377.6 645.2ZM377.6 645.2L380.6 641.3L383.6 644.5L380.7 648.3ZM380.7 648.3L383.6 644.5L386.7 647.7L383.8 651.5ZM383.8 651.5L386.7 647.7L389.7 650.8L386.8 654.6ZM377.5 638.2L380.5 634.4L383.5 637.6L380.6 641.3ZM380.6 641.3L383.5 637.6L386.5 640.8L383.6 644.5ZM383.6 644.5L386.5 640.8L389.5 644.0L386.7 647.7ZM386.7 647.7L389.5 644.0L392.6 647.1L389.7 650.8ZM380.5 634.4L383.5 630.8L386.5 634.0L383.5 637.6ZM383.5 637.6L386.5 634.0L389.4 637.2L386.5 640.8ZM386.5 640.8L389.4 637.2L392.4 640.4L389.5 644.0ZM383.5 630.8L386.5 627.3L389.4 630.5L386.5 634.0ZM386.5 634.0L389.4 630.5L392.4 633.7L389.4 637.2ZM386.5 627.3L389.4 623.9L392.4 627.0L389.4 630.5ZM892.1 363.0L899.5 361.0L901.5 361.3L894.1 363.2ZM894.1 363.2L901.5 361.3L903.5 361.7L896.1 363.5ZM895.5 360.4L903.0 358.4L905.0 358.7L897.5 360.7ZM897.5 360.7L905.0 358.7L907.0 359.1L899.5 361.0ZM899.5 361.0L907.0 359.1L909.0 359.5L901.5 361.3ZM901.5 361.3L909.0 359.5L911.0 359.9L903.5 361.7ZM903.0 358.4L910.5 356.4L912.5 356.8L905.0 358.7ZM905.0 358.7L912.5 356.8L914.5 357.2L907.0 359.1ZM907.0 359.1L914.5 357.2L916.5 357.7L909.0 359.5ZM909.0 359.5L916.5 357.7L918.5 358.1L911.0 359.9ZM910.5 356.4L918.1 354.4L920.1 354.9L912.5 356.8ZM912.5 356.8L920.1 354.9L922.1 355.4L914.5 357.2ZM914.5 357.2L922.1 355.4L924.1 355.9L916.5 357.7ZM916.5 357.7L924.1 355.9L926.1 356.3L918.5 358.1ZM918.1 354.4L925.8 352.5L927.8 353.0L920.1 354.9Z" fill="#087a30" stroke="#087a30"/><path d="M389.5 644.0L392.4 640.4L395.4 643.6L392.6 647.1ZM389.4 637.2L392.4 633.7L395.3 636.8L392.4 640.4ZM392.4 640.4L395.3 636.8L398.3 640.0L395.4 643.6ZM389.4 630.5L392.4 627.0L395.3 630.2L392.4 633.7ZM392.4 633.7L395.3 630.2L398.2 633.4L395.3 636.8ZM395.3 636.8L398.2 633.4L401.2 636.6L398.3 640.0ZM389.4 623.9L392.4 620.6L395.3 623.7L392.4 627.0ZM392.4 627.0L395.3 623.7L398.2 626.8L395.3 630.2ZM395.3 630.2L398.2 626.8L401.1 630.0L398.2 633.4ZM398.2 633.4L401.1 630.0L404.0 633.1L401.2 636.6ZM392.4 620.6L395.4 617.3L398.3 620.4L395.3 623.7ZM395.3 623.7L398.3 620.4L401.1 623.5L398.2 626.8ZM398.2 626.8L401.1 623.5L404.0 626.6L401.1 630.0ZM401.1 630.0L404.0 626.6L406.9 629.6L404.0 633.1ZM395.4 617.3L398.4 614.2L401.2 617.2L398.3 620.4ZM398.3 620.4L401.2 617.2L404.1 620.1L401.1 623.5ZM401.1 623.5L404.1 620.1L406.9 623.1L404.0 626.6ZM398.4 614.2L401.4 611.0L404.2 613.9L401.2 617.2ZM401.2 617.2L404.2 613.9L407.0 616.8L404.1 620.1ZM401.4 611.0L404.4 607.9L407.2 610.6L404.2 613.9ZM866.3 368.5L873.5 366.4L875.5 366.7L868.3 368.7ZM868.3 368.7L875.5 366.7L877.5 366.9L870.3 368.9ZM870.3 368.9L877.5 366.9L879.5 367.1L872.3 369.0ZM872.3 369.0L879.5 367.1L881.5 367.3L874.3 369.2ZM873.5 366.4L880.8 364.4L882.8 364.6L875.5 366.7ZM875.5 366.7L882.8 364.6L884.8 364.9L877.5 366.9ZM877.5 366.9L884.8 364.9L886.8 365.2L879.5 367.1ZM879.5 367.1L886.8 365.2L888.8 365.4L881.5 367.3ZM880.8 364.4L888.1 362.4L890.1 362.7L882.8 364.6ZM882.8 364.6L890.1 362.7L892.1 363.0L884.8 364.9ZM884.8 364.9L892.1 363.0L894.1 363.2L886.8 365.2ZM886.8 365.2L894.1 363.2L896.1 363.5L888.8 365.4ZM888.1 362.4L895.5 360.4L897.5 360.7L890.1 362.7ZM890.1 362.7L897.5 360.7L899.5 361.0L892.1 363.0Z" fill="#2a7800" stroke="#2a7800"/><path d="M404.0 626.6L406.9 623.1L409.7 626.1L406.9 629.6ZM404.1 620.1L407.0 616.8L409.8 619.6L406.9 623.1ZM406.9 623.1L409.8 619.6L412.6 622.5L409.7 626.1ZM404.2 613.9L407.2 610.6L410.0 613.3L407.0 616.8ZM407.0 616.8L410.0 613.3L412.7 616.0L409.8 619.6ZM409.8 619.6L412.7 616.0L415.5 618.7L412.6 622.5ZM404.4 607.9L407.5 604.7L410.2 607.2L407.2 610.6ZM407.2 610.6L410.2 607.2L412.9 609.7L410.0 613.3ZM410.0 613.3L412.9 609.7L415.7 612.3L412.7 616.0ZM412.7 616.0L415.7 612.3L418.4 614.8L415.5 618.7ZM407.5 604.7L410.5 601.4L413.2 603.8L410.2 607.2ZM410.2 607.2L413.2 603.8L416.0 606.1L412.9 609.7ZM412.9 609.7L416.0 606.1L418.7 608.4L415.7 612.3ZM410.5 601.4L413.6 598.1L416.3 600.2L413.2 603.8ZM413.2 603.8L416.3 600.2L419.0 602.3L416.0 606.1ZM413.6 598.1L416.8 594.7L419.4 596.6L416.3 600.2ZM844.1 377.0L851.1 375.0L853.1 375.1L846.1 377.1ZM845.1 374.7L852.1 372.6L854.1 372.7L847.1 374.8ZM847.1 374.8L854.1 372.7L856.1 372.9L849.1 374.9ZM849.1 374.9L856.1 372.9L858.1 373.0L851.1 375.0ZM851.1 375.0L858.1 373.0L860.1 373.2L853.1 375.1ZM852.1 372.6L859.2 370.5L861.2 370.7L854.1 372.7ZM854.1 372.7L861.2 370.7L863.2 370.9L856.1 372.9ZM856.1 372.9L863.2 370.9L865.2 371.0L858.1 373.0ZM858.1 373.0L865.2 371.0L867.2 371.2L860.1 373.2ZM859.2 370.5L866.3 368.5L868.3 368.7L861.2 370.7ZM861.2 370.7L868.3 368.7L870.3 368.9L863.2 370.9ZM863.2 370.9L870.3 368.9L872.3 369.0L865.2 371.0ZM865.2 371.0L872.3 369.0L874.3 369.2L867.2 371.2Z" fill="#80ac00" stroke="#80ac00"/><path d="M415.7 612.3L418.7 608.4L421.4 610.7L418.4 614.8ZM416.0 606.1L419.0 602.3L421.7 604.4L418.7 608.4ZM418.7 608.4L421.7 604.4L424.4 606.5L421.4 610.7ZM416.3 600.2L419.4 596.6L422.1 598.4L419.0 602.3ZM419.0 602.3L422.1 598.4L424.7 600.2L421.7 604.4ZM421.7 604.4L424.7 600.2L427.4 602.1L424.4 606.5ZM416.8 594.7L419.9 591.2L422.5 592.8L419.4 596.6ZM419.4 596.6L422.5 592.8L425.2 594.4L422.1 598.4ZM422.1 598.4L425.2 594.4L427.8 596.0L424.7 600.2ZM424.7 600.2L427.8 596.0L430.4 597.6L427.4 602.1ZM419.9 591.2L423.1 587.6L425.7 588.9L422.5 592.8ZM422.5 592.8L425.7 588.9L428.3 590.3L425.2 594.4ZM425.2 594.4L428.3 590.3L430.9 591.7L427.8 596.0ZM423.1 587.6L426.3 583.9L428.9 585.0L425.7 588.9ZM425.7 588.9L428.9 585.0L431.4 586.2L428.3 590.3ZM426.3 583.9L429.6 580.1L432.1 581.1L428.9 585.0ZM819.6 383.1L826.4 381.0L828.4 381.1L821.6 383.2ZM821.6 383.2L828.4 381.1L830.4 381.1L823.6 383.2ZM823.6 383.2L830.4 381.1L832.4 381.2L825.6 383.2ZM824.4 381.0L831.2 378.9L833.2 378.9L826.4 381.0ZM826.4 381.0L833.2 378.9L835.2 379.0L828.4 381.1ZM828.4 381.1L835.2 379.0L837.2 379.1L830.4 381.1ZM830.4 381.1L837.2 379.1L839.2 379.2L832.4 381.2ZM831.2 378.9L838.1 376.8L840.1 376.9L833.2 378.9ZM833.2 378.9L840.1 376.9L842.1 377.0L835.2 379.0ZM835.2 379.0L842.1 377.0L844.1 377.0L837.2 379.1ZM837.2 379.1L844.1 377.0L846.1 377.1L839.2 379.2ZM838.1 376.8L845.1 374.7L847.1 374.8L840.1 376.9ZM840.1 376.9L847.1 374.8L849.1 374.9L842.1 377.0ZM842.1 377.0L849.1 374.9L851.1 375.0L844.1 377.0Z" fill="#d8e400" stroke="#d8e400"/><path d="M427.8 596.0L430.9 591.7L433.4 593.1L430.4 597.6ZM428.3 590.3L431.4 586.2L434.0 587.4L430.9 591.7ZM430.9 591.7L434.0 587.4L436.5 588.5L433.4 593.1ZM428.9 585.0L432.1 581.1L434.6 582.0L431.4 586.2ZM431.4 586.2L434.6 582.0L437.1 583.0L434.0 587.4ZM434.0 587.4L437.1 583.0L439.6 584.0L436.5 588.5ZM429.6 580.1L432.9 576.3L435.3 577.1L432.1 581.1ZM432.1 581.1L435.3 577.1L437.8 577.9L434.6 582.0ZM434.6 582.0L437.8 577.9L440.3 578.7L437.1 583.0ZM437.1 583.0L440.3 578.7L442.8 579.5L439.6 584.0ZM432.9 576.3L436.2 572.4L438.6 573.1L435.3 577.1ZM435.3 577.1L438.6 573.1L441.1 573.7L437.8 577.9ZM437.8 577.9L441.1 573.7L443.5 574.4L440.3 578.7ZM436.2 572.4L439.5 568.6L441.9 569.1L438.6 573.1ZM438.6 573.1L441.9 569.1L444.3 569.6L441.1 573.7ZM439.5 568.6L442.9 564.7L445.2 565.2L441.9 569.1ZM797.2 391.5L803.7 389.4L805.7 389.4L799.2 391.5ZM797.7 389.4L804.3 387.3L806.3 387.3L799.7 389.4ZM799.7 389.4L806.3 387.3L808.3 387.3L801.7 389.4ZM801.7 389.4L808.3 387.3L810.3 387.3L803.7 389.4ZM803.7 389.4L810.3 387.3L812.3 387.3L805.7 389.4ZM804.3 387.3L810.9 385.2L812.9 385.2L806.3 387.3ZM806.3 387.3L812.9 385.2L814.9 385.2L808.3 387.3ZM808.3 387.3L814.9 385.2L816.9 385.3L810.3 387.3ZM810.3 387.3L816.9 385.3L818.9 385.3L812.3 387.3ZM810.9 385.2L817.6 383.1L819.6 383.1L812.9 385.2ZM812.9 385.2L819.6 383.1L821.6 383.2L814.9 385.2ZM814.9 385.2L821.6 383.2L823.6 383.2L816.9 385.3ZM816.9 385.3L823.6 383.2L825.6 383.2L818.9 385.3ZM817.6 383.1L824.4 381.0L826.4 381.0L819.6 383.1Z" fill="#ffe800" stroke="#ffe800"/><path d="M440.3 578.7L443.5 574.4L446.0 575.0L442.8 579.5ZM441.1 573.7L444.3 569.6L446.7 570.2L443.5 574.4ZM443.5 574.4L446.7 570.2L449.2 570.7L446.0 575.0ZM441.9 569.1L445.2 565.2L447.6 565.6L444.3 569.6ZM444.3 569.6L447.6 565.6L450.0 566.1L446.7 570.2ZM446.7 570.2L450.0 566.1L452.4 566.6L449.2 570.7ZM442.9 564.7L446.3 561.0L448.6 561.4L445.2 565.2ZM445.2 565.2L448.6 561.4L450.9 561.8L447.6 565.6ZM447.6 565.6L450.9 561.8L453.3 562.2L450.0 566.1ZM450.0 566.1L453.3 562.2L455.6 562.6L452.4 566.6ZM446.3 561.0L449.7 557.3L452.0 557.7L448.6 561.4ZM448.6 561.4L452.0 557.7L454.3 558.1L450.9 561.8ZM450.9 561.8L454.3 558.1L456.6 558.5L453.3 562.2ZM449.7 557.3L453.1 553.7L455.4 554.1L452.0 557.7ZM452.0 557.7L455.4 554.1L457.7 554.5L454.3 558.1ZM769.6 399.9L775.9 397.8L777.9 397.8L771.6 399.9ZM771.6 399.9L777.9 397.8L779.9 397.7L773.6 399.8ZM771.9 397.9L778.3 395.8L780.3 395.7L773.9 397.8ZM773.9 397.8L780.3 395.7L782.3 395.7L775.9 397.8ZM775.9 397.8L782.3 395.7L784.3 395.7L777.9 397.8ZM777.9 397.8L784.3 395.7L786.3 395.7L779.9 397.7ZM778.3 395.8L784.7 393.6L786.7 393.6L780.3 395.7ZM780.3 395.7L786.7 393.6L788.7 393.6L782.3 395.7ZM782.3 395.7L788.7 393.6L790.7 393.6L784.3 395.7ZM784.3 395.7L790.7 393.6L792.7 393.6L786.3 395.7ZM784.7 393.6L791.2 391.5L793.2 391.5L786.7 393.6ZM786.7 393.6L793.2 391.5L795.2 391.5L788.7 393.6ZM788.7 393.6L795.2 391.5L797.2 391.5L790.7 393.6ZM790.7 393.6L797.2 391.5L799.2 391.5L792.7 393.6ZM791.2 391.5L797.7 389.4L799.7 389.4L793.2 391.5ZM793.2 391.5L799.7 389.4L801.7 389.4L795.2 391.5ZM795.2 391.5L801.7 389.4L803.7 389.4L797.2 391.5Z" fill="#ffcc00" stroke="#ffcc00"/><path d="M453.3 562.2L456.6 558.5L458.9 558.9L455.6 562.6ZM454.3 558.1L457.7 554.5L460.0 555.0L456.6 558.5ZM456.6 558.5L460.0 555.0L462.2 555.4L458.9 558.9ZM453.1 553.7L456.6 550.3L458.9 550.8L455.4 554.1ZM455.4 554.1L458.9 550.8L461.1 551.2L457.7 554.5ZM457.7 554.5L461.1 551.2L463.3 551.7L460.0 555.0ZM460.0 555.0L463.3 551.7L465.6 552.1L462.2 555.4ZM456.6 550.3L460.1 547.1L462.3 547.6L458.9 550.8ZM458.9 550.8L462.3 547.6L464.5 548.1L461.1 551.2ZM461.1 551.2L464.5 548.1L466.8 548.6L463.3 551.7ZM460.1 547.1L463.7 544.0L465.9 544.6L462.3 547.6ZM743.0 408.4L749.1 406.3L751.1 406.2L745.0 408.3ZM745.0 408.3L751.1 406.2L753.1 406.2L747.0 408.2ZM747.0 408.2L753.1 406.2L755.1 406.1L749.0 408.2ZM747.1 406.3L753.2 404.2L755.2 404.2L749.1 406.3ZM749.1 406.3L755.2 404.2L757.2 404.1L751.1 406.2ZM751.1 406.2L757.2 404.1L759.2 404.1L753.1 406.2ZM753.1 406.2L759.2 404.1L761.2 404.0L755.1 406.1ZM753.2 404.2L759.4 402.1L761.4 402.0L755.2 404.2ZM755.2 404.2L761.4 402.0L763.4 402.0L757.2 404.1ZM757.2 404.1L763.4 402.0L765.4 402.0L759.2 404.1ZM759.2 404.1L765.4 402.0L767.4 401.9L761.2 404.0ZM759.4 402.1L765.6 400.0L767.6 399.9L761.4 402.0ZM761.4 402.0L767.6 399.9L769.6 399.9L763.4 402.0ZM763.4 402.0L769.6 399.9L771.6 399.9L765.4 402.0ZM765.4 402.0L771.6 399.9L773.6 399.8L767.4 401.9ZM765.6 400.0L771.9 397.9L773.9 397.8L767.6 399.9ZM767.6 399.9L773.9 397.8L775.9 397.8L769.6 399.9Z" fill="#ffa800" stroke="#ffa800"/><path d="M463.3 551.7L466.8 548.6L469.0 549.1L465.6 552.1ZM462.3 547.6L465.9 544.6L468.0 545.1L464.5 548.1ZM464.5 548.1L468.0 545.1L470.2 545.7L466.8 548.6ZM466.8 548.6L470.2 545.7L472.4 546.2L469.0 549.1ZM463.7 544.0L467.3 541.1L469.4 541.7L465.9 544.6ZM465.9 544.6L469.4 541.7L471.5 542.4L468.0 545.1ZM468.0 545.1L471.5 542.4L473.7 543.0L470.2 545.7ZM470.2 545.7L473.7 543.0L475.8 543.6L472.4 546.2ZM467.3 541.1L470.9 538.4L473.0 539.1L469.4 541.7ZM469.4 541.7L473.0 539.1L475.1 539.8L471.5 542.4ZM470.9 538.4L474.5 535.8L476.6 536.6L473.0 539.1ZM717.4 418.6L723.2 416.6L725.2 416.5L719.4 418.6ZM717.2 416.8L723.1 414.7L725.1 414.6L719.2 416.7ZM719.2 416.7L725.1 414.6L727.1 414.6L721.2 416.6ZM721.2 416.6L727.1 414.6L729.1 414.5L723.2 416.6ZM723.2 416.6L729.1 414.5L731.1 414.4L725.2 416.5ZM723.1 414.7L729.0 412.6L731.0 412.5L725.1 414.6ZM725.1 414.6L731.0 412.5L733.0 412.5L727.1 414.6ZM727.1 414.6L733.0 412.5L735.0 412.4L729.1 414.5ZM729.1 414.5L735.0 412.4L737.0 412.3L731.1 414.4ZM729.0 412.6L735.0 410.5L737.0 410.4L731.0 412.5ZM731.0 412.5L737.0 410.4L739.0 410.4L733.0 412.5ZM733.0 412.5L739.0 410.4L741.0 410.3L735.0 412.4ZM735.0 412.4L741.0 410.3L743.0 410.3L737.0 412.3ZM735.0 410.5L741.0 408.4L743.0 408.4L737.0 410.4ZM737.0 410.4L743.0 408.4L745.0 408.3L739.0 410.4ZM739.0 410.4L745.0 408.3L747.0 408.2L741.0 410.3ZM741.0 410.3L747.0 408.2L749.0 408.2L743.0 410.3ZM741.0 408.4L747.1 406.3L749.1 406.3L743.0 408.4Z" fill="#ff7800" stroke="#ff7800"/><path d="M471.5 542.4L475.1 539.8L477.2 540.5L473.7 543.0ZM473.7 543.0L477.2 540.5L479.3 541.2L475.8 543.6ZM473.0 539.1L476.6 536.6L478.6 537.4L475.1 539.8ZM475.1 539.8L478.6 537.4L480.7 538.1L477.2 540.5ZM477.2 540.5L480.7 538.1L482.8 538.9L479.3 541.2ZM474.5 535.8L478.2 533.4L480.2 534.2L476.6 536.6ZM476.6 536.6L480.2 534.2L482.3 535.1L478.6 537.4ZM478.6 537.4L482.3 535.1L484.3 535.9L480.7 538.1ZM480.7 538.1L484.3 535.9L486.3 536.7L482.8 538.9ZM478.2 533.4L481.9 531.1L483.9 532.0L480.2 534.2ZM480.2 534.2L483.9 532.0L485.9 532.8L482.3 535.1ZM482.3 535.1L485.9 532.8L487.9 533.7L484.3 535.9ZM484.3 535.9L487.9 533.7L489.9 534.6L486.3 536.7ZM481.9 531.1L485.7 528.9L487.7 529.8L483.9 532.0ZM483.9 532.0L487.7 529.8L489.7 530.6L485.9 532.8ZM485.7 528.9L489.5 526.8L491.5 527.6L487.7 529.8ZM678.1 432.9L683.6 430.9L685.6 430.8L680.1 432.8ZM677.6 431.2L683.1 429.1L685.1 429.0L679.6 431.1ZM679.6 431.1L685.1 429.0L687.1 428.9L681.6 431.0ZM681.6 431.0L687.1 428.9L689.1 428.9L683.6 430.9ZM683.6 430.9L689.1 428.9L691.1 428.8L685.6 430.8ZM683.1 429.1L688.7 427.1L690.7 427.0L685.1 429.0ZM685.1 429.0L690.7 427.0L692.7 426.9L687.1 428.9ZM687.1 428.9L692.7 426.9L694.7 426.8L689.1 428.9ZM689.1 428.9L694.7 426.8L696.7 426.7L691.1 428.8ZM688.7 427.1L694.3 425.0L696.3 425.0L690.7 427.0ZM690.7 427.0L696.3 425.0L698.3 424.9L692.7 426.9ZM692.7 426.9L698.3 424.9L700.3 424.8L694.7 426.8ZM694.7 426.8L700.3 424.8L702.3 424.7L696.7 426.7ZM694.3 425.0L699.9 423.0L701.9 422.9L696.3 425.0ZM696.3 425.0L701.9 422.9L703.9 422.8L698.3 424.9ZM698.3 424.9L703.9 422.8L705.9 422.7L700.3 424.8ZM700.3 424.8L705.9 422.7L707.9 422.7L702.3 424.7ZM699.9 423.0L705.6 420.9L707.6 420.8L701.9 422.9ZM701.9 422.9L707.6 420.8L709.6 420.8L703.9 422.8ZM703.9 422.8L709.6 420.8L711.6 420.7L705.9 422.7ZM705.9 422.7L711.6 420.7L713.6 420.6L707.9 422.7ZM705.6 420.9L711.4 418.8L713.4 418.8L707.6 420.8ZM707.6 420.8L713.4 418.8L715.4 418.7L709.6 420.8ZM709.6 420.8L715.4 418.7L717.4 418.6L711.6 420.7ZM711.6 420.7L717.4 418.6L719.4 418.6L713.6 420.6ZM711.4 418.8L717.2 416.8L719.2 416.7L713.4 418.8ZM713.4 418.8L719.2 416.7L721.2 416.6L715.4 418.7ZM715.4 418.7L721.2 416.6L723.2 416.6L717.4 418.6Z" fill="#ff4000" stroke="#ff4000"/><path d="M485.9 532.8L489.7 530.6L491.7 531.5L487.9 533.7ZM487.9 533.7L491.7 531.5L493.7 532.4L489.9 534.6ZM487.7 529.8L491.5 527.6L493.5 528.5L489.7 530.6ZM489.7 530.6L493.5 528.5L495.5 529.3L491.7 531.5ZM491.7 531.5L495.5 529.3L497.5 530.2L493.7 532.4ZM489.5 526.8L493.3 524.6L495.3 525.5L491.5 527.6ZM491.5 527.6L495.3 525.5L497.3 526.3L493.5 528.5ZM493.5 528.5L497.3 526.3L499.3 527.1L495.5 529.3ZM495.5 529.3L499.3 527.1L501.3 528.0L497.5 530.2ZM493.3 524.6L497.1 522.5L499.1 523.3L495.3 525.5ZM495.3 525.5L499.1 523.3L501.1 524.1L497.3 526.3ZM497.3 526.3L501.1 524.1L503.1 524.8L499.3 527.1ZM499.3 527.1L503.1 524.8L505.1 525.6L501.3 528.0ZM497.1 522.5L501.0 520.4L503.0 521.0L499.1 523.3ZM499.1 523.3L503.0 521.0L505.0 521.7L501.1 524.1ZM501.1 524.1L505.0 521.7L507.0 522.4L503.1 524.8ZM503.1 524.8L507.0 522.4L509.0 523.1L505.1 525.6ZM501.0 520.4L504.9 518.1L506.9 518.7L503.0 521.0ZM503.0 521.0L506.9 518.7L508.9 519.4L505.0 521.7ZM505.0 521.7L508.9 519.4L510.9 520.0L507.0 522.4ZM507.0 522.4L510.9 520.0L512.9 520.6L509.0 523.1ZM504.9 518.1L508.9 515.8L510.9 516.3L506.9 518.7ZM506.9 518.7L510.9 516.3L512.9 516.9L508.9 519.4ZM637.3 447.7L642.4 445.6L644.4 445.4L639.3 447.6ZM639.3 447.6L644.4 445.4L646.4 445.3L641.3 447.4ZM641.3 447.4L646.4 445.3L648.4 445.1L643.3 447.2ZM640.4 445.7L645.6 443.6L647.6 443.5L642.4 445.6ZM642.4 445.6L647.6 443.5L649.6 443.3L644.4 445.4ZM644.4 445.4L649.6 443.3L651.6 443.2L646.4 445.3ZM646.4 445.3L651.6 443.2L653.6 443.0L648.4 445.1ZM645.6 443.6L650.8 441.5L652.8 441.4L647.6 443.5ZM647.6 443.5L652.8 441.4L654.8 441.2L649.6 443.3ZM649.6 443.3L654.8 441.2L656.8 441.1L651.6 443.2ZM651.6 443.2L656.8 441.1L658.8 441.0L653.6 443.0ZM650.8 441.5L656.1 439.4L658.1 439.3L652.8 441.4ZM652.8 441.4L658.1 439.3L660.1 439.2L654.8 441.2ZM654.8 441.2L660.1 439.2L662.1 439.0L656.8 441.1ZM656.8 441.1L662.1 439.0L664.1 438.9L658.8 441.0ZM656.1 439.4L661.4 437.4L663.4 437.2L658.1 439.3ZM658.1 439.3L663.4 437.2L665.4 437.1L660.1 439.2ZM660.1 439.2L665.4 437.1L667.4 437.0L662.1 439.0ZM662.1 439.0L667.4 437.0L669.4 436.9L664.1 438.9ZM661.4 437.4L666.7 435.3L668.7 435.2L663.4 437.2ZM663.4 437.2L668.7 435.2L670.7 435.1L665.4 437.1ZM665.4 437.1L670.7 435.1L672.7 434.9L667.4 437.0ZM667.4 437.0L672.7 434.9L674.7 434.8L669.4 436.9ZM666.7 435.3L672.1 433.2L674.1 433.1L668.7 435.2ZM668.7 435.2L674.1 433.1L676.1 433.0L670.7 435.1ZM670.7 435.1L676.1 433.0L678.1 432.9L672.7 434.9ZM672.7 434.9L678.1 432.9L680.1 432.8L674.7 434.8ZM672.1 433.2L677.6 431.2L679.6 431.1L674.1 433.1ZM674.1 433.1L679.6 431.1L681.6 431.0L676.1 433.0ZM676.1 433.0L681.6 431.0L683.6 430.9L678.1 432.9Z" fill="#ff0000" stroke="#ff0000"/><path d="M508.9 519.4L512.9 516.9L514.9 517.4L510.9 520.0ZM510.9 520.0L514.9 517.4L516.9 518.0L512.9 520.6ZM508.9 515.8L512.9 513.4L514.9 513.9L510.9 516.3ZM510.9 516.3L514.9 513.9L516.9 514.4L512.9 516.9ZM512.9 516.9L516.9 514.4L518.9 514.8L514.9 517.4ZM514.9 517.4L518.9 514.8L520.9 515.3L516.9 518.0ZM512.9 513.4L516.9 511.0L518.9 511.4L514.9 513.9ZM514.9 513.9L518.9 511.4L520.9 511.8L516.9 514.4ZM516.9 514.4L520.9 511.8L522.9 512.2L518.9 514.8ZM518.9 514.8L522.9 512.2L524.9 512.6L520.9 515.3ZM516.9 511.0L521.0 508.5L523.0 508.8L518.9 511.4ZM518.9 511.4L523.0 508.8L525.0 509.1L520.9 511.8ZM520.9 511.8L525.0 509.1L527.0 509.5L522.9 512.2ZM522.9 512.2L527.0 509.5L529.0 509.8L524.9 512.6ZM521.0 508.5L525.0 505.9L527.0 506.2L523.0 508.8ZM523.0 508.8L527.0 506.2L529.0 506.4L525.0 509.1ZM525.0 509.1L529.0 506.4L531.0 506.7L527.0 509.5ZM527.0 509.5L531.0 506.7L533.0 507.0L529.0 509.8ZM525.0 505.9L529.2 503.3L531.2 503.5L527.0 506.2ZM527.0 506.2L531.2 503.5L533.2 503.7L529.0 506.4ZM529.0 506.4L533.2 503.7L535.2 503.9L531.0 506.7ZM531.0 506.7L535.2 503.9L537.2 504.1L533.0 507.0ZM529.2 503.3L533.4 500.7L535.4 500.9L531.2 503.5ZM531.2 503.5L535.4 500.9L537.4 501.0L533.2 503.7ZM533.2 503.7L537.4 501.0L539.4 501.2L535.2 503.9ZM535.2 503.9L539.4 501.2L541.4 501.3L537.2 504.1ZM533.4 500.7L537.6 498.1L539.6 498.2L535.4 500.9ZM535.4 500.9L539.6 498.2L541.6 498.3L537.4 501.0ZM537.4 501.0L541.6 498.3L543.6 498.4L539.4 501.2ZM539.4 501.2L543.6 498.4L545.6 498.5L541.4 501.3ZM537.6 498.1L541.8 495.5L543.8 495.5L539.6 498.2ZM539.6 498.2L543.8 495.5L545.8 495.6L541.6 498.3ZM541.6 498.3L545.8 495.6L547.8 495.6L543.6 498.4ZM543.6 498.4L547.8 495.6L549.8 495.7L545.6 498.5ZM541.8 495.5L546.1 492.9L548.1 492.9L543.8 495.5ZM543.8 495.5L548.1 492.9L550.1 492.9L545.8 495.6ZM545.8 495.6L550.1 492.9L552.1 492.9L547.8 495.6ZM547.8 495.6L552.1 492.9L554.1 492.9L549.8 495.7ZM546.1 492.9L550.4 490.3L552.4 490.2L548.1 492.9ZM548.1 492.9L552.4 490.2L554.4 490.2L550.1 492.9ZM550.1 492.9L554.4 490.2L556.4 490.2L552.1 492.9ZM552.1 492.9L556.4 490.2L558.4 490.2L554.1 492.9ZM550.4 490.3L554.8 487.7L556.8 487.6L552.4 490.2ZM552.4 490.2L556.8 487.6L558.8 487.6L554.4 490.2ZM554.4 490.2L558.8 487.6L560.8 487.5L556.4 490.2ZM556.4 490.2L560.8 487.5L562.8 487.5L558.4 490.2ZM554.8 487.7L559.2 485.1L561.2 485.1L556.8 487.6ZM556.8 487.6L561.2 485.1L563.2 485.0L558.8 487.6ZM558.8 487.6L563.2 485.0L565.2 484.9L560.8 487.5ZM560.8 487.5L565.2 484.9L567.2 484.8L562.8 487.5ZM559.2 485.1L563.6 482.6L565.6 482.5L561.2 485.1ZM561.2 485.1L565.6 482.5L567.6 482.4L563.2 485.0ZM563.2 485.0L567.6 482.4L569.6 482.3L565.2 484.9ZM565.2 484.9L569.6 482.3L571.6 482.2L567.2 484.8ZM563.6 482.6L568.1 480.1L570.1 480.0L565.6 482.5ZM565.6 482.5L570.1 480.0L572.1 479.9L567.6 482.4ZM567.6 482.4L572.1 479.9L574.1 479.8L569.6 482.3ZM569.6 482.3L574.1 479.8L576.1 479.6L571.6 482.2ZM568.1 480.1L572.6 477.7L574.6 477.5L570.1 480.0ZM570.1 480.0L574.6 477.5L576.6 477.4L572.1 479.9ZM572.1 479.9L576.6 477.4L578.6 477.2L574.1 479.8ZM574.1 479.8L578.6 477.2L580.6 477.1L576.1 479.6ZM572.6 477.7L577.2 475.2L579.2 475.1L574.6 477.5ZM574.6 477.5L579.2 475.1L581.2 474.9L576.6 477.4ZM576.6 477.4L581.2 474.9L583.2 474.8L578.6 477.2ZM578.6 477.2L583.2 474.8L585.2 474.6L580.6 477.1ZM577.2 475.2L581.8 472.8L583.8 472.6L579.2 475.1ZM579.2 475.1L583.8 472.6L585.8 472.5L581.2 474.9ZM581.2 474.9L585.8 472.5L587.8 472.3L583.2 474.8ZM583.2 474.8L587.8 472.3L589.8 472.1L585.2 474.6ZM581.8 472.8L586.4 470.4L588.4 470.2L583.8 472.6ZM583.8 472.6L588.4 470.2L590.4 470.1L585.8 472.5ZM585.8 472.5L590.4 470.1L592.4 469.9L587.8 472.3ZM587.8 472.3L592.4 469.9L594.4 469.7L589.8 472.1ZM586.4 470.4L591.1 468.0L593.1 467.9L588.4 470.2ZM588.4 470.2L593.1 467.9L595.1 467.7L590.4 470.1ZM590.4 470.1L595.1 467.7L597.1 467.5L592.4 469.9ZM592.4 469.9L597.1 467.5L599.1 467.3L594.4 469.7ZM591.1 468.0L595.9 465.7L597.9 465.5L593.1 467.9ZM593.1 467.9L597.9 465.5L599.9 465.3L595.1 467.7ZM595.1 467.7L599.9 465.3L601.9 465.2L597.1 467.5ZM597.1 467.5L601.9 465.2L603.9 465.0L599.1 467.3ZM595.9 465.7L600.6 463.4L602.6 463.2L597.9 465.5ZM597.9 465.5L602.6 463.2L604.6 463.0L599.9 465.3ZM599.9 465.3L604.6 463.0L606.6 462.8L601.9 465.2ZM601.9 465.2L606.6 462.8L608.6 462.7L603.9 465.0ZM600.6 463.4L605.5 461.1L607.5 460.9L602.6 463.2ZM602.6 463.2L607.5 460.9L609.5 460.7L604.6 463.0ZM604.6 463.0L609.5 460.7L611.5 460.5L606.6 462.8ZM606.6 462.8L611.5 460.5L613.5 460.4L608.6 462.7ZM605.5 461.1L610.3 458.8L612.3 458.7L607.5 460.9ZM607.5 460.9L612.3 458.7L614.3 458.5L609.5 460.7ZM609.5 460.7L614.3 458.5L616.3 458.3L611.5 460.5ZM611.5 460.5L616.3 458.3L618.3 458.1L613.5 460.4ZM610.3 458.8L615.2 456.6L617.2 456.4L612.3 458.7ZM612.3 458.7L617.2 456.4L619.2 456.2L614.3 458.5ZM614.3 458.5L619.2 456.2L621.2 456.1L616.3 458.3ZM616.3 458.3L621.2 456.1L623.2 455.9L618.3 458.1ZM615.2 456.6L620.2 454.4L622.2 454.2L617.2 456.4ZM617.2 456.4L622.2 454.2L624.2 454.0L619.2 456.2ZM619.2 456.2L624.2 454.0L626.2 453.9L621.2 456.1ZM621.2 456.1L626.2 453.9L628.2 453.7L623.2 455.9ZM620.2 454.4L625.1 452.2L627.1 452.0L622.2 454.2ZM622.2 454.2L627.1 452.0L629.1 451.9L624.2 454.0ZM624.2 454.0L629.1 451.9L631.1 451.7L626.2 453.9ZM626.2 453.9L631.1 451.7L633.1 451.5L628.2 453.7ZM625.1 452.2L630.2 450.0L632.2 449.9L627.1 452.0ZM627.1 452.0L632.2 449.9L634.2 449.7L629.1 451.9ZM629.1 451.9L634.2 449.7L636.2 449.5L631.1 451.7ZM631.1 451.7L636.2 449.5L638.2 449.4L633.1 451.5ZM630.2 450.0L635.3 447.9L637.3 447.7L632.2 449.9ZM632.2 449.9L637.3 447.7L639.3 447.6L634.2 449.7ZM634.2 449.7L639.3 447.6L641.3 447.4L636.2 449.5ZM636.2 449.5L641.3 447.4L643.3 447.2L638.2 449.4ZM635.3 447.9L640.4 445.7L642.4 445.6L637.3 447.7Z" fill="#dc0000" stroke="#dc0000"/><path d="M1079.0 333.0L1087.5 333.1L1088.6 335.3L1080.3 335.3ZM1080.3 335.3L1088.6 335.3L1089.7 337.6L1081.7 337.5ZM1085.2 328.5L1094.2 328.5L1095.1 330.9L1086.4 330.8ZM1086.4 330.8L1095.1 330.9L1096.0 333.2L1087.5 333.1ZM1087.5 333.1L1096.0 333.2L1096.9 335.6L1088.6 335.3ZM1088.6 335.3L1096.9 335.6L1097.8 337.9L1089.7 337.6ZM1094.2 328.5L1103.1 328.7L1103.8 331.1L1095.1 330.9ZM1095.1 330.9L1103.8 331.1L1104.5 333.5L1096.0 333.2ZM1096.0 333.2L1104.5 333.5L1105.2 335.9L1096.9 335.6ZM1096.9 335.6L1105.2 335.9L1105.8 338.3L1097.8 337.9Z" fill="#4040e8" stroke="#4040e8"/><path d="M1103.1 328.7L1112.1 329.0L1112.5 331.5L1103.8 331.1ZM1103.8 331.1L1112.5 331.5L1113.0 333.9L1104.5 333.5ZM1104.5 333.5L1113.0 333.9L1113.4 336.4L1105.2 335.9ZM1105.2 335.9L1113.4 336.4L1113.9 338.8L1105.8 338.3ZM1112.1 329.0L1121.0 329.3L1121.3 331.8L1112.5 331.5ZM1112.5 331.5L1121.3 331.8L1121.5 334.3L1113.0 333.9ZM1113.0 333.9L1121.5 334.3L1121.7 336.8L1113.4 336.4ZM1113.4 336.4L1121.7 336.8L1121.9 339.3L1113.9 338.8ZM1121.0 329.3L1130.0 329.6L1130.0 332.1L1121.3 331.8ZM1121.3 331.8L1130.0 332.1L1130.0 334.6L1121.5 334.3ZM1121.5 334.3L1130.0 334.6L1130.0 337.1L1121.7 336.8ZM1121.7 336.8L1130.0 337.1L1130.0 339.6L1121.9 339.3Z" fill="#8888e0" stroke="#8888e0"/><path d="M285.0 720.9 L288.0 721.2 L291.0 721.4 L294.0 721.6 L296.9 721.7 L299.9 721.7 L302.9 721.6 L305.9 720.9 L308.9 719.8 L311.9 718.2 L314.8 716.2 L317.8 713.9 L320.8 711.2 L323.8 708.3 L326.8 705.1 L329.8 701.6 L332.7 698.1 L335.7 694.3 L338.7 690.5 L341.7 686.6 L344.7 682.6 L347.7 678.6 L350.6 674.6 L353.6 670.5 L356.6 666.4 L359.6 662.2 L362.6 658.1 L365.6 654.0 L368.5 649.9 L371.5 645.9 L374.5 642.0 L377.5 638.2 L380.5 634.4 L383.5 630.8 L386.5 627.3 L389.4 623.9 L392.4 620.6 L395.4 617.3 L398.4 614.2 L401.4 611.0 L404.4 607.9 L407.5 604.7 L410.5 601.4 L413.6 598.1 L416.8 594.7 L419.9 591.2 L423.1 587.6 L426.3 583.9 L429.6 580.1 L432.9 576.3 L436.2 572.4 L439.5 568.6 L442.9 564.7 L446.3 561.0 L449.7 557.3 L453.1 553.7 L456.6 550.3 L460.1 547.1 L463.7 544.0 L467.3 541.1 L470.9 538.4 L474.5 535.8 L478.2 533.4 L481.9 531.1 L485.7 528.9 L489.5 526.8 L493.3 524.6 L497.1 522.5 L501.0 520.4 L504.9 518.1 L508.9 515.8 L512.9 513.4 L516.9 511.0 L521.0 508.5 L525.0 505.9 L529.2 503.3 L533.4 500.7 L537.6 498.1 L541.8 495.5 L546.1 492.9 L550.4 490.3 L554.8 487.7 L559.2 485.1 L563.6 482.6 L568.1 480.1 L572.6 477.7 L577.2 475.2 L581.8 472.8 L586.4 470.4 L591.1 468.0 L595.9 465.7 L600.6 463.4 L605.5 461.1 L610.3 458.8 L615.2 456.6 L620.2 454.4 L625.1 452.2 L630.2 450.0 L635.3 447.9 L640.4 445.7 L645.6 443.6 L650.8 441.5 L656.1 439.4 L661.4 437.4 L666.7 435.3 L672.1 433.2 L677.6 431.2 L683.1 429.1 L688.7 427.1 L694.3 425.0 L699.9 423.0 L705.6 420.9 L711.4 418.8 L717.2 416.8 L723.1 414.7 L729.0 412.6 L735.0 410.5 L741.0 408.4 L747.1 406.3 L753.2 404.2 L759.4 402.1 L765.6 400.0 L771.9 397.9 L778.3 395.8 L784.7 393.6 L791.2 391.5 L797.7 389.4 L804.3 387.3 L810.9 385.2 L817.6 383.1 L824.4 381.0 L831.2 378.9 L838.1 376.8 L845.1 374.7 L852.1 372.6 L859.2 370.5 L866.3 368.5 L873.5 366.4 L880.8 364.4 L888.1 362.4 L895.5 360.4 L903.0 358.4 L910.5 356.4 L918.1 354.4 L925.8 352.5 L933.6 350.6 L941.4 348.7 L949.2 346.9 L957.2 345.1 L965.2 343.3 L973.3 341.6 L981.5 339.9 L989.7 338.3 L998.1 336.7 L1006.4 335.5 L1014.9 333.9 L1023.5 332.6 L1032.1 331.4 L1040.8 330.5 L1049.5 329.8 L1058.4 329.2 L1067.3 328.8 L1076.3 328.6 L1085.2 328.5 L1094.2 328.5 L1103.1 328.7 L1112.1 329.0 L1121.0 329.3 L1130.0 329.6 L1130.0 339.6 L1121.9 339.3 L1113.9 338.8 L1105.8 338.3 L1097.8 337.9 L1089.7 337.6 L1081.7 337.5 L1073.6 337.5 L1065.6 337.6 L1057.5 337.8 L1048.8 338.2 L1040.1 338.7 L1031.5 339.4 L1022.9 340.2 L1014.4 341.0 L1006.1 342.0 L997.7 343.1 L989.5 344.3 L981.3 345.6 L973.2 346.9 L965.2 348.3 L957.2 349.8 L949.4 351.4 L941.6 353.0 L933.8 354.6 L926.1 356.3 L918.5 358.1 L911.0 359.9 L903.5 361.7 L896.1 363.5 L888.8 365.4 L881.5 367.3 L874.3 369.2 L867.2 371.2 L860.1 373.2 L853.1 375.1 L846.1 377.1 L839.2 379.2 L832.4 381.2 L825.6 383.2 L818.9 385.3 L812.3 387.3 L805.7 389.4 L799.2 391.5 L792.7 393.6 L786.3 395.7 L779.9 397.7 L773.6 399.8 L767.4 401.9 L761.2 404.0 L755.1 406.1 L749.0 408.2 L743.0 410.3 L737.0 412.3 L731.1 414.4 L725.2 416.5 L719.4 418.6 L713.6 420.6 L707.9 422.7 L702.3 424.7 L696.7 426.7 L691.1 428.8 L685.6 430.8 L680.1 432.8 L674.7 434.8 L669.4 436.9 L664.1 438.9 L658.8 441.0 L653.6 443.0 L648.4 445.1 L643.3 447.2 L638.2 449.4 L633.1 451.5 L628.2 453.7 L623.2 455.9 L618.3 458.1 L613.5 460.4 L608.6 462.7 L603.9 465.0 L599.1 467.3 L594.4 469.7 L589.8 472.1 L585.2 474.6 L580.6 477.1 L576.1 479.6 L571.6 482.2 L567.2 484.8 L562.8 487.5 L558.4 490.2 L554.1 492.9 L549.8 495.7 L545.6 498.5 L541.4 501.3 L537.2 504.1 L533.0 507.0 L529.0 509.8 L524.9 512.6 L520.9 515.3 L516.9 518.0 L512.9 520.6 L509.0 523.1 L505.1 525.6 L501.3 528.0 L497.5 530.2 L493.7 532.4 L489.9 534.6 L486.3 536.7 L482.8 538.9 L479.3 541.2 L475.8 543.6 L472.4 546.2 L469.0 549.1 L465.6 552.1 L462.2 555.4 L458.9 558.9 L455.6 562.6 L452.4 566.6 L449.2 570.7 L446.0 575.0 L442.8 579.5 L439.6 584.0 L436.5 588.5 L433.4 593.1 L430.4 597.6 L427.4 602.1 L424.4 606.5 L421.4 610.7 L418.4 614.8 L415.5 618.7 L412.6 622.5 L409.7 626.1 L406.9 629.6 L404.0 633.1 L401.2 636.6 L398.3 640.0 L395.4 643.6 L392.6 647.1 L389.7 650.8 L386.8 654.6 L384.0 658.6 L381.1 662.7 L378.3 667.0 L375.4 671.4 L372.5 675.9 L369.7 680.5 L366.8 685.2 L364.0 690.0 L361.1 694.8 L358.2 699.6 L355.4 704.4 L352.5 709.2 L349.6 713.9 L346.8 718.4 L343.9 722.8 L341.1 727.1 L338.2 731.1 L335.3 734.9 L332.5 738.4 L329.6 741.6 L326.8 744.5 L323.9 747.0 L321.0 749.1 L318.2 750.8 L315.3 752.0 L312.4 752.7 L309.6 752.9 L306.7 752.6 L303.9 751.6 L301.0 750.0Z M288.0 721.2 L303.9 751.6 M291.0 721.4 L306.7 752.6 M294.0 721.6 L309.6 752.9 M296.9 721.7 L312.4 752.7 M299.9 721.7 L315.3 752.0 M302.9 721.6 L318.2 750.8 M305.9 720.9 L321.0 749.1 M308.9 719.8 L323.9 747.0 M311.9 718.2 L326.8 744.5 M314.8 716.2 L329.6 741.6 M317.8 713.9 L332.5 738.4 M320.8 711.2 L335.3 734.9 M323.8 708.3 L338.2 731.1 M326.8 705.1 L341.1 727.1 M329.8 701.6 L343.9 722.8 M332.7 698.1 L346.8 718.4 M335.7 694.3 L349.6 713.9 M338.7 690.5 L352.5 709.2 M341.7 686.6 L355.4 704.4 M344.7 682.6 L358.2 699.6 M347.7 678.6 L361.1 694.8 M350.6 674.6 L364.0 690.0 M353.6 670.5 L366.8 685.2 M356.6 666.4 L369.7 680.5 M359.6 662.2 L372.5 675.9 M362.6 658.1 L375.4 671.4 M365.6 654.0 L378.3 667.0 M368.5 649.9 L381.1 662.7 M371.5 645.9 L384.0 658.6 M374.5 642.0 L386.8 654.6 M377.5 638.2 L389.7 650.8 M380.5 634.4 L392.6 647.1 M383.5 630.8 L395.4 643.6 M386.5 627.3 L398.3 640.0 M389.4 623.9 L401.2 636.6 M392.4 620.6 L404.0 633.1 M395.4 617.3 L406.9 629.6 M398.4 614.2 L409.7 626.1 M401.4 611.0 L412.6 622.5 M404.4 607.9 L415.5 618.7 M407.5 604.7 L418.4 614.8 M410.5 601.4 L421.4 610.7 M413.6 598.1 L424.4 606.5 M416.8 594.7 L427.4 602.1 M419.9 591.2 L430.4 597.6 M423.1 587.6 L433.4 593.1 M426.3 583.9 L436.5 588.5 M429.6 580.1 L439.6 584.0 M432.9 576.3 L442.8 579.5 M436.2 572.4 L446.0 575.0 M439.5 568.6 L449.2 570.7 M442.9 564.7 L452.4 566.6 M446.3 561.0 L455.6 562.6 M449.7 557.3 L458.9 558.9 M453.1 553.7 L462.2 555.4 M456.6 550.3 L465.6 552.1 M460.1 547.1 L469.0 549.1 M463.7 544.0 L472.4 546.2 M467.3 541.1 L475.8 543.6 M470.9 538.4 L479.3 541.2 M474.5 535.8 L482.8 538.9 M478.2 533.4 L486.3 536.7 M481.9 531.1 L489.9 534.6 M485.7 528.9 L493.7 532.4 M489.5 526.8 L497.5 530.2 M493.3 524.6 L501.3 528.0 M497.1 522.5 L505.1 525.6 M501.0 520.4 L509.0 523.1 M504.9 518.1 L512.9 520.6 M508.9 515.8 L516.9 518.0 M512.9 513.4 L520.9 515.3 M516.9 511.0 L524.9 512.6 M521.0 508.5 L529.0 509.8 M525.0 505.9 L533.0 507.0 M529.2 503.3 L537.2 504.1 M533.4 500.7 L541.4 501.3 M537.6 498.1 L545.6 498.5 M541.8 495.5 L549.8 495.7 M546.1 492.9 L554.1 492.9 M550.4 490.3 L558.4 490.2 M554.8 487.7 L562.8 487.5 M559.2 485.1 L567.2 484.8 M563.6 482.6 L571.6 482.2 M568.1 480.1 L576.1 479.6 M572.6 477.7 L580.6 477.1 M577.2 475.2 L585.2 474.6 M581.8 472.8 L589.8 472.1 M586.4 470.4 L594.4 469.7 M591.1 468.0 L599.1 467.3 M595.9 465.7 L603.9 465.0 M600.6 463.4 L608.6 462.7 M605.5 461.1 L613.5 460.4 M610.3 458.8 L618.3 458.1 M615.2 456.6 L623.2 455.9 M620.2 454.4 L628.2 453.7 M625.1 452.2 L633.1 451.5 M630.2 450.0 L638.2 449.4 M635.3 447.9 L643.3 447.2 M640.4 445.7 L648.4 445.1 M645.6 443.6 L653.6 443.0 M650.8 441.5 L658.8 441.0 M656.1 439.4 L664.1 438.9 M661.4 437.4 L669.4 436.9 M666.7 435.3 L674.7 434.8 M672.1 433.2 L680.1 432.8 M677.6 431.2 L685.6 430.8 M683.1 429.1 L691.1 428.8 M688.7 427.1 L696.7 426.7 M694.3 425.0 L702.3 424.7 M699.9 423.0 L707.9 422.7 M705.6 420.9 L713.6 420.6 M711.4 418.8 L719.4 418.6 M717.2 416.8 L725.2 416.5 M723.1 414.7 L731.1 414.4 M729.0 412.6 L737.0 412.3 M735.0 410.5 L743.0 410.3 M741.0 408.4 L749.0 408.2 M747.1 406.3 L755.1 406.1 M753.2 404.2 L761.2 404.0 M759.4 402.1 L767.4 401.9 M765.6 400.0 L773.6 399.8 M771.9 397.9 L779.9 397.7 M778.3 395.8 L786.3 395.7 M784.7 393.6 L792.7 393.6 M791.2 391.5 L799.2 391.5 M797.7 389.4 L805.7 389.4 M804.3 387.3 L812.3 387.3 M810.9 385.2 L818.9 385.3 M817.6 383.1 L825.6 383.2 M824.4 381.0 L832.4 381.2 M831.2 378.9 L839.2 379.2 M838.1 376.8 L846.1 377.1 M845.1 374.7 L853.1 375.1 M852.1 372.6 L860.1 373.2 M859.2 370.5 L867.2 371.2 M866.3 368.5 L874.3 369.2 M873.5 366.4 L881.5 367.3 M880.8 364.4 L888.8 365.4 M888.1 362.4 L896.1 363.5 M895.5 360.4 L903.5 361.7 M903.0 358.4 L911.0 359.9 M910.5 356.4 L918.5 358.1 M918.1 354.4 L926.1 356.3 M925.8 352.5 L933.8 354.6 M933.6 350.6 L941.6 353.0 M941.4 348.7 L949.4 351.4 M949.2 346.9 L957.2 349.8 M957.2 345.1 L965.2 348.3 M965.2 343.3 L973.2 346.9 M973.3 341.6 L981.3 345.6 M981.5 339.9 L989.5 344.3 M989.7 338.3 L997.7 343.1 M998.1 336.7 L1006.1 342.0 M1006.4 335.5 L1014.4 341.0 M1014.9 333.9 L1022.9 340.2 M1023.5 332.6 L1031.5 339.4 M1032.1 331.4 L1040.1 338.7 M1040.8 330.5 L1048.8 338.2 M1049.5 329.8 L1057.5 337.8 M1058.4 329.2 L1065.6 337.6 M1067.3 328.8 L1073.6 337.5 M1076.3 328.6 L1081.7 337.5 M1085.2 328.5 L1089.7 337.6 M1094.2 328.5 L1097.8 337.9 M1103.1 328.7 L1105.8 338.3 M1112.1 329.0 L1113.9 338.8 M1121.0 329.3 L1121.9 339.3 M289.0 728.2 L292.0 728.8 L294.9 729.2 L297.9 729.4 L300.8 729.4 L303.8 729.3 L306.7 728.9 L309.7 728.0 L312.6 726.6 L315.6 724.8 L318.5 722.6 L321.5 720.0 L324.4 717.1 L327.4 714.0 L330.3 710.6 L333.3 706.9 L336.3 703.2 L339.2 699.2 L342.2 695.2 L345.1 691.0 L348.1 686.9 L351.0 682.6 L354.0 678.4 L356.9 674.2 L359.9 669.9 L362.8 665.7 L365.8 661.4 L368.7 657.2 L371.7 653.1 L374.6 649.1 L377.6 645.2 L380.6 641.3 L383.5 637.6 L386.5 634.0 L389.4 630.5 L392.4 627.0 L395.3 623.7 L398.3 620.4 L401.2 617.2 L404.2 613.9 L407.2 610.6 L410.2 607.2 L413.2 603.8 L416.3 600.2 L419.4 596.6 L422.5 592.8 L425.7 588.9 L428.9 585.0 L432.1 581.1 L435.3 577.1 L438.6 573.1 L441.9 569.1 L445.2 565.2 L448.6 561.4 L452.0 557.7 L455.4 554.1 L458.9 550.8 L462.3 547.6 L465.9 544.6 L469.4 541.7 L473.0 539.1 L476.6 536.6 L480.2 534.2 L483.9 532.0 L487.7 529.8 L491.5 527.6 L495.3 525.5 L499.1 523.3 L503.0 521.0 L506.9 518.7 L510.9 516.3 L514.9 513.9 L518.9 511.4 L523.0 508.8 L527.0 506.2 L531.2 503.5 L535.4 500.9 L539.6 498.2 L543.8 495.5 L548.1 492.9 L552.4 490.2 L556.8 487.6 L561.2 485.1 L565.6 482.5 L570.1 480.0 L574.6 477.5 L579.2 475.1 L583.8 472.6 L588.4 470.2 L593.1 467.9 L597.9 465.5 L602.6 463.2 L607.5 460.9 L612.3 458.7 L617.2 456.4 L622.2 454.2 L627.1 452.0 L632.2 449.9 L637.3 447.7 L642.4 445.6 L647.6 443.5 L652.8 441.4 L658.1 439.3 L663.4 437.2 L668.7 435.2 L674.1 433.1 L679.6 431.1 L685.1 429.0 L690.7 427.0 L696.3 425.0 L701.9 422.9 L707.6 420.8 L713.4 418.8 L719.2 416.7 L725.1 414.6 L731.0 412.5 L737.0 410.4 L743.0 408.4 L749.1 406.3 L755.2 404.2 L761.4 402.0 L767.6 399.9 L773.9 397.8 L780.3 395.7 L786.7 393.6 L793.2 391.5 L799.7 389.4 L806.3 387.3 L812.9 385.2 L819.6 383.1 L826.4 381.0 L833.2 378.9 L840.1 376.9 L847.1 374.8 L854.1 372.7 L861.2 370.7 L868.3 368.7 L875.5 366.7 L882.8 364.6 L890.1 362.7 L897.5 360.7 L905.0 358.7 L912.5 356.8 L920.1 354.9 L927.8 353.0 L935.6 351.2 L943.4 349.4 L951.2 347.6 L959.2 345.9 L967.2 344.2 L975.3 342.6 L983.5 341.0 L991.7 339.5 L1000.1 338.1 L1008.4 336.9 L1016.9 335.5 L1025.5 334.3 L1034.1 333.2 L1042.8 332.4 L1051.5 331.8 L1060.2 331.3 L1068.9 331.0 L1077.6 330.8 L1086.4 330.8 L1095.1 330.9 L1103.8 331.1 L1112.5 331.5 L1121.3 331.8 L1130.0 332.1 M293.0 735.5 L295.9 736.4 L298.8 737.0 L301.8 737.2 L304.7 737.2 L307.6 736.8 L310.5 736.2 L313.5 735.0 L316.4 733.4 L319.3 731.4 L322.2 728.9 L325.1 726.1 L328.1 723.1 L331.0 719.7 L333.9 716.1 L336.8 712.2 L339.8 708.2 L342.7 704.1 L345.6 699.8 L348.5 695.5 L351.5 691.1 L354.4 686.7 L357.3 682.3 L360.2 677.9 L363.1 673.4 L366.1 669.1 L369.0 664.7 L371.9 660.5 L374.8 656.3 L377.8 652.3 L380.7 648.3 L383.6 644.5 L386.5 640.8 L389.4 637.2 L392.4 633.7 L395.3 630.2 L398.2 626.8 L401.1 623.5 L404.1 620.1 L407.0 616.8 L410.0 613.3 L412.9 609.7 L416.0 606.1 L419.0 602.3 L422.1 598.4 L425.2 594.4 L428.3 590.3 L431.4 586.2 L434.6 582.0 L437.8 577.9 L441.1 573.7 L444.3 569.6 L447.6 565.6 L450.9 561.8 L454.3 558.1 L457.7 554.5 L461.1 551.2 L464.5 548.1 L468.0 545.1 L471.5 542.4 L475.1 539.8 L478.6 537.4 L482.3 535.1 L485.9 532.8 L489.7 530.6 L493.5 528.5 L497.3 526.3 L501.1 524.1 L505.0 521.7 L508.9 519.4 L512.9 516.9 L516.9 514.4 L520.9 511.8 L525.0 509.1 L529.0 506.4 L533.2 503.7 L537.4 501.0 L541.6 498.3 L545.8 495.6 L550.1 492.9 L554.4 490.2 L558.8 487.6 L563.2 485.0 L567.6 482.4 L572.1 479.9 L576.6 477.4 L581.2 474.9 L585.8 472.5 L590.4 470.1 L595.1 467.7 L599.9 465.3 L604.6 463.0 L609.5 460.7 L614.3 458.5 L619.2 456.2 L624.2 454.0 L629.1 451.9 L634.2 449.7 L639.3 447.6 L644.4 445.4 L649.6 443.3 L654.8 441.2 L660.1 439.2 L665.4 437.1 L670.7 435.1 L676.1 433.0 L681.6 431.0 L687.1 428.9 L692.7 426.9 L698.3 424.9 L703.9 422.8 L709.6 420.8 L715.4 418.7 L721.2 416.6 L727.1 414.6 L733.0 412.5 L739.0 410.4 L745.0 408.3 L751.1 406.2 L757.2 404.1 L763.4 402.0 L769.6 399.9 L775.9 397.8 L782.3 395.7 L788.7 393.6 L795.2 391.5 L801.7 389.4 L808.3 387.3 L814.9 385.2 L821.6 383.2 L828.4 381.1 L835.2 379.0 L842.1 377.0 L849.1 374.9 L856.1 372.9 L863.2 370.9 L870.3 368.9 L877.5 366.9 L884.8 364.9 L892.1 363.0 L899.5 361.0 L907.0 359.1 L914.5 357.2 L922.1 355.4 L929.8 353.6 L937.6 351.8 L945.4 350.1 L953.2 348.4 L961.2 346.7 L969.2 345.1 L977.3 343.6 L985.5 342.1 L993.7 340.7 L1002.1 339.4 L1010.4 338.3 L1018.9 337.0 L1027.5 336.0 L1036.1 335.1 L1044.8 334.3 L1053.5 333.8 L1062.0 333.4 L1070.5 333.1 L1079.0 333.0 L1087.5 333.1 L1096.0 333.2 L1104.5 333.5 L1113.0 333.9 L1121.5 334.3 L1130.0 334.6 M297.0 742.7 L299.9 744.0 L302.8 744.8 L305.7 745.1 L308.6 745.0 L311.5 744.4 L314.4 743.5 L317.2 742.1 L320.1 740.2 L323.0 737.9 L325.9 735.3 L328.8 732.3 L331.7 729.0 L334.6 725.4 L337.5 721.6 L340.4 717.5 L343.3 713.3 L346.2 709.0 L349.1 704.5 L351.9 700.0 L354.8 695.4 L357.7 690.7 L360.6 686.1 L363.5 681.5 L366.4 677.0 L369.3 672.5 L372.2 668.1 L375.1 663.8 L378.0 659.5 L380.9 655.4 L383.8 651.5 L386.7 647.7 L389.5 644.0 L392.4 640.4 L395.3 636.8 L398.2 633.4 L401.1 630.0 L404.0 626.6 L406.9 623.1 L409.8 619.6 L412.7 616.0 L415.7 612.3 L418.7 608.4 L421.7 604.4 L424.7 600.2 L427.8 596.0 L430.9 591.7 L434.0 587.4 L437.1 583.0 L440.3 578.7 L443.5 574.4 L446.7 570.2 L450.0 566.1 L453.3 562.2 L456.6 558.5 L460.0 555.0 L463.3 551.7 L466.8 548.6 L470.2 545.7 L473.7 543.0 L477.2 540.5 L480.7 538.1 L484.3 535.9 L487.9 533.7 L491.7 531.5 L495.5 529.3 L499.3 527.1 L503.1 524.8 L507.0 522.4 L510.9 520.0 L514.9 517.4 L518.9 514.8 L522.9 512.2 L527.0 509.5 L531.0 506.7 L535.2 503.9 L539.4 501.2 L543.6 498.4 L547.8 495.6 L552.1 492.9 L556.4 490.2 L560.8 487.5 L565.2 484.9 L569.6 482.3 L574.1 479.8 L578.6 477.2 L583.2 474.8 L587.8 472.3 L592.4 469.9 L597.1 467.5 L601.9 465.2 L606.6 462.8 L611.5 460.5 L616.3 458.3 L621.2 456.1 L626.2 453.9 L631.1 451.7 L636.2 449.5 L641.3 447.4 L646.4 445.3 L651.6 443.2 L656.8 441.1 L662.1 439.0 L667.4 437.0 L672.7 434.9 L678.1 432.9 L683.6 430.9 L689.1 428.9 L694.7 426.8 L700.3 424.8 L705.9 422.7 L711.6 420.7 L717.4 418.6 L723.2 416.6 L729.1 414.5 L735.0 412.4 L741.0 410.3 L747.0 408.2 L753.1 406.2 L759.2 404.1 L765.4 402.0 L771.6 399.9 L777.9 397.8 L784.3 395.7 L790.7 393.6 L797.2 391.5 L803.7 389.4 L810.3 387.3 L816.9 385.3 L823.6 383.2 L830.4 381.1 L837.2 379.1 L844.1 377.0 L851.1 375.0 L858.1 373.0 L865.2 371.0 L872.3 369.0 L879.5 367.1 L886.8 365.2 L894.1 363.2 L901.5 361.3 L909.0 359.5 L916.5 357.7 L924.1 355.9 L931.8 354.1 L939.6 352.4 L947.4 350.7 L955.2 349.1 L963.2 347.5 L971.2 346.0 L979.3 344.6 L987.5 343.2 L995.7 341.9 L1004.1 340.7 L1012.4 339.7 L1020.9 338.6 L1029.5 337.7 L1038.1 336.9 L1046.8 336.3 L1055.5 335.8 L1063.8 335.5 L1072.0 335.3 L1080.3 335.3 L1088.6 335.3 L1096.9 335.6 L1105.2 335.9 L1113.4 336.4 L1121.7 336.8 L1130.0 337.1" fill="none" stroke="#000" stroke-width="0.55"/><path d="M285.0 665.5L288.0 664.0L288.0 683.1L285.0 684.0ZM285.0 684.0L288.0 683.1L288.0 702.1L285.0 702.4ZM288.0 664.0L291.0 662.6L291.0 682.2L288.0 683.1ZM288.0 683.1L291.0 682.2L291.0 701.8L288.0 702.1ZM291.0 662.6L294.0 661.3L294.0 681.4L291.0 682.2ZM294.0 661.3L296.9 660.0L297.0 680.6L294.0 681.4ZM1049.5 319.7L1058.4 318.9L1059.6 322.3L1050.9 323.0ZM1050.9 323.0L1059.6 322.3L1060.8 325.7L1052.2 326.2ZM1052.2 326.2L1060.8 325.7L1062.0 329.0L1053.5 329.5ZM1058.4 318.9L1067.3 318.4L1068.4 321.8L1059.6 322.3ZM1059.6 322.3L1068.4 321.8L1069.4 325.3L1060.8 325.7ZM1060.8 325.7L1069.4 325.3L1070.5 328.7L1062.0 329.0ZM1067.3 318.4L1076.3 318.0L1077.2 321.5L1068.4 321.8ZM1068.4 321.8L1077.2 321.5L1078.1 325.0L1069.4 325.3ZM1069.4 325.3L1078.1 325.0L1079.0 328.6L1070.5 328.7ZM1076.3 318.0L1085.2 317.7L1086.0 321.3L1077.2 321.5ZM1077.2 321.5L1086.0 321.3L1086.7 324.9L1078.1 325.0Z" fill="#0000f8" stroke="#0000f8"/><path d="M285.0 702.4L288.0 702.1L288.0 721.2L285.0 720.9ZM288.0 702.1L291.0 701.8L291.1 721.4L288.0 721.2ZM291.0 682.2L294.0 681.4L294.1 701.5L291.0 701.8ZM291.0 701.8L294.1 701.5L294.1 721.6L291.1 721.4ZM294.0 681.4L297.0 680.6L297.1 701.1L294.1 701.5ZM294.1 701.5L297.1 701.1L297.2 721.7L294.1 721.6ZM296.9 660.0L299.9 658.8L300.0 679.8L297.0 680.6ZM297.0 680.6L300.0 679.8L300.1 700.7L297.1 701.1ZM297.1 701.1L300.1 700.7L300.2 721.7L297.2 721.7ZM299.9 658.8L302.9 657.6L303.0 678.9L300.0 679.8ZM300.0 679.8L303.0 678.9L303.1 700.2L300.1 700.7ZM300.1 700.7L303.1 700.2L303.3 721.5L300.2 721.7ZM302.9 657.6L305.9 656.4L306.0 677.9L303.0 678.9ZM303.0 678.9L306.0 677.9L306.2 699.3L303.1 700.2ZM303.1 700.2L306.2 699.3L306.3 720.8L303.3 721.5ZM305.9 656.4L308.9 655.1L309.0 676.6L306.0 677.9ZM306.0 677.9L309.0 676.6L309.2 698.1L306.2 699.3ZM308.9 655.1L311.9 653.7L312.0 675.1L309.0 676.6ZM309.0 676.6L312.0 675.1L312.2 696.5L309.2 698.1ZM311.9 653.7L314.8 652.3L315.0 673.5L312.0 675.1ZM314.8 652.3L317.8 650.9L318.0 671.7L315.0 673.5ZM1014.9 325.4L1023.5 323.5L1024.8 326.3L1016.2 328.0ZM1016.2 328.0L1024.8 326.3L1026.1 329.2L1017.6 330.7ZM1017.6 330.7L1026.1 329.2L1027.5 332.0L1018.9 333.3ZM1023.5 323.5L1032.1 321.9L1033.4 324.9L1024.8 326.3ZM1024.8 326.3L1033.4 324.9L1034.7 327.9L1026.1 329.2ZM1026.1 329.2L1034.7 327.9L1036.1 330.9L1027.5 332.0ZM1032.1 321.9L1040.8 320.6L1042.1 323.8L1033.4 324.9ZM1033.4 324.9L1042.1 323.8L1043.4 327.0L1034.7 327.9ZM1034.7 327.9L1043.4 327.0L1044.8 330.1L1036.1 330.9ZM1040.8 320.6L1049.5 319.7L1050.9 323.0L1042.1 323.8ZM1042.1 323.8L1050.9 323.0L1052.2 326.2L1043.4 327.0ZM1043.4 327.0L1052.2 326.2L1053.5 329.5L1044.8 330.1Z" fill="#0068ff" stroke="#0068ff"/><path d="M306.2 699.3L309.2 698.1L309.4 719.6L306.3 720.8ZM309.2 698.1L312.2 696.5L312.4 717.9L309.4 719.6ZM312.0 675.1L315.0 673.5L315.2 694.6L312.2 696.5ZM312.2 696.5L315.2 694.6L315.5 715.8L312.4 717.9ZM315.0 673.5L318.0 671.7L318.3 692.5L315.2 694.6ZM315.2 694.6L318.3 692.5L318.5 713.3L315.5 715.8ZM317.8 650.9L320.8 649.3L321.1 669.7L318.0 671.7ZM318.0 671.7L321.1 669.7L321.3 690.1L318.3 692.5ZM318.3 692.5L321.3 690.1L321.5 710.5L318.5 713.3ZM320.8 649.3L323.8 647.7L324.1 667.6L321.1 669.7ZM321.1 669.7L324.1 667.6L324.3 687.5L321.3 690.1ZM321.3 690.1L324.3 687.5L324.6 707.4L321.5 710.5ZM323.8 647.7L326.8 646.0L327.1 665.4L324.1 667.6ZM324.1 667.6L327.1 665.4L327.3 684.7L324.3 687.5ZM324.3 687.5L327.3 684.7L327.6 704.1L324.6 707.4ZM326.8 646.0L329.8 644.3L330.1 663.1L327.1 665.4ZM327.1 665.4L330.1 663.1L330.4 681.8L327.3 684.7ZM329.8 644.3L332.7 642.5L333.1 660.6L330.1 663.1ZM330.1 663.1L333.1 660.6L333.4 678.7L330.4 681.8ZM332.7 642.5L335.7 640.6L336.1 658.1L333.1 660.6ZM982.8 335.2L991.1 333.3L992.4 335.4L984.2 337.1ZM984.2 337.1L992.4 335.4L993.7 337.5L985.5 339.1ZM989.7 331.1L998.1 329.1L999.4 331.5L991.1 333.3ZM991.1 333.3L999.4 331.5L1000.7 333.9L992.4 335.4ZM992.4 335.4L1000.7 333.9L1002.1 336.3L993.7 337.5ZM998.1 329.1L1006.4 327.7L1007.8 330.0L999.4 331.5ZM999.4 331.5L1007.8 330.0L1009.1 332.4L1000.7 333.9ZM1000.7 333.9L1009.1 332.4L1010.4 334.7L1002.1 336.3ZM1006.4 327.7L1014.9 325.4L1016.2 328.0L1007.8 330.0ZM1007.8 330.0L1016.2 328.0L1017.6 330.7L1009.1 332.4ZM1009.1 332.4L1017.6 330.7L1018.9 333.3L1010.4 334.7Z" fill="#00c0f8" stroke="#00c0f8"/><path d="M327.3 684.7L330.4 681.8L330.7 700.6L327.6 704.1ZM330.4 681.8L333.4 678.7L333.7 696.9L330.7 700.6ZM333.1 660.6L336.1 658.1L336.4 675.5L333.4 678.7ZM333.4 678.7L336.4 675.5L336.8 693.0L333.7 696.9ZM335.7 640.6L338.7 638.7L339.1 655.5L336.1 658.1ZM336.1 658.1L339.1 655.5L339.4 672.3L336.4 675.5ZM336.4 675.5L339.4 672.3L339.8 689.1L336.8 693.0ZM338.7 638.7L341.7 636.6L342.1 652.8L339.1 655.5ZM339.1 655.5L342.1 652.8L342.5 668.9L339.4 672.3ZM339.4 672.3L342.5 668.9L342.9 685.0L339.8 689.1ZM341.7 636.6L344.7 634.6L345.1 650.0L342.1 652.8ZM342.1 652.8L345.1 650.0L345.5 665.5L342.5 668.9ZM342.5 668.9L345.5 665.5L345.9 681.0L342.9 685.0ZM344.7 634.6L347.7 632.4L348.1 647.2L345.1 650.0ZM345.1 650.0L348.1 647.2L348.5 662.0L345.5 665.5ZM345.5 665.5L348.5 662.0L348.9 676.8L345.9 681.0ZM347.7 632.4L350.6 630.2L351.1 644.4L348.1 647.2ZM348.1 647.2L351.1 644.4L351.5 658.6L348.5 662.0ZM350.6 630.2L353.6 628.1L354.1 641.6L351.1 644.4ZM353.6 628.1L356.6 626.1L357.1 638.8L354.1 641.6ZM949.2 341.5L957.2 339.4L958.5 341.0L950.6 343.0ZM950.6 343.0L958.5 341.0L959.9 342.6L951.9 344.5ZM951.9 344.5L959.9 342.6L961.2 344.2L953.2 346.0ZM957.2 339.4L965.2 337.3L966.6 339.0L958.5 341.0ZM958.5 341.0L966.6 339.0L967.9 340.7L959.9 342.6ZM959.9 342.6L967.9 340.7L969.2 342.5L961.2 344.2ZM965.2 337.3L973.3 335.2L974.7 337.1L966.6 339.0ZM966.6 339.0L974.7 337.1L976.0 338.9L967.9 340.7ZM967.9 340.7L976.0 338.9L977.3 340.8L969.2 342.5ZM973.3 335.2L981.5 333.2L982.8 335.2L974.7 337.1ZM974.7 337.1L982.8 335.2L984.2 337.1L976.0 338.9ZM976.0 338.9L984.2 337.1L985.5 339.1L977.3 340.8ZM981.5 333.2L989.7 331.1L991.1 333.3L982.8 335.2Z" fill="#00e8d8" stroke="#00e8d8"/><path d="M348.5 662.0L351.5 658.6L352.0 672.7L348.9 676.8ZM351.1 644.4L354.1 641.6L354.6 655.1L351.5 658.6ZM351.5 658.6L354.6 655.1L355.0 668.6L352.0 672.7ZM354.1 641.6L357.1 638.8L357.6 651.6L354.6 655.1ZM354.6 655.1L357.6 651.6L358.1 664.3L355.0 668.6ZM356.6 626.1L359.6 624.2L360.1 636.1L357.1 638.8ZM357.1 638.8L360.1 636.1L360.6 648.1L357.6 651.6ZM357.6 651.6L360.6 648.1L361.1 660.1L358.1 664.3ZM359.6 624.2L362.6 622.3L363.1 633.5L360.1 636.1ZM360.1 636.1L363.1 633.5L363.6 644.7L360.6 648.1ZM360.6 648.1L363.6 644.7L364.2 655.9L361.1 660.1ZM362.6 622.3L365.6 620.5L366.1 630.9L363.1 633.5ZM363.1 633.5L366.1 630.9L366.7 641.3L363.6 644.7ZM363.6 644.7L366.7 641.3L367.2 651.7L364.2 655.9ZM365.6 620.5L368.5 618.7L369.1 628.3L366.1 630.9ZM366.1 630.9L369.1 628.3L369.7 638.0L366.7 641.3ZM368.5 618.7L371.5 616.9L372.1 625.8L369.1 628.3ZM919.5 351.1L927.1 349.1L928.5 350.3L920.8 352.3ZM920.8 352.3L928.5 350.3L929.8 351.5L922.1 353.4ZM925.8 347.8L933.6 345.7L934.9 347.0L927.1 349.1ZM927.1 349.1L934.9 347.0L936.2 348.3L928.5 350.3ZM928.5 350.3L936.2 348.3L937.6 349.6L929.8 351.5ZM933.6 345.7L941.4 343.6L942.7 345.0L934.9 347.0ZM934.9 347.0L942.7 345.0L944.0 346.4L936.2 348.3ZM936.2 348.3L944.0 346.4L945.4 347.8L937.6 349.6ZM941.4 343.6L949.2 341.5L950.6 343.0L942.7 345.0ZM942.7 345.0L950.6 343.0L951.9 344.5L944.0 346.4ZM944.0 346.4L951.9 344.5L953.2 346.0L945.4 347.8Z" fill="#10b088" stroke="#10b088"/><path d="M366.7 641.3L369.7 638.0L370.3 647.6L367.2 651.7ZM369.1 628.3L372.1 625.8L372.7 634.7L369.7 638.0ZM369.7 638.0L372.7 634.7L373.3 643.6L370.3 647.6ZM371.5 616.9L374.5 615.1L375.1 623.3L372.1 625.8ZM372.1 625.8L375.1 623.3L375.7 631.5L372.7 634.7ZM372.7 634.7L375.7 631.5L376.4 639.6L373.3 643.6ZM374.5 615.1L377.5 613.3L378.1 620.8L375.1 623.3ZM375.1 623.3L378.1 620.8L378.8 628.3L375.7 631.5ZM375.7 631.5L378.8 628.3L379.4 635.8L376.4 639.6ZM377.5 613.3L380.5 611.5L381.1 618.3L378.1 620.8ZM378.1 620.8L381.1 618.3L381.8 625.2L378.8 628.3ZM378.8 628.3L381.8 625.2L382.4 632.0L379.4 635.8ZM380.5 611.5L383.5 609.6L384.1 615.9L381.1 618.3ZM381.1 618.3L384.1 615.9L384.8 622.1L381.8 625.2ZM381.8 625.2L384.8 622.1L385.5 628.4L382.4 632.0ZM383.5 609.6L386.5 607.7L387.1 613.4L384.1 615.9ZM384.1 615.9L387.1 613.4L387.8 619.2L384.8 622.1ZM384.8 622.1L387.8 619.2L388.5 624.9L385.5 628.4ZM386.5 607.7L389.4 605.8L390.1 611.0L387.1 613.4ZM387.1 613.4L390.1 611.0L390.9 616.2L387.8 619.2ZM389.4 605.8L392.4 603.8L393.2 608.6L390.1 611.0ZM895.5 356.4L903.0 354.2L904.3 355.3L896.9 357.4ZM896.9 357.4L904.3 355.3L905.7 356.3L898.2 358.3ZM898.2 358.3L905.7 356.3L907.0 357.3L899.5 359.3ZM903.0 354.2L910.5 352.1L911.9 353.2L904.3 355.3ZM904.3 355.3L911.9 353.2L913.2 354.3L905.7 356.3ZM905.7 356.3L913.2 354.3L914.5 355.4L907.0 357.3ZM910.5 352.1L918.1 350.0L919.5 351.1L911.9 353.2ZM911.9 353.2L919.5 351.1L920.8 352.3L913.2 354.3ZM913.2 354.3L920.8 352.3L922.1 353.4L914.5 355.4ZM918.1 350.0L925.8 347.8L927.1 349.1L919.5 351.1Z" fill="#087a30" stroke="#087a30"/><path d="M387.8 619.2L390.9 616.2L391.6 621.5L388.5 624.9ZM390.1 611.0L393.2 608.6L393.9 613.4L390.9 616.2ZM390.9 616.2L393.9 613.4L394.6 618.2L391.6 621.5ZM392.4 603.8L395.4 601.7L396.2 606.1L393.2 608.6ZM393.2 608.6L396.2 606.1L396.9 610.5L393.9 613.4ZM393.9 613.4L396.9 610.5L397.7 614.9L394.6 618.2ZM395.4 601.7L398.4 599.6L399.2 603.6L396.2 606.1ZM396.2 606.1L399.2 603.6L399.9 607.7L396.9 610.5ZM396.9 610.5L399.9 607.7L400.7 611.7L397.7 614.9ZM398.4 599.6L401.4 597.3L402.2 601.0L399.2 603.6ZM399.2 603.6L402.2 601.0L403.0 604.8L399.9 607.7ZM399.9 607.7L403.0 604.8L403.8 608.5L400.7 611.7ZM401.4 597.3L404.4 594.8L405.2 598.3L402.2 601.0ZM402.2 601.0L405.2 598.3L406.0 601.8L403.0 604.8ZM866.3 365.0L873.5 362.8L874.9 363.6L867.6 365.7ZM867.6 365.7L874.9 363.6L876.2 364.5L869.0 366.5ZM869.0 366.5L876.2 364.5L877.5 365.3L870.3 367.3ZM873.5 362.8L880.8 360.7L882.1 361.5L874.9 363.6ZM874.9 363.6L882.1 361.5L883.5 362.4L876.2 364.5ZM876.2 364.5L883.5 362.4L884.8 363.3L877.5 365.3ZM880.8 360.7L888.1 358.5L889.5 359.4L882.1 361.5ZM882.1 361.5L889.5 359.4L890.8 360.4L883.5 362.4ZM883.5 362.4L890.8 360.4L892.1 361.3L884.8 363.3ZM888.1 358.5L895.5 356.4L896.9 357.4L889.5 359.4ZM889.5 359.4L896.9 357.4L898.2 358.3L890.8 360.4ZM890.8 360.4L898.2 358.3L899.5 359.3L892.1 361.3Z" fill="#2a7800" stroke="#2a7800"/><path d="M403.0 604.8L406.0 601.8L406.9 605.3L403.8 608.5ZM404.4 594.8L407.5 592.1L408.3 595.4L405.2 598.3ZM405.2 598.3L408.3 595.4L409.1 598.7L406.0 601.8ZM406.0 601.8L409.1 598.7L410.0 602.0L406.9 605.3ZM407.5 592.1L410.5 589.2L411.4 592.4L408.3 595.4ZM408.3 595.4L411.4 592.4L412.2 595.5L409.1 598.7ZM410.5 589.2L413.6 586.2L414.5 589.2L411.4 592.4ZM845.1 371.4L852.1 369.2L853.4 370.0L846.4 372.1ZM846.4 372.1L853.4 370.0L854.8 370.7L847.7 372.8ZM847.7 372.8L854.8 370.7L856.1 371.4L849.1 373.5ZM852.1 369.2L859.2 367.1L860.5 367.9L853.4 370.0ZM853.4 370.0L860.5 367.9L861.8 368.6L854.8 370.7ZM854.8 370.7L861.8 368.6L863.2 369.4L856.1 371.4ZM859.2 367.1L866.3 365.0L867.6 365.7L860.5 367.9ZM860.5 367.9L867.6 365.7L869.0 366.5L861.8 368.6ZM861.8 368.6L869.0 366.5L870.3 367.3L863.2 369.4Z" fill="#80ac00" stroke="#80ac00"/><path d="M409.1 598.7L412.2 595.5L413.1 598.7L410.0 602.0ZM411.4 592.4L414.5 589.2L415.4 592.2L412.2 595.5ZM412.2 595.5L415.4 592.2L416.3 595.2L413.1 598.7ZM413.6 586.2L416.8 583.0L417.7 585.9L414.5 589.2ZM414.5 589.2L417.7 585.9L418.6 588.8L415.4 592.2ZM415.4 592.2L418.6 588.8L419.5 591.7L416.3 595.2ZM416.8 583.0L419.9 579.7L420.8 582.5L417.7 585.9ZM417.7 585.9L420.8 582.5L421.8 585.3L418.6 588.8ZM820.3 381.2L827.1 379.1L828.4 379.7L821.6 381.8ZM824.4 377.8L831.2 375.7L832.6 376.3L825.7 378.4ZM825.7 378.4L832.6 376.3L833.9 377.0L827.1 379.1ZM827.1 379.1L833.9 377.0L835.2 377.7L828.4 379.7ZM831.2 375.7L838.1 373.5L839.5 374.2L832.6 376.3ZM832.6 376.3L839.5 374.2L840.8 374.9L833.9 377.0ZM833.9 377.0L840.8 374.9L842.1 375.6L835.2 377.7ZM838.1 373.5L845.1 371.4L846.4 372.1L839.5 374.2ZM839.5 374.2L846.4 372.1L847.7 372.8L840.8 374.9ZM840.8 374.9L847.7 372.8L849.1 373.5L842.1 375.6Z" fill="#d8e400" stroke="#d8e400"/><path d="M418.6 588.8L421.8 585.3L422.7 588.0L419.5 591.7ZM419.9 579.7L423.1 576.2L424.1 578.9L420.8 582.5ZM420.8 582.5L424.1 578.9L425.0 581.6L421.8 585.3ZM421.8 585.3L425.0 581.6L425.9 584.3L422.7 588.0ZM423.1 576.2L426.3 572.7L427.3 575.3L424.1 578.9ZM424.1 578.9L427.3 575.3L428.3 577.9L425.0 581.6ZM425.0 581.6L428.3 577.9L429.2 580.5L425.9 584.3ZM426.3 572.7L429.6 569.2L430.6 571.6L427.3 575.3ZM427.3 575.3L430.6 571.6L431.6 574.1L428.3 577.9ZM797.7 386.3L804.3 384.2L805.6 384.8L799.0 386.9ZM799.0 386.9L805.6 384.8L807.0 385.4L800.4 387.5ZM800.4 387.5L807.0 385.4L808.3 386.0L801.7 388.1ZM804.3 384.2L810.9 382.1L812.3 382.7L805.6 384.8ZM805.6 384.8L812.3 382.7L813.6 383.3L807.0 385.4ZM807.0 385.4L813.6 383.3L814.9 383.9L808.3 386.0ZM810.9 382.1L817.6 379.9L819.0 380.6L812.3 382.7ZM812.3 382.7L819.0 380.6L820.3 381.2L813.6 383.3ZM813.6 383.3L820.3 381.2L821.6 381.8L814.9 383.9ZM817.6 379.9L824.4 377.8L825.7 378.4L819.0 380.6ZM819.0 380.6L825.7 378.4L827.1 379.1L820.3 381.2Z" fill="#ffe800" stroke="#ffe800"/><path d="M428.3 577.9L431.6 574.1L432.5 576.6L429.2 580.5ZM429.6 569.2L432.9 565.5L433.9 567.9L430.6 571.6ZM430.6 571.6L433.9 567.9L434.9 570.3L431.6 574.1ZM431.6 574.1L434.9 570.3L435.9 572.7L432.5 576.6ZM432.9 565.5L436.2 561.9L437.2 564.2L433.9 567.9ZM433.9 567.9L437.2 564.2L438.2 566.5L434.9 570.3ZM434.9 570.3L438.2 566.5L439.3 568.8L435.9 572.7ZM436.2 561.9L439.5 558.3L440.5 560.5L437.2 564.2ZM437.2 564.2L440.5 560.5L441.6 562.7L438.2 566.5ZM771.9 394.8L778.3 392.7L779.6 393.3L773.3 395.4ZM773.3 395.4L779.6 393.3L780.9 393.9L774.6 396.0ZM774.6 396.0L780.9 393.9L782.3 394.4L775.9 396.5ZM778.3 392.7L784.7 390.6L786.0 391.2L779.6 393.3ZM779.6 393.3L786.0 391.2L787.4 391.7L780.9 393.9ZM780.9 393.9L787.4 391.7L788.7 392.3L782.3 394.4ZM784.7 390.6L791.2 388.5L792.5 389.0L786.0 391.2ZM786.0 391.2L792.5 389.0L793.8 389.6L787.4 391.7ZM787.4 391.7L793.8 389.6L795.2 390.2L788.7 392.3ZM791.2 388.5L797.7 386.3L799.0 386.9L792.5 389.0ZM792.5 389.0L799.0 386.9L800.4 387.5L793.8 389.6ZM793.8 389.6L800.4 387.5L801.7 388.1L795.2 390.2Z" fill="#ffcc00" stroke="#ffcc00"/><path d="M438.2 566.5L441.6 562.7L442.7 564.9L439.3 568.8ZM439.5 558.3L442.9 554.7L443.9 556.8L440.5 560.5ZM440.5 560.5L443.9 556.8L445.0 559.0L441.6 562.7ZM441.6 562.7L445.0 559.0L446.1 561.1L442.7 564.9ZM442.9 554.7L446.3 551.2L447.4 553.3L443.9 556.8ZM443.9 556.8L447.4 553.3L448.5 555.3L445.0 559.0ZM445.0 559.0L448.5 555.3L449.6 557.4L446.1 561.1ZM446.3 551.2L449.7 547.8L450.8 549.8L447.4 553.3ZM447.4 553.3L450.8 549.8L451.9 551.8L448.5 555.3ZM743.6 406.5L749.7 404.4L751.1 404.9L745.0 407.0ZM747.1 403.3L753.2 401.2L754.5 401.7L748.4 403.8ZM748.4 403.8L754.5 401.7L755.9 402.3L749.7 404.4ZM749.7 404.4L755.9 402.3L757.2 402.8L751.1 404.9ZM753.2 401.2L759.4 399.1L760.7 399.6L754.5 401.7ZM754.5 401.7L760.7 399.6L762.0 400.2L755.9 402.3ZM755.9 402.3L762.0 400.2L763.4 400.7L757.2 402.8ZM759.4 399.1L765.6 396.9L767.0 397.5L760.7 399.6ZM760.7 399.6L767.0 397.5L768.3 398.1L762.0 400.2ZM762.0 400.2L768.3 398.1L769.6 398.6L763.4 400.7ZM765.6 396.9L771.9 394.8L773.3 395.4L767.0 397.5ZM767.0 397.5L773.3 395.4L774.6 396.0L768.3 398.1ZM768.3 398.1L774.6 396.0L775.9 396.5L769.6 398.6Z" fill="#ffa800" stroke="#ffa800"/><path d="M448.5 555.3L451.9 551.8L453.1 553.8L449.6 557.4ZM449.7 547.8L453.1 544.5L454.3 546.4L450.8 549.8ZM450.8 549.8L454.3 546.4L455.4 548.4L451.9 551.8ZM451.9 551.8L455.4 548.4L456.6 550.3L453.1 553.8ZM453.1 544.5L456.6 541.3L457.8 543.2L454.3 546.4ZM454.3 546.4L457.8 543.2L459.0 545.1L455.4 548.4ZM455.4 548.4L459.0 545.1L460.1 547.1L456.6 550.3ZM456.6 541.3L460.1 538.3L461.3 540.2L457.8 543.2ZM457.8 543.2L461.3 540.2L462.5 542.1L459.0 545.1ZM459.0 545.1L462.5 542.1L463.7 544.0L460.1 547.1ZM460.1 538.3L463.7 535.4L464.9 537.3L461.3 540.2ZM717.2 413.7L723.1 411.6L724.4 412.2L718.5 414.2ZM718.5 414.2L724.4 412.2L725.7 412.7L719.9 414.8ZM719.9 414.8L725.7 412.7L727.1 413.3L721.2 415.4ZM723.1 411.6L729.0 409.5L730.3 410.1L724.4 412.2ZM724.4 412.2L730.3 410.1L731.7 410.6L725.7 412.7ZM725.7 412.7L731.7 410.6L733.0 411.2L727.1 413.3ZM729.0 409.5L735.0 407.4L736.3 408.0L730.3 410.1ZM730.3 410.1L736.3 408.0L737.6 408.6L731.7 410.6ZM731.7 410.6L737.6 408.6L739.0 409.1L733.0 411.2ZM735.0 407.4L741.0 405.4L742.3 405.9L736.3 408.0ZM736.3 408.0L742.3 405.9L743.6 406.5L737.6 408.6ZM737.6 408.6L743.6 406.5L745.0 407.0L739.0 409.1ZM741.0 405.4L747.1 403.3L748.4 403.8L742.3 405.9ZM742.3 405.9L748.4 403.8L749.7 404.4L743.6 406.5Z" fill="#ff7800" stroke="#ff7800"/><path d="M461.3 540.2L464.9 537.3L466.1 539.2L462.5 542.1ZM462.5 542.1L466.1 539.2L467.4 541.0L463.7 544.0ZM463.7 535.4L467.3 532.6L468.5 534.5L464.9 537.3ZM464.9 537.3L468.5 534.5L469.8 536.4L466.1 539.2ZM466.1 539.2L469.8 536.4L471.0 538.3L467.4 541.0ZM467.3 532.6L470.9 530.0L472.2 531.9L468.5 534.5ZM468.5 534.5L472.2 531.9L473.4 533.8L469.8 536.4ZM469.8 536.4L473.4 533.8L474.7 535.7L471.0 538.3ZM470.9 530.0L474.5 527.6L475.8 529.5L472.2 531.9ZM472.2 531.9L475.8 529.5L477.1 531.4L473.4 533.8ZM473.4 533.8L477.1 531.4L478.4 533.3L474.7 535.7ZM474.5 527.6L478.2 525.3L479.5 527.2L475.8 529.5ZM677.6 428.1L683.1 426.1L684.4 426.6L678.9 428.6ZM678.9 428.6L684.4 426.6L685.8 427.1L680.3 429.2ZM680.3 429.2L685.8 427.1L687.1 427.7L681.6 429.7ZM683.1 426.1L688.7 424.0L690.0 424.5L684.4 426.6ZM684.4 426.6L690.0 424.5L691.3 425.1L685.8 427.1ZM685.8 427.1L691.3 425.1L692.7 425.6L687.1 427.7ZM688.7 424.0L694.3 422.0L695.6 422.5L690.0 424.5ZM690.0 424.5L695.6 422.5L696.9 423.0L691.3 425.1ZM691.3 425.1L696.9 423.0L698.3 423.6L692.7 425.6ZM694.3 422.0L699.9 419.9L701.3 420.4L695.6 422.5ZM695.6 422.5L701.3 420.4L702.6 421.0L696.9 423.0ZM696.9 423.0L702.6 421.0L703.9 421.5L698.3 423.6ZM699.9 419.9L705.6 417.8L707.0 418.4L701.3 420.4ZM701.3 420.4L707.0 418.4L708.3 418.9L702.6 421.0ZM702.6 421.0L708.3 418.9L709.6 419.5L703.9 421.5ZM705.6 417.8L711.4 415.8L712.7 416.3L707.0 418.4ZM707.0 418.4L712.7 416.3L714.1 416.9L708.3 418.9ZM708.3 418.9L714.1 416.9L715.4 417.4L709.6 419.5ZM711.4 415.8L717.2 413.7L718.5 414.2L712.7 416.3ZM712.7 416.3L718.5 414.2L719.9 414.8L714.1 416.9ZM714.1 416.9L719.9 414.8L721.2 415.4L715.4 417.4Z" fill="#ff4000" stroke="#ff4000"/><path d="M475.8 529.5L479.5 527.2L480.9 529.0L477.1 531.4ZM477.1 531.4L480.9 529.0L482.2 530.9L478.4 533.3ZM478.2 525.3L481.9 523.0L483.3 524.9L479.5 527.2ZM479.5 527.2L483.3 524.9L484.6 526.8L480.9 529.0ZM480.9 529.0L484.6 526.8L485.9 528.7L482.2 530.9ZM481.9 523.0L485.7 520.9L487.0 522.8L483.3 524.9ZM483.3 524.9L487.0 522.8L488.3 524.7L484.6 526.8ZM484.6 526.8L488.3 524.7L489.7 526.6L485.9 528.7ZM485.7 520.9L489.5 518.7L490.8 520.7L487.0 522.8ZM487.0 522.8L490.8 520.7L492.1 522.6L488.3 524.7ZM488.3 524.7L492.1 522.6L493.5 524.5L489.7 526.6ZM489.5 518.7L493.3 516.6L494.6 518.6L490.8 520.7ZM490.8 520.7L494.6 518.6L495.9 520.5L492.1 522.6ZM492.1 522.6L495.9 520.5L497.3 522.4L493.5 524.5ZM493.3 516.6L497.1 514.5L498.5 516.5L494.6 518.6ZM494.6 518.6L498.5 516.5L499.8 518.4L495.9 520.5ZM495.9 520.5L499.8 518.4L501.1 520.3L497.3 522.4ZM497.1 514.5L501.0 512.4L502.3 514.3L498.5 516.5ZM498.5 516.5L502.3 514.3L503.7 516.2L499.8 518.4ZM499.8 518.4L503.7 516.2L505.0 518.1L501.1 520.3ZM501.0 512.4L504.9 510.2L506.3 512.1L502.3 514.3ZM502.3 514.3L506.3 512.1L507.6 513.9L503.7 516.2ZM503.7 516.2L507.6 513.9L508.9 515.8L505.0 518.1ZM504.9 510.2L508.9 508.0L510.2 509.8L506.3 512.1ZM506.3 512.1L510.2 509.8L511.5 511.6L507.6 513.9ZM637.9 445.7L643.1 443.6L644.4 444.1L639.3 446.2ZM640.4 442.5L645.6 440.5L646.9 441.0L641.7 443.1ZM641.7 443.1L646.9 441.0L648.2 441.5L643.1 443.6ZM643.1 443.6L648.2 441.5L649.6 442.0L644.4 444.1ZM645.6 440.5L650.8 438.4L652.1 438.9L646.9 441.0ZM646.9 441.0L652.1 438.9L653.5 439.4L648.2 441.5ZM648.2 441.5L653.5 439.4L654.8 439.9L649.6 442.0ZM650.8 438.4L656.1 436.3L657.4 436.8L652.1 438.9ZM652.1 438.9L657.4 436.8L658.7 437.4L653.5 439.4ZM653.5 439.4L658.7 437.4L660.1 437.9L654.8 439.9ZM656.1 436.3L661.4 434.3L662.7 434.8L657.4 436.8ZM657.4 436.8L662.7 434.8L664.0 435.3L658.7 437.4ZM658.7 437.4L664.0 435.3L665.4 435.8L660.1 437.9ZM661.4 434.3L666.7 432.2L668.1 432.7L662.7 434.8ZM662.7 434.8L668.1 432.7L669.4 433.2L664.0 435.3ZM664.0 435.3L669.4 433.2L670.7 433.8L665.4 435.8ZM666.7 432.2L672.1 430.1L673.5 430.7L668.1 432.7ZM668.1 432.7L673.5 430.7L674.8 431.2L669.4 433.2ZM669.4 433.2L674.8 431.2L676.1 431.7L670.7 433.8ZM672.1 430.1L677.6 428.1L678.9 428.6L673.5 430.7ZM673.5 430.7L678.9 428.6L680.3 429.2L674.8 431.2ZM674.8 431.2L680.3 429.2L681.6 429.7L676.1 431.7Z" fill="#ff0000" stroke="#ff0000"/><path d="M507.6 513.9L511.5 511.6L512.9 513.4L508.9 515.8ZM508.9 508.0L512.9 505.8L514.2 507.5L510.2 509.8ZM510.2 509.8L514.2 507.5L515.5 509.2L511.5 511.6ZM511.5 511.6L515.5 509.2L516.9 511.0L512.9 513.4ZM512.9 505.8L516.9 503.5L518.2 505.2L514.2 507.5ZM514.2 507.5L518.2 505.2L519.6 506.8L515.5 509.2ZM515.5 509.2L519.6 506.8L520.9 508.5L516.9 511.0ZM516.9 503.5L521.0 501.2L522.3 502.8L518.2 505.2ZM518.2 505.2L522.3 502.8L523.6 504.4L519.6 506.8ZM519.6 506.8L523.6 504.4L525.0 506.0L520.9 508.5ZM521.0 501.2L525.0 498.8L526.4 500.4L522.3 502.8ZM522.3 502.8L526.4 500.4L527.7 501.9L523.6 504.4ZM523.6 504.4L527.7 501.9L529.0 503.4L525.0 506.0ZM525.0 498.8L529.2 496.5L530.5 497.9L526.4 500.4ZM526.4 500.4L530.5 497.9L531.9 499.4L527.7 501.9ZM527.7 501.9L531.9 499.4L533.2 500.8L529.0 503.4ZM529.2 496.5L533.4 494.1L534.7 495.5L530.5 497.9ZM530.5 497.9L534.7 495.5L536.0 496.9L531.9 499.4ZM531.9 499.4L536.0 496.9L537.4 498.3L533.2 500.8ZM533.4 494.1L537.6 491.7L538.9 493.0L534.7 495.5ZM534.7 495.5L538.9 493.0L540.2 494.3L536.0 496.9ZM536.0 496.9L540.2 494.3L541.6 495.6L537.4 498.3ZM537.6 491.7L541.8 489.3L543.1 490.6L538.9 493.0ZM538.9 493.0L543.1 490.6L544.5 491.8L540.2 494.3ZM540.2 494.3L544.5 491.8L545.8 493.0L541.6 495.6ZM541.8 489.3L546.1 486.9L547.4 488.1L543.1 490.6ZM543.1 490.6L547.4 488.1L548.8 489.3L544.5 491.8ZM544.5 491.8L548.8 489.3L550.1 490.5L545.8 493.0ZM546.1 486.9L550.4 484.6L551.8 485.7L547.4 488.1ZM547.4 488.1L551.8 485.7L553.1 486.8L548.8 489.3ZM548.8 489.3L553.1 486.8L554.4 487.9L550.1 490.5ZM550.4 484.6L554.8 482.2L556.1 483.3L551.8 485.7ZM551.8 485.7L556.1 483.3L557.5 484.3L553.1 486.8ZM553.1 486.8L557.5 484.3L558.8 485.4L554.4 487.9ZM554.8 482.2L559.2 479.9L560.5 480.9L556.1 483.3ZM556.1 483.3L560.5 480.9L561.9 481.9L557.5 484.3ZM557.5 484.3L561.9 481.9L563.2 482.9L558.8 485.4ZM559.2 479.9L563.6 477.5L565.0 478.5L560.5 480.9ZM560.5 480.9L565.0 478.5L566.3 479.4L561.9 481.9ZM561.9 481.9L566.3 479.4L567.6 480.4L563.2 482.9ZM563.6 477.5L568.1 475.2L569.4 476.1L565.0 478.5ZM565.0 478.5L569.4 476.1L570.8 477.0L566.3 479.4ZM566.3 479.4L570.8 477.0L572.1 477.9L567.6 480.4ZM568.1 475.2L572.6 472.9L574.0 473.8L569.4 476.1ZM569.4 476.1L574.0 473.8L575.3 474.7L570.8 477.0ZM570.8 477.0L575.3 474.7L576.6 475.5L572.1 477.9ZM572.6 472.9L577.2 470.7L578.5 471.5L574.0 473.8ZM574.0 473.8L578.5 471.5L579.9 472.3L575.3 474.7ZM575.3 474.7L579.9 472.3L581.2 473.1L576.6 475.5ZM577.2 470.7L581.8 468.4L583.1 469.2L578.5 471.5ZM578.5 471.5L583.1 469.2L584.5 470.0L579.9 472.3ZM579.9 472.3L584.5 470.0L585.8 470.7L581.2 473.1ZM581.8 468.4L586.4 466.2L587.8 466.9L583.1 469.2ZM583.1 469.2L587.8 466.9L589.1 467.7L584.5 470.0ZM584.5 470.0L589.1 467.7L590.4 468.4L585.8 470.7ZM586.4 466.2L591.1 464.0L592.5 464.7L587.8 466.9ZM587.8 466.9L592.5 464.7L593.8 465.4L589.1 467.7ZM589.1 467.7L593.8 465.4L595.1 466.1L590.4 468.4ZM591.1 464.0L595.9 461.8L597.2 462.4L592.5 464.7ZM592.5 464.7L597.2 462.4L598.5 463.1L593.8 465.4ZM593.8 465.4L598.5 463.1L599.9 463.8L595.1 466.1ZM595.9 461.8L600.6 459.6L602.0 460.2L597.2 462.4ZM597.2 462.4L602.0 460.2L603.3 460.9L598.5 463.1ZM598.5 463.1L603.3 460.9L604.6 461.5L599.9 463.8ZM600.6 459.6L605.5 457.4L606.8 458.0L602.0 460.2ZM602.0 460.2L606.8 458.0L608.1 458.6L603.3 460.9ZM603.3 460.9L608.1 458.6L609.5 459.2L604.6 461.5ZM605.5 457.4L610.3 455.2L611.6 455.8L606.8 458.0ZM606.8 458.0L611.6 455.8L613.0 456.4L608.1 458.6ZM608.1 458.6L613.0 456.4L614.3 457.0L609.5 459.2ZM610.3 455.2L615.2 453.1L616.5 453.7L611.6 455.8ZM611.6 455.8L616.5 453.7L617.9 454.2L613.0 456.4ZM613.0 456.4L617.9 454.2L619.2 454.8L614.3 457.0ZM615.2 453.1L620.2 451.0L621.5 451.5L616.5 453.7ZM616.5 453.7L621.5 451.5L622.8 452.1L617.9 454.2ZM617.9 454.2L622.8 452.1L624.2 452.6L619.2 454.8ZM620.2 451.0L625.1 448.8L626.5 449.4L621.5 451.5ZM621.5 451.5L626.5 449.4L627.8 449.9L622.8 452.1ZM622.8 452.1L627.8 449.9L629.1 450.5L624.2 452.6ZM625.1 448.8L630.2 446.7L631.5 447.3L626.5 449.4ZM626.5 449.4L631.5 447.3L632.9 447.8L627.8 449.9ZM627.8 449.9L632.9 447.8L634.2 448.3L629.1 450.5ZM630.2 446.7L635.3 444.6L636.6 445.2L631.5 447.3ZM631.5 447.3L636.6 445.2L637.9 445.7L632.9 447.8ZM632.9 447.8L637.9 445.7L639.3 446.2L634.2 448.3ZM635.3 444.6L640.4 442.5L641.7 443.1L636.6 445.2ZM636.6 445.2L641.7 443.1L643.1 443.6L637.9 445.7Z" fill="#dc0000" stroke="#dc0000"/><path d="M1078.1 325.0L1086.7 324.9L1087.5 328.5L1079.0 328.6ZM1085.2 317.7L1094.2 317.5L1094.8 321.2L1086.0 321.3ZM1086.0 321.3L1094.8 321.2L1095.4 324.9L1086.7 324.9ZM1086.7 324.9L1095.4 324.9L1096.0 328.6L1087.5 328.5ZM1094.2 317.5L1103.1 317.4L1103.6 321.2L1094.8 321.2ZM1094.8 321.2L1103.6 321.2L1104.0 325.0L1095.4 324.9ZM1095.4 324.9L1104.0 325.0L1104.5 328.8L1096.0 328.6Z" fill="#4040e8" stroke="#4040e8"/><path d="M1103.1 317.4L1112.1 317.4L1112.4 321.3L1103.6 321.2ZM1103.6 321.2L1112.4 321.3L1112.7 325.2L1104.0 325.0ZM1104.0 325.0L1112.7 325.2L1113.0 329.1L1104.5 328.8ZM1112.1 317.4L1121.0 317.5L1121.2 321.4L1112.4 321.3ZM1112.4 321.3L1121.2 321.4L1121.3 325.4L1112.7 325.2ZM1112.7 325.2L1121.3 325.4L1121.5 329.4L1113.0 329.1ZM1121.0 317.5L1130.0 317.6L1130.0 321.6L1121.2 321.4ZM1121.2 321.4L1130.0 321.6L1130.0 325.6L1121.3 325.4ZM1121.3 325.4L1130.0 325.6L1130.0 329.6L1121.5 329.4Z" fill="#8888e0" stroke="#8888e0"/><path d="M285.0 665.5 L288.0 664.0 L291.0 662.6 L294.0 661.3 L296.9 660.0 L299.9 658.8 L302.9 657.6 L305.9 656.4 L308.9 655.1 L311.9 653.7 L314.8 652.3 L317.8 650.9 L320.8 649.3 L323.8 647.7 L326.8 646.0 L329.8 644.3 L332.7 642.5 L335.7 640.6 L338.7 638.7 L341.7 636.6 L344.7 634.6 L347.7 632.4 L350.6 630.2 L353.6 628.1 L356.6 626.1 L359.6 624.2 L362.6 622.3 L365.6 620.5 L368.5 618.7 L371.5 616.9 L374.5 615.1 L377.5 613.3 L380.5 611.5 L383.5 609.6 L386.5 607.7 L389.4 605.8 L392.4 603.8 L395.4 601.7 L398.4 599.6 L401.4 597.3 L404.4 594.8 L407.5 592.1 L410.5 589.2 L413.6 586.2 L416.8 583.0 L419.9 579.7 L423.1 576.2 L426.3 572.7 L429.6 569.2 L432.9 565.5 L436.2 561.9 L439.5 558.3 L442.9 554.7 L446.3 551.2 L449.7 547.8 L453.1 544.5 L456.6 541.3 L460.1 538.3 L463.7 535.4 L467.3 532.6 L470.9 530.0 L474.5 527.6 L478.2 525.3 L481.9 523.0 L485.7 520.9 L489.5 518.7 L493.3 516.6 L497.1 514.5 L501.0 512.4 L504.9 510.2 L508.9 508.0 L512.9 505.8 L516.9 503.5 L521.0 501.2 L525.0 498.8 L529.2 496.5 L533.4 494.1 L537.6 491.7 L541.8 489.3 L546.1 486.9 L550.4 484.6 L554.8 482.2 L559.2 479.9 L563.6 477.5 L568.1 475.2 L572.6 472.9 L577.2 470.7 L581.8 468.4 L586.4 466.2 L591.1 464.0 L595.9 461.8 L600.6 459.6 L605.5 457.4 L610.3 455.2 L615.2 453.1 L620.2 451.0 L625.1 448.8 L630.2 446.7 L635.3 444.6 L640.4 442.5 L645.6 440.5 L650.8 438.4 L656.1 436.3 L661.4 434.3 L666.7 432.2 L672.1 430.1 L677.6 428.1 L683.1 426.1 L688.7 424.0 L694.3 422.0 L699.9 419.9 L705.6 417.8 L711.4 415.8 L717.2 413.7 L723.1 411.6 L729.0 409.5 L735.0 407.4 L741.0 405.4 L747.1 403.3 L753.2 401.2 L759.4 399.1 L765.6 396.9 L771.9 394.8 L778.3 392.7 L784.7 390.6 L791.2 388.5 L797.7 386.3 L804.3 384.2 L810.9 382.1 L817.6 379.9 L824.4 377.8 L831.2 375.7 L838.1 373.5 L845.1 371.4 L852.1 369.2 L859.2 367.1 L866.3 365.0 L873.5 362.8 L880.8 360.7 L888.1 358.5 L895.5 356.4 L903.0 354.2 L910.5 352.1 L918.1 350.0 L925.8 347.8 L933.6 345.7 L941.4 343.6 L949.2 341.5 L957.2 339.4 L965.2 337.3 L973.3 335.2 L981.5 333.2 L989.7 331.1 L998.1 329.1 L1006.4 327.7 L1014.9 325.4 L1023.5 323.5 L1032.1 321.9 L1040.8 320.6 L1049.5 319.7 L1058.4 318.9 L1067.3 318.4 L1076.3 318.0 L1085.2 317.7 L1094.2 317.5 L1103.1 317.4 L1112.1 317.4 L1121.0 317.5 L1130.0 317.6 L1130.0 329.6 L1121.5 329.4 L1113.0 329.1 L1104.5 328.8 L1096.0 328.6 L1087.5 328.5 L1079.0 328.6 L1070.5 328.7 L1062.0 329.0 L1053.5 329.5 L1044.8 330.1 L1036.1 330.9 L1027.5 332.0 L1018.9 333.3 L1010.4 334.7 L1002.1 336.3 L993.7 337.5 L985.5 339.1 L977.3 340.8 L969.2 342.5 L961.2 344.2 L953.2 346.0 L945.4 347.8 L937.6 349.6 L929.8 351.5 L922.1 353.4 L914.5 355.4 L907.0 357.3 L899.5 359.3 L892.1 361.3 L884.8 363.3 L877.5 365.3 L870.3 367.3 L863.2 369.4 L856.1 371.4 L849.1 373.5 L842.1 375.6 L835.2 377.7 L828.4 379.7 L821.6 381.8 L814.9 383.9 L808.3 386.0 L801.7 388.1 L795.2 390.2 L788.7 392.3 L782.3 394.4 L775.9 396.5 L769.6 398.6 L763.4 400.7 L757.2 402.8 L751.1 404.9 L745.0 407.0 L739.0 409.1 L733.0 411.2 L727.1 413.3 L721.2 415.4 L715.4 417.4 L709.6 419.5 L703.9 421.5 L698.3 423.6 L692.7 425.6 L687.1 427.7 L681.6 429.7 L676.1 431.7 L670.7 433.8 L665.4 435.8 L660.1 437.9 L654.8 439.9 L649.6 442.0 L644.4 444.1 L639.3 446.2 L634.2 448.3 L629.1 450.5 L624.2 452.6 L619.2 454.8 L614.3 457.0 L609.5 459.2 L604.6 461.5 L599.9 463.8 L595.1 466.1 L590.4 468.4 L585.8 470.7 L581.2 473.1 L576.6 475.5 L572.1 477.9 L567.6 480.4 L563.2 482.9 L558.8 485.4 L554.4 487.9 L550.1 490.5 L545.8 493.0 L541.6 495.6 L537.4 498.3 L533.2 500.8 L529.0 503.4 L525.0 506.0 L520.9 508.5 L516.9 511.0 L512.9 513.4 L508.9 515.8 L505.0 518.1 L501.1 520.3 L497.3 522.4 L493.5 524.5 L489.7 526.6 L485.9 528.7 L482.2 530.9 L478.4 533.3 L474.7 535.7 L471.0 538.3 L467.4 541.0 L463.7 544.0 L460.1 547.1 L456.6 550.3 L453.1 553.8 L449.6 557.4 L446.1 561.1 L442.7 564.9 L439.3 568.8 L435.9 572.7 L432.5 576.6 L429.2 580.5 L425.9 584.3 L422.7 588.0 L419.5 591.7 L416.3 595.2 L413.1 598.7 L410.0 602.0 L406.9 605.3 L403.8 608.5 L400.7 611.7 L397.7 614.9 L394.6 618.2 L391.6 621.5 L388.5 624.9 L385.5 628.4 L382.4 632.0 L379.4 635.8 L376.4 639.6 L373.3 643.6 L370.3 647.6 L367.2 651.7 L364.2 655.9 L361.1 660.1 L358.1 664.3 L355.0 668.6 L352.0 672.7 L348.9 676.8 L345.9 681.0 L342.9 685.0 L339.8 689.1 L336.8 693.0 L333.7 696.9 L330.7 700.6 L327.6 704.1 L324.6 707.4 L321.5 710.5 L318.5 713.3 L315.5 715.8 L312.4 717.9 L309.4 719.6 L306.3 720.8 L303.3 721.5 L300.2 721.7 L297.2 721.7 L294.1 721.6 L291.1 721.4 L288.0 721.2 L285.0 720.9Z M288.0 664.0 L288.0 721.2 M291.0 662.6 L291.1 721.4 M294.0 661.3 L294.1 721.6 M296.9 660.0 L297.2 721.7 M299.9 658.8 L300.2 721.7 M302.9 657.6 L303.3 721.5 M305.9 656.4 L306.3 720.8 M308.9 655.1 L309.4 719.6 M311.9 653.7 L312.4 717.9 M314.8 652.3 L315.5 715.8 M317.8 650.9 L318.5 713.3 M320.8 649.3 L321.5 710.5 M323.8 647.7 L324.6 707.4 M326.8 646.0 L327.6 704.1 M329.8 644.3 L330.7 700.6 M332.7 642.5 L333.7 696.9 M335.7 640.6 L336.8 693.0 M338.7 638.7 L339.8 689.1 M341.7 636.6 L342.9 685.0 M344.7 634.6 L345.9 681.0 M347.7 632.4 L348.9 676.8 M350.6 630.2 L352.0 672.7 M353.6 628.1 L355.0 668.6 M356.6 626.1 L358.1 664.3 M359.6 624.2 L361.1 660.1 M362.6 622.3 L364.2 655.9 M365.6 620.5 L367.2 651.7 M368.5 618.7 L370.3 647.6 M371.5 616.9 L373.3 643.6 M374.5 615.1 L376.4 639.6 M377.5 613.3 L379.4 635.8 M380.5 611.5 L382.4 632.0 M383.5 609.6 L385.5 628.4 M386.5 607.7 L388.5 624.9 M389.4 605.8 L391.6 621.5 M392.4 603.8 L394.6 618.2 M395.4 601.7 L397.7 614.9 M398.4 599.6 L400.7 611.7 M401.4 597.3 L403.8 608.5 M404.4 594.8 L406.9 605.3 M407.5 592.1 L410.0 602.0 M410.5 589.2 L413.1 598.7 M413.6 586.2 L416.3 595.2 M416.8 583.0 L419.5 591.7 M419.9 579.7 L422.7 588.0 M423.1 576.2 L425.9 584.3 M426.3 572.7 L429.2 580.5 M429.6 569.2 L432.5 576.6 M432.9 565.5 L435.9 572.7 M436.2 561.9 L439.3 568.8 M439.5 558.3 L442.7 564.9 M442.9 554.7 L446.1 561.1 M446.3 551.2 L449.6 557.4 M449.7 547.8 L453.1 553.8 M453.1 544.5 L456.6 550.3 M456.6 541.3 L460.1 547.1 M460.1 538.3 L463.7 544.0 M463.7 535.4 L467.4 541.0 M467.3 532.6 L471.0 538.3 M470.9 530.0 L474.7 535.7 M474.5 527.6 L478.4 533.3 M478.2 525.3 L482.2 530.9 M481.9 523.0 L485.9 528.7 M485.7 520.9 L489.7 526.6 M489.5 518.7 L493.5 524.5 M493.3 516.6 L497.3 522.4 M497.1 514.5 L501.1 520.3 M501.0 512.4 L505.0 518.1 M504.9 510.2 L508.9 515.8 M508.9 508.0 L512.9 513.4 M512.9 505.8 L516.9 511.0 M516.9 503.5 L520.9 508.5 M521.0 501.2 L525.0 506.0 M525.0 498.8 L529.0 503.4 M529.2 496.5 L533.2 500.8 M533.4 494.1 L537.4 498.3 M537.6 491.7 L541.6 495.6 M541.8 489.3 L545.8 493.0 M546.1 486.9 L550.1 490.5 M550.4 484.6 L554.4 487.9 M554.8 482.2 L558.8 485.4 M559.2 479.9 L563.2 482.9 M563.6 477.5 L567.6 480.4 M568.1 475.2 L572.1 477.9 M572.6 472.9 L576.6 475.5 M577.2 470.7 L581.2 473.1 M581.8 468.4 L585.8 470.7 M586.4 466.2 L590.4 468.4 M591.1 464.0 L595.1 466.1 M595.9 461.8 L599.9 463.8 M600.6 459.6 L604.6 461.5 M605.5 457.4 L609.5 459.2 M610.3 455.2 L614.3 457.0 M615.2 453.1 L619.2 454.8 M620.2 451.0 L624.2 452.6 M625.1 448.8 L629.1 450.5 M630.2 446.7 L634.2 448.3 M635.3 444.6 L639.3 446.2 M640.4 442.5 L644.4 444.1 M645.6 440.5 L649.6 442.0 M650.8 438.4 L654.8 439.9 M656.1 436.3 L660.1 437.9 M661.4 434.3 L665.4 435.8 M666.7 432.2 L670.7 433.8 M672.1 430.1 L676.1 431.7 M677.6 428.1 L681.6 429.7 M683.1 426.1 L687.1 427.7 M688.7 424.0 L692.7 425.6 M694.3 422.0 L698.3 423.6 M699.9 419.9 L703.9 421.5 M705.6 417.8 L709.6 419.5 M711.4 415.8 L715.4 417.4 M717.2 413.7 L721.2 415.4 M723.1 411.6 L727.1 413.3 M729.0 409.5 L733.0 411.2 M735.0 407.4 L739.0 409.1 M741.0 405.4 L745.0 407.0 M747.1 403.3 L751.1 404.9 M753.2 401.2 L757.2 402.8 M759.4 399.1 L763.4 400.7 M765.6 396.9 L769.6 398.6 M771.9 394.8 L775.9 396.5 M778.3 392.7 L782.3 394.4 M784.7 390.6 L788.7 392.3 M791.2 388.5 L795.2 390.2 M797.7 386.3 L801.7 388.1 M804.3 384.2 L808.3 386.0 M810.9 382.1 L814.9 383.9 M817.6 379.9 L821.6 381.8 M824.4 377.8 L828.4 379.7 M831.2 375.7 L835.2 377.7 M838.1 373.5 L842.1 375.6 M845.1 371.4 L849.1 373.5 M852.1 369.2 L856.1 371.4 M859.2 367.1 L863.2 369.4 M866.3 365.0 L870.3 367.3 M873.5 362.8 L877.5 365.3 M880.8 360.7 L884.8 363.3 M888.1 358.5 L892.1 361.3 M895.5 356.4 L899.5 359.3 M903.0 354.2 L907.0 357.3 M910.5 352.1 L914.5 355.4 M918.1 350.0 L922.1 353.4 M925.8 347.8 L929.8 351.5 M933.6 345.7 L937.6 349.6 M941.4 343.6 L945.4 347.8 M949.2 341.5 L953.2 346.0 M957.2 339.4 L961.2 344.2 M965.2 337.3 L969.2 342.5 M973.3 335.2 L977.3 340.8 M981.5 333.2 L985.5 339.1 M989.7 331.1 L993.7 337.5 M998.1 329.1 L1002.1 336.3 M1006.4 327.7 L1010.4 334.7 M1014.9 325.4 L1018.9 333.3 M1023.5 323.5 L1027.5 332.0 M1032.1 321.9 L1036.1 330.9 M1040.8 320.6 L1044.8 330.1 M1049.5 319.7 L1053.5 329.5 M1058.4 318.9 L1062.0 329.0 M1067.3 318.4 L1070.5 328.7 M1076.3 318.0 L1079.0 328.6 M1085.2 317.7 L1087.5 328.5 M1094.2 317.5 L1096.0 328.6 M1103.1 317.4 L1104.5 328.8 M1112.1 317.4 L1113.0 329.1 M1121.0 317.5 L1121.5 329.4 M285.0 684.0 L288.0 683.1 L291.0 682.2 L294.0 681.4 L297.0 680.6 L300.0 679.8 L303.0 678.9 L306.0 677.9 L309.0 676.6 L312.0 675.1 L315.0 673.5 L318.0 671.7 L321.1 669.7 L324.1 667.6 L327.1 665.4 L330.1 663.1 L333.1 660.6 L336.1 658.1 L339.1 655.5 L342.1 652.8 L345.1 650.0 L348.1 647.2 L351.1 644.4 L354.1 641.6 L357.1 638.8 L360.1 636.1 L363.1 633.5 L366.1 630.9 L369.1 628.3 L372.1 625.8 L375.1 623.3 L378.1 620.8 L381.1 618.3 L384.1 615.9 L387.1 613.4 L390.1 611.0 L393.2 608.6 L396.2 606.1 L399.2 603.6 L402.2 601.0 L405.2 598.3 L408.3 595.4 L411.4 592.4 L414.5 589.2 L417.7 585.9 L420.8 582.5 L424.1 578.9 L427.3 575.3 L430.6 571.6 L433.9 567.9 L437.2 564.2 L440.5 560.5 L443.9 556.8 L447.4 553.3 L450.8 549.8 L454.3 546.4 L457.8 543.2 L461.3 540.2 L464.9 537.3 L468.5 534.5 L472.2 531.9 L475.8 529.5 L479.5 527.2 L483.3 524.9 L487.0 522.8 L490.8 520.7 L494.6 518.6 L498.5 516.5 L502.3 514.3 L506.3 512.1 L510.2 509.8 L514.2 507.5 L518.2 505.2 L522.3 502.8 L526.4 500.4 L530.5 497.9 L534.7 495.5 L538.9 493.0 L543.1 490.6 L547.4 488.1 L551.8 485.7 L556.1 483.3 L560.5 480.9 L565.0 478.5 L569.4 476.1 L574.0 473.8 L578.5 471.5 L583.1 469.2 L587.8 466.9 L592.5 464.7 L597.2 462.4 L602.0 460.2 L606.8 458.0 L611.6 455.8 L616.5 453.7 L621.5 451.5 L626.5 449.4 L631.5 447.3 L636.6 445.2 L641.7 443.1 L646.9 441.0 L652.1 438.9 L657.4 436.8 L662.7 434.8 L668.1 432.7 L673.5 430.7 L678.9 428.6 L684.4 426.6 L690.0 424.5 L695.6 422.5 L701.3 420.4 L707.0 418.4 L712.7 416.3 L718.5 414.2 L724.4 412.2 L730.3 410.1 L736.3 408.0 L742.3 405.9 L748.4 403.8 L754.5 401.7 L760.7 399.6 L767.0 397.5 L773.3 395.4 L779.6 393.3 L786.0 391.2 L792.5 389.0 L799.0 386.9 L805.6 384.8 L812.3 382.7 L819.0 380.6 L825.7 378.4 L832.6 376.3 L839.5 374.2 L846.4 372.1 L853.4 370.0 L860.5 367.9 L867.6 365.7 L874.9 363.6 L882.1 361.5 L889.5 359.4 L896.9 357.4 L904.3 355.3 L911.9 353.2 L919.5 351.1 L927.1 349.1 L934.9 347.0 L942.7 345.0 L950.6 343.0 L958.5 341.0 L966.6 339.0 L974.7 337.1 L982.8 335.2 L991.1 333.3 L999.4 331.5 L1007.8 330.0 L1016.2 328.0 L1024.8 326.3 L1033.4 324.9 L1042.1 323.8 L1050.9 323.0 L1059.6 322.3 L1068.4 321.8 L1077.2 321.5 L1086.0 321.3 L1094.8 321.2 L1103.6 321.2 L1112.4 321.3 L1121.2 321.4 L1130.0 321.6 M285.0 702.4 L288.0 702.1 L291.0 701.8 L294.1 701.5 L297.1 701.1 L300.1 700.7 L303.1 700.2 L306.2 699.3 L309.2 698.1 L312.2 696.5 L315.2 694.6 L318.3 692.5 L321.3 690.1 L324.3 687.5 L327.3 684.7 L330.4 681.8 L333.4 678.7 L336.4 675.5 L339.4 672.3 L342.5 668.9 L345.5 665.5 L348.5 662.0 L351.5 658.6 L354.6 655.1 L357.6 651.6 L360.6 648.1 L363.6 644.7 L366.7 641.3 L369.7 638.0 L372.7 634.7 L375.7 631.5 L378.8 628.3 L381.8 625.2 L384.8 622.1 L387.8 619.2 L390.9 616.2 L393.9 613.4 L396.9 610.5 L399.9 607.7 L403.0 604.8 L406.0 601.8 L409.1 598.7 L412.2 595.5 L415.4 592.2 L418.6 588.8 L421.8 585.3 L425.0 581.6 L428.3 577.9 L431.6 574.1 L434.9 570.3 L438.2 566.5 L441.6 562.7 L445.0 559.0 L448.5 555.3 L451.9 551.8 L455.4 548.4 L459.0 545.1 L462.5 542.1 L466.1 539.2 L469.8 536.4 L473.4 533.8 L477.1 531.4 L480.9 529.0 L484.6 526.8 L488.3 524.7 L492.1 522.6 L495.9 520.5 L499.8 518.4 L503.7 516.2 L507.6 513.9 L511.5 511.6 L515.5 509.2 L519.6 506.8 L523.6 504.4 L527.7 501.9 L531.9 499.4 L536.0 496.9 L540.2 494.3 L544.5 491.8 L548.8 489.3 L553.1 486.8 L557.5 484.3 L561.9 481.9 L566.3 479.4 L570.8 477.0 L575.3 474.7 L579.9 472.3 L584.5 470.0 L589.1 467.7 L593.8 465.4 L598.5 463.1 L603.3 460.9 L608.1 458.6 L613.0 456.4 L617.9 454.2 L622.8 452.1 L627.8 449.9 L632.9 447.8 L637.9 445.7 L643.1 443.6 L648.2 441.5 L653.5 439.4 L658.7 437.4 L664.0 435.3 L669.4 433.2 L674.8 431.2 L680.3 429.2 L685.8 427.1 L691.3 425.1 L696.9 423.0 L702.6 421.0 L708.3 418.9 L714.1 416.9 L719.9 414.8 L725.7 412.7 L731.7 410.6 L737.6 408.6 L743.6 406.5 L749.7 404.4 L755.9 402.3 L762.0 400.2 L768.3 398.1 L774.6 396.0 L780.9 393.9 L787.4 391.7 L793.8 389.6 L800.4 387.5 L807.0 385.4 L813.6 383.3 L820.3 381.2 L827.1 379.1 L833.9 377.0 L840.8 374.9 L847.7 372.8 L854.8 370.7 L861.8 368.6 L869.0 366.5 L876.2 364.5 L883.5 362.4 L890.8 360.4 L898.2 358.3 L905.7 356.3 L913.2 354.3 L920.8 352.3 L928.5 350.3 L936.2 348.3 L944.0 346.4 L951.9 344.5 L959.9 342.6 L967.9 340.7 L976.0 338.9 L984.2 337.1 L992.4 335.4 L1000.7 333.9 L1009.1 332.4 L1017.6 330.7 L1026.1 329.2 L1034.7 327.9 L1043.4 327.0 L1052.2 326.2 L1060.8 325.7 L1069.4 325.3 L1078.1 325.0 L1086.7 324.9 L1095.4 324.9 L1104.0 325.0 L1112.7 325.2 L1121.3 325.4 L1130.0 325.6" fill="none" stroke="#000" stroke-width="0.6"/><path d="M272.0 661.9L275.0 659.5L277.6 660.4L274.6 662.7ZM274.6 662.7L277.6 660.4L280.2 661.3L277.2 663.4ZM277.2 663.4L280.2 661.3L282.8 662.3L279.8 664.1ZM275.0 659.5L278.0 657.1L280.6 658.2L277.6 660.4ZM945.1 338.0L953.0 335.7L955.0 336.8L947.1 339.0ZM947.1 339.0L955.0 336.8L957.0 337.9L949.1 340.0ZM949.1 340.0L957.0 337.9L959.0 338.9L951.1 341.0ZM949.0 333.5L956.9 331.0L958.9 332.1L951.0 334.6ZM951.0 334.6L958.9 332.1L960.9 333.3L953.0 335.7ZM953.0 335.7L960.9 333.3L962.9 334.5L955.0 336.8ZM955.0 336.8L962.9 334.5L964.9 335.7L957.0 337.9ZM957.0 337.9L964.9 335.7L966.9 336.9L959.0 338.9ZM956.9 331.0L964.9 328.4L966.9 329.7L958.9 332.1ZM958.9 332.1L966.9 329.7L968.9 331.0L960.9 333.3ZM960.9 333.3L968.9 331.0L970.9 332.3L962.9 334.5ZM962.9 334.5L970.9 332.3L972.9 333.5L964.9 335.7ZM964.9 335.7L972.9 333.5L974.9 334.8L966.9 336.9ZM964.9 328.4L973.0 325.8L975.0 327.2L966.9 329.7ZM966.9 329.7L975.0 327.2L977.0 328.6L968.9 331.0ZM968.9 331.0L977.0 328.6L979.0 330.0L970.9 332.3ZM970.9 332.3L979.0 330.0L981.0 331.4L972.9 333.5ZM972.9 333.5L981.0 331.4L983.0 332.8L974.9 334.8ZM973.0 325.8L981.2 323.2L983.2 324.7L975.0 327.2ZM975.0 327.2L983.2 324.7L985.2 326.2L977.0 328.6ZM977.0 328.6L985.2 326.2L987.2 327.7L979.0 330.0ZM979.0 330.0L987.2 327.7L989.2 329.3L981.0 331.4Z" fill="#00e8d8" stroke="#00e8d8"/><path d="M279.8 664.1L282.8 662.3L285.4 663.2L282.4 664.8ZM282.4 664.8L285.4 663.2L288.0 664.1L285.0 665.5ZM277.6 660.4L280.6 658.2L283.2 659.3L280.2 661.3ZM280.2 661.3L283.2 659.3L285.7 660.5L282.8 662.3ZM282.8 662.3L285.7 660.5L288.3 661.6L285.4 663.2ZM285.4 663.2L288.3 661.6L290.9 662.7L288.0 664.1ZM278.0 657.1L281.0 654.7L283.6 656.0L280.6 658.2ZM280.6 658.2L283.6 656.0L286.1 657.4L283.2 659.3ZM283.2 659.3L286.1 657.4L288.7 658.7L285.7 660.5ZM285.7 660.5L288.7 658.7L291.3 660.0L288.3 661.6ZM288.3 661.6L291.3 660.0L293.9 661.3L290.9 662.7ZM281.0 654.7L284.0 652.3L286.5 653.8L283.6 656.0ZM283.6 656.0L286.5 653.8L289.1 655.4L286.1 657.4ZM286.1 657.4L289.1 655.4L291.7 656.9L288.7 658.7ZM288.7 658.7L291.7 656.9L294.2 658.5L291.3 660.0ZM291.3 660.0L294.2 658.5L296.8 660.1L293.9 661.3ZM284.0 652.3L287.0 649.8L289.5 651.6L286.5 653.8ZM286.5 653.8L289.5 651.6L292.1 653.4L289.1 655.4ZM289.1 655.4L292.1 653.4L294.6 655.2L291.7 656.9ZM291.7 656.9L294.6 655.2L297.2 657.1L294.2 658.5ZM294.2 658.5L297.2 657.1L299.8 658.9L296.8 660.1ZM287.0 649.8L290.0 647.4L292.5 649.5L289.5 651.6ZM289.5 651.6L292.5 649.5L295.1 651.5L292.1 653.4ZM292.1 653.4L295.1 651.5L297.6 653.6L294.6 655.2ZM294.6 655.2L297.6 653.6L300.2 655.6L297.2 657.1ZM297.2 657.1L300.2 655.6L302.7 657.7L299.8 658.9ZM290.0 647.4L293.0 644.9L295.5 647.3L292.5 649.5ZM292.5 649.5L295.5 647.3L298.0 649.6L295.1 651.5ZM295.1 651.5L298.0 649.6L300.6 651.9L297.6 653.6ZM297.6 653.6L300.6 651.9L303.1 654.2L300.2 655.6ZM300.2 655.6L303.1 654.2L305.7 656.5L302.7 657.7ZM293.0 644.9L296.0 642.5L298.5 645.0L295.5 647.3ZM295.5 647.3L298.5 645.0L301.0 647.6L298.0 649.6ZM298.0 649.6L301.0 647.6L303.5 650.1L300.6 651.9ZM300.6 651.9L303.5 650.1L306.1 652.7L303.1 654.2ZM303.1 654.2L306.1 652.7L308.6 655.2L305.7 656.5ZM296.0 642.5L299.0 640.0L301.5 642.8L298.5 645.0ZM298.5 645.0L301.5 642.8L304.0 645.6L301.0 647.6ZM301.0 647.6L304.0 645.6L306.5 648.3L303.5 650.1ZM303.5 650.1L306.5 648.3L309.0 651.1L306.1 652.7ZM306.1 652.7L309.0 651.1L311.6 653.9L308.6 655.2ZM299.0 640.0L301.9 637.6L304.5 640.6L301.5 642.8ZM301.5 642.8L304.5 640.6L307.0 643.6L304.0 645.6ZM304.0 645.6L307.0 643.6L309.5 646.5L306.5 648.3ZM306.5 648.3L309.5 646.5L312.0 649.5L309.0 651.1ZM301.9 637.6L304.9 635.1L307.4 638.3L304.5 640.6ZM304.5 640.6L307.4 638.3L310.0 641.5L307.0 643.6ZM307.0 643.6L310.0 641.5L312.5 644.7L309.5 646.5ZM304.9 635.1L307.9 632.7L310.4 636.1L307.4 638.3ZM919.8 344.2L927.5 341.8L929.5 342.6L921.8 344.9ZM921.8 344.9L929.5 342.6L931.5 343.5L923.8 345.7ZM923.8 345.7L931.5 343.5L933.5 344.3L925.8 346.5ZM925.8 346.5L933.5 344.3L935.5 345.2L927.8 347.3ZM925.5 340.9L933.3 338.5L935.3 339.4L927.5 341.8ZM927.5 341.8L935.3 339.4L937.3 340.3L929.5 342.6ZM929.5 342.6L937.3 340.3L939.3 341.3L931.5 343.5ZM931.5 343.5L939.3 341.3L941.3 342.2L933.5 344.3ZM933.5 344.3L941.3 342.2L943.3 343.1L935.5 345.2ZM933.3 338.5L941.1 336.0L943.1 337.0L935.3 339.4ZM935.3 339.4L943.1 337.0L945.1 338.0L937.3 340.3ZM937.3 340.3L945.1 338.0L947.1 339.0L939.3 341.3ZM939.3 341.3L947.1 339.0L949.1 340.0L941.3 342.2ZM941.3 342.2L949.1 340.0L951.1 341.0L943.3 343.1ZM941.1 336.0L949.0 333.5L951.0 334.6L943.1 337.0ZM943.1 337.0L951.0 334.6L953.0 335.7L945.1 338.0Z" fill="#10b088" stroke="#10b088"/><path d="M309.0 651.1L312.0 649.5L314.5 652.5L311.6 653.9ZM309.5 646.5L312.5 644.7L315.0 647.9L312.0 649.5ZM312.0 649.5L315.0 647.9L317.5 651.0L314.5 652.5ZM307.4 638.3L310.4 636.1L312.9 639.4L310.0 641.5ZM310.0 641.5L312.9 639.4L315.4 642.8L312.5 644.7ZM312.5 644.7L315.4 642.8L317.9 646.2L315.0 647.9ZM315.0 647.9L317.9 646.2L320.4 649.5L317.5 651.0ZM307.9 632.7L310.9 630.2L313.4 633.8L310.4 636.1ZM310.4 636.1L313.4 633.8L315.9 637.3L312.9 639.4ZM312.9 639.4L315.9 637.3L318.4 640.9L315.4 642.8ZM315.4 642.8L318.4 640.9L320.9 644.4L317.9 646.2ZM317.9 646.2L320.9 644.4L323.4 647.9L320.4 649.5ZM310.9 630.2L313.9 627.8L316.4 631.5L313.4 633.8ZM313.4 633.8L316.4 631.5L318.9 635.2L315.9 637.3ZM315.9 637.3L318.9 635.2L321.4 638.9L318.4 640.9ZM318.4 640.9L321.4 638.9L323.8 642.6L320.9 644.4ZM320.9 644.4L323.8 642.6L326.3 646.3L323.4 647.9ZM313.9 627.8L316.9 625.3L319.4 629.2L316.4 631.5ZM316.4 631.5L319.4 629.2L321.9 633.0L318.9 635.2ZM318.9 635.2L321.9 633.0L324.3 636.9L321.4 638.9ZM321.4 638.9L324.3 636.9L326.8 640.7L323.8 642.6ZM323.8 642.6L326.8 640.7L329.3 644.6L326.3 646.3ZM316.9 625.3L319.9 622.9L322.4 626.9L319.4 629.2ZM319.4 629.2L322.4 626.9L324.8 630.9L321.9 633.0ZM321.9 633.0L324.8 630.9L327.3 634.8L324.3 636.9ZM324.3 636.9L327.3 634.8L329.8 638.8L326.8 640.7ZM326.8 640.7L329.8 638.8L332.2 642.8L329.3 644.6ZM319.9 622.9L322.9 620.4L325.4 624.5L322.4 626.9ZM322.4 626.9L325.4 624.5L327.8 628.6L324.8 630.9ZM324.8 630.9L327.8 628.6L330.3 632.8L327.3 634.8ZM327.3 634.8L330.3 632.8L332.7 636.9L329.8 638.8ZM329.8 638.8L332.7 636.9L335.2 641.0L332.2 642.8ZM322.9 620.4L325.9 618.0L328.3 622.2L325.4 624.5ZM325.4 624.5L328.3 622.2L330.8 626.4L327.8 628.6ZM327.8 628.6L330.8 626.4L333.2 630.6L330.3 632.8ZM330.3 632.8L333.2 630.6L335.7 634.8L332.7 636.9ZM332.7 636.9L335.7 634.8L338.1 639.0L335.2 641.0ZM325.9 618.0L328.9 615.6L331.3 619.9L328.3 622.2ZM328.3 622.2L331.3 619.9L333.8 624.2L330.8 626.4ZM330.8 626.4L333.8 624.2L336.2 628.5L333.2 630.6ZM333.2 630.6L336.2 628.5L338.6 632.8L335.7 634.8ZM335.7 634.8L338.6 632.8L341.1 637.1L338.1 639.0ZM328.9 615.6L331.9 613.1L334.3 617.5L331.3 619.9ZM331.3 619.9L334.3 617.5L336.7 621.9L333.8 624.2ZM333.8 624.2L336.7 621.9L339.2 626.3L336.2 628.5ZM336.2 628.5L339.2 626.3L341.6 630.6L338.6 632.8ZM338.6 632.8L341.6 630.6L344.0 635.0L341.1 637.1ZM331.9 613.1L334.9 610.7L337.3 615.1L334.3 617.5ZM334.3 617.5L337.3 615.1L339.7 619.6L336.7 621.9ZM336.7 621.9L339.7 619.6L342.1 624.0L339.2 626.3ZM339.2 626.3L342.1 624.0L344.6 628.5L341.6 630.6ZM334.9 610.7L337.9 608.3L340.3 612.8L337.3 615.1ZM337.3 615.1L340.3 612.8L342.7 617.3L339.7 619.6ZM339.7 619.6L342.7 617.3L345.1 621.8L342.1 624.0ZM337.9 608.3L340.9 605.9L343.3 610.4L340.3 612.8ZM340.3 612.8L343.3 610.4L345.7 615.0L342.7 617.3ZM893.8 354.6L901.2 352.4L903.2 353.0L895.8 355.2ZM895.8 355.2L903.2 353.0L905.2 353.6L897.8 355.7ZM895.2 350.5L902.7 348.2L904.7 348.8L897.2 351.1ZM897.2 351.1L904.7 348.8L906.7 349.5L899.2 351.8ZM899.2 351.8L906.7 349.5L908.7 350.2L901.2 352.4ZM901.2 352.4L908.7 350.2L910.7 350.8L903.2 353.0ZM903.2 353.0L910.7 350.8L912.7 351.5L905.2 353.6ZM902.7 348.2L910.2 345.8L912.2 346.5L904.7 348.8ZM904.7 348.8L912.2 346.5L914.2 347.2L906.7 349.5ZM906.7 349.5L914.2 347.2L916.2 348.0L908.7 350.2ZM908.7 350.2L916.2 348.0L918.2 348.7L910.7 350.8ZM910.7 350.8L918.2 348.7L920.2 349.4L912.7 351.5ZM910.2 345.8L917.8 343.4L919.8 344.2L912.2 346.5ZM912.2 346.5L919.8 344.2L921.8 344.9L914.2 347.2ZM914.2 347.2L921.8 344.9L923.8 345.7L916.2 348.0ZM916.2 348.0L923.8 345.7L925.8 346.5L918.2 348.7ZM918.2 348.7L925.8 346.5L927.8 347.3L920.2 349.4ZM917.8 343.4L925.5 340.9L927.5 341.8L919.8 344.2Z" fill="#087a30" stroke="#087a30"/><path d="M341.6 630.6L344.6 628.5L347.0 632.9L344.0 635.0ZM342.1 624.0L345.1 621.8L347.5 626.3L344.6 628.5ZM344.6 628.5L347.5 626.3L349.9 630.7L347.0 632.9ZM342.7 617.3L345.7 615.0L348.1 619.5L345.1 621.8ZM345.1 621.8L348.1 619.5L350.5 624.1L347.5 626.3ZM347.5 626.3L350.5 624.1L352.9 628.6L349.9 630.7ZM340.9 605.9L343.9 603.5L346.3 608.1L343.3 610.4ZM343.3 610.4L346.3 608.1L348.7 612.7L345.7 615.0ZM345.7 615.0L348.7 612.7L351.0 617.4L348.1 619.5ZM348.1 619.5L351.0 617.4L353.4 622.0L350.5 624.1ZM350.5 624.1L353.4 622.0L355.8 626.6L352.9 628.6ZM343.9 603.5L346.9 601.1L349.2 605.8L346.3 608.1ZM346.3 608.1L349.2 605.8L351.6 610.5L348.7 612.7ZM348.7 612.7L351.6 610.5L354.0 615.2L351.0 617.4ZM351.0 617.4L354.0 615.2L356.4 620.0L353.4 622.0ZM353.4 622.0L356.4 620.0L358.8 624.7L355.8 626.6ZM346.9 601.1L349.9 598.7L352.2 603.5L349.2 605.8ZM349.2 605.8L352.2 603.5L354.6 608.3L351.6 610.5ZM351.6 610.5L354.6 608.3L357.0 613.2L354.0 615.2ZM354.0 615.2L357.0 613.2L359.4 618.0L356.4 620.0ZM356.4 620.0L359.4 618.0L361.7 622.8L358.8 624.7ZM349.9 598.7L352.9 596.3L355.2 601.3L352.2 603.5ZM352.2 603.5L355.2 601.3L357.6 606.2L354.6 608.3ZM354.6 608.3L357.6 606.2L360.0 611.1L357.0 613.2ZM357.0 613.2L360.0 611.1L362.3 616.1L359.4 618.0ZM359.4 618.0L362.3 616.1L364.7 621.0L361.7 622.8ZM352.9 596.3L355.8 594.0L358.2 599.0L355.2 601.3ZM355.2 601.3L358.2 599.0L360.6 604.1L357.6 606.2ZM357.6 606.2L360.6 604.1L362.9 609.1L360.0 611.1ZM360.0 611.1L362.9 609.1L365.3 614.2L362.3 616.1ZM362.3 616.1L365.3 614.2L367.6 619.2L364.7 621.0ZM355.8 594.0L358.8 591.6L361.2 596.8L358.2 599.0ZM358.2 599.0L361.2 596.8L363.5 601.9L360.6 604.1ZM360.6 604.1L363.5 601.9L365.9 607.1L362.9 609.1ZM362.9 609.1L365.9 607.1L368.2 612.3L365.3 614.2ZM365.3 614.2L368.2 612.3L370.6 617.4L367.6 619.2ZM358.8 591.6L361.8 589.3L364.2 594.6L361.2 596.8ZM361.2 596.8L364.2 594.6L366.5 599.8L363.5 601.9ZM363.5 601.9L366.5 599.8L368.9 605.1L365.9 607.1ZM365.9 607.1L368.9 605.1L371.2 610.4L368.2 612.3ZM368.2 612.3L371.2 610.4L373.5 615.7L370.6 617.4ZM361.8 589.3L364.8 587.0L367.2 592.3L364.2 594.6ZM364.2 594.6L367.2 592.3L369.5 597.7L366.5 599.8ZM366.5 599.8L369.5 597.7L371.8 603.1L368.9 605.1ZM368.9 605.1L371.8 603.1L374.2 608.5L371.2 610.4ZM371.2 610.4L374.2 608.5L376.5 613.9L373.5 615.7ZM364.8 587.0L367.8 584.6L370.1 590.1L367.2 592.3ZM367.2 592.3L370.1 590.1L372.5 595.6L369.5 597.7ZM369.5 597.7L372.5 595.6L374.8 601.1L371.8 603.1ZM367.8 584.6L370.8 582.3L373.1 587.9L370.1 590.1ZM370.1 590.1L373.1 587.9L375.5 593.5L372.5 595.6ZM370.8 582.3L373.8 580.1L376.1 585.7L373.1 587.9ZM866.8 363.8L874.0 361.6L876.0 362.1L868.8 364.2ZM866.0 359.8L873.2 357.5L875.2 358.0L868.0 360.2ZM868.0 360.2L875.2 358.0L877.2 358.5L870.0 360.7ZM870.0 360.7L877.2 358.5L879.2 359.0L872.0 361.2ZM872.0 361.2L879.2 359.0L881.2 359.5L874.0 361.6ZM874.0 361.6L881.2 359.5L883.2 360.0L876.0 362.1ZM873.2 357.5L880.5 355.2L882.5 355.7L875.2 358.0ZM875.2 358.0L882.5 355.7L884.5 356.2L877.2 358.5ZM877.2 358.5L884.5 356.2L886.5 356.8L879.2 359.0ZM879.2 359.0L886.5 356.8L888.5 357.3L881.2 359.5ZM881.2 359.5L888.5 357.3L890.5 357.9L883.2 360.0ZM880.5 355.2L887.8 352.9L889.8 353.4L882.5 355.7ZM882.5 355.7L889.8 353.4L891.8 354.0L884.5 356.2ZM884.5 356.2L891.8 354.0L893.8 354.6L886.5 356.8ZM886.5 356.8L893.8 354.6L895.8 355.2L888.5 357.3ZM888.5 357.3L895.8 355.2L897.8 355.7L890.5 357.9ZM887.8 352.9L895.2 350.5L897.2 351.1L889.8 353.4ZM889.8 353.4L897.2 351.1L899.2 351.8L891.8 354.0ZM891.8 354.0L899.2 351.8L901.2 352.4L893.8 354.6Z" fill="#2a7800" stroke="#2a7800"/><path d="M371.8 603.1L374.8 601.1L377.1 606.6L374.2 608.5ZM374.2 608.5L377.1 606.6L379.4 612.1L376.5 613.9ZM372.5 595.6L375.5 593.5L377.8 599.1L374.8 601.1ZM374.8 601.1L377.8 599.1L380.1 604.7L377.1 606.6ZM377.1 606.6L380.1 604.7L382.4 610.3L379.4 612.1ZM373.1 587.9L376.1 585.7L378.4 591.4L375.5 593.5ZM375.5 593.5L378.4 591.4L380.7 597.1L377.8 599.1ZM377.8 599.1L380.7 597.1L383.0 602.7L380.1 604.7ZM380.1 604.7L383.0 602.7L385.3 608.4L382.4 610.3ZM373.8 580.1L376.8 577.8L379.1 583.5L376.1 585.7ZM376.1 585.7L379.1 583.5L381.4 589.3L378.4 591.4ZM378.4 591.4L381.4 589.3L383.7 595.0L380.7 597.1ZM380.7 597.1L383.7 595.0L386.0 600.8L383.0 602.7ZM383.0 602.7L386.0 600.8L388.3 606.5L385.3 608.4ZM376.8 577.8L379.8 575.5L382.1 581.3L379.1 583.5ZM379.1 583.5L382.1 581.3L384.4 587.2L381.4 589.3ZM381.4 589.3L384.4 587.2L386.7 593.0L383.7 595.0ZM383.7 595.0L386.7 593.0L389.0 598.8L386.0 600.8ZM386.0 600.8L389.0 598.8L391.2 604.6L388.3 606.5ZM379.8 575.5L382.8 573.3L385.1 579.2L382.1 581.3ZM382.1 581.3L385.1 579.2L387.4 585.0L384.4 587.2ZM384.4 587.2L387.4 585.0L389.6 590.9L386.7 593.0ZM386.7 593.0L389.6 590.9L391.9 596.7L389.0 598.8ZM389.0 598.8L391.9 596.7L394.2 602.6L391.2 604.6ZM382.8 573.3L385.8 571.1L388.1 577.0L385.1 579.2ZM385.1 579.2L388.1 577.0L390.3 582.8L387.4 585.0ZM387.4 585.0L390.3 582.8L392.6 588.7L389.6 590.9ZM389.6 590.9L392.6 588.7L394.9 594.6L391.9 596.7ZM391.9 596.7L394.9 594.6L397.2 600.5L394.2 602.6ZM385.8 571.1L388.8 568.9L391.1 574.7L388.1 577.0ZM388.1 577.0L391.1 574.7L393.3 580.6L390.3 582.8ZM390.3 582.8L393.3 580.6L395.6 586.5L392.6 588.7ZM392.6 588.7L395.6 586.5L397.8 592.4L394.9 594.6ZM388.8 568.9L391.8 566.7L394.0 572.5L391.1 574.7ZM391.1 574.7L394.0 572.5L396.3 578.4L393.3 580.6ZM393.3 580.6L396.3 578.4L398.5 584.2L395.6 586.5ZM391.8 566.7L394.8 564.5L397.0 570.3L394.0 572.5ZM394.0 572.5L397.0 570.3L399.3 576.1L396.3 578.4ZM843.8 369.8L850.7 367.7L852.7 368.1L845.8 370.2ZM845.8 370.2L852.7 368.1L854.7 368.4L847.8 370.6ZM844.7 366.5L851.7 364.3L853.7 364.7L846.7 366.9ZM846.7 366.9L853.7 364.7L855.7 365.1L848.7 367.3ZM848.7 367.3L855.7 365.1L857.7 365.5L850.7 367.7ZM850.7 367.7L857.7 365.5L859.7 365.9L852.7 368.1ZM852.7 368.1L859.7 365.9L861.7 366.3L854.7 368.4ZM851.7 364.3L858.8 362.0L860.8 362.5L853.7 364.7ZM853.7 364.7L860.8 362.5L862.8 362.9L855.7 365.1ZM855.7 365.1L862.8 362.9L864.8 363.3L857.7 365.5ZM857.7 365.5L864.8 363.3L866.8 363.8L859.7 365.9ZM859.7 365.9L866.8 363.8L868.8 364.2L861.7 366.3ZM858.8 362.0L866.0 359.8L868.0 360.2L860.8 362.5ZM860.8 362.5L868.0 360.2L870.0 360.7L862.8 362.9ZM862.8 362.9L870.0 360.7L872.0 361.2L864.8 363.3ZM864.8 363.3L872.0 361.2L874.0 361.6L866.8 363.8Z" fill="#80ac00" stroke="#80ac00"/><path d="M394.9 594.6L397.8 592.4L400.1 598.3L397.2 600.5ZM395.6 586.5L398.5 584.2L400.8 590.1L397.8 592.4ZM397.8 592.4L400.8 590.1L403.1 595.9L400.1 598.3ZM396.3 578.4L399.3 576.1L401.5 581.9L398.5 584.2ZM398.5 584.2L401.5 581.9L403.8 587.6L400.8 590.1ZM400.8 590.1L403.8 587.6L406.0 593.4L403.1 595.9ZM394.8 564.5L397.8 562.3L400.0 568.0L397.0 570.3ZM397.0 570.3L400.0 568.0L402.2 573.7L399.3 576.1ZM399.3 576.1L402.2 573.7L404.5 579.4L401.5 581.9ZM401.5 581.9L404.5 579.4L406.7 585.1L403.8 587.6ZM403.8 587.6L406.7 585.1L409.0 590.7L406.0 593.4ZM397.8 562.3L400.8 560.2L403.0 565.7L400.0 568.0ZM400.0 568.0L403.0 565.7L405.2 571.3L402.2 573.7ZM402.2 573.7L405.2 571.3L407.5 576.8L404.5 579.4ZM404.5 579.4L407.5 576.8L409.7 582.3L406.7 585.1ZM406.7 585.1L409.7 582.3L411.9 587.9L409.0 590.7ZM400.8 560.2L403.8 558.1L406.0 563.4L403.0 565.7ZM403.0 565.7L406.0 563.4L408.2 568.8L405.2 571.3ZM405.2 571.3L408.2 568.8L410.5 574.2L407.5 576.8ZM407.5 576.8L410.5 574.2L412.7 579.5L409.7 582.3ZM409.7 582.3L412.7 579.5L414.9 584.9L411.9 587.9ZM403.8 558.1L406.8 555.9L409.1 561.1L406.0 563.4ZM406.0 563.4L409.1 561.1L411.3 566.3L408.2 568.8ZM408.2 568.8L411.3 566.3L413.5 571.4L410.5 574.2ZM410.5 574.2L413.5 571.4L415.7 576.6L412.7 579.5ZM412.7 579.5L415.7 576.6L417.9 581.8L414.9 584.9ZM406.8 555.9L409.9 553.8L412.1 558.7L409.1 561.1ZM409.1 561.1L412.1 558.7L414.3 563.7L411.3 566.3ZM411.3 566.3L414.3 563.7L416.5 568.7L413.5 571.4ZM409.9 553.8L413.0 551.6L415.2 556.4L412.1 558.7ZM412.1 558.7L415.2 556.4L417.4 561.1L414.3 563.7ZM413.0 551.6L416.2 549.5L418.3 554.0L415.2 556.4ZM819.3 375.7L826.0 373.5L828.0 373.8L821.3 376.0ZM821.3 376.0L828.0 373.8L830.0 374.1L823.3 376.3ZM823.3 376.3L830.0 374.1L832.0 374.5L825.3 376.6ZM825.3 376.6L832.0 374.5L834.0 374.8L827.3 376.9ZM824.0 373.2L830.9 371.0L832.9 371.3L826.0 373.5ZM826.0 373.5L832.9 371.3L834.9 371.6L828.0 373.8ZM828.0 373.8L834.9 371.6L836.9 372.0L830.0 374.1ZM830.0 374.1L836.9 372.0L838.9 372.3L832.0 374.5ZM832.0 374.5L838.9 372.3L840.9 372.7L834.0 374.8ZM830.9 371.0L837.8 368.8L839.8 369.1L832.9 371.3ZM832.9 371.3L839.8 369.1L841.8 369.5L834.9 371.6ZM834.9 371.6L841.8 369.5L843.8 369.8L836.9 372.0ZM836.9 372.0L843.8 369.8L845.8 370.2L838.9 372.3ZM838.9 372.3L845.8 370.2L847.8 370.6L840.9 372.7ZM837.8 368.8L844.7 366.5L846.7 366.9L839.8 369.1ZM839.8 369.1L846.7 366.9L848.7 367.3L841.8 369.5ZM841.8 369.5L848.7 367.3L850.7 367.7L843.8 369.8Z" fill="#d8e400" stroke="#d8e400"/><path d="M413.5 571.4L416.5 568.7L418.7 573.6L415.7 576.6ZM415.7 576.6L418.7 573.6L420.9 578.6L417.9 581.8ZM414.3 563.7L417.4 561.1L419.6 565.8L416.5 568.7ZM416.5 568.7L419.6 565.8L421.8 570.6L418.7 573.6ZM418.7 573.6L421.8 570.6L424.0 575.3L420.9 578.6ZM415.2 556.4L418.3 554.0L420.5 558.5L417.4 561.1ZM417.4 561.1L420.5 558.5L422.7 562.9L419.6 565.8ZM419.6 565.8L422.7 562.9L424.9 567.4L421.8 570.6ZM421.8 570.6L424.9 567.4L427.1 571.9L424.0 575.3ZM416.2 549.5L419.3 547.4L421.5 551.6L418.3 554.0ZM418.3 554.0L421.5 551.6L423.7 555.8L420.5 558.5ZM420.5 558.5L423.7 555.8L425.8 560.0L422.7 562.9ZM422.7 562.9L425.8 560.0L428.0 564.2L424.9 567.4ZM424.9 567.4L428.0 564.2L430.2 568.5L427.1 571.9ZM419.3 547.4L422.5 545.2L424.7 549.2L421.5 551.6ZM421.5 551.6L424.7 549.2L426.8 553.1L423.7 555.8ZM423.7 555.8L426.8 553.1L429.0 557.1L425.8 560.0ZM425.8 560.0L429.0 557.1L431.2 561.0L428.0 564.2ZM428.0 564.2L431.2 561.0L433.3 565.0L430.2 568.5ZM422.5 545.2L425.7 543.1L427.9 546.8L424.7 549.2ZM424.7 549.2L427.9 546.8L430.0 550.5L426.8 553.1ZM426.8 553.1L430.0 550.5L432.2 554.1L429.0 557.1ZM425.7 543.1L429.0 541.0L431.1 544.4L427.9 546.8ZM427.9 546.8L431.1 544.4L433.3 547.8L430.0 550.5ZM796.8 384.8L803.3 382.7L805.3 383.0L798.8 385.1ZM798.8 385.1L805.3 383.0L807.3 383.2L800.8 385.3ZM797.3 381.9L803.9 379.7L805.9 380.0L799.3 382.1ZM799.3 382.1L805.9 380.0L807.9 380.3L801.3 382.4ZM801.3 382.4L807.9 380.3L809.9 380.6L803.3 382.7ZM803.3 382.7L809.9 380.6L811.9 380.8L805.3 383.0ZM805.3 383.0L811.9 380.8L813.9 381.1L807.3 383.2ZM803.9 379.7L810.6 377.5L812.6 377.8L805.9 380.0ZM805.9 380.0L812.6 377.8L814.6 378.1L807.9 380.3ZM807.9 380.3L814.6 378.1L816.6 378.4L809.9 380.6ZM809.9 380.6L816.6 378.4L818.6 378.7L811.9 380.8ZM811.9 380.8L818.6 378.7L820.6 379.0L813.9 381.1ZM810.6 377.5L817.3 375.4L819.3 375.7L812.6 377.8ZM812.6 377.8L819.3 375.7L821.3 376.0L814.6 378.1ZM814.6 378.1L821.3 376.0L823.3 376.3L816.6 378.4ZM816.6 378.4L823.3 376.3L825.3 376.6L818.6 378.7ZM818.6 378.7L825.3 376.6L827.3 376.9L820.6 379.0ZM817.3 375.4L824.0 373.2L826.0 373.5L819.3 375.7Z" fill="#ffe800" stroke="#ffe800"/><path d="M429.0 557.1L432.2 554.1L434.4 557.8L431.2 561.0ZM431.2 561.0L434.4 557.8L436.5 561.5L433.3 565.0ZM430.0 550.5L433.3 547.8L435.4 551.2L432.2 554.1ZM432.2 554.1L435.4 551.2L437.6 554.6L434.4 557.8ZM434.4 557.8L437.6 554.6L439.7 558.0L436.5 561.5ZM429.0 541.0L432.3 538.9L434.4 542.0L431.1 544.4ZM431.1 544.4L434.4 542.0L436.5 545.2L433.3 547.8ZM433.3 547.8L436.5 545.2L438.7 548.3L435.4 551.2ZM435.4 551.2L438.7 548.3L440.8 551.5L437.6 554.6ZM437.6 554.6L440.8 551.5L442.9 554.6L439.7 558.0ZM432.3 538.9L435.6 536.7L437.7 539.6L434.4 542.0ZM434.4 542.0L437.7 539.6L439.8 542.5L436.5 545.2ZM436.5 545.2L439.8 542.5L441.9 545.4L438.7 548.3ZM438.7 548.3L441.9 545.4L444.1 548.3L440.8 551.5ZM440.8 551.5L444.1 548.3L446.2 551.2L442.9 554.6ZM435.6 536.7L438.9 534.6L441.0 537.3L437.7 539.6ZM437.7 539.6L441.0 537.3L443.1 540.0L439.8 542.5ZM439.8 542.5L443.1 540.0L445.3 542.6L441.9 545.4ZM441.9 545.4L445.3 542.6L447.4 545.3L444.1 548.3ZM438.9 534.6L442.3 532.5L444.4 535.0L441.0 537.3ZM441.0 537.3L444.4 535.0L446.5 537.4L443.1 540.0ZM443.1 540.0L446.5 537.4L448.6 539.9L445.3 542.6ZM442.3 532.5L445.7 530.5L447.8 532.7L444.4 535.0ZM769.2 393.0L775.5 390.9L777.5 391.1L771.2 393.2ZM771.2 393.2L777.5 391.1L779.5 391.4L773.2 393.5ZM773.2 393.5L779.5 391.4L781.5 391.6L775.2 393.7ZM771.5 390.4L777.9 388.3L779.9 388.5L773.5 390.6ZM773.5 390.6L779.9 388.5L781.9 388.8L775.5 390.9ZM775.5 390.9L781.9 388.8L783.9 389.0L777.5 391.1ZM777.5 391.1L783.9 389.0L785.9 389.3L779.5 391.4ZM779.5 391.4L785.9 389.3L787.9 389.5L781.5 391.6ZM777.9 388.3L784.3 386.1L786.3 386.4L779.9 388.5ZM779.9 388.5L786.3 386.4L788.3 386.7L781.9 388.8ZM781.9 388.8L788.3 386.7L790.3 386.9L783.9 389.0ZM783.9 389.0L790.3 386.9L792.3 387.2L785.9 389.3ZM785.9 389.3L792.3 387.2L794.3 387.4L787.9 389.5ZM784.3 386.1L790.8 384.0L792.8 384.3L786.3 386.4ZM786.3 386.4L792.8 384.3L794.8 384.5L788.3 386.7ZM788.3 386.7L794.8 384.5L796.8 384.8L790.3 386.9ZM790.3 386.9L796.8 384.8L798.8 385.1L792.3 387.2ZM792.3 387.2L798.8 385.1L800.8 385.3L794.3 387.4ZM790.8 384.0L797.3 381.9L799.3 382.1L792.8 384.3ZM792.8 384.3L799.3 382.1L801.3 382.4L794.8 384.5ZM794.8 384.5L801.3 382.4L803.3 382.7L796.8 384.8Z" fill="#ffcc00" stroke="#ffcc00"/><path d="M444.1 548.3L447.4 545.3L449.5 547.9L446.2 551.2ZM445.3 542.6L448.6 539.9L450.7 542.3L447.4 545.3ZM447.4 545.3L450.7 542.3L452.8 544.8L449.5 547.9ZM444.4 535.0L447.8 532.7L449.9 535.0L446.5 537.4ZM446.5 537.4L449.9 535.0L452.0 537.2L448.6 539.9ZM448.6 539.9L452.0 537.2L454.1 539.4L450.7 542.3ZM450.7 542.3L454.1 539.4L456.2 541.7L452.8 544.8ZM445.7 530.5L449.1 528.4L451.2 530.5L447.8 532.7ZM447.8 532.7L451.2 530.5L453.3 532.5L449.9 535.0ZM449.9 535.0L453.3 532.5L455.4 534.6L452.0 537.2ZM452.0 537.2L455.4 534.6L457.5 536.7L454.1 539.4ZM454.1 539.4L457.5 536.7L459.5 538.8L456.2 541.7ZM449.1 528.4L452.6 526.3L454.6 528.2L451.2 530.5ZM451.2 530.5L454.6 528.2L456.7 530.2L453.3 532.5ZM453.3 532.5L456.7 530.2L458.8 532.1L455.4 534.6ZM455.4 534.6L458.8 532.1L460.9 534.0L457.5 536.7ZM457.5 536.7L460.9 534.0L462.9 536.0L459.5 538.8ZM452.6 526.3L456.0 524.2L458.1 526.0L454.6 528.2ZM454.6 528.2L458.1 526.0L460.2 527.9L456.7 530.2ZM456.7 530.2L460.2 527.9L462.2 529.7L458.8 532.1ZM456.0 524.2L459.6 522.2L461.6 523.9L458.1 526.0ZM458.1 526.0L461.6 523.9L463.7 525.6L460.2 527.9ZM744.6 401.4L750.6 399.3L752.6 399.5L746.6 401.6ZM746.6 401.6L752.6 399.5L754.6 399.7L748.6 401.8ZM748.6 401.8L754.6 399.7L756.6 400.0L750.6 402.1ZM746.6 398.8L752.8 396.7L754.8 397.0L748.6 399.1ZM748.6 399.1L754.8 397.0L756.8 397.2L750.6 399.3ZM750.6 399.3L756.8 397.2L758.8 397.4L752.6 399.5ZM752.6 399.5L758.8 397.4L760.8 397.7L754.6 399.7ZM754.6 399.7L760.8 397.7L762.8 397.9L756.6 400.0ZM752.8 396.7L759.0 394.6L761.0 394.9L754.8 397.0ZM754.8 397.0L761.0 394.9L763.0 395.1L756.8 397.2ZM756.8 397.2L763.0 395.1L765.0 395.3L758.8 397.4ZM758.8 397.4L765.0 395.3L767.0 395.6L760.8 397.7ZM760.8 397.7L767.0 395.6L769.0 395.8L762.8 397.9ZM759.0 394.6L765.2 392.5L767.2 392.8L761.0 394.9ZM761.0 394.9L767.2 392.8L769.2 393.0L763.0 395.1ZM763.0 395.1L769.2 393.0L771.2 393.2L765.0 395.3ZM765.0 395.3L771.2 393.2L773.2 393.5L767.0 395.6ZM767.0 395.6L773.2 393.5L775.2 393.7L769.0 395.8ZM765.2 392.5L771.5 390.4L773.5 390.6L767.2 392.8ZM767.2 392.8L773.5 390.6L775.5 390.9L769.2 393.0Z" fill="#ffa800" stroke="#ffa800"/><path d="M458.8 532.1L462.2 529.7L464.3 531.5L460.9 534.0ZM460.9 534.0L464.3 531.5L466.4 533.3L462.9 536.0ZM460.2 527.9L463.7 525.6L465.7 527.3L462.2 529.7ZM462.2 529.7L465.7 527.3L467.8 529.1L464.3 531.5ZM464.3 531.5L467.8 529.1L469.9 530.8L466.4 533.3ZM459.6 522.2L463.1 520.1L465.2 521.8L461.6 523.9ZM461.6 523.9L465.2 521.8L467.2 523.4L463.7 525.6ZM463.7 525.6L467.2 523.4L469.3 525.1L465.7 527.3ZM465.7 527.3L469.3 525.1L471.3 526.7L467.8 529.1ZM467.8 529.1L471.3 526.7L473.4 528.4L469.9 530.8ZM463.1 520.1L466.7 518.1L468.7 519.7L465.2 521.8ZM465.2 521.8L468.7 519.7L470.8 521.3L467.2 523.4ZM467.2 523.4L470.8 521.3L472.8 522.9L469.3 525.1ZM469.3 525.1L472.8 522.9L474.9 524.5L471.3 526.7ZM471.3 526.7L474.9 524.5L476.9 526.1L473.4 528.4ZM466.7 518.1L470.3 516.0L472.3 517.6L468.7 519.7ZM468.7 519.7L472.3 517.6L474.4 519.2L470.8 521.3ZM470.8 521.3L474.4 519.2L476.4 520.7L472.8 522.9ZM472.8 522.9L476.4 520.7L478.4 522.3L474.9 524.5ZM470.3 516.0L474.0 514.0L476.0 515.5L472.3 517.6ZM472.3 517.6L476.0 515.5L478.0 517.1L474.4 519.2ZM717.0 411.9L722.8 409.9L724.8 410.1L719.0 412.2ZM719.0 412.2L724.8 410.1L726.8 410.3L721.0 412.4ZM716.8 409.2L722.6 407.2L724.6 407.4L718.8 409.5ZM718.8 409.5L724.6 407.4L726.6 407.6L720.8 409.7ZM720.8 409.7L726.6 407.6L728.6 407.8L722.8 409.9ZM722.8 409.9L728.6 407.8L730.6 408.0L724.8 410.1ZM724.8 410.1L730.6 408.0L732.6 408.3L726.8 410.3ZM722.6 407.2L728.6 405.1L730.6 405.3L724.6 407.4ZM724.6 407.4L730.6 405.3L732.6 405.5L726.6 407.6ZM726.6 407.6L732.6 405.5L734.6 405.8L728.6 407.8ZM728.6 407.8L734.6 405.8L736.6 406.0L730.6 408.0ZM730.6 408.0L736.6 406.0L738.6 406.2L732.6 408.3ZM728.6 405.1L734.5 403.0L736.5 403.2L730.6 405.3ZM730.6 405.3L736.5 403.2L738.5 403.5L732.6 405.5ZM732.6 405.5L738.5 403.5L740.5 403.7L734.6 405.8ZM734.6 405.8L740.5 403.7L742.5 403.9L736.6 406.0ZM736.6 406.0L742.5 403.9L744.5 404.1L738.6 406.2ZM734.5 403.0L740.6 400.9L742.6 401.1L736.5 403.2ZM736.5 403.2L742.6 401.1L744.6 401.4L738.5 403.5ZM738.5 403.5L744.6 401.4L746.6 401.6L740.5 403.7ZM740.5 403.7L746.6 401.6L748.6 401.8L742.5 403.9ZM742.5 403.9L748.6 401.8L750.6 402.1L744.5 404.1ZM740.6 400.9L746.6 398.8L748.6 399.1L742.6 401.1ZM742.6 401.1L748.6 399.1L750.6 399.3L744.6 401.4Z" fill="#ff7800" stroke="#ff7800"/><path d="M474.9 524.5L478.4 522.3L480.5 523.9L476.9 526.1ZM474.4 519.2L478.0 517.1L480.0 518.7L476.4 520.7ZM476.4 520.7L480.0 518.7L482.0 520.2L478.4 522.3ZM478.4 522.3L482.0 520.2L484.1 521.8L480.5 523.9ZM474.0 514.0L477.6 511.9L479.7 513.5L476.0 515.5ZM476.0 515.5L479.7 513.5L481.7 515.1L478.0 517.1ZM478.0 517.1L481.7 515.1L483.7 516.6L480.0 518.7ZM480.0 518.7L483.7 516.6L485.7 518.2L482.0 520.2ZM482.0 520.2L485.7 518.2L487.7 519.7L484.1 521.8ZM477.6 511.9L481.4 509.9L483.4 511.5L479.7 513.5ZM479.7 513.5L483.4 511.5L485.4 513.0L481.7 515.1ZM481.7 515.1L485.4 513.0L487.4 514.6L483.7 516.6ZM483.7 516.6L487.4 514.6L489.4 516.1L485.7 518.2ZM485.7 518.2L489.4 516.1L491.4 517.7L487.7 519.7ZM481.4 509.9L485.1 507.9L487.1 509.4L483.4 511.5ZM483.4 511.5L487.1 509.4L489.1 511.0L485.4 513.0ZM485.4 513.0L489.1 511.0L491.1 512.5L487.4 514.6ZM487.4 514.6L491.1 512.5L493.1 514.1L489.4 516.1ZM485.1 507.9L488.9 505.9L490.9 507.4L487.1 509.4ZM487.1 509.4L490.9 507.4L492.9 509.0L489.1 511.0ZM677.7 426.2L683.1 424.2L685.1 424.4L679.7 426.4ZM679.7 426.4L685.1 424.4L687.1 424.6L681.7 426.6ZM677.1 423.6L682.7 421.6L684.7 421.8L679.1 423.8ZM679.1 423.8L684.7 421.8L686.7 422.0L681.1 424.0ZM681.1 424.0L686.7 422.0L688.7 422.2L683.1 424.2ZM683.1 424.2L688.7 422.2L690.7 422.4L685.1 424.4ZM685.1 424.4L690.7 422.4L692.7 422.5L687.1 424.6ZM682.7 421.6L688.2 419.5L690.2 419.7L684.7 421.8ZM684.7 421.8L690.2 419.7L692.2 419.9L686.7 422.0ZM686.7 422.0L692.2 419.9L694.2 420.1L688.7 422.2ZM688.7 422.2L694.2 420.1L696.2 420.3L690.7 422.4ZM690.7 422.4L696.2 420.3L698.2 420.5L692.7 422.5ZM688.2 419.5L693.8 417.5L695.8 417.7L690.2 419.7ZM690.2 419.7L695.8 417.7L697.8 417.9L692.2 419.9ZM692.2 419.9L697.8 417.9L699.8 418.1L694.2 420.1ZM694.2 420.1L699.8 418.1L701.8 418.3L696.2 420.3ZM696.2 420.3L701.8 418.3L703.8 418.5L698.2 420.5ZM693.8 417.5L699.5 415.4L701.5 415.6L695.8 417.7ZM695.8 417.7L701.5 415.6L703.5 415.8L697.8 417.9ZM697.8 417.9L703.5 415.8L705.5 416.0L699.8 418.1ZM699.8 418.1L705.5 416.0L707.5 416.2L701.8 418.3ZM701.8 418.3L707.5 416.2L709.5 416.5L703.8 418.5ZM699.5 415.4L705.2 413.4L707.2 413.6L701.5 415.6ZM701.5 415.6L707.2 413.6L709.2 413.8L703.5 415.8ZM703.5 415.8L709.2 413.8L711.2 414.0L705.5 416.0ZM705.5 416.0L711.2 414.0L713.2 414.2L707.5 416.2ZM707.5 416.2L713.2 414.2L715.2 414.4L709.5 416.5ZM705.2 413.4L711.0 411.3L713.0 411.5L707.2 413.6ZM707.2 413.6L713.0 411.5L715.0 411.7L709.2 413.8ZM709.2 413.8L715.0 411.7L717.0 411.9L711.2 414.0ZM711.2 414.0L717.0 411.9L719.0 412.2L713.2 414.2ZM713.2 414.2L719.0 412.2L721.0 412.4L715.2 414.4ZM711.0 411.3L716.8 409.2L718.8 409.5L713.0 411.5ZM713.0 411.5L718.8 409.5L720.8 409.7L715.0 411.7ZM715.0 411.7L720.8 409.7L722.8 409.9L717.0 411.9Z" fill="#ff4000" stroke="#ff4000"/><path d="M489.4 516.1L493.1 514.1L495.1 515.6L491.4 517.7ZM489.1 511.0L492.9 509.0L494.9 510.5L491.1 512.5ZM491.1 512.5L494.9 510.5L496.9 512.0L493.1 514.1ZM493.1 514.1L496.9 512.0L498.9 513.6L495.1 515.6ZM488.9 505.9L492.7 503.9L494.7 505.4L490.9 507.4ZM490.9 507.4L494.7 505.4L496.7 506.9L492.9 509.0ZM492.9 509.0L496.7 506.9L498.7 508.4L494.9 510.5ZM494.9 510.5L498.7 508.4L500.7 510.0L496.9 512.0ZM496.9 512.0L500.7 510.0L502.7 511.5L498.9 513.6ZM492.7 503.9L496.6 501.9L498.6 503.4L494.7 505.4ZM494.7 505.4L498.6 503.4L500.6 504.8L496.7 506.9ZM496.7 506.9L500.6 504.8L502.6 506.3L498.7 508.4ZM498.7 508.4L502.6 506.3L504.6 507.8L500.7 510.0ZM500.7 510.0L504.6 507.8L506.6 509.3L502.7 511.5ZM496.6 501.9L500.4 499.9L502.4 501.3L498.6 503.4ZM498.6 503.4L502.4 501.3L504.4 502.8L500.6 504.8ZM500.6 504.8L504.4 502.8L506.4 504.2L502.6 506.3ZM502.6 506.3L506.4 504.2L508.4 505.7L504.6 507.8ZM504.6 507.8L508.4 505.7L510.4 507.1L506.6 509.3ZM500.4 499.9L504.4 497.9L506.4 499.3L502.4 501.3ZM502.4 501.3L506.4 499.3L508.4 500.7L504.4 502.8ZM504.4 502.8L508.4 500.7L510.4 502.1L506.4 504.2ZM506.4 504.2L510.4 502.1L512.4 503.5L508.4 505.7ZM508.4 505.7L512.4 503.5L514.4 504.9L510.4 507.1ZM504.4 497.9L508.3 495.9L510.3 497.2L506.4 499.3ZM506.4 499.3L510.3 497.2L512.3 498.6L508.4 500.7ZM508.4 500.7L512.3 498.6L514.3 499.9L510.4 502.1ZM510.4 502.1L514.3 499.9L516.3 501.3L512.4 503.5ZM512.4 503.5L516.3 501.3L518.3 502.7L514.4 504.9ZM508.3 495.9L512.3 493.9L514.3 495.2L510.3 497.2ZM510.3 497.2L514.3 495.2L516.3 496.5L512.3 498.6ZM512.3 498.6L516.3 496.5L518.3 497.8L514.3 499.9ZM514.3 499.9L518.3 497.8L520.3 499.1L516.3 501.3ZM516.3 501.3L520.3 499.1L522.3 500.4L518.3 502.7ZM512.3 493.9L516.3 491.9L518.3 493.1L514.3 495.2ZM514.3 495.2L518.3 493.1L520.3 494.4L516.3 496.5ZM516.3 496.5L520.3 494.4L522.3 495.6L518.3 497.8ZM518.3 497.8L522.3 495.6L524.3 496.8L520.3 499.1ZM520.3 499.1L524.3 496.8L526.3 498.1L522.3 500.4ZM516.3 491.9L520.4 489.9L522.4 491.1L518.3 493.1ZM518.3 493.1L522.4 491.1L524.4 492.2L520.3 494.4ZM520.3 494.4L524.4 492.2L526.4 493.4L522.3 495.6ZM522.3 495.6L526.4 493.4L528.4 494.6L524.3 496.8ZM524.3 496.8L528.4 494.6L530.4 495.8L526.3 498.1ZM520.4 489.9L524.5 487.9L526.5 489.0L522.4 491.1ZM522.4 491.1L526.5 489.0L528.5 490.1L524.4 492.2ZM524.4 492.2L528.5 490.1L530.5 491.2L526.4 493.4ZM526.4 493.4L530.5 491.2L532.5 492.3L528.4 494.6ZM528.4 494.6L532.5 492.3L534.5 493.4L530.4 495.8ZM524.5 487.9L528.6 485.9L530.6 487.0L526.5 489.0ZM526.5 489.0L530.6 487.0L532.6 488.0L528.5 490.1ZM528.5 490.1L532.6 488.0L534.6 489.0L530.5 491.2ZM530.5 491.2L534.6 489.0L536.6 490.1L532.5 492.3ZM532.5 492.3L536.6 490.1L538.6 491.1L534.5 493.4ZM528.6 485.9L532.8 484.0L534.8 484.9L530.6 487.0ZM530.6 487.0L534.8 484.9L536.8 485.9L532.6 488.0ZM532.6 488.0L536.8 485.9L538.8 486.8L534.6 489.0ZM534.6 489.0L538.8 486.8L540.8 487.8L536.6 490.1ZM536.6 490.1L540.8 487.8L542.8 488.7L538.6 491.1ZM532.8 484.0L537.0 482.0L539.0 482.9L534.8 484.9ZM534.8 484.9L539.0 482.9L541.0 483.7L536.8 485.9ZM536.8 485.9L541.0 483.7L543.0 484.6L538.8 486.8ZM637.7 442.6L642.8 440.6L644.8 440.8L639.7 442.8ZM636.8 440.1L641.9 438.1L643.9 438.2L638.8 440.3ZM638.8 440.3L643.9 438.2L645.9 438.4L640.8 440.4ZM640.8 440.4L645.9 438.4L647.9 438.6L642.8 440.6ZM642.8 440.6L647.9 438.6L649.9 438.7L644.8 440.8ZM639.9 437.9L645.1 435.9L647.1 436.0L641.9 438.1ZM641.9 438.1L647.1 436.0L649.1 436.2L643.9 438.2ZM643.9 438.2L649.1 436.2L651.1 436.4L645.9 438.4ZM645.9 438.4L651.1 436.4L653.1 436.5L647.9 438.6ZM647.9 438.6L653.1 436.5L655.1 436.7L649.9 438.7ZM645.1 435.9L650.3 433.8L652.3 434.0L647.1 436.0ZM647.1 436.0L652.3 434.0L654.3 434.2L649.1 436.2ZM649.1 436.2L654.3 434.2L656.3 434.3L651.1 436.4ZM651.1 436.4L656.3 434.3L658.3 434.5L653.1 436.5ZM653.1 436.5L658.3 434.5L660.3 434.7L655.1 436.7ZM650.3 433.8L655.6 431.8L657.6 432.0L652.3 434.0ZM652.3 434.0L657.6 432.0L659.6 432.1L654.3 434.2ZM654.3 434.2L659.6 432.1L661.6 432.3L656.3 434.3ZM656.3 434.3L661.6 432.3L663.6 432.5L658.3 434.5ZM658.3 434.5L663.6 432.5L665.6 432.6L660.3 434.7ZM655.6 431.8L660.9 429.8L662.9 429.9L657.6 432.0ZM657.6 432.0L662.9 429.9L664.9 430.1L659.6 432.1ZM659.6 432.1L664.9 430.1L666.9 430.3L661.6 432.3ZM661.6 432.3L666.9 430.3L668.9 430.4L663.6 432.5ZM663.6 432.5L668.9 430.4L670.9 430.6L665.6 432.6ZM660.9 429.8L666.3 427.7L668.3 427.9L662.9 429.9ZM662.9 429.9L668.3 427.9L670.3 428.1L664.9 430.1ZM664.9 430.1L670.3 428.1L672.3 428.2L666.9 430.3ZM666.9 430.3L672.3 428.2L674.3 428.4L668.9 430.4ZM668.9 430.4L674.3 428.4L676.3 428.6L670.9 430.6ZM666.3 427.7L671.7 425.7L673.7 425.9L668.3 427.9ZM668.3 427.9L673.7 425.9L675.7 426.0L670.3 428.1ZM670.3 428.1L675.7 426.0L677.7 426.2L672.3 428.2ZM672.3 428.2L677.7 426.2L679.7 426.4L674.3 428.4ZM674.3 428.4L679.7 426.4L681.7 426.6L676.3 428.6ZM671.7 425.7L677.1 423.6L679.1 423.8L673.7 425.9ZM673.7 425.9L679.1 423.8L681.1 424.0L675.7 426.0ZM675.7 426.0L681.1 424.0L683.1 424.2L677.7 426.2Z" fill="#ff0000" stroke="#ff0000"/><path d="M538.8 486.8L543.0 484.6L545.0 485.5L540.8 487.8ZM540.8 487.8L545.0 485.5L547.0 486.4L542.8 488.7ZM537.0 482.0L541.3 480.0L543.3 480.8L539.0 482.9ZM539.0 482.9L543.3 480.8L545.3 481.6L541.0 483.7ZM541.0 483.7L545.3 481.6L547.3 482.4L543.0 484.6ZM543.0 484.6L547.3 482.4L549.3 483.3L545.0 485.5ZM545.0 485.5L549.3 483.3L551.3 484.1L547.0 486.4ZM541.3 480.0L545.6 478.0L547.6 478.8L543.3 480.8ZM543.3 480.8L547.6 478.8L549.6 479.5L545.3 481.6ZM545.3 481.6L549.6 479.5L551.6 480.3L547.3 482.4ZM547.3 482.4L551.6 480.3L553.6 481.0L549.3 483.3ZM549.3 483.3L553.6 481.0L555.6 481.8L551.3 484.1ZM545.6 478.0L549.9 476.0L551.9 476.7L547.6 478.8ZM547.6 478.8L551.9 476.7L553.9 477.4L549.6 479.5ZM549.6 479.5L553.9 477.4L555.9 478.1L551.6 480.3ZM551.6 480.3L555.9 478.1L557.9 478.8L553.6 481.0ZM553.6 481.0L557.9 478.8L559.9 479.5L555.6 481.8ZM549.9 476.0L554.3 474.0L556.3 474.7L551.9 476.7ZM551.9 476.7L556.3 474.7L558.3 475.3L553.9 477.4ZM553.9 477.4L558.3 475.3L560.3 475.9L555.9 478.1ZM555.9 478.1L560.3 475.9L562.3 476.6L557.9 478.8ZM557.9 478.8L562.3 476.6L564.3 477.2L559.9 479.5ZM554.3 474.0L558.7 472.1L560.7 472.6L556.3 474.7ZM556.3 474.7L560.7 472.6L562.7 473.2L558.3 475.3ZM558.3 475.3L562.7 473.2L564.7 473.8L560.3 475.9ZM560.3 475.9L564.7 473.8L566.7 474.4L562.3 476.6ZM562.3 476.6L566.7 474.4L568.7 475.0L564.3 477.2ZM558.7 472.1L563.1 470.1L565.1 470.6L560.7 472.6ZM560.7 472.6L565.1 470.6L567.1 471.1L562.7 473.2ZM562.7 473.2L567.1 471.1L569.1 471.7L564.7 473.8ZM564.7 473.8L569.1 471.7L571.1 472.2L566.7 474.4ZM566.7 474.4L571.1 472.2L573.1 472.7L568.7 475.0ZM563.1 470.1L567.6 468.1L569.6 468.6L565.1 470.6ZM565.1 470.6L569.6 468.6L571.6 469.0L567.1 471.1ZM567.1 471.1L571.6 469.0L573.6 469.5L569.1 471.7ZM569.1 471.7L573.6 469.5L575.6 470.0L571.1 472.2ZM571.1 472.2L575.6 470.0L577.6 470.5L573.1 472.7ZM567.6 468.1L572.1 466.1L574.1 466.5L569.6 468.6ZM569.6 468.6L574.1 466.5L576.1 467.0L571.6 469.0ZM571.6 469.0L576.1 467.0L578.1 467.4L573.6 469.5ZM573.6 469.5L578.1 467.4L580.1 467.8L575.6 470.0ZM575.6 470.0L580.1 467.8L582.1 468.3L577.6 470.5ZM572.1 466.1L576.7 464.1L578.7 464.5L574.1 466.5ZM574.1 466.5L578.7 464.5L580.7 464.9L576.1 467.0ZM576.1 467.0L580.7 464.9L582.7 465.3L578.1 467.4ZM578.1 467.4L582.7 465.3L584.7 465.7L580.1 467.8ZM580.1 467.8L584.7 465.7L586.7 466.1L582.1 468.3ZM576.7 464.1L581.3 462.1L583.3 462.4L578.7 464.5ZM578.7 464.5L583.3 462.4L585.3 462.8L580.7 464.9ZM580.7 464.9L585.3 462.8L587.3 463.2L582.7 465.3ZM582.7 465.3L587.3 463.2L589.3 463.5L584.7 465.7ZM584.7 465.7L589.3 463.5L591.3 463.9L586.7 466.1ZM581.3 462.1L585.9 460.1L587.9 460.4L583.3 462.4ZM583.3 462.4L587.9 460.4L589.9 460.7L585.3 462.8ZM585.3 462.8L589.9 460.7L591.9 461.1L587.3 463.2ZM587.3 463.2L591.9 461.1L593.9 461.4L589.3 463.5ZM589.3 463.5L593.9 461.4L595.9 461.7L591.3 463.9ZM585.9 460.1L590.6 458.1L592.6 458.4L587.9 460.4ZM587.9 460.4L592.6 458.4L594.6 458.7L589.9 460.7ZM589.9 460.7L594.6 458.7L596.6 459.0L591.9 461.1ZM591.9 461.1L596.6 459.0L598.6 459.3L593.9 461.4ZM593.9 461.4L598.6 459.3L600.6 459.6L595.9 461.7ZM590.6 458.1L595.4 456.1L597.4 456.3L592.6 458.4ZM592.6 458.4L597.4 456.3L599.4 456.6L594.6 458.7ZM594.6 458.7L599.4 456.6L601.4 456.9L596.6 459.0ZM596.6 459.0L601.4 456.9L603.4 457.2L598.6 459.3ZM598.6 459.3L603.4 457.2L605.4 457.4L600.6 459.6ZM595.4 456.1L600.1 454.1L602.1 454.3L597.4 456.3ZM597.4 456.3L602.1 454.3L604.1 454.6L599.4 456.6ZM599.4 456.6L604.1 454.6L606.1 454.8L601.4 456.9ZM601.4 456.9L606.1 454.8L608.1 455.1L603.4 457.2ZM603.4 457.2L608.1 455.1L610.1 455.3L605.4 457.4ZM600.1 454.1L605.0 452.0L607.0 452.3L602.1 454.3ZM602.1 454.3L607.0 452.3L609.0 452.5L604.1 454.6ZM604.1 454.6L609.0 452.5L611.0 452.7L606.1 454.8ZM606.1 454.8L611.0 452.7L613.0 453.0L608.1 455.1ZM608.1 455.1L613.0 453.0L615.0 453.2L610.1 455.3ZM605.0 452.0L609.8 450.0L611.8 450.2L607.0 452.3ZM607.0 452.3L611.8 450.2L613.8 450.5L609.0 452.5ZM609.0 452.5L613.8 450.5L615.8 450.7L611.0 452.7ZM611.0 452.7L615.8 450.7L617.8 450.9L613.0 453.0ZM613.0 453.0L617.8 450.9L619.8 451.1L615.0 453.2ZM609.8 450.0L614.7 448.0L616.7 448.2L611.8 450.2ZM611.8 450.2L616.7 448.2L618.7 448.4L613.8 450.5ZM613.8 450.5L618.7 448.4L620.7 448.6L615.8 450.7ZM615.8 450.7L620.7 448.6L622.7 448.8L617.8 450.9ZM617.8 450.9L622.7 448.8L624.7 449.0L619.8 451.1ZM614.7 448.0L619.7 446.0L621.7 446.2L616.7 448.2ZM616.7 448.2L621.7 446.2L623.7 446.4L618.7 448.4ZM618.7 448.4L623.7 446.4L625.7 446.6L620.7 448.6ZM620.7 448.6L625.7 446.6L627.7 446.7L622.7 448.8ZM622.7 448.8L627.7 446.7L629.7 446.9L624.7 449.0ZM619.7 446.0L624.7 444.0L626.7 444.2L621.7 446.2ZM621.7 446.2L626.7 444.2L628.7 444.3L623.7 446.4ZM623.7 446.4L628.7 444.3L630.7 444.5L625.7 446.6ZM625.7 446.6L630.7 444.5L632.7 444.7L627.7 446.7ZM627.7 446.7L632.7 444.7L634.7 444.9L629.7 446.9ZM624.7 444.0L629.7 441.9L631.7 442.1L626.7 444.2ZM626.7 444.2L631.7 442.1L633.7 442.3L628.7 444.3ZM628.7 444.3L633.7 442.3L635.7 442.5L630.7 444.5ZM630.7 444.5L635.7 442.5L637.7 442.6L632.7 444.7ZM632.7 444.7L637.7 442.6L639.7 442.8L634.7 444.9ZM629.7 441.9L634.8 439.9L636.8 440.1L631.7 442.1ZM631.7 442.1L636.8 440.1L638.8 440.3L633.7 442.3ZM633.7 442.3L638.8 440.3L640.8 440.4L635.7 442.5ZM635.7 442.5L640.8 440.4L642.8 440.6L637.7 442.6ZM634.8 439.9L639.9 437.9L641.9 438.1L636.8 440.1Z" fill="#dc0000" stroke="#dc0000"/><path d="M981.0 331.4L989.2 329.3L991.2 330.8L983.0 332.8ZM981.2 323.2L989.5 320.5L991.5 322.1L983.2 324.7ZM983.2 324.7L991.5 322.1L993.5 323.8L985.2 326.2ZM985.2 326.2L993.5 323.8L995.5 325.5L987.2 327.7ZM987.2 327.7L995.5 325.5L997.5 327.1L989.2 329.3ZM989.2 329.3L997.5 327.1L999.5 328.8L991.2 330.8ZM989.5 320.5L997.8 317.8L999.8 319.7L991.5 322.1ZM991.5 322.1L999.8 319.7L1001.8 321.6L993.5 323.8ZM993.5 323.8L1001.8 321.6L1003.8 323.5L995.5 325.5ZM995.5 325.5L1003.8 323.5L1005.8 325.4L997.5 327.1ZM997.5 327.1L1005.8 325.4L1007.8 327.3L999.5 328.8ZM997.8 317.8L1006.2 316.0L1008.2 317.9L999.8 319.7ZM999.8 319.7L1008.2 317.9L1010.2 319.7L1001.8 321.6ZM1001.8 321.6L1010.2 319.7L1012.2 321.5L1003.8 323.5ZM1003.8 323.5L1012.2 321.5L1014.2 323.3L1005.8 325.4ZM1005.8 325.4L1014.2 323.3L1016.2 325.1L1007.8 327.3ZM1006.2 316.0L1014.7 312.8L1016.7 314.9L1008.2 317.9ZM1008.2 317.9L1016.7 314.9L1018.7 317.0L1010.2 319.7ZM1010.2 319.7L1018.7 317.0L1020.7 319.1L1012.2 321.5ZM1012.2 321.5L1020.7 319.1L1022.7 321.2L1014.2 323.3Z" fill="#00c0f8" stroke="#00c0f8"/><path d="M1014.2 323.3L1022.7 321.2L1024.7 323.3L1016.2 325.1ZM1014.7 312.8L1023.2 310.0L1025.2 312.3L1016.7 314.9ZM1016.7 314.9L1025.2 312.3L1027.2 314.7L1018.7 317.0ZM1018.7 317.0L1027.2 314.7L1029.2 317.0L1020.7 319.1ZM1020.7 319.1L1029.2 317.0L1031.2 319.4L1022.7 321.2ZM1022.7 321.2L1031.2 319.4L1033.2 321.7L1024.7 323.3ZM1023.2 310.0L1031.8 307.7L1033.8 310.2L1025.2 312.3ZM1025.2 312.3L1033.8 310.2L1035.8 312.8L1027.2 314.7ZM1027.2 314.7L1035.8 312.8L1037.8 315.4L1029.2 317.0ZM1029.2 317.0L1037.8 315.4L1039.8 317.9L1031.2 319.4ZM1031.2 319.4L1039.8 317.9L1041.8 320.5L1033.2 321.7ZM1031.8 307.7L1040.5 305.9L1042.5 308.6L1033.8 310.2ZM1033.8 310.2L1042.5 308.6L1044.5 311.4L1035.8 312.8ZM1035.8 312.8L1044.5 311.4L1046.5 314.1L1037.8 315.4ZM1037.8 315.4L1046.5 314.1L1048.5 316.9L1039.8 317.9ZM1039.8 317.9L1048.5 316.9L1050.5 319.6L1041.8 320.5ZM1040.5 305.9L1049.3 304.6L1051.3 307.5L1042.5 308.6ZM1042.5 308.6L1051.3 307.5L1053.3 310.3L1044.5 311.4ZM1044.5 311.4L1053.3 310.3L1055.3 313.2L1046.5 314.1Z" fill="#0068ff" stroke="#0068ff"/><path d="M1046.5 314.1L1055.3 313.2L1057.3 316.0L1048.5 316.9ZM1048.5 316.9L1057.3 316.0L1059.3 318.9L1050.5 319.6ZM1049.3 304.6L1058.2 303.5L1060.0 306.5L1051.3 307.5ZM1051.3 307.5L1060.0 306.5L1061.8 309.5L1053.3 310.3ZM1053.3 310.3L1061.8 309.5L1063.6 312.4L1055.3 313.2ZM1055.3 313.2L1063.6 312.4L1065.4 315.4L1057.3 316.0ZM1057.3 316.0L1065.4 315.4L1067.2 318.4L1059.3 318.9ZM1058.2 303.5L1067.1 302.7L1068.7 305.8L1060.0 306.5ZM1060.0 306.5L1068.7 305.8L1070.3 308.8L1061.8 309.5ZM1061.8 309.5L1070.3 308.8L1071.8 311.9L1063.6 312.4ZM1063.6 312.4L1071.8 311.9L1073.4 315.0L1065.4 315.4ZM1065.4 315.4L1073.4 315.0L1075.0 318.0L1067.2 318.4ZM1067.1 302.7L1076.1 302.1L1077.4 305.2L1068.7 305.8ZM1068.7 305.8L1077.4 305.2L1078.8 308.3L1070.3 308.8ZM1070.3 308.8L1078.8 308.3L1080.1 311.5L1071.8 311.9ZM1071.8 311.9L1080.1 311.5L1081.5 314.6L1073.4 315.0ZM1073.4 315.0L1081.5 314.6L1082.8 317.7L1075.0 318.0ZM1076.1 302.1L1085.1 301.4L1086.2 304.7L1077.4 305.2ZM1077.4 305.2L1086.2 304.7L1087.3 307.9L1078.8 308.3Z" fill="#0000f8" stroke="#0000f8"/><path d="M1078.8 308.3L1087.3 307.9L1088.5 311.1L1080.1 311.5ZM1080.1 311.5L1088.5 311.1L1089.6 314.3L1081.5 314.6ZM1081.5 314.6L1089.6 314.3L1090.7 317.5L1082.8 317.7ZM1085.1 301.4L1094.1 300.9L1095.0 304.2L1086.2 304.7ZM1086.2 304.7L1095.0 304.2L1095.9 307.5L1087.3 307.9ZM1087.3 307.9L1095.9 307.5L1096.8 310.8L1088.5 311.1ZM1088.5 311.1L1096.8 310.8L1097.7 314.1L1089.6 314.3ZM1089.6 314.3L1097.7 314.1L1098.6 317.4L1090.7 317.5ZM1094.1 300.9L1103.0 300.4L1103.7 303.8L1095.0 304.2ZM1095.0 304.2L1103.7 303.8L1104.4 307.2L1095.9 307.5ZM1095.9 307.5L1104.4 307.2L1105.1 310.6L1096.8 310.8ZM1096.8 310.8L1105.1 310.6L1105.7 314.0L1097.7 314.1ZM1097.7 314.1L1105.7 314.0L1106.4 317.4L1098.6 317.4Z" fill="#4040e8" stroke="#4040e8"/><path d="M1103.0 300.4L1112.0 300.0L1112.5 303.5L1103.7 303.8ZM1103.7 303.8L1112.5 303.5L1112.9 307.0L1104.4 307.2ZM1104.4 307.2L1112.9 307.0L1113.4 310.4L1105.1 310.6ZM1105.1 310.6L1113.4 310.4L1113.8 313.9L1105.7 314.0ZM1105.7 314.0L1113.8 313.9L1114.3 317.4L1106.4 317.4ZM1112.0 300.0L1121.0 299.7L1121.2 303.3L1112.5 303.5ZM1112.5 303.5L1121.2 303.3L1121.5 306.8L1112.9 307.0ZM1112.9 307.0L1121.5 306.8L1121.7 310.4L1113.4 310.4ZM1113.4 310.4L1121.7 310.4L1121.9 313.9L1113.8 313.9ZM1113.8 313.9L1121.9 313.9L1122.1 317.5L1114.3 317.4ZM1121.0 299.7L1130.0 299.6L1130.0 303.2L1121.2 303.3ZM1121.2 303.3L1130.0 303.2L1130.0 306.8L1121.5 306.8ZM1121.5 306.8L1130.0 306.8L1130.0 310.4L1121.7 310.4ZM1121.7 310.4L1130.0 310.4L1130.0 314.0L1121.9 313.9ZM1121.9 313.9L1130.0 314.0L1130.0 317.6L1122.1 317.5Z" fill="#8888e0" stroke="#8888e0"/><path d="M272.0 661.9 L275.0 659.5 L278.0 657.1 L281.0 654.7 L284.0 652.3 L287.0 649.8 L290.0 647.4 L293.0 644.9 L296.0 642.5 L299.0 640.0 L301.9 637.6 L304.9 635.1 L307.9 632.7 L310.9 630.2 L313.9 627.8 L316.9 625.3 L319.9 622.9 L322.9 620.4 L325.9 618.0 L328.9 615.6 L331.9 613.1 L334.9 610.7 L337.9 608.3 L340.9 605.9 L343.9 603.5 L346.9 601.1 L349.9 598.7 L352.9 596.3 L355.8 594.0 L358.8 591.6 L361.8 589.3 L364.8 587.0 L367.8 584.6 L370.8 582.3 L373.8 580.1 L376.8 577.8 L379.8 575.5 L382.8 573.3 L385.8 571.1 L388.8 568.9 L391.8 566.7 L394.8 564.5 L397.8 562.3 L400.8 560.2 L403.8 558.1 L406.8 555.9 L409.9 553.8 L413.0 551.6 L416.2 549.5 L419.3 547.4 L422.5 545.2 L425.7 543.1 L429.0 541.0 L432.3 538.9 L435.6 536.7 L438.9 534.6 L442.3 532.5 L445.7 530.5 L449.1 528.4 L452.6 526.3 L456.0 524.2 L459.6 522.2 L463.1 520.1 L466.7 518.1 L470.3 516.0 L474.0 514.0 L477.6 511.9 L481.4 509.9 L485.1 507.9 L488.9 505.9 L492.7 503.9 L496.6 501.9 L500.4 499.9 L504.4 497.9 L508.3 495.9 L512.3 493.9 L516.3 491.9 L520.4 489.9 L524.5 487.9 L528.6 485.9 L532.8 484.0 L537.0 482.0 L541.3 480.0 L545.6 478.0 L549.9 476.0 L554.3 474.0 L558.7 472.1 L563.1 470.1 L567.6 468.1 L572.1 466.1 L576.7 464.1 L581.3 462.1 L585.9 460.1 L590.6 458.1 L595.4 456.1 L600.1 454.1 L605.0 452.0 L609.8 450.0 L614.7 448.0 L619.7 446.0 L624.7 444.0 L629.7 441.9 L634.8 439.9 L639.9 437.9 L645.1 435.9 L650.3 433.8 L655.6 431.8 L660.9 429.8 L666.3 427.7 L671.7 425.7 L677.1 423.6 L682.7 421.6 L688.2 419.5 L693.8 417.5 L699.5 415.4 L705.2 413.4 L711.0 411.3 L716.8 409.2 L722.6 407.2 L728.6 405.1 L734.5 403.0 L740.6 400.9 L746.6 398.8 L752.8 396.7 L759.0 394.6 L765.2 392.5 L771.5 390.4 L777.9 388.3 L784.3 386.1 L790.8 384.0 L797.3 381.9 L803.9 379.7 L810.6 377.5 L817.3 375.4 L824.0 373.2 L830.9 371.0 L837.8 368.8 L844.7 366.5 L851.7 364.3 L858.8 362.0 L866.0 359.8 L873.2 357.5 L880.5 355.2 L887.8 352.9 L895.2 350.5 L902.7 348.2 L910.2 345.8 L917.8 343.4 L925.5 340.9 L933.3 338.5 L941.1 336.0 L949.0 333.5 L956.9 331.0 L964.9 328.4 L973.0 325.8 L981.2 323.2 L989.5 320.5 L997.8 317.8 L1006.2 316.0 L1014.7 312.8 L1023.2 310.0 L1031.8 307.7 L1040.5 305.9 L1049.3 304.6 L1058.2 303.5 L1067.1 302.7 L1076.1 302.1 L1085.1 301.4 L1094.1 300.9 L1103.0 300.4 L1112.0 300.0 L1121.0 299.7 L1130.0 299.6 L1130.0 317.6 L1122.1 317.5 L1114.3 317.4 L1106.4 317.4 L1098.6 317.4 L1090.7 317.5 L1082.8 317.7 L1075.0 318.0 L1067.2 318.4 L1059.3 318.9 L1050.5 319.6 L1041.8 320.5 L1033.2 321.7 L1024.7 323.3 L1016.2 325.1 L1007.8 327.3 L999.5 328.8 L991.2 330.8 L983.0 332.8 L974.9 334.8 L966.9 336.9 L959.0 338.9 L951.1 341.0 L943.3 343.1 L935.5 345.2 L927.8 347.3 L920.2 349.4 L912.7 351.5 L905.2 353.6 L897.8 355.7 L890.5 357.9 L883.2 360.0 L876.0 362.1 L868.8 364.2 L861.7 366.3 L854.7 368.4 L847.8 370.6 L840.9 372.7 L834.0 374.8 L827.3 376.9 L820.6 379.0 L813.9 381.1 L807.3 383.2 L800.8 385.3 L794.3 387.4 L787.9 389.5 L781.5 391.6 L775.2 393.7 L769.0 395.8 L762.8 397.9 L756.6 400.0 L750.6 402.1 L744.5 404.1 L738.6 406.2 L732.6 408.3 L726.8 410.3 L721.0 412.4 L715.2 414.4 L709.5 416.5 L703.8 418.5 L698.2 420.5 L692.7 422.5 L687.1 424.6 L681.7 426.6 L676.3 428.6 L670.9 430.6 L665.6 432.6 L660.3 434.7 L655.1 436.7 L649.9 438.7 L644.8 440.8 L639.7 442.8 L634.7 444.9 L629.7 446.9 L624.7 449.0 L619.8 451.1 L615.0 453.2 L610.1 455.3 L605.4 457.4 L600.6 459.6 L595.9 461.7 L591.3 463.9 L586.7 466.1 L582.1 468.3 L577.6 470.5 L573.1 472.7 L568.7 475.0 L564.3 477.2 L559.9 479.5 L555.6 481.8 L551.3 484.1 L547.0 486.4 L542.8 488.7 L538.6 491.1 L534.5 493.4 L530.4 495.8 L526.3 498.1 L522.3 500.4 L518.3 502.7 L514.4 504.9 L510.4 507.1 L506.6 509.3 L502.7 511.5 L498.9 513.6 L495.1 515.6 L491.4 517.7 L487.7 519.7 L484.1 521.8 L480.5 523.9 L476.9 526.1 L473.4 528.4 L469.9 530.8 L466.4 533.3 L462.9 536.0 L459.5 538.8 L456.2 541.7 L452.8 544.8 L449.5 547.9 L446.2 551.2 L442.9 554.6 L439.7 558.0 L436.5 561.5 L433.3 565.0 L430.2 568.5 L427.1 571.9 L424.0 575.3 L420.9 578.6 L417.9 581.8 L414.9 584.9 L411.9 587.9 L409.0 590.7 L406.0 593.4 L403.1 595.9 L400.1 598.3 L397.2 600.5 L394.2 602.6 L391.2 604.6 L388.3 606.5 L385.3 608.4 L382.4 610.3 L379.4 612.1 L376.5 613.9 L373.5 615.7 L370.6 617.4 L367.6 619.2 L364.7 621.0 L361.7 622.8 L358.8 624.7 L355.8 626.6 L352.9 628.6 L349.9 630.7 L347.0 632.9 L344.0 635.0 L341.1 637.1 L338.1 639.0 L335.2 641.0 L332.2 642.8 L329.3 644.6 L326.3 646.3 L323.4 647.9 L320.4 649.5 L317.5 651.0 L314.5 652.5 L311.6 653.9 L308.6 655.2 L305.7 656.5 L302.7 657.7 L299.8 658.9 L296.8 660.1 L293.9 661.3 L290.9 662.7 L288.0 664.1 L285.0 665.5Z M275.0 659.5 L288.0 664.1 M278.0 657.1 L290.9 662.7 M281.0 654.7 L293.9 661.3 M284.0 652.3 L296.8 660.1 M287.0 649.8 L299.8 658.9 M290.0 647.4 L302.7 657.7 M293.0 644.9 L305.7 656.5 M296.0 642.5 L308.6 655.2 M299.0 640.0 L311.6 653.9 M301.9 637.6 L314.5 652.5 M304.9 635.1 L317.5 651.0 M307.9 632.7 L320.4 649.5 M310.9 630.2 L323.4 647.9 M313.9 627.8 L326.3 646.3 M316.9 625.3 L329.3 644.6 M319.9 622.9 L332.2 642.8 M322.9 620.4 L335.2 641.0 M325.9 618.0 L338.1 639.0 M328.9 615.6 L341.1 637.1 M331.9 613.1 L344.0 635.0 M334.9 610.7 L347.0 632.9 M337.9 608.3 L349.9 630.7 M340.9 605.9 L352.9 628.6 M343.9 603.5 L355.8 626.6 M346.9 601.1 L358.8 624.7 M349.9 598.7 L361.7 622.8 M352.9 596.3 L364.7 621.0 M355.8 594.0 L367.6 619.2 M358.8 591.6 L370.6 617.4 M361.8 589.3 L373.5 615.7 M364.8 587.0 L376.5 613.9 M367.8 584.6 L379.4 612.1 M370.8 582.3 L382.4 610.3 M373.8 580.1 L385.3 608.4 M376.8 577.8 L388.3 606.5 M379.8 575.5 L391.2 604.6 M382.8 573.3 L394.2 602.6 M385.8 571.1 L397.2 600.5 M388.8 568.9 L400.1 598.3 M391.8 566.7 L403.1 595.9 M394.8 564.5 L406.0 593.4 M397.8 562.3 L409.0 590.7 M400.8 560.2 L411.9 587.9 M403.8 558.1 L414.9 584.9 M406.8 555.9 L417.9 581.8 M409.9 553.8 L420.9 578.6 M413.0 551.6 L424.0 575.3 M416.2 549.5 L427.1 571.9 M419.3 547.4 L430.2 568.5 M422.5 545.2 L433.3 565.0 M425.7 543.1 L436.5 561.5 M429.0 541.0 L439.7 558.0 M432.3 538.9 L442.9 554.6 M435.6 536.7 L446.2 551.2 M438.9 534.6 L449.5 547.9 M442.3 532.5 L452.8 544.8 M445.7 530.5 L456.2 541.7 M449.1 528.4 L459.5 538.8 M452.6 526.3 L462.9 536.0 M456.0 524.2 L466.4 533.3 M459.6 522.2 L469.9 530.8 M463.1 520.1 L473.4 528.4 M466.7 518.1 L476.9 526.1 M470.3 516.0 L480.5 523.9 M474.0 514.0 L484.1 521.8 M477.6 511.9 L487.7 519.7 M481.4 509.9 L491.4 517.7 M485.1 507.9 L495.1 515.6 M488.9 505.9 L498.9 513.6 M492.7 503.9 L502.7 511.5 M496.6 501.9 L506.6 509.3 M500.4 499.9 L510.4 507.1 M504.4 497.9 L514.4 504.9 M508.3 495.9 L518.3 502.7 M512.3 493.9 L522.3 500.4 M516.3 491.9 L526.3 498.1 M520.4 489.9 L530.4 495.8 M524.5 487.9 L534.5 493.4 M528.6 485.9 L538.6 491.1 M532.8 484.0 L542.8 488.7 M537.0 482.0 L547.0 486.4 M541.3 480.0 L551.3 484.1 M545.6 478.0 L555.6 481.8 M549.9 476.0 L559.9 479.5 M554.3 474.0 L564.3 477.2 M558.7 472.1 L568.7 475.0 M563.1 470.1 L573.1 472.7 M567.6 468.1 L577.6 470.5 M572.1 466.1 L582.1 468.3 M576.7 464.1 L586.7 466.1 M581.3 462.1 L591.3 463.9 M585.9 460.1 L595.9 461.7 M590.6 458.1 L600.6 459.6 M595.4 456.1 L605.4 457.4 M600.1 454.1 L610.1 455.3 M605.0 452.0 L615.0 453.2 M609.8 450.0 L619.8 451.1 M614.7 448.0 L624.7 449.0 M619.7 446.0 L629.7 446.9 M624.7 444.0 L634.7 444.9 M629.7 441.9 L639.7 442.8 M634.8 439.9 L644.8 440.8 M639.9 437.9 L649.9 438.7 M645.1 435.9 L655.1 436.7 M650.3 433.8 L660.3 434.7 M655.6 431.8 L665.6 432.6 M660.9 429.8 L670.9 430.6 M666.3 427.7 L676.3 428.6 M671.7 425.7 L681.7 426.6 M677.1 423.6 L687.1 424.6 M682.7 421.6 L692.7 422.5 M688.2 419.5 L698.2 420.5 M693.8 417.5 L703.8 418.5 M699.5 415.4 L709.5 416.5 M705.2 413.4 L715.2 414.4 M711.0 411.3 L721.0 412.4 M716.8 409.2 L726.8 410.3 M722.6 407.2 L732.6 408.3 M728.6 405.1 L738.6 406.2 M734.5 403.0 L744.5 404.1 M740.6 400.9 L750.6 402.1 M746.6 398.8 L756.6 400.0 M752.8 396.7 L762.8 397.9 M759.0 394.6 L769.0 395.8 M765.2 392.5 L775.2 393.7 M771.5 390.4 L781.5 391.6 M777.9 388.3 L787.9 389.5 M784.3 386.1 L794.3 387.4 M790.8 384.0 L800.8 385.3 M797.3 381.9 L807.3 383.2 M803.9 379.7 L813.9 381.1 M810.6 377.5 L820.6 379.0 M817.3 375.4 L827.3 376.9 M824.0 373.2 L834.0 374.8 M830.9 371.0 L840.9 372.7 M837.8 368.8 L847.8 370.6 M844.7 366.5 L854.7 368.4 M851.7 364.3 L861.7 366.3 M858.8 362.0 L868.8 364.2 M866.0 359.8 L876.0 362.1 M873.2 357.5 L883.2 360.0 M880.5 355.2 L890.5 357.9 M887.8 352.9 L897.8 355.7 M895.2 350.5 L905.2 353.6 M902.7 348.2 L912.7 351.5 M910.2 345.8 L920.2 349.4 M917.8 343.4 L927.8 347.3 M925.5 340.9 L935.5 345.2 M933.3 338.5 L943.3 343.1 M941.1 336.0 L951.1 341.0 M949.0 333.5 L959.0 338.9 M956.9 331.0 L966.9 336.9 M964.9 328.4 L974.9 334.8 M973.0 325.8 L983.0 332.8 M981.2 323.2 L991.2 330.8 M989.5 320.5 L999.5 328.8 M997.8 317.8 L1007.8 327.3 M1006.2 316.0 L1016.2 325.1 M1014.7 312.8 L1024.7 323.3 M1023.2 310.0 L1033.2 321.7 M1031.8 307.7 L1041.8 320.5 M1040.5 305.9 L1050.5 319.6 M1049.3 304.6 L1059.3 318.9 M1058.2 303.5 L1067.2 318.4 M1067.1 302.7 L1075.0 318.0 M1076.1 302.1 L1082.8 317.7 M1085.1 301.4 L1090.7 317.5 M1094.1 300.9 L1098.6 317.4 M1103.0 300.4 L1106.4 317.4 M1112.0 300.0 L1114.3 317.4 M1121.0 299.7 L1122.1 317.5 M274.6 662.7 L277.6 660.4 L280.6 658.2 L283.6 656.0 L286.5 653.8 L289.5 651.6 L292.5 649.5 L295.5 647.3 L298.5 645.0 L301.5 642.8 L304.5 640.6 L307.4 638.3 L310.4 636.1 L313.4 633.8 L316.4 631.5 L319.4 629.2 L322.4 626.9 L325.4 624.5 L328.3 622.2 L331.3 619.9 L334.3 617.5 L337.3 615.1 L340.3 612.8 L343.3 610.4 L346.3 608.1 L349.2 605.8 L352.2 603.5 L355.2 601.3 L358.2 599.0 L361.2 596.8 L364.2 594.6 L367.2 592.3 L370.1 590.1 L373.1 587.9 L376.1 585.7 L379.1 583.5 L382.1 581.3 L385.1 579.2 L388.1 577.0 L391.1 574.7 L394.0 572.5 L397.0 570.3 L400.0 568.0 L403.0 565.7 L406.0 563.4 L409.1 561.1 L412.1 558.7 L415.2 556.4 L418.3 554.0 L421.5 551.6 L424.7 549.2 L427.9 546.8 L431.1 544.4 L434.4 542.0 L437.7 539.6 L441.0 537.3 L444.4 535.0 L447.8 532.7 L451.2 530.5 L454.6 528.2 L458.1 526.0 L461.6 523.9 L465.2 521.8 L468.7 519.7 L472.3 517.6 L476.0 515.5 L479.7 513.5 L483.4 511.5 L487.1 509.4 L490.9 507.4 L494.7 505.4 L498.6 503.4 L502.4 501.3 L506.4 499.3 L510.3 497.2 L514.3 495.2 L518.3 493.1 L522.4 491.1 L526.5 489.0 L530.6 487.0 L534.8 484.9 L539.0 482.9 L543.3 480.8 L547.6 478.8 L551.9 476.7 L556.3 474.7 L560.7 472.6 L565.1 470.6 L569.6 468.6 L574.1 466.5 L578.7 464.5 L583.3 462.4 L587.9 460.4 L592.6 458.4 L597.4 456.3 L602.1 454.3 L607.0 452.3 L611.8 450.2 L616.7 448.2 L621.7 446.2 L626.7 444.2 L631.7 442.1 L636.8 440.1 L641.9 438.1 L647.1 436.0 L652.3 434.0 L657.6 432.0 L662.9 429.9 L668.3 427.9 L673.7 425.9 L679.1 423.8 L684.7 421.8 L690.2 419.7 L695.8 417.7 L701.5 415.6 L707.2 413.6 L713.0 411.5 L718.8 409.5 L724.6 407.4 L730.6 405.3 L736.5 403.2 L742.6 401.1 L748.6 399.1 L754.8 397.0 L761.0 394.9 L767.2 392.8 L773.5 390.6 L779.9 388.5 L786.3 386.4 L792.8 384.3 L799.3 382.1 L805.9 380.0 L812.6 377.8 L819.3 375.7 L826.0 373.5 L832.9 371.3 L839.8 369.1 L846.7 366.9 L853.7 364.7 L860.8 362.5 L868.0 360.2 L875.2 358.0 L882.5 355.7 L889.8 353.4 L897.2 351.1 L904.7 348.8 L912.2 346.5 L919.8 344.2 L927.5 341.8 L935.3 339.4 L943.1 337.0 L951.0 334.6 L958.9 332.1 L966.9 329.7 L975.0 327.2 L983.2 324.7 L991.5 322.1 L999.8 319.7 L1008.2 317.9 L1016.7 314.9 L1025.2 312.3 L1033.8 310.2 L1042.5 308.6 L1051.3 307.5 L1060.0 306.5 L1068.7 305.8 L1077.4 305.2 L1086.2 304.7 L1095.0 304.2 L1103.7 303.8 L1112.5 303.5 L1121.2 303.3 L1130.0 303.2 M277.2 663.4 L280.2 661.3 L283.2 659.3 L286.1 657.4 L289.1 655.4 L292.1 653.4 L295.1 651.5 L298.0 649.6 L301.0 647.6 L304.0 645.6 L307.0 643.6 L310.0 641.5 L312.9 639.4 L315.9 637.3 L318.9 635.2 L321.9 633.0 L324.8 630.9 L327.8 628.6 L330.8 626.4 L333.8 624.2 L336.7 621.9 L339.7 619.6 L342.7 617.3 L345.7 615.0 L348.7 612.7 L351.6 610.5 L354.6 608.3 L357.6 606.2 L360.6 604.1 L363.5 601.9 L366.5 599.8 L369.5 597.7 L372.5 595.6 L375.5 593.5 L378.4 591.4 L381.4 589.3 L384.4 587.2 L387.4 585.0 L390.3 582.8 L393.3 580.6 L396.3 578.4 L399.3 576.1 L402.2 573.7 L405.2 571.3 L408.2 568.8 L411.3 566.3 L414.3 563.7 L417.4 561.1 L420.5 558.5 L423.7 555.8 L426.8 553.1 L430.0 550.5 L433.3 547.8 L436.5 545.2 L439.8 542.5 L443.1 540.0 L446.5 537.4 L449.9 535.0 L453.3 532.5 L456.7 530.2 L460.2 527.9 L463.7 525.6 L467.2 523.4 L470.8 521.3 L474.4 519.2 L478.0 517.1 L481.7 515.1 L485.4 513.0 L489.1 511.0 L492.9 509.0 L496.7 506.9 L500.6 504.8 L504.4 502.8 L508.4 500.7 L512.3 498.6 L516.3 496.5 L520.3 494.4 L524.4 492.2 L528.5 490.1 L532.6 488.0 L536.8 485.9 L541.0 483.7 L545.3 481.6 L549.6 479.5 L553.9 477.4 L558.3 475.3 L562.7 473.2 L567.1 471.1 L571.6 469.0 L576.1 467.0 L580.7 464.9 L585.3 462.8 L589.9 460.7 L594.6 458.7 L599.4 456.6 L604.1 454.6 L609.0 452.5 L613.8 450.5 L618.7 448.4 L623.7 446.4 L628.7 444.3 L633.7 442.3 L638.8 440.3 L643.9 438.2 L649.1 436.2 L654.3 434.2 L659.6 432.1 L664.9 430.1 L670.3 428.1 L675.7 426.0 L681.1 424.0 L686.7 422.0 L692.2 419.9 L697.8 417.9 L703.5 415.8 L709.2 413.8 L715.0 411.7 L720.8 409.7 L726.6 407.6 L732.6 405.5 L738.5 403.5 L744.6 401.4 L750.6 399.3 L756.8 397.2 L763.0 395.1 L769.2 393.0 L775.5 390.9 L781.9 388.8 L788.3 386.7 L794.8 384.5 L801.3 382.4 L807.9 380.3 L814.6 378.1 L821.3 376.0 L828.0 373.8 L834.9 371.6 L841.8 369.5 L848.7 367.3 L855.7 365.1 L862.8 362.9 L870.0 360.7 L877.2 358.5 L884.5 356.2 L891.8 354.0 L899.2 351.8 L906.7 349.5 L914.2 347.2 L921.8 344.9 L929.5 342.6 L937.3 340.3 L945.1 338.0 L953.0 335.7 L960.9 333.3 L968.9 331.0 L977.0 328.6 L985.2 326.2 L993.5 323.8 L1001.8 321.6 L1010.2 319.7 L1018.7 317.0 L1027.2 314.7 L1035.8 312.8 L1044.5 311.4 L1053.3 310.3 L1061.8 309.5 L1070.3 308.8 L1078.8 308.3 L1087.3 307.9 L1095.9 307.5 L1104.4 307.2 L1112.9 307.0 L1121.5 306.8 L1130.0 306.8 M279.8 664.1 L282.8 662.3 L285.7 660.5 L288.7 658.7 L291.7 656.9 L294.6 655.2 L297.6 653.6 L300.6 651.9 L303.5 650.1 L306.5 648.3 L309.5 646.5 L312.5 644.7 L315.4 642.8 L318.4 640.9 L321.4 638.9 L324.3 636.9 L327.3 634.8 L330.3 632.8 L333.2 630.6 L336.2 628.5 L339.2 626.3 L342.1 624.0 L345.1 621.8 L348.1 619.5 L351.0 617.4 L354.0 615.2 L357.0 613.2 L360.0 611.1 L362.9 609.1 L365.9 607.1 L368.9 605.1 L371.8 603.1 L374.8 601.1 L377.8 599.1 L380.7 597.1 L383.7 595.0 L386.7 593.0 L389.6 590.9 L392.6 588.7 L395.6 586.5 L398.5 584.2 L401.5 581.9 L404.5 579.4 L407.5 576.8 L410.5 574.2 L413.5 571.4 L416.5 568.7 L419.6 565.8 L422.7 562.9 L425.8 560.0 L429.0 557.1 L432.2 554.1 L435.4 551.2 L438.7 548.3 L441.9 545.4 L445.3 542.6 L448.6 539.9 L452.0 537.2 L455.4 534.6 L458.8 532.1 L462.2 529.7 L465.7 527.3 L469.3 525.1 L472.8 522.9 L476.4 520.7 L480.0 518.7 L483.7 516.6 L487.4 514.6 L491.1 512.5 L494.9 510.5 L498.7 508.4 L502.6 506.3 L506.4 504.2 L510.4 502.1 L514.3 499.9 L518.3 497.8 L522.3 495.6 L526.4 493.4 L530.5 491.2 L534.6 489.0 L538.8 486.8 L543.0 484.6 L547.3 482.4 L551.6 480.3 L555.9 478.1 L560.3 475.9 L564.7 473.8 L569.1 471.7 L573.6 469.5 L578.1 467.4 L582.7 465.3 L587.3 463.2 L591.9 461.1 L596.6 459.0 L601.4 456.9 L606.1 454.8 L611.0 452.7 L615.8 450.7 L620.7 448.6 L625.7 446.6 L630.7 444.5 L635.7 442.5 L640.8 440.4 L645.9 438.4 L651.1 436.4 L656.3 434.3 L661.6 432.3 L666.9 430.3 L672.3 428.2 L677.7 426.2 L683.1 424.2 L688.7 422.2 L694.2 420.1 L699.8 418.1 L705.5 416.0 L711.2 414.0 L717.0 411.9 L722.8 409.9 L728.6 407.8 L734.6 405.8 L740.5 403.7 L746.6 401.6 L752.6 399.5 L758.8 397.4 L765.0 395.3 L771.2 393.2 L777.5 391.1 L783.9 389.0 L790.3 386.9 L796.8 384.8 L803.3 382.7 L809.9 380.6 L816.6 378.4 L823.3 376.3 L830.0 374.1 L836.9 372.0 L843.8 369.8 L850.7 367.7 L857.7 365.5 L864.8 363.3 L872.0 361.2 L879.2 359.0 L886.5 356.8 L893.8 354.6 L901.2 352.4 L908.7 350.2 L916.2 348.0 L923.8 345.7 L931.5 343.5 L939.3 341.3 L947.1 339.0 L955.0 336.8 L962.9 334.5 L970.9 332.3 L979.0 330.0 L987.2 327.7 L995.5 325.5 L1003.8 323.5 L1012.2 321.5 L1020.7 319.1 L1029.2 317.0 L1037.8 315.4 L1046.5 314.1 L1055.3 313.2 L1063.6 312.4 L1071.8 311.9 L1080.1 311.5 L1088.5 311.1 L1096.8 310.8 L1105.1 310.6 L1113.4 310.4 L1121.7 310.4 L1130.0 310.4 M282.4 664.8 L285.4 663.2 L288.3 661.6 L291.3 660.0 L294.2 658.5 L297.2 657.1 L300.2 655.6 L303.1 654.2 L306.1 652.7 L309.0 651.1 L312.0 649.5 L315.0 647.9 L317.9 646.2 L320.9 644.4 L323.8 642.6 L326.8 640.7 L329.8 638.8 L332.7 636.9 L335.7 634.8 L338.6 632.8 L341.6 630.6 L344.6 628.5 L347.5 626.3 L350.5 624.1 L353.4 622.0 L356.4 620.0 L359.4 618.0 L362.3 616.1 L365.3 614.2 L368.2 612.3 L371.2 610.4 L374.2 608.5 L377.1 606.6 L380.1 604.7 L383.0 602.7 L386.0 600.8 L389.0 598.8 L391.9 596.7 L394.9 594.6 L397.8 592.4 L400.8 590.1 L403.8 587.6 L406.7 585.1 L409.7 582.3 L412.7 579.5 L415.7 576.6 L418.7 573.6 L421.8 570.6 L424.9 567.4 L428.0 564.2 L431.2 561.0 L434.4 557.8 L437.6 554.6 L440.8 551.5 L444.1 548.3 L447.4 545.3 L450.7 542.3 L454.1 539.4 L457.5 536.7 L460.9 534.0 L464.3 531.5 L467.8 529.1 L471.3 526.7 L474.9 524.5 L478.4 522.3 L482.0 520.2 L485.7 518.2 L489.4 516.1 L493.1 514.1 L496.9 512.0 L500.7 510.0 L504.6 507.8 L508.4 505.7 L512.4 503.5 L516.3 501.3 L520.3 499.1 L524.3 496.8 L528.4 494.6 L532.5 492.3 L536.6 490.1 L540.8 487.8 L545.0 485.5 L549.3 483.3 L553.6 481.0 L557.9 478.8 L562.3 476.6 L566.7 474.4 L571.1 472.2 L575.6 470.0 L580.1 467.8 L584.7 465.7 L589.3 463.5 L593.9 461.4 L598.6 459.3 L603.4 457.2 L608.1 455.1 L613.0 453.0 L617.8 450.9 L622.7 448.8 L627.7 446.7 L632.7 444.7 L637.7 442.6 L642.8 440.6 L647.9 438.6 L653.1 436.5 L658.3 434.5 L663.6 432.5 L668.9 430.4 L674.3 428.4 L679.7 426.4 L685.1 424.4 L690.7 422.4 L696.2 420.3 L701.8 418.3 L707.5 416.2 L713.2 414.2 L719.0 412.2 L724.8 410.1 L730.6 408.0 L736.6 406.0 L742.5 403.9 L748.6 401.8 L754.6 399.7 L760.8 397.7 L767.0 395.6 L773.2 393.5 L779.5 391.4 L785.9 389.3 L792.3 387.2 L798.8 385.1 L805.3 383.0 L811.9 380.8 L818.6 378.7 L825.3 376.6 L832.0 374.5 L838.9 372.3 L845.8 370.2 L852.7 368.1 L859.7 365.9 L866.8 363.8 L874.0 361.6 L881.2 359.5 L888.5 357.3 L895.8 355.2 L903.2 353.0 L910.7 350.8 L918.2 348.7 L925.8 346.5 L933.5 344.3 L941.3 342.2 L949.1 340.0 L957.0 337.9 L964.9 335.7 L972.9 333.5 L981.0 331.4 L989.2 329.3 L997.5 327.1 L1005.8 325.4 L1014.2 323.3 L1022.7 321.2 L1031.2 319.4 L1039.8 317.9 L1048.5 316.9 L1057.3 316.0 L1065.4 315.4 L1073.4 315.0 L1081.5 314.6 L1089.6 314.3 L1097.7 314.1 L1105.7 314.0 L1113.8 313.9 L1121.9 313.9 L1130.0 314.0" fill="none" stroke="#000" stroke-width="0.55"/><path d="M990.0 342.5L996.9 341.2L996.5 343.3L990.0 344.2ZM996.9 341.2L1003.7 339.9L1003.0 342.4L996.5 343.3Z" fill="#10b088" stroke="#10b088"/><path d="M1003.7 339.9L1010.6 338.7L1009.6 341.6L1003.0 342.4ZM1010.6 338.7L1017.4 337.5L1016.1 340.9L1009.6 341.6ZM1017.4 337.5L1024.3 336.4L1022.6 340.2L1016.1 340.9ZM1024.3 336.4L1031.2 335.4L1029.1 339.6L1022.6 340.2Z" fill="#00e8d8" stroke="#00e8d8"/><path d="M1031.2 335.4L1038.0 334.4L1035.6 339.1L1029.1 339.6ZM1038.0 334.4L1044.9 333.5L1042.1 338.6L1035.6 339.1ZM1044.9 333.5L1051.8 332.7L1048.7 338.2L1042.1 338.6ZM1051.8 332.7L1058.6 331.9L1055.2 337.9L1048.7 338.2Z" fill="#00c0f8" stroke="#00c0f8"/><path d="M1058.6 331.9L1065.5 331.2L1061.7 337.7L1055.2 337.9ZM1065.5 331.2L1072.3 330.6L1068.2 337.5L1061.7 337.7ZM1072.3 330.6L1079.2 329.9L1074.7 337.5L1068.2 337.5Z" fill="#0068ff" stroke="#0068ff"/><path d="M1079.2 329.9L1086.1 329.3L1081.2 337.5L1074.7 337.5ZM1086.1 329.3L1092.9 328.6L1087.8 337.6L1081.2 337.5ZM1092.9 328.6L1099.8 328.0L1094.3 337.8L1087.8 337.6ZM1168.4 320.7L1175.3 320.0L1166.0 336.6L1159.4 337.9ZM1175.3 320.0L1182.1 319.2L1172.5 334.8L1166.0 336.6ZM1182.1 319.2L1189.0 318.4L1179.0 332.5L1172.5 334.8Z" fill="#0000f8" stroke="#0000f8"/><path d="M1099.8 328.0L1106.7 327.3L1100.8 338.1L1094.3 337.8ZM1106.7 327.3L1113.5 326.7L1107.3 338.4L1100.8 338.1ZM1113.5 326.7L1120.4 326.0L1113.8 338.8L1107.3 338.4ZM1120.4 326.0L1127.2 325.2L1120.3 339.2L1113.8 338.8ZM1127.2 325.2L1134.1 324.5L1126.9 339.5L1120.3 339.2ZM1134.1 324.5L1141.0 323.8L1133.4 339.6L1126.9 339.5ZM1141.0 323.8L1147.8 323.0L1139.9 339.6L1133.4 339.6ZM1147.8 323.0L1154.7 322.3L1146.4 339.3L1139.9 339.6ZM1154.7 322.3L1161.6 321.5L1152.9 338.8L1146.4 339.3ZM1161.6 321.5L1168.4 320.7L1159.4 337.9L1152.9 338.8Z" fill="#4040e8" stroke="#4040e8"/><path d="M990.0 342.5 L996.9 341.2 L1003.7 339.9 L1010.6 338.7 L1017.4 337.5 L1024.3 336.4 L1031.2 335.4 L1038.0 334.4 L1044.9 333.5 L1051.8 332.7 L1058.6 331.9 L1065.5 331.2 L1072.3 330.6 L1079.2 329.9 L1086.1 329.3 L1092.9 328.6 L1099.8 328.0 L1106.7 327.3 L1113.5 326.7 L1120.4 326.0 L1127.2 325.2 L1134.1 324.5 L1141.0 323.8 L1147.8 323.0 L1154.7 322.3 L1161.6 321.5 L1168.4 320.7 L1175.3 320.0 L1182.1 319.2 L1189.0 318.4 L1179.0 332.5 L1172.5 334.8 L1166.0 336.6 L1159.4 337.9 L1152.9 338.8 L1146.4 339.3 L1139.9 339.6 L1133.4 339.6 L1126.9 339.5 L1120.3 339.2 L1113.8 338.8 L1107.3 338.4 L1100.8 338.1 L1094.3 337.8 L1087.8 337.6 L1081.2 337.5 L1074.7 337.5 L1068.2 337.5 L1061.7 337.7 L1055.2 337.9 L1048.7 338.2 L1042.1 338.6 L1035.6 339.1 L1029.1 339.6 L1022.6 340.2 L1016.1 340.9 L1009.6 341.6 L1003.0 342.4 L996.5 343.3 L990.0 344.2Z M996.9 341.2 L996.5 343.3 M1003.7 339.9 L1003.0 342.4 M1010.6 338.7 L1009.6 341.6 M1017.4 337.5 L1016.1 340.9 M1024.3 336.4 L1022.6 340.2 M1031.2 335.4 L1029.1 339.6 M1038.0 334.4 L1035.6 339.1 M1044.9 333.5 L1042.1 338.6 M1051.8 332.7 L1048.7 338.2 M1058.6 331.9 L1055.2 337.9 M1065.5 331.2 L1061.7 337.7 M1072.3 330.6 L1068.2 337.5 M1079.2 329.9 L1074.7 337.5 M1086.1 329.3 L1081.2 337.5 M1092.9 328.6 L1087.8 337.6 M1099.8 328.0 L1094.3 337.8 M1106.7 327.3 L1100.8 338.1 M1113.5 326.7 L1107.3 338.4 M1120.4 326.0 L1113.8 338.8 M1127.2 325.2 L1120.3 339.2 M1134.1 324.5 L1126.9 339.5 M1141.0 323.8 L1133.4 339.6 M1147.8 323.0 L1139.9 339.6 M1154.7 322.3 L1146.4 339.3 M1161.6 321.5 L1152.9 338.8 M1168.4 320.7 L1159.4 337.9 M1175.3 320.0 L1166.0 336.6 M1182.1 319.2 L1172.5 334.8" fill="none" stroke="#000" stroke-width="0.8"/><path d="M1189.5 318.4 L1208.4 328.6 L1178.5 332.5Z" fill="#00c0f8" stroke="#000" stroke-width="0.7"/><path d="M1195 321.5 L1186 333 M1201 324.6 L1193 332" stroke="#000" stroke-width="0.6" fill="none"/><path d="M268 690 L286 686 L290 690 L290 734 L286 737 L268 740 L268 732 L282 730 L282 694 L268 697 Z" fill="#8888e0" stroke="#000" stroke-width="0.7"/><path d="M270 698 L281 696 L281 729 L270 731 Z" fill="#00a8f0" stroke="#000" stroke-width="0.5"/><path d="M239.0 655.4L242.4 650.7L242.7 662.1L239.3 666.1ZM239.3 666.1L242.7 662.1L243.1 673.5L239.7 676.9ZM242.4 650.7L245.8 646.2L246.1 658.2L242.7 662.1ZM245.8 646.2L249.2 641.8L249.5 654.3L246.1 658.2ZM249.2 641.8L252.6 637.6L252.9 650.6L249.5 654.3ZM252.6 637.6L255.9 633.4L256.3 646.9L252.9 650.6ZM950.0 303.8L957.5 301.2L954.8 311.9L947.4 314.4ZM947.4 314.4L954.8 311.9L952.0 322.7L944.7 325.1ZM944.7 325.1L952.0 322.7L949.3 333.4L942.0 335.7ZM957.5 301.2L965.1 298.6L962.2 309.4L954.8 311.9ZM954.8 311.9L962.2 309.4L959.4 320.2L952.0 322.7ZM952.0 322.7L959.4 320.2L956.5 331.1L949.3 333.4ZM965.1 298.6L972.7 296.0L969.7 306.9L962.2 309.4ZM962.2 309.4L969.7 306.9L966.8 317.8L959.4 320.2ZM959.4 320.2L966.8 317.8L963.9 328.7L956.5 331.1ZM966.8 317.8L974.3 315.4L971.2 326.4L963.9 328.7Z" fill="#0068ff" stroke="#0068ff"/><path d="M239.7 676.9L243.1 673.5L243.4 684.9L240.0 687.6ZM242.7 662.1L246.1 658.2L246.5 670.2L243.1 673.5ZM243.1 673.5L246.5 670.2L246.8 682.1L243.4 684.9ZM246.1 658.2L249.5 654.3L249.9 666.9L246.5 670.2ZM249.5 654.3L252.9 650.6L253.3 663.6L249.9 666.9ZM252.9 650.6L256.3 646.9L256.7 660.4L253.3 663.6ZM255.9 633.4L259.3 629.4L259.7 643.3L256.3 646.9ZM259.3 629.4L262.7 625.5L263.1 639.8L259.7 643.3ZM262.7 625.5L266.1 621.7L266.5 636.3L263.1 639.8ZM266.1 621.7L269.5 618.0L269.9 633.0L266.5 636.3ZM916.3 334.3L923.3 332.0L921.0 342.4L914.1 344.5ZM927.9 311.4L935.2 308.9L932.8 319.3L925.6 321.7ZM925.6 321.7L932.8 319.3L930.4 329.7L923.3 332.0ZM923.3 332.0L930.4 329.7L928.0 340.2L921.0 342.4ZM935.2 308.9L942.6 306.3L940.1 316.9L932.8 319.3ZM932.8 319.3L940.1 316.9L937.5 327.4L930.4 329.7ZM930.4 329.7L937.5 327.4L935.0 337.9L928.0 340.2ZM942.6 306.3L950.0 303.8L947.4 314.4L940.1 316.9ZM940.1 316.9L947.4 314.4L944.7 325.1L937.5 327.4ZM937.5 327.4L944.7 325.1L942.0 335.7L935.0 337.9Z" fill="#00c0f8" stroke="#00c0f8"/><path d="M246.5 670.2L249.9 666.9L250.2 679.4L246.8 682.1ZM249.9 666.9L253.3 663.6L253.7 676.7L250.2 679.4ZM253.3 663.6L256.7 660.4L257.1 673.9L253.7 676.7ZM256.3 646.9L259.7 643.3L260.1 657.2L256.7 660.4ZM259.7 643.3L263.1 639.8L263.5 654.1L260.1 657.2ZM263.1 639.8L266.5 636.3L266.9 651.0L263.5 654.1ZM269.5 618.0L272.9 614.4L273.3 629.7L269.9 633.0ZM272.9 614.4L276.3 610.9L276.7 626.4L273.3 629.7ZM276.3 610.9L279.7 607.5L280.1 623.2L276.7 626.4ZM895.4 341.1L902.3 338.8L900.4 348.9L893.7 351.0ZM904.2 328.8L911.3 326.5L909.3 336.6L902.3 338.8ZM902.3 338.8L909.3 336.6L907.3 346.7L900.4 348.9ZM913.3 316.4L920.6 313.9L918.4 324.1L911.3 326.5ZM911.3 326.5L918.4 324.1L916.3 334.3L909.3 336.6ZM909.3 336.6L916.3 334.3L914.1 344.5L907.3 346.7ZM920.6 313.9L927.9 311.4L925.6 321.7L918.4 324.1ZM918.4 324.1L925.6 321.7L923.3 332.0L916.3 334.3Z" fill="#00e8d8" stroke="#00e8d8"/><path d="M256.7 660.4L260.1 657.2L260.5 671.2L257.1 673.9ZM260.1 657.2L263.5 654.1L263.9 668.4L260.5 671.2ZM263.5 654.1L266.9 651.0L267.3 665.7L263.9 668.4ZM266.5 636.3L269.9 633.0L270.3 648.0L266.9 651.0ZM269.9 633.0L273.3 629.7L273.7 644.9L270.3 648.0ZM273.3 629.7L276.7 626.4L277.1 641.9L273.7 644.9ZM279.7 607.5L283.1 604.2L283.5 620.1L280.1 623.2ZM283.1 604.2L286.5 600.9L286.9 617.0L283.5 620.1ZM286.5 600.9L289.8 597.8L290.3 614.0L286.9 617.0ZM881.8 345.5L888.6 343.3L886.9 353.1L880.2 355.3ZM891.8 323.6L898.9 321.2L897.2 331.1L890.2 333.4ZM890.2 333.4L897.2 331.1L895.4 341.1L888.6 343.3ZM888.6 343.3L895.4 341.1L893.7 351.0L886.9 353.1ZM898.9 321.2L906.1 318.8L904.2 328.8L897.2 331.1ZM897.2 331.1L904.2 328.8L902.3 338.8L895.4 341.1ZM906.1 318.8L913.3 316.4L911.3 326.5L904.2 328.8Z" fill="#10b088" stroke="#10b088"/><path d="M266.9 651.0L270.3 648.0L270.7 662.9L267.3 665.7ZM270.3 648.0L273.7 644.9L274.2 660.2L270.7 662.9ZM276.7 626.4L280.1 623.2L280.6 639.0L277.1 641.9ZM280.1 623.2L283.5 620.1L284.0 636.0L280.6 639.0ZM283.5 620.1L286.9 617.0L287.4 633.1L284.0 636.0ZM289.8 597.8L293.2 594.7L293.7 611.0L290.3 614.0ZM293.2 594.7L296.6 591.7L297.1 608.1L293.7 611.0ZM861.6 351.9L868.3 349.8L867.0 359.4L860.4 361.5ZM869.5 340.1L876.4 337.9L875.0 347.6L868.3 349.8ZM868.3 349.8L875.0 347.6L873.6 357.4L867.0 359.4ZM877.7 328.2L884.8 325.9L883.3 335.7L876.4 337.9ZM876.4 337.9L883.3 335.7L881.8 345.5L875.0 347.6ZM875.0 347.6L881.8 345.5L880.2 355.3L873.6 357.4ZM884.8 325.9L891.8 323.6L890.2 333.4L883.3 335.7ZM883.3 335.7L890.2 333.4L888.6 343.3L881.8 345.5Z" fill="#087a30" stroke="#087a30"/><path d="M273.7 644.9L277.1 641.9L277.6 657.5L274.2 660.2ZM277.1 641.9L280.6 639.0L281.0 654.7L277.6 657.5ZM280.6 639.0L284.0 636.0L284.4 651.9L281.0 654.7ZM286.9 617.0L290.3 614.0L290.8 630.2L287.4 633.1ZM290.3 614.0L293.7 611.0L294.2 627.3L290.8 630.2ZM296.6 591.7L300.0 588.8L300.5 605.2L297.1 608.1ZM300.0 588.8L303.4 586.0L303.9 602.4L300.5 605.2ZM303.4 586.0L306.8 583.2L307.3 599.6L303.9 602.4ZM841.8 358.3L848.3 356.2L847.4 365.7L841.0 367.7ZM849.2 346.7L855.9 344.5L854.9 354.1L848.3 356.2ZM848.3 356.2L854.9 354.1L853.9 363.6L847.4 365.7ZM856.9 335.0L863.8 332.7L862.7 342.3L855.9 344.5ZM855.9 344.5L862.7 342.3L861.6 351.9L854.9 354.1ZM854.9 354.1L861.6 351.9L860.4 361.5L853.9 363.6ZM863.8 332.7L870.8 330.5L869.5 340.1L862.7 342.3ZM862.7 342.3L869.5 340.1L868.3 349.8L861.6 351.9ZM870.8 330.5L877.7 328.2L876.4 337.9L869.5 340.1Z" fill="#2a7800" stroke="#2a7800"/><path d="M284.0 636.0L287.4 633.1L287.8 649.1L284.4 651.9ZM287.4 633.1L290.8 630.2L291.2 646.4L287.8 649.1ZM293.7 611.0L297.1 608.1L297.6 624.4L294.2 627.3ZM297.1 608.1L300.5 605.2L301.0 621.6L297.6 624.4ZM306.8 583.2L310.2 580.5L310.7 596.9L307.3 599.6ZM310.2 580.5L313.6 577.8L314.1 594.2L310.7 596.9ZM822.4 364.5L828.8 362.4L828.3 371.8L821.9 373.8ZM829.3 353.0L835.9 350.9L835.3 360.3L828.8 362.4ZM828.8 362.4L835.3 360.3L834.6 369.8L828.3 371.8ZM836.6 341.5L843.3 339.3L842.5 348.8L835.9 350.9ZM835.9 350.9L842.5 348.8L841.8 358.3L835.3 360.3ZM835.3 360.3L841.8 358.3L841.0 367.7L834.6 369.8ZM843.3 339.3L850.1 337.2L849.2 346.7L842.5 348.8ZM842.5 348.8L849.2 346.7L848.3 356.2L841.8 358.3ZM850.1 337.2L856.9 335.0L855.9 344.5L849.2 346.7Z" fill="#80ac00" stroke="#80ac00"/><path d="M290.8 630.2L294.2 627.3L294.7 643.6L291.2 646.4ZM294.2 627.3L297.6 624.4L298.1 640.8L294.7 643.6ZM300.5 605.2L303.9 602.4L304.4 618.8L301.0 621.6ZM303.9 602.4L307.3 599.6L307.8 616.0L304.4 618.8ZM307.3 599.6L310.7 596.9L311.2 613.2L307.8 616.0ZM313.6 577.8L317.0 575.2L317.5 591.5L314.1 594.2ZM317.0 575.2L320.4 572.7L320.9 588.9L317.5 591.5ZM320.4 572.7L323.8 570.2L324.3 586.3L320.9 588.9ZM803.3 370.6L809.6 368.6L809.4 377.9L803.3 379.9ZM809.8 359.2L816.3 357.2L816.0 366.5L809.6 368.6ZM809.6 368.6L816.0 366.5L815.7 375.9L809.4 377.9ZM816.6 347.8L823.2 345.7L822.8 355.1L816.3 357.2ZM816.3 357.2L822.8 355.1L822.4 364.5L816.0 366.5ZM816.0 366.5L822.4 364.5L821.9 373.8L815.7 375.9ZM823.2 345.7L829.8 343.6L829.3 353.0L822.8 355.1ZM822.8 355.1L829.3 353.0L828.8 362.4L822.4 364.5ZM829.8 343.6L836.6 341.5L835.9 350.9L829.3 353.0Z" fill="#d8e400" stroke="#d8e400"/><path d="M297.6 624.4L301.0 621.6L301.5 638.0L298.1 640.8ZM301.0 621.6L304.4 618.8L304.9 635.2L301.5 638.0ZM304.4 618.8L307.8 616.0L308.3 632.4L304.9 635.2ZM307.8 616.0L311.2 613.2L311.7 629.6L308.3 632.4ZM310.7 596.9L314.1 594.2L314.6 610.5L311.2 613.2ZM314.1 594.2L317.5 591.5L318.0 607.7L314.6 610.5ZM317.5 591.5L320.9 588.9L321.4 605.0L318.0 607.7ZM320.9 588.9L324.3 586.3L324.9 602.3L321.4 605.0ZM323.8 570.2L327.2 567.7L327.7 583.7L324.3 586.3ZM327.2 567.7L330.6 565.2L331.2 581.1L327.7 583.7ZM330.6 565.2L334.1 562.8L334.7 578.5L331.2 581.1ZM334.1 562.8L337.6 560.4L338.2 576.0L334.7 578.5ZM784.2 376.8L790.5 374.7L790.6 384.1L784.2 386.2ZM790.5 356.1L796.9 354.0L796.9 363.4L790.5 365.4ZM790.5 365.4L796.9 363.4L797.0 372.7L790.5 374.7ZM790.5 374.7L797.0 372.7L797.0 382.0L790.6 384.1ZM796.9 354.0L803.4 352.0L803.4 361.3L796.9 363.4ZM796.9 363.4L803.4 361.3L803.3 370.6L797.0 372.7ZM797.0 372.7L803.3 370.6L803.3 379.9L797.0 382.0ZM803.4 352.0L810.0 349.9L809.8 359.2L803.4 361.3ZM803.4 361.3L809.8 359.2L809.6 368.6L803.3 370.6ZM810.0 349.9L816.6 347.8L816.3 357.2L809.8 359.2Z" fill="#ffe800" stroke="#ffe800"/><path d="M311.2 613.2L314.6 610.5L315.1 626.8L311.7 629.6ZM314.6 610.5L318.0 607.7L318.6 624.0L315.1 626.8ZM318.0 607.7L321.4 605.0L322.0 621.2L318.6 624.0ZM321.4 605.0L324.9 602.3L325.4 618.4L322.0 621.2ZM324.3 586.3L327.7 583.7L328.3 599.6L324.9 602.3ZM327.7 583.7L331.2 581.1L331.7 596.9L328.3 599.6ZM331.2 581.1L334.7 578.5L335.2 594.2L331.7 596.9ZM334.7 578.5L338.2 576.0L338.7 591.5L335.2 594.2ZM337.6 560.4L341.1 558.0L341.7 573.4L338.2 576.0ZM341.1 558.0L344.6 555.6L345.2 570.9L341.7 573.4ZM344.6 555.6L348.2 553.2L348.8 568.3L345.2 570.9ZM348.2 553.2L351.7 550.8L352.4 565.8L348.8 568.3ZM758.8 366.1L765.1 364.1L765.2 373.6L759.0 375.6ZM759.0 375.6L765.2 373.6L765.3 383.0L759.1 385.1ZM759.1 385.1L765.3 383.0L765.4 392.4L759.2 394.5ZM765.1 364.1L771.4 362.1L771.5 371.5L765.2 373.6ZM765.2 373.6L771.5 371.5L771.6 381.0L765.3 383.0ZM765.3 383.0L771.6 381.0L771.7 390.4L765.4 392.4ZM771.4 362.1L777.7 360.1L777.8 369.5L771.5 371.5ZM771.5 371.5L777.8 369.5L777.8 378.9L771.6 381.0ZM771.6 381.0L777.8 378.9L777.9 388.3L771.7 390.4ZM777.7 360.1L784.1 358.1L784.1 367.5L777.8 369.5ZM777.8 369.5L784.1 367.5L784.2 376.8L777.8 378.9ZM777.8 378.9L784.2 376.8L784.2 386.2L777.9 388.3ZM784.1 358.1L790.5 356.1L790.5 365.4L784.1 367.5ZM784.1 367.5L790.5 365.4L790.5 374.7L784.2 376.8Z" fill="#ffcc00" stroke="#ffcc00"/><path d="M324.9 602.3L328.3 599.6L328.8 615.6L325.4 618.4ZM328.3 599.6L331.7 596.9L332.3 612.8L328.8 615.6ZM331.7 596.9L335.2 594.2L335.8 610.0L332.3 612.8ZM335.2 594.2L338.7 591.5L339.3 607.1L335.8 610.0ZM338.2 576.0L341.7 573.4L342.3 588.8L338.7 591.5ZM338.7 591.5L342.3 588.8L342.9 604.3L339.3 607.1ZM341.7 573.4L345.2 570.9L345.8 586.1L342.3 588.8ZM345.2 570.9L348.8 568.3L349.4 583.4L345.8 586.1ZM348.8 568.3L352.4 565.8L353.0 580.8L349.4 583.4ZM351.7 550.8L355.3 548.4L356.0 563.2L352.4 565.8ZM352.4 565.8L356.0 563.2L356.6 578.1L353.0 580.8ZM355.3 548.4L359.0 546.0L359.6 560.7L356.0 563.2ZM359.0 546.0L362.6 543.7L363.3 558.2L359.6 560.7ZM362.6 543.7L366.3 541.3L367.0 555.6L363.3 558.2ZM710.3 381.9L716.2 380.0L716.5 389.7L710.6 391.7ZM710.6 391.7L716.5 389.7L716.8 399.4L710.9 401.5ZM716.2 380.0L722.2 378.0L722.4 387.7L716.5 389.7ZM716.5 389.7L722.4 387.7L722.7 397.4L716.8 399.4ZM722.2 378.0L728.2 376.0L728.4 385.7L722.4 387.7ZM722.4 387.7L728.4 385.7L728.7 395.3L722.7 397.4ZM722.7 397.4L728.7 395.3L728.9 405.0L723.0 407.1ZM728.2 376.0L734.2 374.1L734.5 383.7L728.4 385.7ZM728.4 385.7L734.5 383.7L734.7 393.3L728.7 395.3ZM728.7 395.3L734.7 393.3L734.9 402.9L728.9 405.0ZM734.2 374.1L740.3 372.1L740.5 381.7L734.5 383.7ZM734.5 383.7L740.5 381.7L740.7 391.2L734.7 393.3ZM734.7 393.3L740.7 391.2L740.9 400.8L734.9 402.9ZM740.3 372.1L746.5 370.1L746.6 379.6L740.5 381.7ZM740.5 381.7L746.6 379.6L746.8 389.2L740.7 391.2ZM740.7 391.2L746.8 389.2L747.0 398.7L740.9 400.8ZM746.5 370.1L752.6 368.1L752.8 377.6L746.6 379.6ZM746.6 379.6L752.8 377.6L752.9 387.1L746.8 389.2ZM746.8 389.2L752.9 387.1L753.1 396.6L747.0 398.7ZM752.6 368.1L758.8 366.1L759.0 375.6L752.8 377.6ZM752.8 377.6L759.0 375.6L759.1 385.1L752.9 387.1ZM752.9 387.1L759.1 385.1L759.2 394.5L753.1 396.6Z" fill="#ffa800" stroke="#ffa800"/><path d="M342.3 588.8L345.8 586.1L346.4 601.4L342.9 604.3ZM345.8 586.1L349.4 583.4L350.0 598.6L346.4 601.4ZM349.4 583.4L353.0 580.8L353.6 595.7L350.0 598.6ZM353.0 580.8L356.6 578.1L357.2 592.9L353.6 595.7ZM356.0 563.2L359.6 560.7L360.3 575.4L356.6 578.1ZM359.6 560.7L363.3 558.2L363.9 572.7L360.3 575.4ZM363.3 558.2L367.0 555.6L367.6 570.0L363.9 572.7ZM366.3 541.3L370.0 538.9L370.7 553.1L367.0 555.6ZM367.0 555.6L370.7 553.1L371.3 567.3L367.6 570.0ZM370.0 538.9L373.7 536.5L374.4 550.6L370.7 553.1ZM373.7 536.5L377.5 534.2L378.1 548.0L374.4 550.6ZM377.5 534.2L381.2 531.8L381.9 545.5L378.1 548.0ZM381.2 531.8L385.0 529.4L385.7 543.0L381.9 545.5ZM385.0 529.4L388.8 527.1L389.6 540.5L385.7 543.0ZM665.1 417.9L670.7 415.8L671.1 425.9L665.5 428.0ZM670.2 405.8L675.9 403.8L676.3 413.8L670.7 415.8ZM670.7 415.8L676.3 413.8L676.7 423.8L671.1 425.9ZM675.5 393.7L681.2 391.8L681.6 401.7L675.9 403.8ZM675.9 403.8L681.6 401.7L682.0 411.7L676.3 413.8ZM676.3 413.8L682.0 411.7L682.4 421.7L676.7 423.8ZM681.2 391.8L686.9 389.8L687.3 399.7L681.6 401.7ZM681.6 401.7L687.3 399.7L687.7 409.7L682.0 411.7ZM682.0 411.7L687.7 409.7L688.1 419.6L682.4 421.7ZM686.9 389.8L692.7 387.8L693.1 397.7L687.3 399.7ZM687.3 399.7L693.1 397.7L693.4 407.6L687.7 409.7ZM687.7 409.7L693.4 407.6L693.8 417.5L688.1 419.6ZM692.7 387.8L698.5 385.9L698.9 395.7L693.1 397.7ZM693.1 397.7L698.9 395.7L699.2 405.6L693.4 407.6ZM693.4 407.6L699.2 405.6L699.5 415.4L693.8 417.5ZM698.5 385.9L704.4 383.9L704.7 393.7L698.9 395.7ZM698.9 395.7L704.7 393.7L705.0 403.5L699.2 405.6ZM699.2 405.6L705.0 403.5L705.3 413.3L699.5 415.4ZM704.4 383.9L710.3 381.9L710.6 391.7L704.7 393.7ZM704.7 393.7L710.6 391.7L710.9 401.5L705.0 403.5ZM705.0 403.5L710.9 401.5L711.2 411.2L705.3 413.3ZM710.9 401.5L716.8 399.4L717.0 409.1L711.2 411.2ZM716.8 399.4L722.7 397.4L723.0 407.1L717.0 409.1Z" fill="#ff7800" stroke="#ff7800"/><path d="M356.6 578.1L360.3 575.4L360.9 590.0L357.2 592.9ZM360.3 575.4L363.9 572.7L364.6 587.2L360.9 590.0ZM363.9 572.7L367.6 570.0L368.3 584.3L364.6 587.2ZM367.6 570.0L371.3 567.3L372.0 581.4L368.3 584.3ZM370.7 553.1L374.4 550.6L375.1 564.6L371.3 567.3ZM371.3 567.3L375.1 564.6L375.7 578.6L372.0 581.4ZM374.4 550.6L378.1 548.0L378.8 561.9L375.1 564.6ZM375.1 564.6L378.8 561.9L379.5 575.8L375.7 578.6ZM378.1 548.0L381.9 545.5L382.6 559.2L378.8 561.9ZM378.8 561.9L382.6 559.2L383.3 572.9L379.5 575.8ZM381.9 545.5L385.7 543.0L386.4 556.5L382.6 559.2ZM385.7 543.0L389.6 540.5L390.3 553.9L386.4 556.5ZM388.8 527.1L392.7 524.7L393.4 537.9L389.6 540.5ZM389.6 540.5L393.4 537.9L394.1 551.2L390.3 553.9ZM392.7 524.7L396.6 522.3L397.3 535.4L393.4 537.9ZM393.4 537.9L397.3 535.4L398.0 548.5L394.1 551.2ZM396.6 522.3L400.5 520.0L401.2 532.9L397.3 535.4ZM400.5 520.0L404.4 517.6L405.1 530.4L401.2 532.9ZM404.4 517.6L408.3 515.3L409.1 528.0L405.1 530.4ZM408.3 515.3L412.3 512.9L413.1 525.5L409.1 528.0ZM412.3 512.9L416.3 510.6L417.1 523.0L413.1 525.5ZM637.6 428.3L643.1 426.2L643.6 436.5L638.2 438.6ZM642.5 415.9L648.0 413.9L648.5 424.1L643.1 426.2ZM643.1 426.2L648.5 424.1L649.0 434.3L643.6 436.5ZM648.0 413.9L653.5 411.9L654.0 422.0L648.5 424.1ZM648.5 424.1L654.0 422.0L654.5 432.2L649.0 434.3ZM653.0 401.7L658.6 399.7L659.0 409.8L653.5 411.9ZM653.5 411.9L659.0 409.8L659.5 420.0L654.0 422.0ZM654.0 422.0L659.5 420.0L660.0 430.1L654.5 432.2ZM658.6 399.7L664.2 397.7L664.6 407.8L659.0 409.8ZM659.0 409.8L664.6 407.8L665.1 417.9L659.5 420.0ZM659.5 420.0L665.1 417.9L665.5 428.0L660.0 430.1ZM664.2 397.7L669.8 395.7L670.2 405.8L664.6 407.8ZM664.6 407.8L670.2 405.8L670.7 415.8L665.1 417.9ZM669.8 395.7L675.5 393.7L675.9 403.8L670.2 405.8Z" fill="#ff4000" stroke="#ff4000"/><path d="M382.6 559.2L386.4 556.5L387.1 570.1L383.3 572.9ZM386.4 556.5L390.3 553.9L391.0 567.3L387.1 570.1ZM390.3 553.9L394.1 551.2L394.9 564.4L391.0 567.3ZM394.1 551.2L398.0 548.5L398.8 561.6L394.9 564.4ZM397.3 535.4L401.2 532.9L401.9 545.9L398.0 548.5ZM398.0 548.5L401.9 545.9L402.7 558.8L398.8 561.6ZM401.2 532.9L405.1 530.4L405.9 543.2L401.9 545.9ZM401.9 545.9L405.9 543.2L406.6 556.1L402.7 558.8ZM405.1 530.4L409.1 528.0L409.8 540.6L405.9 543.2ZM405.9 543.2L409.8 540.6L410.6 553.3L406.6 556.1ZM409.1 528.0L413.1 525.5L413.8 538.0L409.8 540.6ZM409.8 540.6L413.8 538.0L414.6 550.5L410.6 553.3ZM413.1 525.5L417.1 523.0L417.9 535.4L413.8 538.0ZM416.3 510.6L420.3 508.3L421.1 520.5L417.1 523.0ZM417.1 523.0L421.1 520.5L421.9 532.8L417.9 535.4ZM420.3 508.3L424.4 505.9L425.2 518.1L421.1 520.5ZM421.1 520.5L425.2 518.1L426.0 530.2L421.9 532.8ZM424.4 505.9L428.4 503.6L429.2 515.6L425.2 518.1ZM425.2 518.1L429.2 515.6L430.1 527.7L426.0 530.2ZM428.4 503.6L432.5 501.3L433.4 513.2L429.2 515.6ZM429.2 515.6L433.4 513.2L434.2 525.2L430.1 527.7ZM432.5 501.3L436.7 498.9L437.5 510.8L433.4 513.2ZM436.7 498.9L440.8 496.6L441.7 508.4L437.5 510.8ZM440.8 496.6L445.0 494.3L445.8 506.0L441.7 508.4ZM445.0 494.3L449.2 492.0L450.1 503.6L445.8 506.0ZM449.2 492.0L453.4 489.7L454.3 501.2L450.1 503.6ZM605.9 440.9L611.1 438.8L611.7 449.3L606.5 451.4ZM611.1 438.8L616.3 436.7L616.9 447.1L611.7 449.3ZM616.3 436.7L621.6 434.6L622.2 445.0L616.9 447.1ZM621.0 424.1L626.3 422.1L626.9 432.5L621.6 434.6ZM621.6 434.6L626.9 432.5L627.5 442.8L622.2 445.0ZM626.3 422.1L631.7 420.0L632.3 430.4L626.9 432.5ZM626.9 432.5L632.3 430.4L632.8 440.7L627.5 442.8ZM631.1 409.7L636.5 407.7L637.1 418.0L631.7 420.0ZM631.7 420.0L637.1 418.0L637.6 428.3L632.3 430.4ZM632.3 430.4L637.6 428.3L638.2 438.6L632.8 440.7ZM636.5 407.7L642.0 405.7L642.5 415.9L637.1 418.0ZM637.1 418.0L642.5 415.9L643.1 426.2L637.6 428.3ZM642.0 405.7L647.5 403.7L648.0 413.9L642.5 415.9ZM647.5 403.7L653.0 401.7L653.5 411.9L648.0 413.9Z" fill="#ff0000" stroke="#ff0000"/><path d="M413.8 538.0L417.9 535.4L418.6 547.8L414.6 550.5ZM417.9 535.4L421.9 532.8L422.7 545.1L418.6 547.8ZM421.9 532.8L426.0 530.2L426.8 542.4L422.7 545.1ZM426.0 530.2L430.1 527.7L430.9 539.7L426.8 542.4ZM430.1 527.7L434.2 525.2L435.0 537.1L430.9 539.7ZM433.4 513.2L437.5 510.8L438.3 522.6L434.2 525.2ZM434.2 525.2L438.3 522.6L439.2 534.5L435.0 537.1ZM437.5 510.8L441.7 508.4L442.5 520.1L438.3 522.6ZM438.3 522.6L442.5 520.1L443.4 531.9L439.2 534.5ZM441.7 508.4L445.8 506.0L446.7 517.6L442.5 520.1ZM442.5 520.1L446.7 517.6L447.6 529.3L443.4 531.9ZM445.8 506.0L450.1 503.6L450.9 515.2L446.7 517.6ZM446.7 517.6L450.9 515.2L451.8 526.7L447.6 529.3ZM450.1 503.6L454.3 501.2L455.2 512.7L450.9 515.2ZM450.9 515.2L455.2 512.7L456.1 524.2L451.8 526.7ZM453.4 489.7L457.7 487.4L458.6 498.8L454.3 501.2ZM454.3 501.2L458.6 498.8L459.5 510.3L455.2 512.7ZM455.2 512.7L459.5 510.3L460.4 521.7L456.1 524.2ZM457.7 487.4L462.0 485.1L462.9 496.5L458.6 498.8ZM458.6 498.8L462.9 496.5L463.8 507.8L459.5 510.3ZM459.5 510.3L463.8 507.8L464.7 519.2L460.4 521.7ZM462.0 485.1L466.3 482.8L467.2 494.1L462.9 496.5ZM462.9 496.5L467.2 494.1L468.1 505.4L463.8 507.8ZM463.8 507.8L468.1 505.4L469.1 516.7L464.7 519.2ZM466.3 482.8L470.7 480.6L471.6 491.8L467.2 494.1ZM467.2 494.1L471.6 491.8L472.5 503.0L468.1 505.4ZM470.7 480.6L475.0 478.3L476.0 489.5L471.6 491.8ZM471.6 491.8L476.0 489.5L476.9 500.7L472.5 503.0ZM475.0 478.3L479.4 476.0L480.4 487.2L476.0 489.5ZM476.0 489.5L480.4 487.2L481.3 498.3L476.9 500.7ZM479.4 476.0L483.9 473.8L484.8 484.9L480.4 487.2ZM483.9 473.8L488.3 471.5L489.3 482.6L484.8 484.9ZM488.3 471.5L492.8 469.3L493.8 480.3L489.3 482.6ZM492.8 469.3L497.3 467.0L498.3 478.0L493.8 480.3ZM497.3 467.0L501.9 464.8L502.9 475.7L498.3 478.0ZM501.9 464.8L506.5 462.6L507.4 473.5L502.9 475.7ZM506.5 462.6L511.1 460.4L512.0 471.3L507.4 473.5ZM550.7 464.5L555.6 462.3L556.4 473.1L551.5 475.3ZM555.6 462.3L560.4 460.1L561.2 470.9L556.4 473.1ZM560.4 460.1L565.4 458.0L566.1 468.7L561.2 470.9ZM565.4 458.0L570.3 455.8L571.1 466.5L566.1 468.7ZM570.3 455.8L575.3 453.7L576.0 464.4L571.1 466.5ZM574.5 443.0L579.6 440.9L580.3 451.5L575.3 453.7ZM575.3 453.7L580.3 451.5L581.0 462.2L576.0 464.4ZM579.6 440.9L584.6 438.7L585.3 449.4L580.3 451.5ZM580.3 451.5L585.3 449.4L586.1 460.0L581.0 462.2ZM584.6 438.7L589.7 436.6L590.4 447.2L585.3 449.4ZM585.3 449.4L590.4 447.2L591.1 457.9L586.1 460.0ZM589.7 436.6L594.8 434.5L595.5 445.1L590.4 447.2ZM590.4 447.2L595.5 445.1L596.2 455.7L591.1 457.9ZM594.8 434.5L600.0 432.4L600.7 443.0L595.5 445.1ZM595.5 445.1L600.7 443.0L601.3 453.5L596.2 455.7ZM599.3 421.9L604.6 419.8L605.2 430.4L600.0 432.4ZM600.0 432.4L605.2 430.4L605.9 440.9L600.7 443.0ZM600.7 443.0L605.9 440.9L606.5 451.4L601.3 453.5ZM604.6 419.8L609.8 417.8L610.4 428.3L605.2 430.4ZM605.2 430.4L610.4 428.3L611.1 438.8L605.9 440.9ZM609.8 417.8L615.1 415.8L615.7 426.2L610.4 428.3ZM610.4 428.3L615.7 426.2L616.3 436.7L611.1 438.8ZM615.1 415.8L620.4 413.7L621.0 424.1L615.7 426.2ZM615.7 426.2L621.0 424.1L621.6 434.6L616.3 436.7ZM620.4 413.7L625.7 411.7L626.3 422.1L621.0 424.1ZM625.7 411.7L631.1 409.7L631.7 420.0L626.3 422.1Z" fill="#dc0000" stroke="#dc0000"/><path d="M468.1 505.4L472.5 503.0L473.4 514.3L469.1 516.7ZM472.5 503.0L476.9 500.7L477.8 511.8L473.4 514.3ZM476.9 500.7L481.3 498.3L482.3 509.4L477.8 511.8ZM480.4 487.2L484.8 484.9L485.8 495.9L481.3 498.3ZM481.3 498.3L485.8 495.9L486.7 507.0L482.3 509.4ZM484.8 484.9L489.3 482.6L490.3 493.6L485.8 495.9ZM485.8 495.9L490.3 493.6L491.2 504.6L486.7 507.0ZM489.3 482.6L493.8 480.3L494.8 491.3L490.3 493.6ZM490.3 493.6L494.8 491.3L495.8 502.3L491.2 504.6ZM493.8 480.3L498.3 478.0L499.3 489.0L494.8 491.3ZM494.8 491.3L499.3 489.0L500.3 499.9L495.8 502.3ZM498.3 478.0L502.9 475.7L503.9 486.7L499.3 489.0ZM499.3 489.0L503.9 486.7L504.9 497.6L500.3 499.9ZM502.9 475.7L507.4 473.5L508.4 484.4L503.9 486.7ZM503.9 486.7L508.4 484.4L509.4 495.3L504.9 497.6ZM507.4 473.5L512.0 471.3L513.0 482.2L508.4 484.4ZM508.4 484.4L513.0 482.2L514.0 493.1L509.4 495.3ZM511.1 460.4L515.7 458.1L516.7 469.0L512.0 471.3ZM512.0 471.3L516.7 469.0L517.6 479.9L513.0 482.2ZM513.0 482.2L517.6 479.9L518.6 490.8L514.0 493.1ZM515.7 458.1L520.4 455.9L521.3 466.8L516.7 469.0ZM516.7 469.0L521.3 466.8L522.2 477.7L517.6 479.9ZM517.6 479.9L522.2 477.7L523.2 488.6L518.6 490.8ZM520.4 455.9L525.1 453.8L526.0 464.6L521.3 466.8ZM521.3 466.8L526.0 464.6L526.9 475.5L522.2 477.7ZM522.2 477.7L526.9 475.5L527.8 486.3L523.2 488.6ZM525.1 453.8L529.8 451.6L530.7 462.4L526.0 464.6ZM526.0 464.6L530.7 462.4L531.6 473.3L526.9 475.5ZM526.9 475.5L531.6 473.3L532.5 484.1L527.8 486.3ZM529.8 451.6L534.6 449.4L535.5 460.2L530.7 462.4ZM530.7 462.4L535.5 460.2L536.3 471.1L531.6 473.3ZM531.6 473.3L536.3 471.1L537.2 481.9L532.5 484.1ZM534.6 449.4L539.4 447.2L540.2 458.0L535.5 460.2ZM535.5 460.2L540.2 458.0L541.1 468.9L536.3 471.1ZM536.3 471.1L541.1 468.9L542.0 479.7L537.2 481.9ZM539.4 447.2L544.2 445.1L545.0 455.9L540.2 458.0ZM540.2 458.0L545.0 455.9L545.9 466.7L541.1 468.9ZM541.1 468.9L545.9 466.7L546.7 477.5L542.0 479.7ZM544.2 445.1L549.0 442.9L549.9 453.7L545.0 455.9ZM545.0 455.9L549.9 453.7L550.7 464.5L545.9 466.7ZM545.9 466.7L550.7 464.5L551.5 475.3L546.7 477.5ZM549.0 442.9L553.9 440.8L554.7 451.5L549.9 453.7ZM549.9 453.7L554.7 451.5L555.6 462.3L550.7 464.5ZM553.9 440.8L558.8 438.6L559.6 449.4L554.7 451.5ZM554.7 451.5L559.6 449.4L560.4 460.1L555.6 462.3ZM558.8 438.6L563.8 436.5L564.6 447.2L559.6 449.4ZM559.6 449.4L564.6 447.2L565.4 458.0L560.4 460.1ZM563.8 436.5L568.8 434.4L569.5 445.1L564.6 447.2ZM564.6 447.2L569.5 445.1L570.3 455.8L565.4 458.0ZM568.8 434.4L573.8 432.3L574.5 443.0L569.5 445.1ZM569.5 445.1L574.5 443.0L575.3 453.7L570.3 455.8ZM573.8 432.3L578.8 430.2L579.6 440.9L574.5 443.0ZM578.8 430.2L583.9 428.1L584.6 438.7L579.6 440.9ZM583.9 428.1L589.0 426.0L589.7 436.6L584.6 438.7ZM589.0 426.0L594.2 424.0L594.8 434.5L589.7 436.6ZM594.2 424.0L599.3 421.9L600.0 432.4L594.8 434.5Z" fill="#b40000" stroke="#b40000"/><path d="M972.7 296.0L980.3 293.4L977.3 304.4L969.7 306.9ZM969.7 306.9L977.3 304.4L974.3 315.4L966.8 317.8ZM980.3 293.4L988.0 290.8L984.9 301.8L977.3 304.4ZM977.3 304.4L984.9 301.8L981.8 312.9L974.3 315.4ZM974.3 315.4L981.8 312.9L978.6 324.0L971.2 326.4ZM988.0 290.8L995.7 288.1L992.5 299.3L984.9 301.8ZM984.9 301.8L992.5 299.3L989.3 310.4L981.8 312.9ZM981.8 312.9L989.3 310.4L986.1 321.6L978.6 324.0ZM995.7 288.1L1003.5 285.5L1000.2 296.7L992.5 299.3ZM992.5 299.3L1000.2 296.7L996.9 307.9L989.3 310.4ZM989.3 310.4L996.9 307.9L993.6 319.1L986.1 321.6ZM1000.2 296.7L1008.0 294.2L1004.6 305.4L996.9 307.9ZM996.9 307.9L1004.6 305.4L1001.2 316.7L993.6 319.1ZM1008.0 294.2L1015.8 291.6L1012.3 302.9L1004.6 305.4ZM1004.6 305.4L1012.3 302.9L1008.8 314.2L1001.2 316.7ZM1015.8 291.6L1023.6 289.1L1020.0 300.4L1012.3 302.9ZM1012.3 302.9L1020.0 300.4L1016.5 311.6L1008.8 314.2ZM1023.6 289.1L1031.5 286.5L1027.8 297.8L1020.0 300.4ZM1020.0 300.4L1027.8 297.8L1024.2 309.1L1016.5 311.6ZM1055.1 279.1L1063.0 276.6L1059.0 287.7L1051.2 290.2ZM1067.1 265.6L1075.0 263.4L1070.9 274.3L1063.0 276.6ZM1063.0 276.6L1070.9 274.3L1066.8 285.1L1059.0 287.7ZM1075.0 263.4L1083.0 261.2L1078.8 271.9L1070.9 274.3ZM1070.9 274.3L1078.8 271.9L1074.5 282.6L1066.8 285.1ZM1083.0 261.2L1091.0 259.0L1086.7 269.6L1078.8 271.9ZM1078.8 271.9L1086.7 269.6L1082.3 280.1L1074.5 282.6Z" fill="#0000f8" stroke="#0000f8"/><path d="M1003.5 285.5L1011.4 283.0L1008.0 294.2L1000.2 296.7ZM1011.4 283.0L1019.3 280.4L1015.8 291.6L1008.0 294.2ZM1019.3 280.4L1027.2 277.8L1023.6 289.1L1015.8 291.6ZM1027.2 277.8L1035.2 275.3L1031.5 286.5L1023.6 289.1ZM1035.2 275.3L1043.1 272.8L1039.4 284.0L1031.5 286.5ZM1031.5 286.5L1039.4 284.0L1035.6 295.3L1027.8 297.8ZM1027.8 297.8L1035.6 295.3L1031.8 306.5L1024.2 309.1ZM1043.1 272.8L1051.1 270.4L1047.3 281.5L1039.4 284.0ZM1039.4 284.0L1047.3 281.5L1043.4 292.7L1035.6 295.3ZM1035.6 295.3L1043.4 292.7L1039.5 303.9L1031.8 306.5ZM1051.1 270.4L1059.1 268.0L1055.1 279.1L1047.3 281.5ZM1047.3 281.5L1055.1 279.1L1051.2 290.2L1043.4 292.7ZM1043.4 292.7L1051.2 290.2L1047.2 301.3L1039.5 303.9ZM1059.1 268.0L1067.1 265.6L1063.0 276.6L1055.1 279.1ZM1051.2 290.2L1059.0 287.7L1054.9 298.7L1047.2 301.3ZM1059.0 287.7L1066.8 285.1L1062.6 296.0L1054.9 298.7ZM1066.8 285.1L1074.5 282.6L1070.3 293.3L1062.6 296.0ZM1074.5 282.6L1082.3 280.1L1078.0 290.7L1070.3 293.3Z" fill="#4040e8" stroke="#4040e8"/><path d="M239.0 655.4 L242.4 650.7 L245.8 646.2 L249.2 641.8 L252.6 637.6 L255.9 633.4 L259.3 629.4 L262.7 625.5 L266.1 621.7 L269.5 618.0 L272.9 614.4 L276.3 610.9 L279.7 607.5 L283.1 604.2 L286.5 600.9 L289.8 597.8 L293.2 594.7 L296.6 591.7 L300.0 588.8 L303.4 586.0 L306.8 583.2 L310.2 580.5 L313.6 577.8 L317.0 575.2 L320.4 572.7 L323.8 570.2 L327.2 567.7 L330.6 565.2 L334.1 562.8 L337.6 560.4 L341.1 558.0 L344.6 555.6 L348.2 553.2 L351.7 550.8 L355.3 548.4 L359.0 546.0 L362.6 543.7 L366.3 541.3 L370.0 538.9 L373.7 536.5 L377.5 534.2 L381.2 531.8 L385.0 529.4 L388.8 527.1 L392.7 524.7 L396.6 522.3 L400.5 520.0 L404.4 517.6 L408.3 515.3 L412.3 512.9 L416.3 510.6 L420.3 508.3 L424.4 505.9 L428.4 503.6 L432.5 501.3 L436.7 498.9 L440.8 496.6 L445.0 494.3 L449.2 492.0 L453.4 489.7 L457.7 487.4 L462.0 485.1 L466.3 482.8 L470.7 480.6 L475.0 478.3 L479.4 476.0 L483.9 473.8 L488.3 471.5 L492.8 469.3 L497.3 467.0 L501.9 464.8 L506.5 462.6 L511.1 460.4 L515.7 458.1 L520.4 455.9 L525.1 453.8 L529.8 451.6 L534.6 449.4 L539.4 447.2 L544.2 445.1 L549.0 442.9 L553.9 440.8 L558.8 438.6 L563.8 436.5 L568.8 434.4 L573.8 432.3 L578.8 430.2 L583.9 428.1 L589.0 426.0 L594.2 424.0 L599.3 421.9 L604.6 419.8 L609.8 417.8 L615.1 415.8 L620.4 413.7 L625.7 411.7 L631.1 409.7 L636.5 407.7 L642.0 405.7 L647.5 403.7 L653.0 401.7 L658.6 399.7 L664.2 397.7 L669.8 395.7 L675.5 393.7 L681.2 391.8 L686.9 389.8 L692.7 387.8 L698.5 385.9 L704.4 383.9 L710.3 381.9 L716.2 380.0 L722.2 378.0 L728.2 376.0 L734.2 374.1 L740.3 372.1 L746.5 370.1 L752.6 368.1 L758.8 366.1 L765.1 364.1 L771.4 362.1 L777.7 360.1 L784.1 358.1 L790.5 356.1 L796.9 354.0 L803.4 352.0 L810.0 349.9 L816.6 347.8 L823.2 345.7 L829.8 343.6 L836.6 341.5 L843.3 339.3 L850.1 337.2 L856.9 335.0 L863.8 332.7 L870.8 330.5 L877.7 328.2 L884.8 325.9 L891.8 323.6 L898.9 321.2 L906.1 318.8 L913.3 316.4 L920.6 313.9 L927.9 311.4 L935.2 308.9 L942.6 306.3 L950.0 303.8 L957.5 301.2 L965.1 298.6 L972.7 296.0 L980.3 293.4 L988.0 290.8 L995.7 288.1 L1003.5 285.5 L1011.4 283.0 L1019.3 280.4 L1027.2 277.8 L1035.2 275.3 L1043.1 272.8 L1051.1 270.4 L1059.1 268.0 L1067.1 265.6 L1075.0 263.4 L1083.0 261.2 L1091.0 259.0 L1078.0 290.7 L1070.3 293.3 L1062.6 296.0 L1054.9 298.7 L1047.2 301.3 L1039.5 303.9 L1031.8 306.5 L1024.2 309.1 L1016.5 311.6 L1008.8 314.2 L1001.2 316.7 L993.6 319.1 L986.1 321.6 L978.6 324.0 L971.2 326.4 L963.9 328.7 L956.5 331.1 L949.3 333.4 L942.0 335.7 L935.0 337.9 L928.0 340.2 L921.0 342.4 L914.1 344.5 L907.3 346.7 L900.4 348.9 L893.7 351.0 L886.9 353.1 L880.2 355.3 L873.6 357.4 L867.0 359.4 L860.4 361.5 L853.9 363.6 L847.4 365.7 L841.0 367.7 L834.6 369.8 L828.3 371.8 L821.9 373.8 L815.7 375.9 L809.4 377.9 L803.3 379.9 L797.0 382.0 L790.6 384.1 L784.2 386.2 L777.9 388.3 L771.7 390.4 L765.4 392.4 L759.2 394.5 L753.1 396.6 L747.0 398.7 L740.9 400.8 L734.9 402.9 L728.9 405.0 L723.0 407.1 L717.0 409.1 L711.2 411.2 L705.3 413.3 L699.5 415.4 L693.8 417.5 L688.1 419.6 L682.4 421.7 L676.7 423.8 L671.1 425.9 L665.5 428.0 L660.0 430.1 L654.5 432.2 L649.0 434.3 L643.6 436.5 L638.2 438.6 L632.8 440.7 L627.5 442.8 L622.2 445.0 L616.9 447.1 L611.7 449.3 L606.5 451.4 L601.3 453.5 L596.2 455.7 L591.1 457.9 L586.1 460.0 L581.0 462.2 L576.0 464.4 L571.1 466.5 L566.1 468.7 L561.2 470.9 L556.4 473.1 L551.5 475.3 L546.7 477.5 L542.0 479.7 L537.2 481.9 L532.5 484.1 L527.8 486.3 L523.2 488.6 L518.6 490.8 L514.0 493.1 L509.4 495.3 L504.9 497.6 L500.3 499.9 L495.8 502.3 L491.2 504.6 L486.7 507.0 L482.3 509.4 L477.8 511.8 L473.4 514.3 L469.1 516.7 L464.7 519.2 L460.4 521.7 L456.1 524.2 L451.8 526.7 L447.6 529.3 L443.4 531.9 L439.2 534.5 L435.0 537.1 L430.9 539.7 L426.8 542.4 L422.7 545.1 L418.6 547.8 L414.6 550.5 L410.6 553.3 L406.6 556.1 L402.7 558.8 L398.8 561.6 L394.9 564.4 L391.0 567.3 L387.1 570.1 L383.3 572.9 L379.5 575.8 L375.7 578.6 L372.0 581.4 L368.3 584.3 L364.6 587.2 L360.9 590.0 L357.2 592.9 L353.6 595.7 L350.0 598.6 L346.4 601.4 L342.9 604.3 L339.3 607.1 L335.8 610.0 L332.3 612.8 L328.8 615.6 L325.4 618.4 L322.0 621.2 L318.6 624.0 L315.1 626.8 L311.7 629.6 L308.3 632.4 L304.9 635.2 L301.5 638.0 L298.1 640.8 L294.7 643.6 L291.2 646.4 L287.8 649.1 L284.4 651.9 L281.0 654.7 L277.6 657.5 L274.2 660.2 L270.7 662.9 L267.3 665.7 L263.9 668.4 L260.5 671.2 L257.1 673.9 L253.7 676.7 L250.2 679.4 L246.8 682.1 L243.4 684.9 L240.0 687.6Z M242.4 650.7 L243.4 684.9 M245.8 646.2 L246.8 682.1 M249.2 641.8 L250.2 679.4 M252.6 637.6 L253.7 676.7 M255.9 633.4 L257.1 673.9 M259.3 629.4 L260.5 671.2 M262.7 625.5 L263.9 668.4 M266.1 621.7 L267.3 665.7 M269.5 618.0 L270.7 662.9 M272.9 614.4 L274.2 660.2 M276.3 610.9 L277.6 657.5 M279.7 607.5 L281.0 654.7 M283.1 604.2 L284.4 651.9 M286.5 600.9 L287.8 649.1 M289.8 597.8 L291.2 646.4 M293.2 594.7 L294.7 643.6 M296.6 591.7 L298.1 640.8 M300.0 588.8 L301.5 638.0 M303.4 586.0 L304.9 635.2 M306.8 583.2 L308.3 632.4 M310.2 580.5 L311.7 629.6 M313.6 577.8 L315.1 626.8 M317.0 575.2 L318.6 624.0 M320.4 572.7 L322.0 621.2 M323.8 570.2 L325.4 618.4 M327.2 567.7 L328.8 615.6 M330.6 565.2 L332.3 612.8 M334.1 562.8 L335.8 610.0 M337.6 560.4 L339.3 607.1 M341.1 558.0 L342.9 604.3 M344.6 555.6 L346.4 601.4 M348.2 553.2 L350.0 598.6 M351.7 550.8 L353.6 595.7 M355.3 548.4 L357.2 592.9 M359.0 546.0 L360.9 590.0 M362.6 543.7 L364.6 587.2 M366.3 541.3 L368.3 584.3 M370.0 538.9 L372.0 581.4 M373.7 536.5 L375.7 578.6 M377.5 534.2 L379.5 575.8 M381.2 531.8 L383.3 572.9 M385.0 529.4 L387.1 570.1 M388.8 527.1 L391.0 567.3 M392.7 524.7 L394.9 564.4 M396.6 522.3 L398.8 561.6 M400.5 520.0 L402.7 558.8 M404.4 517.6 L406.6 556.1 M408.3 515.3 L410.6 553.3 M412.3 512.9 L414.6 550.5 M416.3 510.6 L418.6 547.8 M420.3 508.3 L422.7 545.1 M424.4 505.9 L426.8 542.4 M428.4 503.6 L430.9 539.7 M432.5 501.3 L435.0 537.1 M436.7 498.9 L439.2 534.5 M440.8 496.6 L443.4 531.9 M445.0 494.3 L447.6 529.3 M449.2 492.0 L451.8 526.7 M453.4 489.7 L456.1 524.2 M457.7 487.4 L460.4 521.7 M462.0 485.1 L464.7 519.2 M466.3 482.8 L469.1 516.7 M470.7 480.6 L473.4 514.3 M475.0 478.3 L477.8 511.8 M479.4 476.0 L482.3 509.4 M483.9 473.8 L486.7 507.0 M488.3 471.5 L491.2 504.6 M492.8 469.3 L495.8 502.3 M497.3 467.0 L500.3 499.9 M501.9 464.8 L504.9 497.6 M506.5 462.6 L509.4 495.3 M511.1 460.4 L514.0 493.1 M515.7 458.1 L518.6 490.8 M520.4 455.9 L523.2 488.6 M525.1 453.8 L527.8 486.3 M529.8 451.6 L532.5 484.1 M534.6 449.4 L537.2 481.9 M539.4 447.2 L542.0 479.7 M544.2 445.1 L546.7 477.5 M549.0 442.9 L551.5 475.3 M553.9 440.8 L556.4 473.1 M558.8 438.6 L561.2 470.9 M563.8 436.5 L566.1 468.7 M568.8 434.4 L571.1 466.5 M573.8 432.3 L576.0 464.4 M578.8 430.2 L581.0 462.2 M583.9 428.1 L586.1 460.0 M589.0 426.0 L591.1 457.9 M594.2 424.0 L596.2 455.7 M599.3 421.9 L601.3 453.5 M604.6 419.8 L606.5 451.4 M609.8 417.8 L611.7 449.3 M615.1 415.8 L616.9 447.1 M620.4 413.7 L622.2 445.0 M625.7 411.7 L627.5 442.8 M631.1 409.7 L632.8 440.7 M636.5 407.7 L638.2 438.6 M642.0 405.7 L643.6 436.5 M647.5 403.7 L649.0 434.3 M653.0 401.7 L654.5 432.2 M658.6 399.7 L660.0 430.1 M664.2 397.7 L665.5 428.0 M669.8 395.7 L671.1 425.9 M675.5 393.7 L676.7 423.8 M681.2 391.8 L682.4 421.7 M686.9 389.8 L688.1 419.6 M692.7 387.8 L693.8 417.5 M698.5 385.9 L699.5 415.4 M704.4 383.9 L705.3 413.3 M710.3 381.9 L711.2 411.2 M716.2 380.0 L717.0 409.1 M722.2 378.0 L723.0 407.1 M728.2 376.0 L728.9 405.0 M734.2 374.1 L734.9 402.9 M740.3 372.1 L740.9 400.8 M746.5 370.1 L747.0 398.7 M752.6 368.1 L753.1 396.6 M758.8 366.1 L759.2 394.5 M765.1 364.1 L765.4 392.4 M771.4 362.1 L771.7 390.4 M777.7 360.1 L777.9 388.3 M784.1 358.1 L784.2 386.2 M790.5 356.1 L790.6 384.1 M796.9 354.0 L797.0 382.0 M803.4 352.0 L803.3 379.9 M810.0 349.9 L809.4 377.9 M816.6 347.8 L815.7 375.9 M823.2 345.7 L821.9 373.8 M829.8 343.6 L828.3 371.8 M836.6 341.5 L834.6 369.8 M843.3 339.3 L841.0 367.7 M850.1 337.2 L847.4 365.7 M856.9 335.0 L853.9 363.6 M863.8 332.7 L860.4 361.5 M870.8 330.5 L867.0 359.4 M877.7 328.2 L873.6 357.4 M884.8 325.9 L880.2 355.3 M891.8 323.6 L886.9 353.1 M898.9 321.2 L893.7 351.0 M906.1 318.8 L900.4 348.9 M913.3 316.4 L907.3 346.7 M920.6 313.9 L914.1 344.5 M927.9 311.4 L921.0 342.4 M935.2 308.9 L928.0 340.2 M942.6 306.3 L935.0 337.9 M950.0 303.8 L942.0 335.7 M957.5 301.2 L949.3 333.4 M965.1 298.6 L956.5 331.1 M972.7 296.0 L963.9 328.7 M980.3 293.4 L971.2 326.4 M988.0 290.8 L978.6 324.0 M995.7 288.1 L986.1 321.6 M1003.5 285.5 L993.6 319.1 M1011.4 283.0 L1001.2 316.7 M1019.3 280.4 L1008.8 314.2 M1027.2 277.8 L1016.5 311.6 M1035.2 275.3 L1024.2 309.1 M1043.1 272.8 L1031.8 306.5 M1051.1 270.4 L1039.5 303.9 M1059.1 268.0 L1047.2 301.3 M1067.1 265.6 L1054.9 298.7 M1075.0 263.4 L1062.6 296.0 M1083.0 261.2 L1070.3 293.3 M239.3 666.1 L242.7 662.1 L246.1 658.2 L249.5 654.3 L252.9 650.6 L256.3 646.9 L259.7 643.3 L263.1 639.8 L266.5 636.3 L269.9 633.0 L273.3 629.7 L276.7 626.4 L280.1 623.2 L283.5 620.1 L286.9 617.0 L290.3 614.0 L293.7 611.0 L297.1 608.1 L300.5 605.2 L303.9 602.4 L307.3 599.6 L310.7 596.9 L314.1 594.2 L317.5 591.5 L320.9 588.9 L324.3 586.3 L327.7 583.7 L331.2 581.1 L334.7 578.5 L338.2 576.0 L341.7 573.4 L345.2 570.9 L348.8 568.3 L352.4 565.8 L356.0 563.2 L359.6 560.7 L363.3 558.2 L367.0 555.6 L370.7 553.1 L374.4 550.6 L378.1 548.0 L381.9 545.5 L385.7 543.0 L389.6 540.5 L393.4 537.9 L397.3 535.4 L401.2 532.9 L405.1 530.4 L409.1 528.0 L413.1 525.5 L417.1 523.0 L421.1 520.5 L425.2 518.1 L429.2 515.6 L433.4 513.2 L437.5 510.8 L441.7 508.4 L445.8 506.0 L450.1 503.6 L454.3 501.2 L458.6 498.8 L462.9 496.5 L467.2 494.1 L471.6 491.8 L476.0 489.5 L480.4 487.2 L484.8 484.9 L489.3 482.6 L493.8 480.3 L498.3 478.0 L502.9 475.7 L507.4 473.5 L512.0 471.3 L516.7 469.0 L521.3 466.8 L526.0 464.6 L530.7 462.4 L535.5 460.2 L540.2 458.0 L545.0 455.9 L549.9 453.7 L554.7 451.5 L559.6 449.4 L564.6 447.2 L569.5 445.1 L574.5 443.0 L579.6 440.9 L584.6 438.7 L589.7 436.6 L594.8 434.5 L600.0 432.4 L605.2 430.4 L610.4 428.3 L615.7 426.2 L621.0 424.1 L626.3 422.1 L631.7 420.0 L637.1 418.0 L642.5 415.9 L648.0 413.9 L653.5 411.9 L659.0 409.8 L664.6 407.8 L670.2 405.8 L675.9 403.8 L681.6 401.7 L687.3 399.7 L693.1 397.7 L698.9 395.7 L704.7 393.7 L710.6 391.7 L716.5 389.7 L722.4 387.7 L728.4 385.7 L734.5 383.7 L740.5 381.7 L746.6 379.6 L752.8 377.6 L759.0 375.6 L765.2 373.6 L771.5 371.5 L777.8 369.5 L784.1 367.5 L790.5 365.4 L796.9 363.4 L803.4 361.3 L809.8 359.2 L816.3 357.2 L822.8 355.1 L829.3 353.0 L835.9 350.9 L842.5 348.8 L849.2 346.7 L855.9 344.5 L862.7 342.3 L869.5 340.1 L876.4 337.9 L883.3 335.7 L890.2 333.4 L897.2 331.1 L904.2 328.8 L911.3 326.5 L918.4 324.1 L925.6 321.7 L932.8 319.3 L940.1 316.9 L947.4 314.4 L954.8 311.9 L962.2 309.4 L969.7 306.9 L977.3 304.4 L984.9 301.8 L992.5 299.3 L1000.2 296.7 L1008.0 294.2 L1015.8 291.6 L1023.6 289.1 L1031.5 286.5 L1039.4 284.0 L1047.3 281.5 L1055.1 279.1 L1063.0 276.6 L1070.9 274.3 L1078.8 271.9 L1086.7 269.6 M239.7 676.9 L243.1 673.5 L246.5 670.2 L249.9 666.9 L253.3 663.6 L256.7 660.4 L260.1 657.2 L263.5 654.1 L266.9 651.0 L270.3 648.0 L273.7 644.9 L277.1 641.9 L280.6 639.0 L284.0 636.0 L287.4 633.1 L290.8 630.2 L294.2 627.3 L297.6 624.4 L301.0 621.6 L304.4 618.8 L307.8 616.0 L311.2 613.2 L314.6 610.5 L318.0 607.7 L321.4 605.0 L324.9 602.3 L328.3 599.6 L331.7 596.9 L335.2 594.2 L338.7 591.5 L342.3 588.8 L345.8 586.1 L349.4 583.4 L353.0 580.8 L356.6 578.1 L360.3 575.4 L363.9 572.7 L367.6 570.0 L371.3 567.3 L375.1 564.6 L378.8 561.9 L382.6 559.2 L386.4 556.5 L390.3 553.9 L394.1 551.2 L398.0 548.5 L401.9 545.9 L405.9 543.2 L409.8 540.6 L413.8 538.0 L417.9 535.4 L421.9 532.8 L426.0 530.2 L430.1 527.7 L434.2 525.2 L438.3 522.6 L442.5 520.1 L446.7 517.6 L450.9 515.2 L455.2 512.7 L459.5 510.3 L463.8 507.8 L468.1 505.4 L472.5 503.0 L476.9 500.7 L481.3 498.3 L485.8 495.9 L490.3 493.6 L494.8 491.3 L499.3 489.0 L503.9 486.7 L508.4 484.4 L513.0 482.2 L517.6 479.9 L522.2 477.7 L526.9 475.5 L531.6 473.3 L536.3 471.1 L541.1 468.9 L545.9 466.7 L550.7 464.5 L555.6 462.3 L560.4 460.1 L565.4 458.0 L570.3 455.8 L575.3 453.7 L580.3 451.5 L585.3 449.4 L590.4 447.2 L595.5 445.1 L600.7 443.0 L605.9 440.9 L611.1 438.8 L616.3 436.7 L621.6 434.6 L626.9 432.5 L632.3 430.4 L637.6 428.3 L643.1 426.2 L648.5 424.1 L654.0 422.0 L659.5 420.0 L665.1 417.9 L670.7 415.8 L676.3 413.8 L682.0 411.7 L687.7 409.7 L693.4 407.6 L699.2 405.6 L705.0 403.5 L710.9 401.5 L716.8 399.4 L722.7 397.4 L728.7 395.3 L734.7 393.3 L740.7 391.2 L746.8 389.2 L752.9 387.1 L759.1 385.1 L765.3 383.0 L771.6 381.0 L777.8 378.9 L784.2 376.8 L790.5 374.7 L797.0 372.7 L803.3 370.6 L809.6 368.6 L816.0 366.5 L822.4 364.5 L828.8 362.4 L835.3 360.3 L841.8 358.3 L848.3 356.2 L854.9 354.1 L861.6 351.9 L868.3 349.8 L875.0 347.6 L881.8 345.5 L888.6 343.3 L895.4 341.1 L902.3 338.8 L909.3 336.6 L916.3 334.3 L923.3 332.0 L930.4 329.7 L937.5 327.4 L944.7 325.1 L952.0 322.7 L959.4 320.2 L966.8 317.8 L974.3 315.4 L981.8 312.9 L989.3 310.4 L996.9 307.9 L1004.6 305.4 L1012.3 302.9 L1020.0 300.4 L1027.8 297.8 L1035.6 295.3 L1043.4 292.7 L1051.2 290.2 L1059.0 287.7 L1066.8 285.1 L1074.5 282.6 L1082.3 280.1" fill="none" stroke="#000" stroke-width="0.8"/><path d="M220.0 644.8L223.4 641.5L232.9 646.1L229.5 650.1ZM223.4 641.5L226.8 638.3L236.3 642.2L232.9 646.1ZM1001.7 279.0L1009.5 276.3L1019.4 280.3L1011.7 282.9ZM1009.5 276.3L1017.3 273.5L1027.3 277.8L1019.4 280.3ZM1007.3 269.3L1015.2 266.4L1025.2 270.8L1017.3 273.5ZM1017.3 273.5L1025.2 270.8L1035.1 275.3L1027.3 277.8ZM1015.2 266.4L1023.1 263.4L1033.1 268.1L1025.2 270.8ZM1025.2 270.8L1033.1 268.1L1043.1 272.8L1035.1 275.3ZM1023.1 263.4L1031.1 260.3L1041.1 265.3L1033.1 268.1ZM1033.1 268.1L1041.1 265.3L1051.0 270.4L1043.1 272.8ZM1031.1 260.3L1039.1 257.2L1049.1 262.6L1041.1 265.3ZM1041.1 265.3L1049.1 262.6L1059.0 268.0L1051.0 270.4ZM1039.1 257.2L1047.1 254.1L1057.0 259.9L1049.1 262.6ZM1049.1 262.6L1057.0 259.9L1067.0 265.7L1059.0 268.0ZM1047.1 254.1L1055.0 251.0L1065.0 257.2L1057.0 259.9ZM1057.0 259.9L1065.0 257.2L1075.0 263.4L1067.0 265.7ZM1055.0 251.0L1063.0 247.8L1073.0 254.5L1065.0 257.2ZM1065.0 257.2L1073.0 254.5L1083.0 261.2L1075.0 263.4ZM1063.0 247.8L1071.0 244.6L1081.0 251.8L1073.0 254.5ZM1073.0 254.5L1081.0 251.8L1091.0 259.0L1083.0 261.2Z" fill="#4040e8" stroke="#4040e8"/><path d="M229.5 650.1L232.9 646.1L242.4 650.7L239.0 655.4ZM232.9 646.1L236.3 642.2L245.8 646.2L242.4 650.7ZM226.8 638.3L230.2 635.1L239.7 638.4L236.3 642.2ZM236.3 642.2L239.7 638.4L249.2 641.8L245.8 646.2ZM230.2 635.1L233.6 631.9L243.1 634.7L239.7 638.4ZM233.6 631.9L237.0 628.7L246.5 631.1L243.1 634.7ZM237.0 628.7L240.4 625.6L249.9 627.5L246.5 631.1ZM978.7 287.0L986.3 284.3L996.3 288.0L988.6 290.5ZM976.4 280.7L984.0 277.9L994.0 281.7L986.3 284.3ZM986.3 284.3L994.0 281.7L1003.9 285.4L996.3 288.0ZM984.0 277.9L991.8 275.1L1001.7 279.0L994.0 281.7ZM994.0 281.7L1001.7 279.0L1011.7 282.9L1003.9 285.4ZM991.8 275.1L999.5 272.2L1009.5 276.3L1001.7 279.0ZM999.5 272.2L1007.3 269.3L1017.3 273.5L1009.5 276.3Z" fill="#0000f8" stroke="#0000f8"/><path d="M239.7 638.4L243.1 634.7L252.6 637.5L249.2 641.8ZM243.1 634.7L246.5 631.1L256.0 633.4L252.6 637.5ZM246.5 631.1L249.9 627.5L259.4 629.3L256.0 633.4ZM240.4 625.6L243.7 622.5L253.3 624.0L249.9 627.5ZM249.9 627.5L253.3 624.0L262.8 625.4L259.4 629.3ZM243.7 622.5L247.1 619.5L256.7 620.5L253.3 624.0ZM247.1 619.5L250.5 616.4L260.1 617.2L256.7 620.5ZM250.5 616.4L253.9 613.4L263.4 613.9L260.1 617.2ZM963.6 292.2L971.1 289.6L981.1 293.1L973.5 295.7ZM961.2 286.1L968.8 283.4L978.7 287.0L971.1 289.6ZM971.1 289.6L978.7 287.0L988.6 290.5L981.1 293.1ZM968.8 283.4L976.4 280.7L986.3 284.3L978.7 287.0Z" fill="#0068ff" stroke="#0068ff"/><path d="M253.3 624.0L256.7 620.5L266.2 621.6L262.8 625.4ZM256.7 620.5L260.1 617.2L269.6 617.9L266.2 621.6ZM260.1 617.2L263.4 613.9L273.0 614.3L269.6 617.9ZM253.9 613.4L257.3 610.5L266.8 610.6L263.4 613.9ZM257.3 610.5L260.7 607.5L270.2 607.5L266.8 610.6ZM260.7 607.5L264.1 604.6L273.6 604.3L270.2 607.5ZM941.3 300.0L948.7 297.4L958.6 300.8L951.2 303.3ZM938.8 294.1L946.2 291.4L956.1 294.8L948.7 297.4ZM948.7 297.4L956.1 294.8L966.1 298.2L958.6 300.8ZM946.2 291.4L953.7 288.8L963.6 292.2L956.1 294.8ZM956.1 294.8L963.6 292.2L973.5 295.7L966.1 298.2ZM953.7 288.8L961.2 286.1L971.1 289.6L963.6 292.2Z" fill="#00c0f8" stroke="#00c0f8"/><path d="M263.4 613.9L266.8 610.6L276.4 610.8L273.0 614.3ZM266.8 610.6L270.2 607.5L279.8 607.4L276.4 610.8ZM270.2 607.5L273.6 604.3L283.2 604.1L279.8 607.4ZM264.1 604.6L267.5 601.7L277.0 601.3L273.6 604.3ZM267.5 601.7L270.9 598.9L280.4 598.3L277.0 601.3ZM270.9 598.9L274.3 596.0L283.8 595.3L280.4 598.3ZM912.3 310.0L919.5 307.5L929.4 310.9L922.2 313.3ZM919.5 307.5L926.7 305.0L936.6 308.4L929.4 310.9ZM916.8 301.7L924.1 299.2L934.0 302.5L926.7 305.0ZM926.7 305.0L934.0 302.5L943.9 305.9L936.6 308.4ZM924.1 299.2L931.4 296.6L941.3 300.0L934.0 302.5ZM934.0 302.5L941.3 300.0L951.2 303.3L943.9 305.9ZM931.4 296.6L938.8 294.1L948.7 297.4L941.3 300.0Z" fill="#00e8d8" stroke="#00e8d8"/><path d="M273.6 604.3L277.0 601.3L286.6 600.8L283.2 604.1ZM277.0 601.3L280.4 598.3L289.9 597.7L286.6 600.8ZM280.4 598.3L283.8 595.3L293.3 594.6L289.9 597.7ZM274.3 596.0L277.7 593.2L287.2 592.4L283.8 595.3ZM277.7 593.2L281.1 590.5L290.6 589.6L287.2 592.4ZM281.1 590.5L284.5 587.7L294.0 586.8L290.6 589.6ZM898.1 314.8L905.1 312.4L915.0 315.8L907.9 318.2ZM895.3 309.1L902.4 306.6L912.3 310.0L905.1 312.4ZM905.1 312.4L912.3 310.0L922.2 313.3L915.0 315.8ZM902.4 306.6L909.6 304.2L919.5 307.5L912.3 310.0ZM909.6 304.2L916.8 301.7L926.7 305.0L919.5 307.5Z" fill="#10b088" stroke="#10b088"/><path d="M283.8 595.3L287.2 592.4L296.7 591.6L293.3 594.6ZM287.2 592.4L290.6 589.6L300.1 588.7L296.7 591.6ZM284.5 587.7L287.8 585.0L297.4 584.0L294.0 586.8ZM287.8 585.0L291.2 582.3L300.8 581.3L297.4 584.0ZM877.0 321.9L884.0 319.6L893.9 322.9L886.9 325.2ZM884.0 319.6L891.0 317.2L900.9 320.5L893.9 322.9ZM881.1 313.9L888.2 311.5L898.1 314.8L891.0 317.2ZM891.0 317.2L898.1 314.8L907.9 318.2L900.9 320.5ZM888.2 311.5L895.3 309.1L905.1 312.4L898.1 314.8Z" fill="#087a30" stroke="#087a30"/><path d="M290.6 589.6L294.0 586.8L303.5 585.9L300.1 588.7ZM294.0 586.8L297.4 584.0L306.9 583.1L303.5 585.9ZM297.4 584.0L300.8 581.3L310.3 580.4L306.9 583.1ZM291.2 582.3L294.6 579.6L304.2 578.7L300.8 581.3ZM294.6 579.6L298.0 577.0L307.6 576.1L304.2 578.7ZM298.0 577.0L301.4 574.4L311.0 573.5L307.6 576.1ZM849.6 331.0L856.4 328.8L866.3 331.9L859.5 334.1ZM856.4 328.8L863.3 326.5L873.1 329.7L866.3 331.9ZM853.4 323.3L860.2 321.0L870.1 324.2L863.3 326.5ZM863.3 326.5L870.1 324.2L880.0 327.5L873.1 329.7ZM860.2 321.0L867.2 318.6L877.0 321.9L870.1 324.2ZM870.1 324.2L877.0 321.9L886.9 325.2L880.0 327.5ZM867.2 318.6L874.1 316.3L884.0 319.6L877.0 321.9ZM874.1 316.3L881.1 313.9L891.0 317.2L884.0 319.6Z" fill="#2a7800" stroke="#2a7800"/><path d="M300.8 581.3L304.2 578.7L313.7 577.7L310.3 580.4ZM304.2 578.7L307.6 576.1L317.1 575.1L313.7 577.7ZM301.4 574.4L304.8 571.8L314.4 570.9L311.0 573.5ZM304.8 571.8L308.2 569.2L317.8 568.4L314.4 570.9ZM823.0 339.8L829.6 337.6L839.4 340.6L832.8 342.7ZM829.6 337.6L836.2 335.4L846.1 338.5L839.4 340.6ZM826.4 332.4L833.0 330.1L842.9 333.2L836.2 335.4ZM836.2 335.4L842.9 333.2L852.8 336.3L846.1 338.5ZM833.0 330.1L839.8 327.9L849.6 331.0L842.9 333.2ZM842.9 333.2L849.6 331.0L859.5 334.1L852.8 336.3ZM839.8 327.9L846.6 325.6L856.4 328.8L849.6 331.0ZM846.6 325.6L853.4 323.3L863.3 326.5L856.4 328.8Z" fill="#80ac00" stroke="#80ac00"/><path d="M307.6 576.1L311.0 573.5L320.5 572.6L317.1 575.1ZM311.0 573.5L314.4 570.9L323.9 570.1L320.5 572.6ZM308.2 569.2L311.6 566.7L321.2 565.9L317.8 568.4ZM311.6 566.7L315.0 564.2L324.5 563.5L321.2 565.9ZM803.4 346.2L809.9 344.0L819.7 346.8L813.2 348.9ZM809.9 344.0L816.4 341.9L826.2 344.8L819.7 346.8ZM806.5 339.0L813.1 336.8L823.0 339.8L816.4 341.9ZM816.4 341.9L823.0 339.8L832.8 342.7L826.2 344.8ZM813.1 336.8L819.7 334.6L829.6 337.6L823.0 339.8ZM819.7 334.6L826.4 332.4L836.2 335.4L829.6 337.6Z" fill="#d8e400" stroke="#d8e400"/><path d="M314.4 570.9L317.8 568.4L327.3 567.6L323.9 570.1ZM317.8 568.4L321.2 565.9L330.7 565.2L327.3 567.6ZM321.2 565.9L324.5 563.5L334.1 562.8L330.7 565.2ZM315.0 564.2L318.4 561.7L327.9 561.1L324.5 563.5ZM324.5 563.5L327.9 561.1L337.5 560.4L334.1 562.8ZM318.4 561.7L321.8 559.2L331.3 558.7L327.9 561.1ZM327.9 561.1L331.3 558.7L340.9 558.1L337.5 560.4ZM321.8 559.2L325.2 556.8L334.7 556.3L331.3 558.7ZM325.2 556.8L328.6 554.3L338.2 553.9L334.7 556.3ZM784.2 352.5L790.6 350.4L800.4 353.0L794.0 355.0ZM790.6 350.4L796.9 348.3L806.8 350.9L800.4 353.0ZM787.1 345.6L793.6 343.4L803.4 346.2L796.9 348.3ZM796.9 348.3L803.4 346.2L813.2 348.9L806.8 350.9ZM793.6 343.4L800.0 341.2L809.9 344.0L803.4 346.2ZM800.0 341.2L806.5 339.0L816.4 341.9L809.9 344.0Z" fill="#ffe800" stroke="#ffe800"/><path d="M331.3 558.7L334.7 556.3L344.3 555.8L340.9 558.1ZM334.7 556.3L338.2 553.9L347.7 553.5L344.3 555.8ZM328.6 554.3L332.1 551.9L341.6 551.5L338.2 553.9ZM338.2 553.9L341.6 551.5L351.2 551.2L347.7 553.5ZM332.1 551.9L335.5 549.5L345.1 549.2L341.6 551.5ZM341.6 551.5L345.1 549.2L354.7 548.9L351.2 551.2ZM335.5 549.5L339.0 547.0L348.6 546.8L345.1 549.2ZM339.0 547.0L342.6 544.6L352.1 544.4L348.6 546.8ZM342.6 544.6L346.1 542.2L355.7 542.1L352.1 544.4ZM759.2 360.7L765.4 358.6L775.2 360.9L769.0 362.9ZM765.4 358.6L771.6 356.6L781.4 359.0L775.2 360.9ZM761.8 354.2L768.1 352.1L777.9 354.5L771.6 356.6ZM771.6 356.6L777.9 354.5L787.7 357.0L781.4 359.0ZM768.1 352.1L774.4 349.9L784.2 352.5L777.9 354.5ZM777.9 354.5L784.2 352.5L794.0 355.0L787.7 357.0ZM774.4 349.9L780.7 347.8L790.6 350.4L784.2 352.5ZM780.7 347.8L787.1 345.6L796.9 348.3L790.6 350.4Z" fill="#ffcc00" stroke="#ffcc00"/><path d="M345.1 549.2L348.6 546.8L358.2 546.6L354.7 548.9ZM348.6 546.8L352.1 544.4L361.7 544.3L358.2 546.6ZM352.1 544.4L355.7 542.1L365.3 542.0L361.7 544.3ZM346.1 542.2L349.7 539.8L359.3 539.7L355.7 542.1ZM355.7 542.1L359.3 539.7L368.8 539.6L365.3 542.0ZM349.7 539.8L353.3 537.5L362.9 537.4L359.3 539.7ZM353.3 537.5L356.9 535.1L366.5 535.1L362.9 537.4ZM356.9 535.1L360.5 532.7L370.1 532.7L366.5 535.1ZM734.8 368.8L740.8 366.8L750.6 368.8L744.6 370.7ZM731.0 364.8L737.1 362.7L746.9 364.8L740.8 366.8ZM740.8 366.8L746.9 364.8L756.7 366.8L750.6 368.8ZM737.1 362.7L743.2 360.6L753.0 362.7L746.9 364.8ZM746.9 364.8L753.0 362.7L762.8 364.9L756.7 366.8ZM743.2 360.6L749.4 358.5L759.2 360.7L753.0 362.7ZM753.0 362.7L759.2 360.7L769.0 362.9L762.8 364.9ZM749.4 358.5L755.6 356.4L765.4 358.6L759.2 360.7ZM755.6 356.4L761.8 354.2L771.6 356.6L765.4 358.6Z" fill="#ffa800" stroke="#ffa800"/><path d="M359.3 539.7L362.9 537.4L372.4 537.3L368.8 539.6ZM362.9 537.4L366.5 535.1L376.1 535.1L372.4 537.3ZM366.5 535.1L370.1 532.7L379.7 532.8L376.1 535.1ZM360.5 532.7L364.2 530.3L373.8 530.4L370.1 532.7ZM370.1 532.7L373.8 530.4L383.4 530.5L379.7 532.8ZM364.2 530.3L367.9 528.0L377.5 528.1L373.8 530.4ZM367.9 528.0L371.6 525.7L381.2 525.8L377.5 528.1ZM371.6 525.7L375.3 523.3L384.9 523.5L381.2 525.8ZM687.9 384.9L693.6 382.9L703.4 384.2L697.7 386.2ZM693.6 382.9L699.4 380.9L709.2 382.3L703.4 384.2ZM689.6 379.5L695.4 377.4L705.2 378.9L699.4 380.9ZM699.4 380.9L705.2 378.9L715.0 380.4L709.2 382.3ZM695.4 377.4L701.3 375.3L711.1 376.9L705.2 378.9ZM705.2 378.9L711.1 376.9L720.8 378.4L715.0 380.4ZM701.3 375.3L707.1 373.2L716.9 374.9L711.1 376.9ZM711.1 376.9L716.9 374.9L726.7 376.5L720.8 378.4ZM707.1 373.2L713.1 371.1L722.8 372.9L716.9 374.9ZM716.9 374.9L722.8 372.9L732.6 374.6L726.7 376.5ZM713.1 371.1L719.0 369.0L728.8 370.8L722.8 372.9ZM722.8 372.9L728.8 370.8L738.6 372.6L732.6 374.6ZM719.0 369.0L725.0 366.9L734.8 368.8L728.8 370.8ZM728.8 370.8L734.8 368.8L744.6 370.7L738.6 372.6ZM725.0 366.9L731.0 364.8L740.8 366.8L734.8 368.8Z" fill="#ff7800" stroke="#ff7800"/><path d="M373.8 530.4L377.5 528.1L387.1 528.2L383.4 530.5ZM377.5 528.1L381.2 525.8L390.8 525.9L387.1 528.2ZM381.2 525.8L384.9 523.5L394.5 523.6L390.8 525.9ZM375.3 523.3L379.1 521.0L388.7 521.1L384.9 523.5ZM384.9 523.5L388.7 521.1L398.3 521.3L394.5 523.6ZM379.1 521.0L382.9 518.7L392.5 518.8L388.7 521.1ZM388.7 521.1L392.5 518.8L402.1 519.0L398.3 521.3ZM382.9 518.7L386.7 516.4L396.3 516.6L392.5 518.8ZM392.5 518.8L396.3 516.6L405.9 516.7L402.1 519.0ZM386.7 516.4L390.5 514.1L400.1 514.3L396.3 516.6ZM396.3 516.6L400.1 514.3L409.7 514.5L405.9 516.7ZM390.5 514.1L394.4 511.8L404.0 512.0L400.1 514.3ZM400.1 514.3L404.0 512.0L413.6 512.2L409.7 514.5ZM394.4 511.8L398.2 509.5L407.8 509.7L404.0 512.0ZM404.0 512.0L407.8 509.7L417.5 509.9L413.6 512.2ZM398.2 509.5L402.2 507.2L411.8 507.4L407.8 509.7ZM402.2 507.2L406.1 505.0L415.7 505.2L411.8 507.4ZM659.8 394.9L665.4 392.9L675.1 393.9L669.6 395.8ZM665.4 392.9L670.9 390.9L680.7 391.9L675.1 393.9ZM661.2 389.9L666.8 387.8L676.6 388.9L670.9 390.9ZM670.9 390.9L676.6 388.9L686.3 390.0L680.7 391.9ZM666.8 387.8L672.4 385.7L682.2 386.9L676.6 388.9ZM676.6 388.9L682.2 386.9L692.0 388.1L686.3 390.0ZM672.4 385.7L678.1 383.7L687.9 384.9L682.2 386.9ZM682.2 386.9L687.9 384.9L697.7 386.2L692.0 388.1ZM678.1 383.7L683.9 381.6L693.6 382.9L687.9 384.9ZM683.9 381.6L689.6 379.5L699.4 380.9L693.6 382.9Z" fill="#ff4000" stroke="#ff4000"/><path d="M407.8 509.7L411.8 507.4L421.4 507.6L417.5 509.9ZM411.8 507.4L415.7 505.2L425.3 505.4L421.4 507.6ZM406.1 505.0L410.0 502.7L419.7 502.9L415.7 505.2ZM415.7 505.2L419.7 502.9L429.3 503.1L425.3 505.4ZM410.0 502.7L414.0 500.4L423.6 500.7L419.7 502.9ZM419.7 502.9L423.6 500.7L433.3 500.9L429.3 503.1ZM414.0 500.4L418.0 498.2L427.7 498.4L423.6 500.7ZM423.6 500.7L427.7 498.4L437.3 498.6L433.3 500.9ZM418.0 498.2L422.1 496.0L431.7 496.2L427.7 498.4ZM427.7 498.4L431.7 496.2L441.3 496.4L437.3 498.6ZM422.1 496.0L426.1 493.7L435.8 493.9L431.7 496.2ZM431.7 496.2L435.8 493.9L445.4 494.1L441.3 496.4ZM426.1 493.7L430.2 491.5L439.8 491.7L435.8 493.9ZM435.8 493.9L439.8 491.7L449.5 491.9L445.4 494.1ZM430.2 491.5L434.3 489.3L444.0 489.5L439.8 491.7ZM439.8 491.7L444.0 489.5L453.6 489.6L449.5 491.9ZM434.3 489.3L438.5 487.1L448.1 487.3L444.0 489.5ZM444.0 489.5L448.1 487.3L457.7 487.4L453.6 489.6ZM438.5 487.1L442.7 484.9L452.3 485.0L448.1 487.3ZM442.7 484.9L446.8 482.7L456.5 482.8L452.3 485.0ZM446.8 482.7L451.1 480.5L460.7 480.6L456.5 482.8ZM632.6 405.0L638.0 403.0L647.7 403.6L642.3 405.5ZM628.2 402.3L633.6 400.3L643.4 401.0L638.0 403.0ZM638.0 403.0L643.4 401.0L653.1 401.6L647.7 403.6ZM633.6 400.3L639.1 398.2L648.8 398.9L643.4 401.0ZM643.4 401.0L648.8 398.9L658.6 399.7L653.1 401.6ZM639.1 398.2L644.5 396.1L654.3 396.9L648.8 398.9ZM648.8 398.9L654.3 396.9L664.0 397.7L658.6 399.7ZM644.5 396.1L650.1 394.0L659.8 394.9L654.3 396.9ZM654.3 396.9L659.8 394.9L669.6 395.8L664.0 397.7ZM650.1 394.0L655.6 392.0L665.4 392.9L659.8 394.9ZM655.6 392.0L661.2 389.9L670.9 390.9L665.4 392.9Z" fill="#ff0000" stroke="#ff0000"/><path d="M448.1 487.3L452.3 485.0L461.9 485.2L457.7 487.4ZM452.3 485.0L456.5 482.8L466.1 482.9L461.9 485.2ZM456.5 482.8L460.7 480.6L470.3 480.7L466.1 482.9ZM451.1 480.5L455.3 478.4L465.0 478.4L460.7 480.6ZM460.7 480.6L465.0 478.4L474.6 478.5L470.3 480.7ZM455.3 478.4L459.6 476.2L469.2 476.3L465.0 478.4ZM465.0 478.4L469.2 476.3L478.9 476.3L474.6 478.5ZM459.6 476.2L463.9 474.0L473.6 474.1L469.2 476.3ZM469.2 476.3L473.6 474.1L483.2 474.1L478.9 476.3ZM463.9 474.0L468.2 471.9L477.9 471.9L473.6 474.1ZM473.6 474.1L477.9 471.9L487.5 471.9L483.2 474.1ZM468.2 471.9L472.6 469.7L482.3 469.7L477.9 471.9ZM477.9 471.9L482.3 469.7L491.9 469.7L487.5 471.9ZM472.6 469.7L477.0 467.6L486.6 467.6L482.3 469.7ZM482.3 469.7L486.6 467.6L496.3 467.5L491.9 469.7ZM477.0 467.6L481.4 465.4L491.1 465.4L486.6 467.6ZM486.6 467.6L491.1 465.4L500.7 465.4L496.3 467.5ZM481.4 465.4L485.9 463.3L495.5 463.2L491.1 465.4ZM491.1 465.4L495.5 463.2L505.2 463.2L500.7 465.4ZM485.9 463.3L490.3 461.2L500.0 461.1L495.5 463.2ZM495.5 463.2L500.0 461.1L509.7 461.0L505.2 463.2ZM490.3 461.2L494.8 459.0L504.5 458.9L500.0 461.1ZM500.0 461.1L504.5 458.9L514.2 458.9L509.7 461.0ZM494.8 459.0L499.4 456.9L509.0 456.8L504.5 458.9ZM504.5 458.9L509.0 456.8L518.7 456.7L514.2 458.9ZM499.4 456.9L503.9 454.8L513.6 454.7L509.0 456.8ZM509.0 456.8L513.6 454.7L523.3 454.6L518.7 456.7ZM503.9 454.8L508.5 452.6L518.2 452.5L513.6 454.7ZM513.6 454.7L518.2 452.5L527.9 452.5L523.3 454.6ZM508.5 452.6L513.2 450.5L522.8 450.4L518.2 452.5ZM518.2 452.5L522.8 450.4L532.5 450.3L527.9 452.5ZM513.2 450.5L517.8 448.4L527.5 448.3L522.8 450.4ZM522.8 450.4L527.5 448.3L537.2 448.2L532.5 450.3ZM517.8 448.4L522.5 446.3L532.2 446.2L527.5 448.3ZM527.5 448.3L532.2 446.2L541.9 446.1L537.2 448.2ZM522.5 446.3L527.2 444.2L536.9 444.1L532.2 446.2ZM532.2 446.2L536.9 444.1L546.6 444.0L541.9 446.1ZM527.2 444.2L532.0 442.1L541.6 442.0L536.9 444.1ZM536.9 444.1L541.6 442.0L551.3 441.9L546.6 444.0ZM532.0 442.1L536.7 439.9L546.4 439.9L541.6 442.0ZM541.6 442.0L546.4 439.9L556.1 439.8L551.3 441.9ZM536.7 439.9L541.5 437.8L551.2 437.8L546.4 439.9ZM546.4 439.9L551.2 437.8L560.9 437.7L556.1 439.8ZM541.5 437.8L546.4 435.7L556.1 435.7L551.2 437.8ZM551.2 437.8L556.1 435.7L565.8 435.7L560.9 437.7ZM546.4 435.7L551.3 433.6L561.0 433.6L556.1 435.7ZM556.1 435.7L561.0 433.6L570.6 433.6L565.8 435.7ZM551.3 433.6L556.2 431.5L565.9 431.5L561.0 433.6ZM561.0 433.6L565.9 431.5L575.6 431.6L570.6 433.6ZM556.2 431.5L561.1 429.4L570.8 429.5L565.9 431.5ZM565.9 431.5L570.8 429.5L580.5 429.5L575.6 431.6ZM561.1 429.4L566.1 427.3L575.8 427.4L570.8 429.5ZM570.8 429.5L575.8 427.4L585.5 427.5L580.5 429.5ZM566.1 427.3L571.1 425.3L580.8 425.3L575.8 427.4ZM575.8 427.4L580.8 425.3L590.5 425.4L585.5 427.5ZM571.1 425.3L576.1 423.2L585.8 423.3L580.8 425.3ZM580.8 425.3L585.8 423.3L595.5 423.4L590.5 425.4ZM576.1 423.2L581.2 421.1L590.9 421.2L585.8 423.3ZM585.8 423.3L590.9 421.2L600.6 421.4L595.5 423.4ZM581.2 421.1L586.2 419.0L596.0 419.2L590.9 421.2ZM590.9 421.2L596.0 419.2L605.7 419.4L600.6 421.4ZM586.2 419.0L591.4 416.9L601.1 417.2L596.0 419.2ZM596.0 419.2L601.1 417.2L610.8 417.4L605.7 419.4ZM591.4 416.9L596.5 414.8L606.3 415.1L601.1 417.2ZM601.1 417.2L606.3 415.1L616.0 415.4L610.8 417.4ZM596.5 414.8L601.7 412.7L611.5 413.1L606.3 415.1ZM606.3 415.1L611.5 413.1L621.2 413.4L616.0 415.4ZM601.7 412.7L607.0 410.7L616.7 411.1L611.5 413.1ZM611.5 413.1L616.7 411.1L626.4 411.4L621.2 413.4ZM607.0 410.7L612.2 408.6L622.0 409.0L616.7 411.1ZM616.7 411.1L622.0 409.0L631.7 409.5L626.4 411.4ZM612.2 408.6L617.5 406.5L627.3 407.0L622.0 409.0ZM622.0 409.0L627.3 407.0L637.0 407.5L631.7 409.5ZM617.5 406.5L622.9 404.4L632.6 405.0L627.3 407.0ZM627.3 407.0L632.6 405.0L642.3 405.5L637.0 407.5ZM622.9 404.4L628.2 402.3L638.0 403.0L632.6 405.0Z" fill="#dc0000" stroke="#dc0000"/><path d="M220.0 644.8 L223.4 641.5 L226.8 638.3 L230.2 635.1 L233.6 631.9 L237.0 628.7 L240.4 625.6 L243.7 622.5 L247.1 619.5 L250.5 616.4 L253.9 613.4 L257.3 610.5 L260.7 607.5 L264.1 604.6 L267.5 601.7 L270.9 598.9 L274.3 596.0 L277.7 593.2 L281.1 590.5 L284.5 587.7 L287.8 585.0 L291.2 582.3 L294.6 579.6 L298.0 577.0 L301.4 574.4 L304.8 571.8 L308.2 569.2 L311.6 566.7 L315.0 564.2 L318.4 561.7 L321.8 559.2 L325.2 556.8 L328.6 554.3 L332.1 551.9 L335.5 549.5 L339.0 547.0 L342.6 544.6 L346.1 542.2 L349.7 539.8 L353.3 537.5 L356.9 535.1 L360.5 532.7 L364.2 530.3 L367.9 528.0 L371.6 525.7 L375.3 523.3 L379.1 521.0 L382.9 518.7 L386.7 516.4 L390.5 514.1 L394.4 511.8 L398.2 509.5 L402.2 507.2 L406.1 505.0 L410.0 502.7 L414.0 500.4 L418.0 498.2 L422.1 496.0 L426.1 493.7 L430.2 491.5 L434.3 489.3 L438.5 487.1 L442.7 484.9 L446.8 482.7 L451.1 480.5 L455.3 478.4 L459.6 476.2 L463.9 474.0 L468.2 471.9 L472.6 469.7 L477.0 467.6 L481.4 465.4 L485.9 463.3 L490.3 461.2 L494.8 459.0 L499.4 456.9 L503.9 454.8 L508.5 452.6 L513.2 450.5 L517.8 448.4 L522.5 446.3 L527.2 444.2 L532.0 442.1 L536.7 439.9 L541.5 437.8 L546.4 435.7 L551.3 433.6 L556.2 431.5 L561.1 429.4 L566.1 427.3 L571.1 425.3 L576.1 423.2 L581.2 421.1 L586.2 419.0 L591.4 416.9 L596.5 414.8 L601.7 412.7 L607.0 410.7 L612.2 408.6 L617.5 406.5 L622.9 404.4 L628.2 402.3 L633.6 400.3 L639.1 398.2 L644.5 396.1 L650.1 394.0 L655.6 392.0 L661.2 389.9 L666.8 387.8 L672.4 385.7 L678.1 383.7 L683.9 381.6 L689.6 379.5 L695.4 377.4 L701.3 375.3 L707.1 373.2 L713.1 371.1 L719.0 369.0 L725.0 366.9 L731.0 364.8 L737.1 362.7 L743.2 360.6 L749.4 358.5 L755.6 356.4 L761.8 354.2 L768.1 352.1 L774.4 349.9 L780.7 347.8 L787.1 345.6 L793.6 343.4 L800.0 341.2 L806.5 339.0 L813.1 336.8 L819.7 334.6 L826.4 332.4 L833.0 330.1 L839.8 327.9 L846.6 325.6 L853.4 323.3 L860.2 321.0 L867.2 318.6 L874.1 316.3 L881.1 313.9 L888.2 311.5 L895.3 309.1 L902.4 306.6 L909.6 304.2 L916.8 301.7 L924.1 299.2 L931.4 296.6 L938.8 294.1 L946.2 291.4 L953.7 288.8 L961.2 286.1 L968.8 283.4 L976.4 280.7 L984.0 277.9 L991.8 275.1 L999.5 272.2 L1007.3 269.3 L1015.2 266.4 L1023.1 263.4 L1031.1 260.3 L1039.1 257.2 L1047.1 254.1 L1055.0 251.0 L1063.0 247.8 L1071.0 244.6 L1091.0 259.0 L1083.0 261.2 L1075.0 263.4 L1067.0 265.7 L1059.0 268.0 L1051.0 270.4 L1043.1 272.8 L1035.1 275.3 L1027.3 277.8 L1019.4 280.3 L1011.7 282.9 L1003.9 285.4 L996.3 288.0 L988.6 290.5 L981.1 293.1 L973.5 295.7 L966.1 298.2 L958.6 300.8 L951.2 303.3 L943.9 305.9 L936.6 308.4 L929.4 310.9 L922.2 313.3 L915.0 315.8 L907.9 318.2 L900.9 320.5 L893.9 322.9 L886.9 325.2 L880.0 327.5 L873.1 329.7 L866.3 331.9 L859.5 334.1 L852.8 336.3 L846.1 338.5 L839.4 340.6 L832.8 342.7 L826.2 344.8 L819.7 346.8 L813.2 348.9 L806.8 350.9 L800.4 353.0 L794.0 355.0 L787.7 357.0 L781.4 359.0 L775.2 360.9 L769.0 362.9 L762.8 364.9 L756.7 366.8 L750.6 368.8 L744.6 370.7 L738.6 372.6 L732.6 374.6 L726.7 376.5 L720.8 378.4 L715.0 380.4 L709.2 382.3 L703.4 384.2 L697.7 386.2 L692.0 388.1 L686.3 390.0 L680.7 391.9 L675.1 393.9 L669.6 395.8 L664.0 397.7 L658.6 399.7 L653.1 401.6 L647.7 403.6 L642.3 405.5 L637.0 407.5 L631.7 409.5 L626.4 411.4 L621.2 413.4 L616.0 415.4 L610.8 417.4 L605.7 419.4 L600.6 421.4 L595.5 423.4 L590.5 425.4 L585.5 427.5 L580.5 429.5 L575.6 431.6 L570.6 433.6 L565.8 435.7 L560.9 437.7 L556.1 439.8 L551.3 441.9 L546.6 444.0 L541.9 446.1 L537.2 448.2 L532.5 450.3 L527.9 452.5 L523.3 454.6 L518.7 456.7 L514.2 458.9 L509.7 461.0 L505.2 463.2 L500.7 465.4 L496.3 467.5 L491.9 469.7 L487.5 471.9 L483.2 474.1 L478.9 476.3 L474.6 478.5 L470.3 480.7 L466.1 482.9 L461.9 485.2 L457.7 487.4 L453.6 489.6 L449.5 491.9 L445.4 494.1 L441.3 496.4 L437.3 498.6 L433.3 500.9 L429.3 503.1 L425.3 505.4 L421.4 507.6 L417.5 509.9 L413.6 512.2 L409.7 514.5 L405.9 516.7 L402.1 519.0 L398.3 521.3 L394.5 523.6 L390.8 525.9 L387.1 528.2 L383.4 530.5 L379.7 532.8 L376.1 535.1 L372.4 537.3 L368.8 539.6 L365.3 542.0 L361.7 544.3 L358.2 546.6 L354.7 548.9 L351.2 551.2 L347.7 553.5 L344.3 555.8 L340.9 558.1 L337.5 560.4 L334.1 562.8 L330.7 565.2 L327.3 567.6 L323.9 570.1 L320.5 572.6 L317.1 575.1 L313.7 577.7 L310.3 580.4 L306.9 583.1 L303.5 585.9 L300.1 588.7 L296.7 591.6 L293.3 594.6 L289.9 597.7 L286.6 600.8 L283.2 604.1 L279.8 607.4 L276.4 610.8 L273.0 614.3 L269.6 617.9 L266.2 621.6 L262.8 625.4 L259.4 629.3 L256.0 633.4 L252.6 637.5 L249.2 641.8 L245.8 646.2 L242.4 650.7 L239.0 655.4Z M223.4 641.5 L242.4 650.7 M226.8 638.3 L245.8 646.2 M230.2 635.1 L249.2 641.8 M233.6 631.9 L252.6 637.5 M237.0 628.7 L256.0 633.4 M240.4 625.6 L259.4 629.3 M243.7 622.5 L262.8 625.4 M247.1 619.5 L266.2 621.6 M250.5 616.4 L269.6 617.9 M253.9 613.4 L273.0 614.3 M257.3 610.5 L276.4 610.8 M260.7 607.5 L279.8 607.4 M264.1 604.6 L283.2 604.1 M267.5 601.7 L286.6 600.8 M270.9 598.9 L289.9 597.7 M274.3 596.0 L293.3 594.6 M277.7 593.2 L296.7 591.6 M281.1 590.5 L300.1 588.7 M284.5 587.7 L303.5 585.9 M287.8 585.0 L306.9 583.1 M291.2 582.3 L310.3 580.4 M294.6 579.6 L313.7 577.7 M298.0 577.0 L317.1 575.1 M301.4 574.4 L320.5 572.6 M304.8 571.8 L323.9 570.1 M308.2 569.2 L327.3 567.6 M311.6 566.7 L330.7 565.2 M315.0 564.2 L334.1 562.8 M318.4 561.7 L337.5 560.4 M321.8 559.2 L340.9 558.1 M325.2 556.8 L344.3 555.8 M328.6 554.3 L347.7 553.5 M332.1 551.9 L351.2 551.2 M335.5 549.5 L354.7 548.9 M339.0 547.0 L358.2 546.6 M342.6 544.6 L361.7 544.3 M346.1 542.2 L365.3 542.0 M349.7 539.8 L368.8 539.6 M353.3 537.5 L372.4 537.3 M356.9 535.1 L376.1 535.1 M360.5 532.7 L379.7 532.8 M364.2 530.3 L383.4 530.5 M367.9 528.0 L387.1 528.2 M371.6 525.7 L390.8 525.9 M375.3 523.3 L394.5 523.6 M379.1 521.0 L398.3 521.3 M382.9 518.7 L402.1 519.0 M386.7 516.4 L405.9 516.7 M390.5 514.1 L409.7 514.5 M394.4 511.8 L413.6 512.2 M398.2 509.5 L417.5 509.9 M402.2 507.2 L421.4 507.6 M406.1 505.0 L425.3 505.4 M410.0 502.7 L429.3 503.1 M414.0 500.4 L433.3 500.9 M418.0 498.2 L437.3 498.6 M422.1 496.0 L441.3 496.4 M426.1 493.7 L445.4 494.1 M430.2 491.5 L449.5 491.9 M434.3 489.3 L453.6 489.6 M438.5 487.1 L457.7 487.4 M442.7 484.9 L461.9 485.2 M446.8 482.7 L466.1 482.9 M451.1 480.5 L470.3 480.7 M455.3 478.4 L474.6 478.5 M459.6 476.2 L478.9 476.3 M463.9 474.0 L483.2 474.1 M468.2 471.9 L487.5 471.9 M472.6 469.7 L491.9 469.7 M477.0 467.6 L496.3 467.5 M481.4 465.4 L500.7 465.4 M485.9 463.3 L505.2 463.2 M490.3 461.2 L509.7 461.0 M494.8 459.0 L514.2 458.9 M499.4 456.9 L518.7 456.7 M503.9 454.8 L523.3 454.6 M508.5 452.6 L527.9 452.5 M513.2 450.5 L532.5 450.3 M517.8 448.4 L537.2 448.2 M522.5 446.3 L541.9 446.1 M527.2 444.2 L546.6 444.0 M532.0 442.1 L551.3 441.9 M536.7 439.9 L556.1 439.8 M541.5 437.8 L560.9 437.7 M546.4 435.7 L565.8 435.7 M551.3 433.6 L570.6 433.6 M556.2 431.5 L575.6 431.6 M561.1 429.4 L580.5 429.5 M566.1 427.3 L585.5 427.5 M571.1 425.3 L590.5 425.4 M576.1 423.2 L595.5 423.4 M581.2 421.1 L600.6 421.4 M586.2 419.0 L605.7 419.4 M591.4 416.9 L610.8 417.4 M596.5 414.8 L616.0 415.4 M601.7 412.7 L621.2 413.4 M607.0 410.7 L626.4 411.4 M612.2 408.6 L631.7 409.5 M617.5 406.5 L637.0 407.5 M622.9 404.4 L642.3 405.5 M628.2 402.3 L647.7 403.6 M633.6 400.3 L653.1 401.6 M639.1 398.2 L658.6 399.7 M644.5 396.1 L664.0 397.7 M650.1 394.0 L669.6 395.8 M655.6 392.0 L675.1 393.9 M661.2 389.9 L680.7 391.9 M666.8 387.8 L686.3 390.0 M672.4 385.7 L692.0 388.1 M678.1 383.7 L697.7 386.2 M683.9 381.6 L703.4 384.2 M689.6 379.5 L709.2 382.3 M695.4 377.4 L715.0 380.4 M701.3 375.3 L720.8 378.4 M707.1 373.2 L726.7 376.5 M713.1 371.1 L732.6 374.6 M719.0 369.0 L738.6 372.6 M725.0 366.9 L744.6 370.7 M731.0 364.8 L750.6 368.8 M737.1 362.7 L756.7 366.8 M743.2 360.6 L762.8 364.9 M749.4 358.5 L769.0 362.9 M755.6 356.4 L775.2 360.9 M761.8 354.2 L781.4 359.0 M768.1 352.1 L787.7 357.0 M774.4 349.9 L794.0 355.0 M780.7 347.8 L800.4 353.0 M787.1 345.6 L806.8 350.9 M793.6 343.4 L813.2 348.9 M800.0 341.2 L819.7 346.8 M806.5 339.0 L826.2 344.8 M813.1 336.8 L832.8 342.7 M819.7 334.6 L839.4 340.6 M826.4 332.4 L846.1 338.5 M833.0 330.1 L852.8 336.3 M839.8 327.9 L859.5 334.1 M846.6 325.6 L866.3 331.9 M853.4 323.3 L873.1 329.7 M860.2 321.0 L880.0 327.5 M867.2 318.6 L886.9 325.2 M874.1 316.3 L893.9 322.9 M881.1 313.9 L900.9 320.5 M888.2 311.5 L907.9 318.2 M895.3 309.1 L915.0 315.8 M902.4 306.6 L922.2 313.3 M909.6 304.2 L929.4 310.9 M916.8 301.7 L936.6 308.4 M924.1 299.2 L943.9 305.9 M931.4 296.6 L951.2 303.3 M938.8 294.1 L958.6 300.8 M946.2 291.4 L966.1 298.2 M953.7 288.8 L973.5 295.7 M961.2 286.1 L981.1 293.1 M968.8 283.4 L988.6 290.5 M976.4 280.7 L996.3 288.0 M984.0 277.9 L1003.9 285.4 M991.8 275.1 L1011.7 282.9 M999.5 272.2 L1019.4 280.3 M1007.3 269.3 L1027.3 277.8 M1015.2 266.4 L1035.1 275.3 M1023.1 263.4 L1043.1 272.8 M1031.1 260.3 L1051.0 270.4 M1039.1 257.2 L1059.0 268.0 M1047.1 254.1 L1067.0 265.7 M1055.0 251.0 L1075.0 263.4 M1063.0 247.8 L1083.0 261.2 M229.5 650.1 L232.9 646.1 L236.3 642.2 L239.7 638.4 L243.1 634.7 L246.5 631.1 L249.9 627.5 L253.3 624.0 L256.7 620.5 L260.1 617.2 L263.4 613.9 L266.8 610.6 L270.2 607.5 L273.6 604.3 L277.0 601.3 L280.4 598.3 L283.8 595.3 L287.2 592.4 L290.6 589.6 L294.0 586.8 L297.4 584.0 L300.8 581.3 L304.2 578.7 L307.6 576.1 L311.0 573.5 L314.4 570.9 L317.8 568.4 L321.2 565.9 L324.5 563.5 L327.9 561.1 L331.3 558.7 L334.7 556.3 L338.2 553.9 L341.6 551.5 L345.1 549.2 L348.6 546.8 L352.1 544.4 L355.7 542.1 L359.3 539.7 L362.9 537.4 L366.5 535.1 L370.1 532.7 L373.8 530.4 L377.5 528.1 L381.2 525.8 L384.9 523.5 L388.7 521.1 L392.5 518.8 L396.3 516.6 L400.1 514.3 L404.0 512.0 L407.8 509.7 L411.8 507.4 L415.7 505.2 L419.7 502.9 L423.6 500.7 L427.7 498.4 L431.7 496.2 L435.8 493.9 L439.8 491.7 L444.0 489.5 L448.1 487.3 L452.3 485.0 L456.5 482.8 L460.7 480.6 L465.0 478.4 L469.2 476.3 L473.6 474.1 L477.9 471.9 L482.3 469.7 L486.6 467.6 L491.1 465.4 L495.5 463.2 L500.0 461.1 L504.5 458.9 L509.0 456.8 L513.6 454.7 L518.2 452.5 L522.8 450.4 L527.5 448.3 L532.2 446.2 L536.9 444.1 L541.6 442.0 L546.4 439.9 L551.2 437.8 L556.1 435.7 L561.0 433.6 L565.9 431.5 L570.8 429.5 L575.8 427.4 L580.8 425.3 L585.8 423.3 L590.9 421.2 L596.0 419.2 L601.1 417.2 L606.3 415.1 L611.5 413.1 L616.7 411.1 L622.0 409.0 L627.3 407.0 L632.6 405.0 L638.0 403.0 L643.4 401.0 L648.8 398.9 L654.3 396.9 L659.8 394.9 L665.4 392.9 L670.9 390.9 L676.6 388.9 L682.2 386.9 L687.9 384.9 L693.6 382.9 L699.4 380.9 L705.2 378.9 L711.1 376.9 L716.9 374.9 L722.8 372.9 L728.8 370.8 L734.8 368.8 L740.8 366.8 L746.9 364.8 L753.0 362.7 L759.2 360.7 L765.4 358.6 L771.6 356.6 L777.9 354.5 L784.2 352.5 L790.6 350.4 L796.9 348.3 L803.4 346.2 L809.9 344.0 L816.4 341.9 L823.0 339.8 L829.6 337.6 L836.2 335.4 L842.9 333.2 L849.6 331.0 L856.4 328.8 L863.3 326.5 L870.1 324.2 L877.0 321.9 L884.0 319.6 L891.0 317.2 L898.1 314.8 L905.1 312.4 L912.3 310.0 L919.5 307.5 L926.7 305.0 L934.0 302.5 L941.3 300.0 L948.7 297.4 L956.1 294.8 L963.6 292.2 L971.1 289.6 L978.7 287.0 L986.3 284.3 L994.0 281.7 L1001.7 279.0 L1009.5 276.3 L1017.3 273.5 L1025.2 270.8 L1033.1 268.1 L1041.1 265.3 L1049.1 262.6 L1057.0 259.9 L1065.0 257.2 L1073.0 254.5 L1081.0 251.8" fill="none" stroke="#000" stroke-width="0.8"/><clipPath id="cpl"><path d="M252.3 654.0 L268.9 646.1 L270.6 675.0 L267.0 706.0 L262.8 751.7 L261.0 797.0 L254.9 805.8 L239.2 814.5 L237.5 762.0 L236.6 737.7 L241.0 696.0 L246.2 683.6Z"/></clipPath><g clip-path="url(#cpl)"><path d="M252.3 654.0 L268.9 646.1 L270.6 675.0 L267.0 706.0 L262.8 751.7 L261.0 797.0 L254.9 805.8 L239.2 814.5 L237.5 762.0 L236.6 737.7 L241.0 696.0 L246.2 683.6Z" fill="#e2e2e2" stroke="none"/><path d="M232.3 642.1 L233.0 645.4 L232.2 648.6 L233.1 651.9 L232.6 655.1 L232.7 658.4 L232.9 661.6 L232.6 664.9 L232.4 668.1 L232.2 671.4 L232.1 674.6 L232.9 677.9 L232.5 681.1 L232.2 684.4 L233.1 687.6 L232.3 690.9 L232.5 694.1 L232.4 697.4 L232.8 700.6 L232.7 703.9 L232.7 707.1 L232.3 710.4 L232.3 713.6 L232.3 716.9 L232.4 720.1 L232.2 723.4 L232.2 726.6 L233.2 729.9 L233.2 733.1 L232.2 736.4 L232.0 739.6 L232.2 742.9 L232.8 746.1 L232.9 749.4 L232.0 752.6 L232.7 755.9 L232.0 759.1 L232.6 762.4 L232.8 765.6 L233.2 768.9 L232.3 772.1 L233.0 775.4 L233.0 778.6 L233.1 781.9 L232.0 785.1 L232.6 788.4 L233.2 791.6 L232.5 794.9 L233.0 798.1 L232.7 801.4 L232.9 804.6 L232.6 807.9 L232.0 811.1 L232.1 814.4 L232.1 817.6 M235.3 642.1 L236.2 645.4 L235.8 648.6 L236.0 651.9 L235.7 655.1 L235.8 658.4 L236.0 661.6 L236.1 664.9 L236.1 668.1 L236.0 671.4 L235.1 674.6 L235.4 677.9 L235.0 681.1 L235.7 684.4 L236.0 687.6 L235.1 690.9 L235.2 694.1 L235.4 697.4 L235.3 700.6 L236.0 703.9 L235.4 707.1 L235.8 710.4 L235.6 713.6 L235.7 716.9 L236.1 720.1 L236.1 723.4 L235.1 726.6 L236.0 729.9 L235.4 733.1 L235.1 736.4 L235.5 739.6 L235.6 742.9 L236.2 746.1 L235.4 749.4 L235.0 752.6 L236.0 755.9 L235.1 759.1 L235.6 762.4 L236.0 765.6 L235.6 768.9 L235.5 772.1 L236.0 775.4 L235.0 778.6 L235.7 781.9 L235.5 785.1 L236.2 788.4 L236.0 791.6 L235.1 794.9 L235.2 798.1 L235.5 801.4 L235.8 804.6 L235.4 807.9 L235.4 811.1 L236.1 814.4 L236.1 817.6 M238.5 642.1 L239.1 645.4 L238.4 648.6 L238.1 651.9 L238.6 655.1 L238.8 658.4 L239.1 661.6 L239.2 664.9 L238.9 668.1 L238.9 671.4 L238.9 674.6 L238.8 677.9 L238.9 681.1 L239.2 684.4 L238.4 687.6 L238.1 690.9 L238.3 694.1 L238.3 697.4 L238.4 700.6 L239.0 703.9 L238.1 707.1 L238.5 710.4 L239.0 713.6 L238.3 716.9 L238.1 720.1 L238.3 723.4 L238.1 726.6 L239.0 729.9 L238.2 733.1 L238.2 736.4 L239.0 739.6 L239.0 742.9 L238.7 746.1 L239.1 749.4 L238.1 752.6 L239.2 755.9 L238.7 759.1 L238.4 762.4 L239.0 765.6 L238.8 768.9 L239.2 772.1 L238.1 775.4 L238.7 778.6 L238.6 781.9 L238.8 785.1 L238.3 788.4 L238.0 791.6 L238.7 794.9 L238.4 798.1 L239.1 801.4 L238.6 804.6 L238.5 807.9 L238.8 811.1 L238.6 814.4 L239.2 817.6 M241.9 642.1 L241.6 645.4 L241.3 648.6 L241.7 651.9 L241.9 655.1 L241.9 658.4 L242.2 661.6 L241.3 664.9 L241.5 668.1 L241.5 671.4 L241.4 674.6 L241.4 677.9 L241.6 681.1 L241.7 684.4 L241.3 687.6 L241.2 690.9 L241.4 694.1 L241.2 697.4 L241.4 700.6 L241.8 703.9 L241.7 707.1 L242.2 710.4 L241.7 713.6 L241.7 716.9 L241.8 720.1 L241.9 723.4 L241.7 726.6 L241.7 729.9 L241.7 733.1 L241.4 736.4 L241.9 739.6 L241.7 742.9 L241.4 746.1 L241.3 749.4 L241.1 752.6 L241.4 755.9 L241.0 759.1 L241.2 762.4 L241.1 765.6 L241.3 768.9 L241.4 772.1 L241.7 775.4 L241.9 778.6 L241.7 781.9 L241.2 785.1 L242.1 788.4 L241.9 791.6 L241.6 794.9 L241.8 798.1 L241.6 801.4 L241.2 804.6 L241.8 807.9 L242.2 811.1 L241.9 814.4 L241.2 817.6 M244.1 642.1 L245.1 645.4 L245.1 648.6 L244.9 651.9 L244.9 655.1 L244.2 658.4 L245.0 661.6 L244.2 664.9 L244.2 668.1 L244.5 671.4 L244.0 674.6 L245.0 677.9 L244.2 681.1 L244.9 684.4 L244.7 687.6 L244.9 690.9 L244.7 694.1 L245.2 697.4 L244.5 700.6 L244.6 703.9 L244.4 707.1 L244.9 710.4 L244.4 713.6 L245.0 716.9 L244.1 720.1 L244.3 723.4 L244.5 726.6 L244.2 729.9 L244.2 733.1 L245.0 736.4 L244.4 739.6 L244.3 742.9 L245.0 746.1 L244.7 749.4 L244.8 752.6 L245.1 755.9 L244.9 759.1 L244.3 762.4 L244.0 765.6 L244.7 768.9 L244.8 772.1 L245.0 775.4 L244.2 778.6 L244.8 781.9 L245.1 785.1 L244.3 788.4 L244.4 791.6 L244.5 794.9 L244.7 798.1 L245.2 801.4 L244.7 804.6 L245.1 807.9 L244.8 811.1 L244.6 814.4 L244.4 817.6 M247.4 642.1 L247.9 645.4 L247.2 648.6 L247.2 651.9 L247.3 655.1 L247.8 658.4 L247.4 661.6 L247.2 664.9 L247.4 668.1 L247.1 671.4 L247.5 674.6 L248.0 677.9 L247.5 681.1 L247.5 684.4 L247.0 687.6 L247.3 690.9 L247.1 694.1 L247.1 697.4 L248.0 700.6 L247.9 703.9 L248.0 707.1 L247.2 710.4 L247.4 713.6 L248.1 716.9 L247.5 720.1 L248.1 723.4 L248.2 726.6 L247.0 729.9 L247.5 733.1 L247.7 736.4 L247.4 739.6 L247.5 742.9 L247.4 746.1 L247.3 749.4 L247.0 752.6 L247.9 755.9 L248.2 759.1 L247.0 762.4 L248.0 765.6 L247.7 768.9 L247.0 772.1 L247.1 775.4 L247.6 778.6 L247.1 781.9 L247.4 785.1 L247.3 788.4 L248.2 791.6 L247.6 794.9 L247.3 798.1 L248.1 801.4 L248.2 804.6 L247.9 807.9 L247.2 811.1 L248.1 814.4 L247.5 817.6 M250.9 642.1 L250.9 645.4 L250.8 648.6 L250.9 651.9 L251.0 655.1 L250.6 658.4 L250.6 661.6 L250.1 664.9 L250.4 668.1 L251.1 671.4 L250.3 674.6 L250.9 677.9 L251.0 681.1 L250.2 684.4 L250.9 687.6 L250.8 690.9 L251.2 694.1 L250.5 697.4 L250.9 700.6 L251.0 703.9 L250.5 707.1 L250.3 710.4 L250.4 713.6 L250.8 716.9 L250.3 720.1 L251.0 723.4 L250.4 726.6 L250.9 729.9 L250.4 733.1 L250.6 736.4 L251.0 739.6 L250.6 742.9 L250.7 746.1 L250.4 749.4 L250.6 752.6 L250.1 755.9 L250.6 759.1 L250.5 762.4 L250.4 765.6 L250.2 768.9 L250.4 772.1 L250.4 775.4 L250.4 778.6 L251.0 781.9 L251.1 785.1 L251.1 788.4 L250.5 791.6 L251.1 794.9 L250.7 798.1 L251.2 801.4 L250.1 804.6 L250.9 807.9 L250.7 811.1 L250.6 814.4 L250.9 817.6 M254.0 642.1 L254.0 645.4 L253.4 648.6 L253.5 651.9 L253.7 655.1 L253.1 658.4 L254.0 661.6 L253.7 664.9 L253.5 668.1 L253.8 671.4 L254.1 674.6 L254.0 677.9 L253.8 681.1 L253.2 684.4 L254.2 687.6 L253.5 690.9 L254.1 694.1 L253.6 697.4 L253.8 700.6 L254.1 703.9 L253.1 707.1 L253.4 710.4 L253.2 713.6 L253.1 716.9 L253.4 720.1 L254.1 723.4 L253.3 726.6 L253.1 729.9 L254.1 733.1 L253.6 736.4 L253.6 739.6 L253.8 742.9 L254.0 746.1 L253.3 749.4 L253.2 752.6 L253.5 755.9 L254.0 759.1 L254.1 762.4 L253.2 765.6 L253.8 768.9 L253.5 772.1 L254.1 775.4 L253.4 778.6 L253.3 781.9 L253.0 785.1 L254.0 788.4 L253.2 791.6 L253.3 794.9 L253.3 798.1 L254.1 801.4 L253.1 804.6 L253.4 807.9 L253.8 811.1 L253.2 814.4 L253.7 817.6 M256.5 642.1 L256.0 645.4 L256.7 648.6 L256.4 651.9 L256.3 655.1 L257.2 658.4 L257.0 661.6 L256.5 664.9 L256.4 668.1 L256.0 671.4 L256.9 674.6 L256.3 677.9 L256.6 681.1 L256.8 684.4 L256.9 687.6 L256.2 690.9 L256.1 694.1 L256.9 697.4 L256.1 700.6 L256.5 703.9 L256.0 707.1 L256.2 710.4 L256.2 713.6 L257.0 716.9 L256.9 720.1 L256.3 723.4 L256.7 726.6 L256.6 729.9 L256.1 733.1 L256.4 736.4 L256.9 739.6 L256.2 742.9 L256.3 746.1 L256.4 749.4 L256.0 752.6 L256.9 755.9 L256.5 759.1 L256.8 762.4 L256.6 765.6 L256.9 768.9 L256.8 772.1 L256.5 775.4 L256.1 778.6 L256.5 781.9 L256.0 785.1 L256.1 788.4 L257.0 791.6 L256.6 794.9 L256.9 798.1 L256.9 801.4 L256.6 804.6 L256.9 807.9 L257.1 811.1 L257.1 814.4 L256.3 817.6 M260.1 642.1 L259.6 645.4 L259.3 648.6 L259.5 651.9 L259.7 655.1 L260.1 658.4 L260.1 661.6 L259.7 664.9 L260.0 668.1 L259.6 671.4 L259.1 674.6 L259.5 677.9 L259.8 681.1 L259.9 684.4 L259.8 687.6 L259.0 690.9 L259.8 694.1 L260.2 697.4 L259.3 700.6 L259.9 703.9 L259.2 707.1 L259.9 710.4 L260.1 713.6 L259.2 716.9 L260.0 720.1 L259.4 723.4 L260.1 726.6 L259.0 729.9 L259.9 733.1 L259.3 736.4 L259.4 739.6 L259.2 742.9 L260.0 746.1 L259.2 749.4 L259.4 752.6 L259.4 755.9 L259.3 759.1 L259.3 762.4 L259.9 765.6 L259.7 768.9 L259.9 772.1 L259.2 775.4 L259.7 778.6 L259.1 781.9 L259.1 785.1 L259.5 788.4 L259.7 791.6 L259.9 794.9 L259.7 798.1 L259.1 801.4 L259.5 804.6 L259.9 807.9 L260.1 811.1 L260.1 814.4 L259.6 817.6 M263.1 642.1 L262.3 645.4 L262.7 648.6 L262.9 651.9 L262.0 655.1 L262.1 658.4 L262.4 661.6 L262.3 664.9 L262.2 668.1 L262.7 671.4 L262.8 674.6 L262.6 677.9 L262.8 681.1 L262.4 684.4 L262.4 687.6 L262.2 690.9 L262.3 694.1 L262.6 697.4 L263.0 700.6 L262.6 703.9 L263.1 707.1 L263.1 710.4 L262.9 713.6 L262.9 716.9 L262.0 720.1 L262.8 723.4 L262.0 726.6 L262.9 729.9 L262.5 733.1 L262.1 736.4 L263.1 739.6 L262.2 742.9 L263.2 746.1 L262.9 749.4 L263.1 752.6 L262.8 755.9 L262.4 759.1 L262.8 762.4 L262.6 765.6 L262.9 768.9 L263.1 772.1 L262.1 775.4 L262.2 778.6 L262.5 781.9 L262.0 785.1 L262.4 788.4 L262.5 791.6 L262.2 794.9 L262.1 798.1 L262.8 801.4 L262.3 804.6 L262.8 807.9 L262.5 811.1 L263.1 814.4 L262.4 817.6 M265.6 642.1 L265.3 645.4 L266.1 648.6 L265.3 651.9 L265.8 655.1 L265.4 658.4 L265.8 661.6 L265.7 664.9 L265.9 668.1 L265.8 671.4 L265.5 674.6 L265.5 677.9 L265.2 681.1 L265.1 684.4 L265.2 687.6 L266.1 690.9 L265.8 694.1 L266.1 697.4 L265.7 700.6 L265.3 703.9 L265.0 707.1 L265.6 710.4 L266.2 713.6 L266.0 716.9 L265.1 720.1 L265.4 723.4 L265.2 726.6 L265.3 729.9 L265.8 733.1 L265.4 736.4 L265.6 739.6 L265.3 742.9 L265.5 746.1 L265.5 749.4 L265.7 752.6 L265.1 755.9 L266.2 759.1 L265.2 762.4 L265.1 765.6 L266.1 768.9 L265.4 772.1 L265.0 775.4 L265.3 778.6 L266.0 781.9 L265.9 785.1 L265.8 788.4 L266.0 791.6 L265.6 794.9 L266.1 798.1 L265.3 801.4 L265.6 804.6 L266.0 807.9 L265.7 811.1 L265.3 814.4 L265.4 817.6 M269.0 642.1 L268.6 645.4 L268.4 648.6 L268.7 651.9 L268.2 655.1 L268.9 658.4 L268.4 661.6 L268.6 664.9 L268.4 668.1 L269.0 671.4 L268.2 674.6 L269.0 677.9 L268.8 681.1 L268.2 684.4 L268.2 687.6 L268.3 690.9 L268.5 694.1 L269.1 697.4 L268.9 700.6 L268.3 703.9 L268.6 707.1 L268.1 710.4 L268.9 713.6 L268.9 716.9 L268.8 720.1 L268.7 723.4 L268.1 726.6 L268.6 729.9 L268.7 733.1 L268.7 736.4 L269.1 739.6 L268.4 742.9 L268.3 746.1 L268.5 749.4 L268.7 752.6 L269.0 755.9 L268.9 759.1 L268.6 762.4 L268.5 765.6 L268.9 768.9 L268.4 772.1 L268.5 775.4 L268.0 778.6 L268.6 781.9 L268.2 785.1 L269.2 788.4 L268.1 791.6 L268.0 794.9 L268.6 798.1 L269.2 801.4 L268.3 804.6 L268.2 807.9 L268.1 811.1 L268.0 814.4 L268.7 817.6 M271.4 642.1 L272.0 645.4 L271.3 648.6 L271.7 651.9 L271.1 655.1 L271.4 658.4 L272.1 661.6 L271.7 664.9 L271.6 668.1 L272.1 671.4 L271.4 674.6 L271.1 677.9 L271.5 681.1 L271.7 684.4 L272.0 687.6 L271.4 690.9 L271.6 694.1 L272.1 697.4 L271.8 700.6 L271.3 703.9 L272.1 707.1 L271.7 710.4 L272.0 713.6 L272.0 716.9 L271.8 720.1 L271.4 723.4 L271.8 726.6 L271.1 729.9 L271.8 733.1 L271.6 736.4 L271.4 739.6 L271.5 742.9 L271.3 746.1 L271.6 749.4 L271.5 752.6 L271.6 755.9 L271.0 759.1 L271.1 762.4 L272.0 765.6 L271.2 768.9 L271.4 772.1 L271.8 775.4 L271.5 778.6 L271.5 781.9 L271.0 785.1 L271.5 788.4 L271.7 791.6 L271.5 794.9 L271.5 798.1 L271.2 801.4 L271.5 804.6 L271.1 807.9 L271.3 811.1 L271.0 814.4 L271.2 817.6 M232.6 641.1 L235.6 642.5 L238.6 641.0 L241.6 639.7 L244.6 640.0 L247.6 638.5 L250.6 638.9 L253.6 637.9 L256.6 637.1 L259.6 637.7 L262.6 636.5 L265.6 636.6 L268.6 634.4 L271.6 634.0 L274.6 634.1 M232.6 648.9 L235.6 647.5 L238.6 646.4 L241.6 647.6 L244.6 645.8 L247.6 644.4 L250.6 645.5 L253.6 644.0 L256.6 644.4 L259.6 642.3 L262.6 642.0 L265.6 643.0 L268.6 641.7 L271.6 640.6 L274.6 641.1 M232.6 655.5 L235.6 653.7 L238.6 653.4 L241.6 654.2 L244.6 653.7 L247.6 652.6 L250.6 651.6 L253.6 651.9 L256.6 650.7 L259.6 650.8 L262.6 649.6 L265.6 647.8 L268.6 648.8 L271.6 647.4 L274.6 646.3 M232.6 661.0 L235.6 660.5 L238.6 660.5 L241.6 658.7 L244.6 658.9 L247.6 658.0 L250.6 657.0 L253.6 657.4 L256.6 656.5 L259.6 657.1 L262.6 655.7 L265.6 654.1 L268.6 653.4 L271.6 654.0 L274.6 653.9 M232.6 667.9 L235.6 667.6 L238.6 667.6 L241.6 666.7 L244.6 666.0 L247.6 666.0 L250.6 663.7 L253.6 663.1 L256.6 664.4 L259.6 663.4 L262.6 663.2 L265.6 661.6 L268.6 660.7 L271.6 661.4 L274.6 660.0 M232.6 674.4 L235.6 673.8 L238.6 673.3 L241.6 671.7 L244.6 671.4 L247.6 671.9 L250.6 671.5 L253.6 671.3 L256.6 670.0 L259.6 668.4 L262.6 669.1 L265.6 667.2 L268.6 667.5 L271.6 666.1 L274.6 665.7 M232.6 682.0 L235.6 680.6 L238.6 680.5 L241.6 678.5 L244.6 678.6 L247.6 677.8 L250.6 678.6 L253.6 677.5 L256.6 677.1 L259.6 676.1 L262.6 674.1 L265.6 675.2 L268.6 674.4 L271.6 673.8 L274.6 672.5 M232.6 687.1 L235.6 687.0 L238.6 686.2 L241.6 684.9 L244.6 685.9 L247.6 685.0 L250.6 683.2 L253.6 683.7 L256.6 683.9 L259.6 682.3 L262.6 680.5 L265.6 682.1 L268.6 680.8 L271.6 679.8 L274.6 680.3 M232.6 694.0 L235.6 692.8 L238.6 691.7 L241.6 693.0 L244.6 690.9 L247.6 691.8 L250.6 689.5 L253.6 690.2 L256.6 688.2 L259.6 689.2 L262.6 686.9 L265.6 688.5 L268.6 687.1 L271.6 687.0 L274.6 686.7 M232.6 700.8 L235.6 700.1 L238.6 700.4 L241.6 699.3 L244.6 698.9 L247.6 697.6 L250.6 698.2 L253.6 696.6 L256.6 694.9 L259.6 694.1 L262.6 695.4 L265.6 693.0 L268.6 693.6 L271.6 692.8 L274.6 693.0 M232.6 706.8 L235.6 705.7 L238.6 705.1 L241.6 704.4 L244.6 704.7 L247.6 703.1 L250.6 703.3 L253.6 702.3 L256.6 701.4 L259.6 702.3 L262.6 701.8 L265.6 701.1 L268.6 699.6 L271.6 699.2 L274.6 699.2 M232.6 713.9 L235.6 713.1 L238.6 711.8 L241.6 711.2 L244.6 711.3 L247.6 711.3 L250.6 709.7 L253.6 709.6 L256.6 710.0 L259.6 707.9 L262.6 708.3 L265.6 707.2 L268.6 706.1 L271.6 705.8 L274.6 704.2 M232.6 720.3 L235.6 720.3 L238.6 717.9 L241.6 718.7 L244.6 716.6 L247.6 716.2 L250.6 716.8 L253.6 716.0 L256.6 714.6 L259.6 714.3 L262.6 713.2 L265.6 714.0 L268.6 713.3 L271.6 713.4 L274.6 712.2 M232.6 727.6 L235.6 726.7 L238.6 725.6 L241.6 724.9 L244.6 723.2 L247.6 722.8 L250.6 723.2 L253.6 722.1 L256.6 720.9 L259.6 721.9 L262.6 720.3 L265.6 719.0 L268.6 718.5 L271.6 717.7 L274.6 717.5 M232.6 733.2 L235.6 732.5 L238.6 731.2 L241.6 730.4 L244.6 730.6 L247.6 730.4 L250.6 729.5 L253.6 728.9 L256.6 729.3 L259.6 728.5 L262.6 727.7 L265.6 726.3 L268.6 726.1 L271.6 725.8 L274.6 724.5 M232.6 738.5 L235.6 739.4 L238.6 739.3 L241.6 737.3 L244.6 737.9 L247.6 737.1 L250.6 736.3 L253.6 734.3 L256.6 733.6 L259.6 734.2 L262.6 733.7 L265.6 732.1 L268.6 733.5 L271.6 731.2 L274.6 731.8 M232.6 745.9 L235.6 745.4 L238.6 745.7 L241.6 745.4 L244.6 742.6 L247.6 743.7 L250.6 742.9 L253.6 742.0 L256.6 741.0 L259.6 740.7 L262.6 739.6 L265.6 740.5 L268.6 738.0 L271.6 737.5 L274.6 738.2 M232.6 752.5 L235.6 752.3 L238.6 751.7 L241.6 751.3 L244.6 749.3 L247.6 750.1 L250.6 748.6 L253.6 748.9 L256.6 747.4 L259.6 748.0 L262.6 747.4 L265.6 746.3 L268.6 744.8 L271.6 744.6 L274.6 743.9 M232.6 758.3 L235.6 757.5 L238.6 758.2 L241.6 757.2 L244.6 755.7 L247.6 756.4 L250.6 755.7 L253.6 755.0 L256.6 753.4 L259.6 753.6 L262.6 753.1 L265.6 751.6 L268.6 751.3 L271.6 752.5 L274.6 751.8 M232.6 766.5 L235.6 765.0 L238.6 765.0 L241.6 762.9 L244.6 763.0 L247.6 763.1 L250.6 761.5 L253.6 762.2 L256.6 761.5 L259.6 759.7 L262.6 758.5 L265.6 759.3 L268.6 757.8 L271.6 758.4 L274.6 757.3 M232.6 773.0 L235.6 770.5 L238.6 770.8 L241.6 771.2 L244.6 770.5 L247.6 769.9 L250.6 767.5 L253.6 767.8 L256.6 767.5 L259.6 766.8 L262.6 764.9 L265.6 766.1 L268.6 765.5 L271.6 764.3 L274.6 762.9 M232.6 777.8 L235.6 776.8 L238.6 777.5 L241.6 777.3 L244.6 776.6 L247.6 775.7 L250.6 774.8 L253.6 774.9 L256.6 773.9 L259.6 773.4 L262.6 771.6 L265.6 773.1 L268.6 770.2 L271.6 771.2 L274.6 770.7 M232.6 784.9 L235.6 785.0 L238.6 785.0 L241.6 783.9 L244.6 783.4 L247.6 781.4 L250.6 781.8 L253.6 780.2 L256.6 780.6 L259.6 780.5 L262.6 778.8 L265.6 777.8 L268.6 778.9 L271.6 776.7 L274.6 776.2 M232.6 792.8 L235.6 792.1 L238.6 791.2 L241.6 788.9 L244.6 789.9 L247.6 788.4 L250.6 787.8 L253.6 786.9 L256.6 786.3 L259.6 785.5 L262.6 785.2 L265.6 783.9 L268.6 784.2 L271.6 783.8 L274.6 784.4 M232.6 797.4 L235.6 798.0 L238.6 796.3 L241.6 795.8 L244.6 796.7 L247.6 795.2 L250.6 795.3 L253.6 795.0 L256.6 793.4 L259.6 793.5 L262.6 793.1 L265.6 791.3 L268.6 790.0 L271.6 790.3 L274.6 789.2 M232.6 805.5 L235.6 805.1 L238.6 802.3 L241.6 802.7 L244.6 801.5 L247.6 801.6 L250.6 800.0 L253.6 800.0 L256.6 798.9 L259.6 799.0 L262.6 797.5 L265.6 798.4 L268.6 798.4 L271.6 797.7 L274.6 796.2 M232.6 810.2 L235.6 811.3 L238.6 810.0 L241.6 808.6 L244.6 809.0 L247.6 808.8 L250.6 807.1 L253.6 807.4 L256.6 805.9 L259.6 806.4 L262.6 805.3 L265.6 805.3 L268.6 803.3 L271.6 803.9 L274.6 802.2 M232.6 817.5 L235.6 817.9 L238.6 816.8 L241.6 816.6 L244.6 815.5 L247.6 814.9 L250.6 815.0 L253.6 812.7 L256.6 813.6 L259.6 812.5 L262.6 812.5 L265.6 812.2 L268.6 809.9 L271.6 810.8 L274.6 808.5" fill="none" stroke="#1a1a1a" stroke-width="0.6"/></g><path d="M252.3 654.0 L268.9 646.1 L270.6 675.0 L267.0 706.0 L262.8 751.7 L261.0 797.0 L254.9 805.8 L239.2 814.5 L237.5 762.0 L236.6 737.7 L241.0 696.0 L246.2 683.6Z" fill="none" stroke="#000" stroke-width="0.9"/></g><rect x="654" y="377" width="32" height="16.5" fill="#fff"/><text x="657.3" y="388.5" font-family="Liberation Sans" font-size="12.4" fill="#222">RM7</text><rect x="782" y="461.6" width="25" height="15.2" fill="#dcdcdc"/><text x="783.3" y="472.3" font-family="Liberation Sans" font-size="9.8" fill="#333">AM1</text></svg>
</body></html>
